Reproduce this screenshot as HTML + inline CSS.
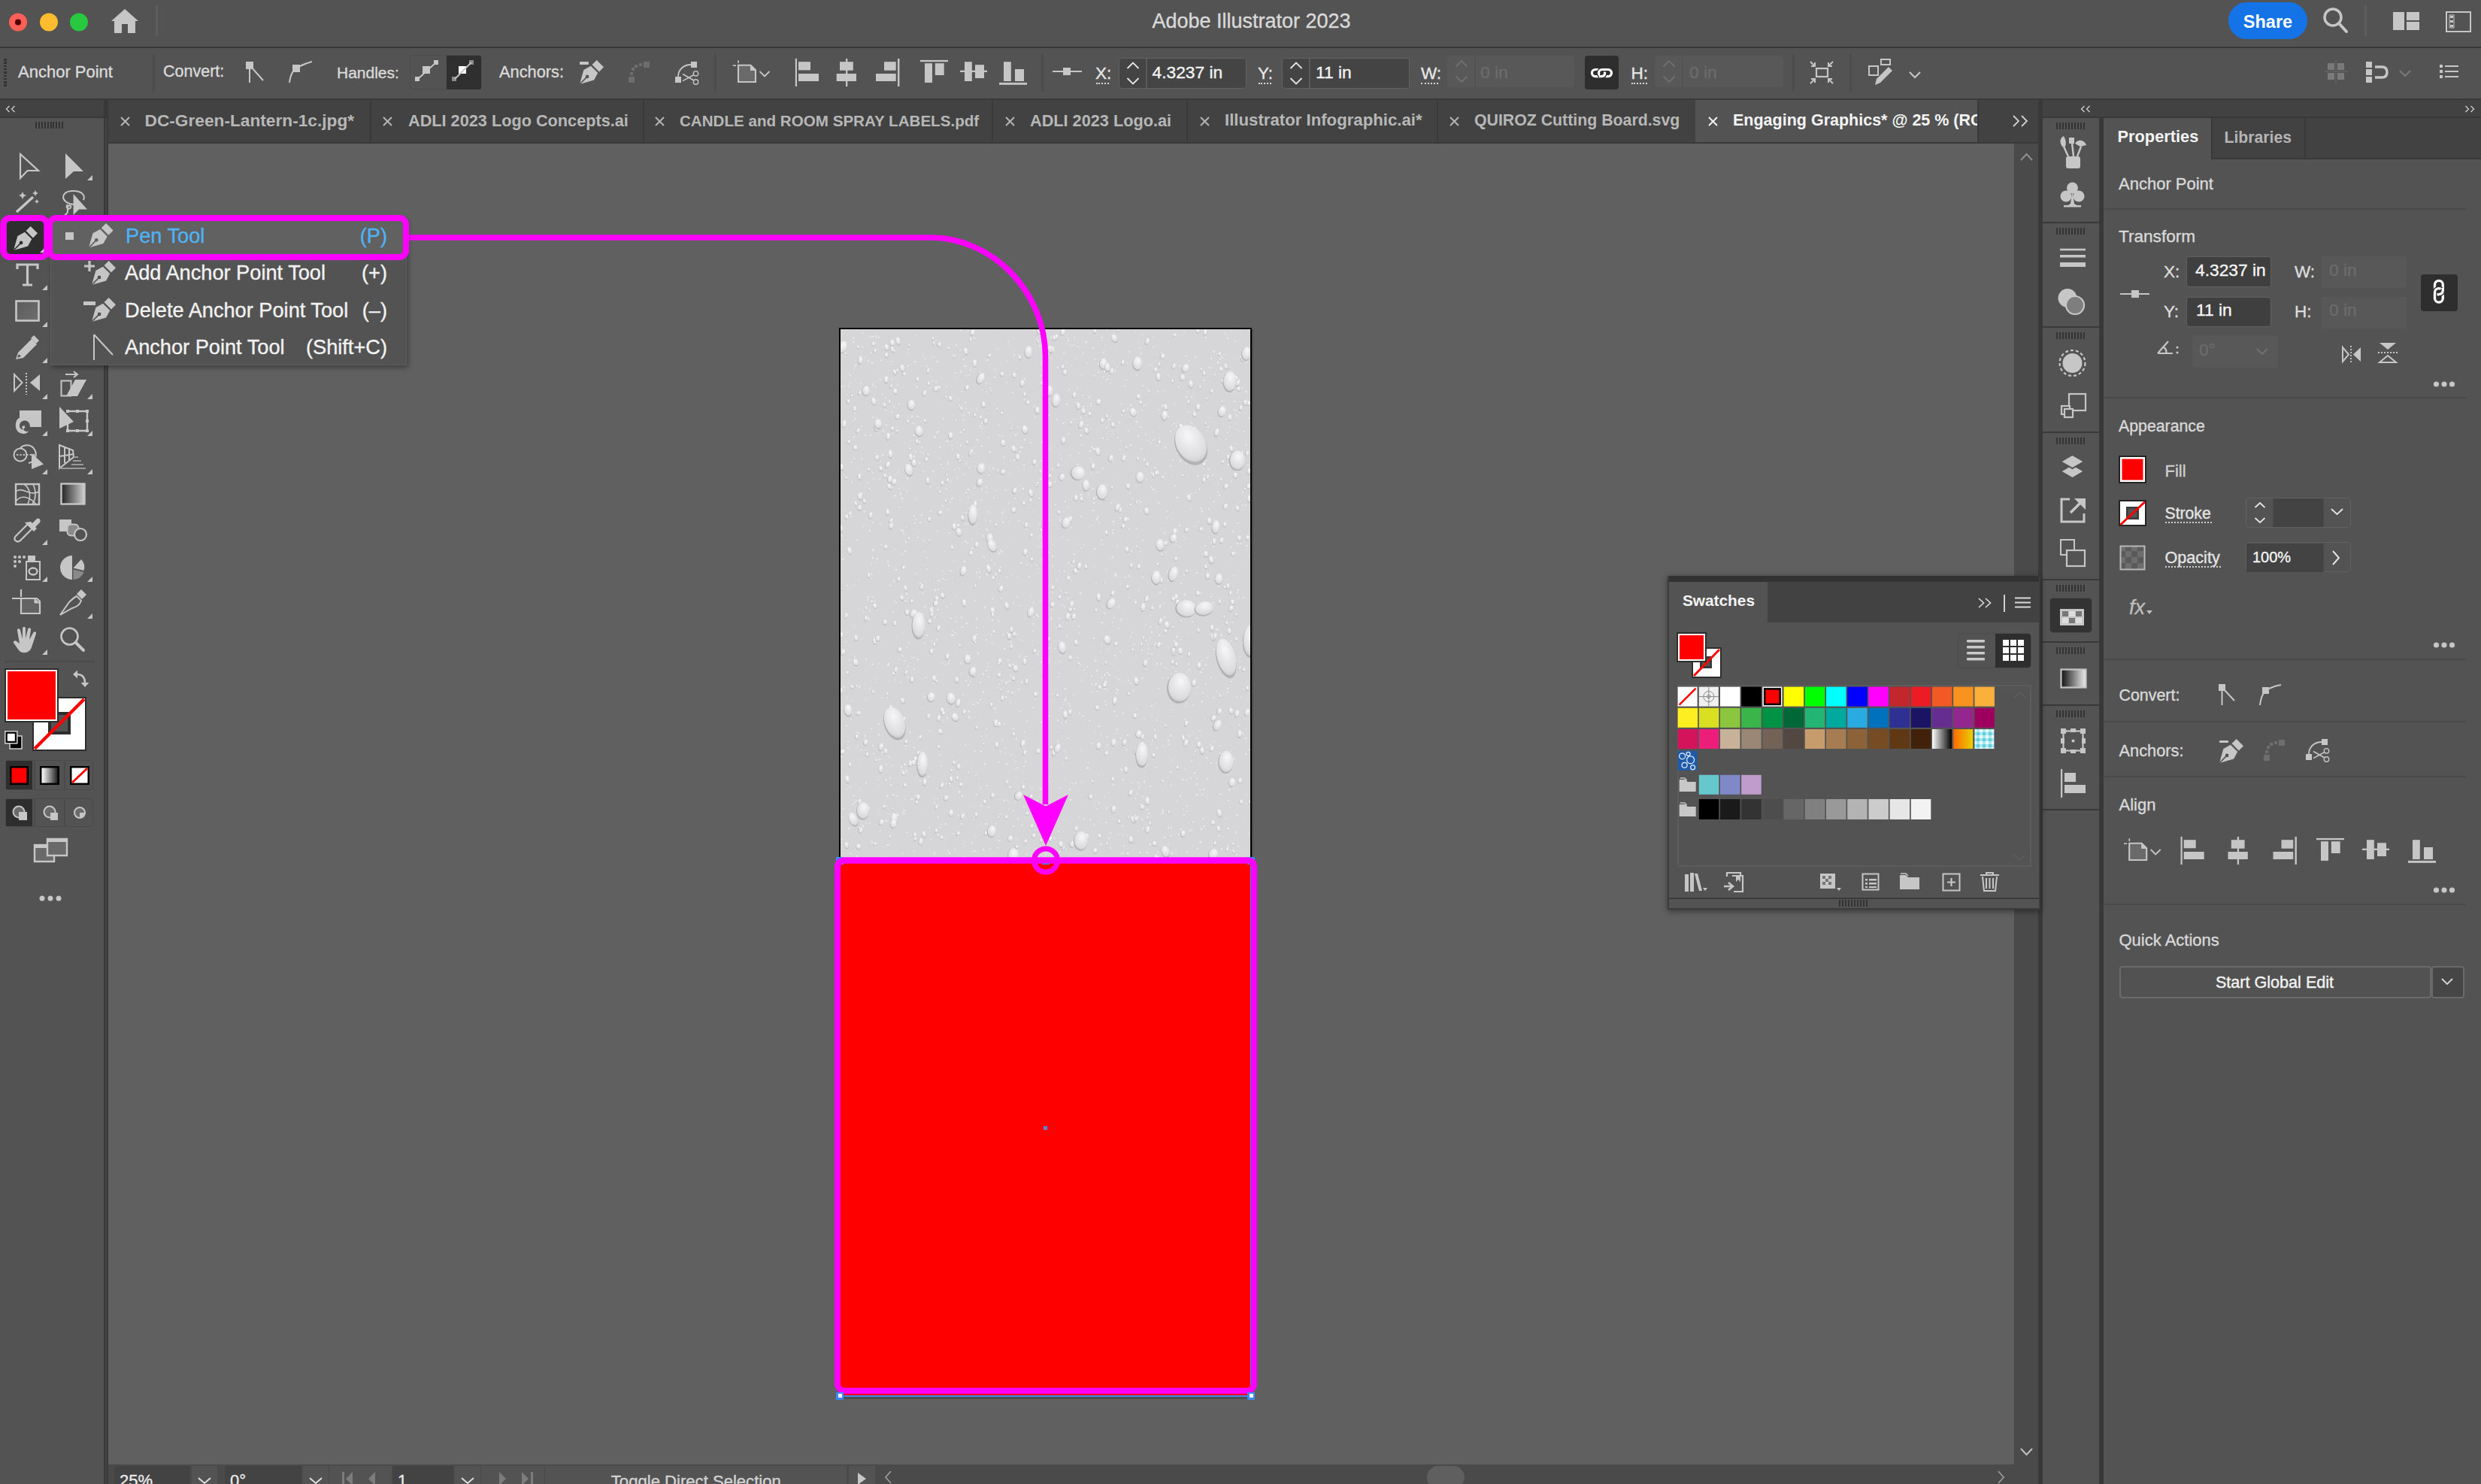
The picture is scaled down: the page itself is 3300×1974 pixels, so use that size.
<!DOCTYPE html><html><head><meta charset="utf-8"><style>
html,body{margin:0;padding:0;width:3300px;height:1974px;overflow:hidden;background:#535353}
.a{position:absolute}
.t{font-family:"Liberation Sans",sans-serif;white-space:pre;-webkit-text-stroke:0.35px currentColor}
svg{overflow:visible}
</style></head><body>
<div class="a" style="left:0px;top:0px;width:3300px;height:1974px;background:#535353;"></div>
<div class="a" style="left:0px;top:0px;width:3300px;height:62px;background:#535353;"></div>
<div class="a" style="left:0px;top:62px;width:3300px;height:2px;background:#393939;"></div>
<div class="a" style="left:0px;top:64px;width:3300px;height:67px;background:#535353;"></div>
<div class="a" style="left:0px;top:131px;width:3300px;height:2px;background:#393939;"></div>
<div class="a" style="left:0px;top:133px;width:138px;height:1841px;background:#535353;"></div>
<div class="a" style="left:0px;top:133px;width:138px;height:22px;background:#424242;"></div>
<div class="a" style="left:0px;top:155px;width:138px;height:2px;background:#393939;"></div>
<div class="a" style="left:138px;top:133px;width:6px;height:1841px;background:#393939;"></div>
<div class="a" style="left:140px;top:157px;width:2px;height:1817px;background:#444444;"></div>
<div class="a" style="left:144px;top:133px;width:2567px;height:56px;background:#424242;"></div>
<div class="a" style="left:144px;top:189px;width:2567px;height:2px;background:#393939;"></div>
<div class="a" style="left:144px;top:191px;width:2535px;height:1757px;background:#606060;"></div>
<div class="a" style="left:2679px;top:191px;width:32px;height:1757px;background:#4a4a4a;"></div>
<div class="a" style="left:144px;top:1948px;width:2567px;height:26px;background:#4a4a4a;"></div>
<div class="a" style="left:2711px;top:133px;width:6px;height:1841px;background:#393939;"></div>
<div class="a" style="left:2717px;top:133px;width:75px;height:1841px;background:#535353;"></div>
<div class="a" style="left:2792px;top:155px;width:6px;height:1819px;background:#393939;"></div>
<div class="a" style="left:2798px;top:133px;width:502px;height:1841px;background:#535353;"></div>
<div class="a" style="left:2717px;top:133px;width:583px;height:22px;background:#424242;"></div>
<div class="a" style="left:2717px;top:155px;width:583px;height:2px;background:#393939;"></div>
<svg class="a" style="left:0px;top:0px;" width="130" height="60" viewBox="0 0 130 60"><circle cx="24" cy="29.5" r="12" fill="#fe5f57"/><circle cx="24" cy="29.5" r="4" fill="#4e0002"/><circle cx="65" cy="29.5" r="12" fill="#febc2e"/><circle cx="105" cy="29.5" r="12" fill="#28c840"/></svg>
<svg class="a" style="left:146px;top:10px;" width="40" height="36" viewBox="0 0 40 36"><path d="M20 2 L38 18 L34 18 L34 34 L24 34 L24 22 L16 22 L16 34 L6 34 L6 18 L2 18 Z" fill="#c6c6c6"/></svg>
<div class="a" style="left:207px;top:7px;width:3px;height:41px;background:#5d5d5d;"></div>
<div class="a t" style="left:664.5px;width:2000px;text-align:center;top:14.8px;font-size:27px;line-height:27px;color:#d9d9d9;font-weight:400;">Adobe Illustrator 2023</div>
<div class="a" style="left:2964px;top:3px;width:105px;height:49px;border-radius:25px;background:#1473e6"></div>
<div class="a t" style="left:2016.5px;width:2000px;text-align:center;top:18.0px;font-size:23.5px;line-height:23.5px;color:#ffffff;font-weight:700;-webkit-text-stroke:0;">Share</div>
<svg class="a" style="left:3088px;top:8px;" width="40" height="40" viewBox="0 0 40 40"><circle cx="15" cy="15" r="11" fill="none" stroke="#c6c6c6" stroke-width="3.5"/><path d="M23 23 L33 34" stroke="#c6c6c6" stroke-width="4" stroke-linecap="round"/></svg>
<div class="a" style="left:3145px;top:7px;width:3px;height:41px;background:#5d5d5d;"></div>
<svg class="a" style="left:3183px;top:16px;" width="36" height="25" viewBox="0 0 36 25"><rect x="0" y="0" width="15" height="24" fill="#c6c6c6"/><rect x="18" y="0" width="17" height="11" fill="#c6c6c6"/><rect x="18" y="13" width="17" height="11" fill="#c6c6c6"/></svg>
<svg class="a" style="left:3253px;top:15px;" width="34" height="28" viewBox="0 0 34 28"><rect x="1" y="1" width="32" height="26" fill="none" stroke="#c6c6c6" stroke-width="2"/><rect x="6" y="6" width="4" height="3" fill="#c6c6c6"/><rect x="6" y="12" width="4" height="3" fill="#c6c6c6"/><rect x="6" y="18" width="4" height="3" fill="#c6c6c6"/><rect x="5" y="5" width="6" height="17" fill="none" stroke="#c6c6c6" stroke-width="1"/></svg>
<div class="a" style="left:5px;top:78.0px;width:4px;height:2.5px;background:#333333;"></div>
<div class="a" style="left:5px;top:82.3px;width:4px;height:2.5px;background:#333333;"></div>
<div class="a" style="left:5px;top:86.6px;width:4px;height:2.5px;background:#333333;"></div>
<div class="a" style="left:5px;top:90.9px;width:4px;height:2.5px;background:#333333;"></div>
<div class="a" style="left:5px;top:95.2px;width:4px;height:2.5px;background:#333333;"></div>
<div class="a" style="left:5px;top:99.5px;width:4px;height:2.5px;background:#333333;"></div>
<div class="a" style="left:5px;top:103.8px;width:4px;height:2.5px;background:#333333;"></div>
<div class="a" style="left:5px;top:108.1px;width:4px;height:2.5px;background:#333333;"></div>
<div class="a" style="left:5px;top:112.4px;width:4px;height:2.5px;background:#333333;"></div>
<div class="a t" style="left:24px;top:85.3px;font-size:22px;line-height:22px;color:#dadada;font-weight:400;">Anchor Point</div>
<div class="a" style="left:203px;top:72px;width:3px;height:50px;background:#4c4c4c;"></div>
<div class="a t" style="left:217px;top:85.2px;font-size:21.5px;line-height:21.5px;color:#dadada;font-weight:400;">Convert:</div>
<svg class="a" style="left:326px;top:80px;" width="28" height="32" viewBox="0 0 28 32"><rect x="1" y="2" width="10" height="10" fill="#c6c6c6"/><path d="M6 12 L6 30 M9 10 L24 27" stroke="#c6c6c6" stroke-width="2" fill="none"/></svg>
<svg class="a" style="left:383px;top:80px;" width="36" height="32" viewBox="0 0 36 32"><rect x="6" y="6" width="10" height="10" fill="#c6c6c6"/><path d="M2 30 Q4 12 16 8 Q24 4 32 2" stroke="#c6c6c6" stroke-width="2" fill="none"/></svg>
<div class="a t" style="left:448px;top:85.7px;font-size:21px;line-height:21px;color:#dadada;font-weight:400;">Handles:</div>
<div class="a" style="left:544.5px;top:73px;width:94px;height:44px;border:1.5px solid #4c4c4c;border-radius:4px;background:#535353"></div>
<div class="a" style="left:594px;top:74px;width:46px;height:45px;border-radius:0 3px 3px 0;background:#2f2f2f"></div>
<svg class="a" style="left:548px;top:78px;" width="44" height="38" viewBox="0 0 44 38"><rect x="4" y="24" width="6" height="6" fill="#c6c6c6"/><rect x="14" y="10" width="10" height="10" fill="#c6c6c6"/><rect x="29" y="2" width="6" height="6" fill="#c6c6c6"/><path d="M8 27 L32 5" stroke="#c6c6c6" stroke-width="1.8"/></svg>
<svg class="a" style="left:597px;top:78px;" width="44" height="38" viewBox="0 0 44 38"><rect x="4" y="24" width="6" height="6" fill="#8a8a8a"/><rect x="13" y="10" width="10" height="10" fill="#ffffff"/><rect x="27" y="2" width="6" height="6" fill="#8a8a8a"/><path d="M8 27 L30 5" stroke="#c6c6c6" stroke-width="1.8"/></svg>
<div class="a t" style="left:664px;top:85.0px;font-size:21.8px;line-height:21.8px;color:#dadada;font-weight:400;">Anchors:</div>
<div class="a" style="left:771px;top:82.3px;width:12px;height:3.6px;background:#c6c6c6;border-radius:1px"></div>
<svg class="a" style="left:771px;top:80.3px;" width="32" height="32" viewBox="0 0 32 32"><polygon points="22.65,0.00 32.00,9.35 25.89,15.46 16.54,6.11" fill="#c6c6c6"/><polygon points="14.89,7.77 24.23,17.11 19.06,26.61 0.00,32.00 5.39,12.94" fill="#c6c6c6"/><polyline points="0.00,32.00 9.35,22.65" stroke="#535353" stroke-width="1.63" fill="none"/><circle cx="10.07" cy="21.93" r="2.34" fill="#535353"/></svg>
<svg class="a" style="left:836px;top:82px;" width="30" height="30" viewBox="0 0 30 30"><rect x="0" y="20" width="8" height="8" fill="#6e6e6e"/><rect x="2" y="14" width="4" height="4" fill="#6e6e6e"/><rect x="4" y="8" width="4" height="4" fill="#6e6e6e"/><rect x="8" y="4" width="4" height="4" fill="#6e6e6e"/><rect x="14" y="2" width="4" height="4" fill="#6e6e6e"/><rect x="20" y="0" width="8" height="8" fill="#6e6e6e"/></svg>
<svg class="a" style="left:898px;top:82px;" width="32" height="32" viewBox="0 0 32 32"><rect x="0" y="20" width="8" height="8" fill="#c6c6c6"/><rect x="21" y="0" width="8" height="8" fill="#c6c6c6"/><path d="M4 20 C4 10 12 4 21 4" stroke="#c6c6c6" stroke-width="1.8" fill="none"/><path d="M10 16.5 L25 25 M10 25.6 L25 17.5" stroke="#c6c6c6" stroke-width="1.6"/><circle cx="27.5" cy="15.8" r="3.2" fill="none" stroke="#c6c6c6" stroke-width="1.4"/><circle cx="27.5" cy="27" r="3.2" fill="none" stroke="#c6c6c6" stroke-width="1.4"/></svg>
<div class="a" style="left:950px;top:72px;width:3px;height:50px;background:#4c4c4c;"></div>
<svg class="a" style="left:0;top:0;overflow:visible" width="1" height="1"><rect x="981.30" y="80.20" width="1.60" height="3.80" fill="#c6c6c6"/><rect x="974.80" y="86.40" width="4.20" height="1.60" fill="#c6c6c6"/><path d="M982.00 86.80 L998.50 86.80 L1005.00 93.30 L1005.00 109.00 L982.00 109.00 Z" fill="#6a6a6a" stroke="#c6c6c6" stroke-width="2.1"/><path d="M998.00 86.00 L1006.00 94.00 L998.00 94.00 Z" fill="#c6c6c6"/><path d="M1010.50 95.00 L1017.00 101.50 L1023.50 95.00" fill="none" stroke="#c6c6c6" stroke-width="1.8"/><rect x="1057.80" y="77.90" width="2.20" height="37.10" fill="#c6c6c6"/><rect x="1062.00" y="82.20" width="16.00" height="11.10" fill="#c6c6c6"/><rect x="1062.00" y="98.00" width="27.00" height="10.00" fill="#c6c6c6"/><rect x="1125.00" y="78.00" width="2.30" height="37.00" fill="#c6c6c6"/><rect x="1117.00" y="82.20" width="17.80" height="11.50" fill="#c6c6c6"/><rect x="1112.70" y="98.00" width="26.30" height="10.00" fill="#c6c6c6"/><rect x="1194.00" y="78.00" width="2.40" height="37.00" fill="#c6c6c6"/><rect x="1176.00" y="82.20" width="15.70" height="11.50" fill="#c6c6c6"/><rect x="1165.00" y="98.00" width="26.70" height="10.00" fill="#c6c6c6"/><rect x="1224.00" y="79.90" width="37.00" height="2.30" fill="#c6c6c6"/><rect x="1230.00" y="84.20" width="10.00" height="25.70" fill="#c6c6c6"/><rect x="1243.80" y="84.20" width="11.90" height="15.80" fill="#c6c6c6"/><rect x="1277.00" y="93.70" width="36.00" height="2.30" fill="#c6c6c6"/><rect x="1283.00" y="82.20" width="9.80" height="25.80" fill="#c6c6c6"/><rect x="1297.00" y="86.20" width="12.00" height="17.80" fill="#c6c6c6"/><rect x="1329.00" y="109.90" width="37.00" height="2.90" fill="#c6c6c6"/><rect x="1335.00" y="82.20" width="9.80" height="25.80" fill="#c6c6c6"/><rect x="1350.00" y="92.00" width="12.00" height="16.00" fill="#c6c6c6"/></svg>
<div class="a" style="left:1385px;top:72px;width:3px;height:50px;background:#4c4c4c;"></div>
<div class="a" style="left:1400px;top:93.7px;width:39px;height:2.3px;background:#c6c6c6;"></div>
<div class="a" style="left:1413.7px;top:90px;width:10px;height:10px;background:#c6c6c6;"></div>
<div class="a t" style="left:1457px;top:86.9px;font-size:22.5px;line-height:22.5px;color:#e6e6e6;font-weight:400;">X:</div>
<div class="a" style="left:1458px;top:110px;width:17px;height:0;border-top:2px dotted #d8d8d8"></div>
<div class="a" style="left:1487.5px;top:76.5px;width:168px;height:39px;border:1.5px solid #616161;border-radius:4px;background:#444444"></div>
<div class="a" style="left:1523.5px;top:78.0px;width:2px;height:39px;background:#5a5a5a;"></div>
<svg class="a" style="left:1487.5px;top:76.5px;" width="38" height="42" viewBox="0 0 38 42"><path d="M1499.0 14.0 L1506.5 6.5 L1514.0 14.0 M1499.0 27.0 L1506.5 34.5 L1514.0 27.0" transform="translate(-1487.5 0)" fill="none" stroke="#e6e6e6" stroke-width="1.8"/></svg>
<div class="a t" style="left:1532.5px;top:84.6px;font-size:22.8px;line-height:22.8px;color:#f4f4f4;font-weight:400;">4.3237 in</div>
<div class="a t" style="left:1673px;top:86.9px;font-size:22.5px;line-height:22.5px;color:#e6e6e6;font-weight:400;">Y:</div>
<div class="a" style="left:1674px;top:110px;width:17px;height:0;border-top:2px dotted #d8d8d8"></div>
<div class="a" style="left:1704.5px;top:76.5px;width:168px;height:39px;border:1.5px solid #616161;border-radius:4px;background:#444444"></div>
<div class="a" style="left:1740.5px;top:78.0px;width:2px;height:39px;background:#5a5a5a;"></div>
<svg class="a" style="left:1704.5px;top:76.5px;" width="38" height="42" viewBox="0 0 38 42"><path d="M1716.0 14.0 L1723.5 6.5 L1731.0 14.0 M1716.0 27.0 L1723.5 34.5 L1731.0 27.0" transform="translate(-1704.5 0)" fill="none" stroke="#e6e6e6" stroke-width="1.8"/></svg>
<div class="a t" style="left:1750px;top:84.6px;font-size:22.8px;line-height:22.8px;color:#f4f4f4;font-weight:400;">11 in</div>
<div class="a t" style="left:1890px;top:86.9px;font-size:22.5px;line-height:22.5px;color:#e6e6e6;font-weight:400;">W:</div>
<div class="a" style="left:1890px;top:110px;width:23px;height:0;border-top:2px dotted #d8d8d8"></div>
<div class="a" style="left:1925px;top:74px;width:167px;height:40px;border:1.5px solid #585858;border-radius:4px;background:#585858"></div>
<div class="a" style="left:1961px;top:75.5px;width:2px;height:40px;background:#525252;"></div>
<svg class="a" style="left:1925px;top:74px;" width="38" height="43" viewBox="0 0 38 43"><path d="M1936.5 14.5 L1944.0 7.0 L1951.5 14.5 M1936.5 27.5 L1944.0 35.0 L1951.5 27.5" transform="translate(-1925 0)" fill="none" stroke="#707070" stroke-width="1.8"/></svg>
<div class="a t" style="left:1969px;top:84.6px;font-size:22.8px;line-height:22.8px;color:#6c6c6c;font-weight:400;">0 in</div>
<div class="a" style="left:2108px;top:74px;width:45px;height:45px;border-radius:4px;background:#2e2e2e"></div>
<svg class="a" style="left:2115px;top:88.5px;" width="32" height="16" viewBox="0 0 32 16"><rect x="2.4" y="3.5" width="17.2" height="9.1" rx="4.55" fill="none" stroke="#fff" stroke-width="3.2"/><rect x="11.5" y="3.5" width="17" height="9.1" rx="4.55" fill="none" stroke="#2e2e2e" stroke-width="6"/><rect x="11.5" y="3.5" width="17" height="9.1" rx="4.55" fill="none" stroke="#fff" stroke-width="3.2"/><path d="M13 12.6 L15 12.6 Q19.6 12.6 19.6 8" fill="none" stroke="#2e2e2e" stroke-width="6"/><path d="M12 12.6 L15 12.6 Q19.6 12.6 19.6 8" fill="none" stroke="#fff" stroke-width="3.2"/></svg>
<div class="a t" style="left:2169.5px;top:86.9px;font-size:22.5px;line-height:22.5px;color:#e6e6e6;font-weight:400;">H:</div>
<div class="a" style="left:2170px;top:110px;width:21px;height:0;border-top:2px dotted #d8d8d8"></div>
<div class="a" style="left:2201px;top:74px;width:169px;height:40px;border:1.5px solid #585858;border-radius:4px;background:#585858"></div>
<div class="a" style="left:2237px;top:75.5px;width:2px;height:40px;background:#525252;"></div>
<svg class="a" style="left:2201px;top:74px;" width="38" height="43" viewBox="0 0 38 43"><path d="M2212.5 14.5 L2220.0 7.0 L2227.5 14.5 M2212.5 27.5 L2220.0 35.0 L2227.5 27.5" transform="translate(-2201 0)" fill="none" stroke="#707070" stroke-width="1.8"/></svg>
<div class="a t" style="left:2247px;top:84.6px;font-size:22.8px;line-height:22.8px;color:#6c6c6c;font-weight:400;">0 in</div>
<div class="a" style="left:2384px;top:72px;width:3px;height:50px;background:#4c4c4c;"></div>
<svg class="a" style="left:2406px;top:80px;" width="36" height="34" viewBox="0 0 36 34"><rect x="10" y="11" width="15" height="11" fill="none" stroke="#c6c6c6" stroke-width="2.2"/><path d="M2 2 L8 8 M8 3 L8 8 L3 8 M32 2 L26 8 M26 3 L26 8 L31 8 M2 31 L8 25 M3 25 L8 25 L8 30 M32 31 L26 25 M31 25 L26 25 L26 30" stroke="#c6c6c6" stroke-width="2" fill="none"/></svg>
<div class="a" style="left:2460px;top:72px;width:3px;height:50px;background:#4c4c4c;"></div>
<svg class="a" style="left:2484px;top:78px;" width="38" height="38" viewBox="0 0 38 38"><rect x="2" y="10" width="12" height="12" fill="none" stroke="#c6c6c6" stroke-width="2"/><rect x="18" y="1" width="12" height="7" fill="none" stroke="#c6c6c6" stroke-width="2"/><path d="M10 35 L12 27 L28 11 L33 16 L17 32 Z" fill="#c6c6c6"/></svg>
<svg class="a" style="left:2538px;top:93px;" width="22" height="14" viewBox="0 0 22 14"><path d="M2 3 L9 10 L16 3" stroke="#c6c6c6" stroke-width="2.2" fill="none"/></svg>
<svg class="a" style="left:3092px;top:80px;" width="34" height="32" viewBox="0 0 34 32"><rect x="4" y="4" width="9" height="9" fill="#7a7a7a"/><rect x="17" y="4" width="9" height="9" fill="#7a7a7a"/><rect x="4" y="17" width="9" height="9" fill="#7a7a7a"/><rect x="17" y="17" width="9" height="9" fill="#7a7a7a"/><path d="M0 15 L31 15 M15 0 L15 31" stroke="#6a6a6a" stroke-width="1"/></svg>
<svg class="a" style="left:3146px;top:81px;" width="34" height="30" viewBox="0 0 34 30"><rect x="1" y="1" width="8" height="8" fill="#c6c6c6"/><rect x="1" y="11" width="8" height="8" fill="#c6c6c6"/><rect x="1" y="21" width="8" height="8" fill="#c6c6c6"/><path d="M13 8 L22 8 Q29 8 29 15 Q29 22 22 22 L13 22" fill="none" stroke="#c6c6c6" stroke-width="3.5"/></svg>
<svg class="a" style="left:3190px;top:92px;" width="20" height="12" viewBox="0 0 20 12"><path d="M2 2 L9 9 L16 2" stroke="#7a7a7a" stroke-width="2" fill="none"/></svg>
<svg class="a" style="left:3245px;top:86px;" width="28" height="20" viewBox="0 0 28 20"><rect x="0" y="0" width="4" height="4" fill="#c6c6c6"/><rect x="0" y="7" width="4" height="4" fill="#c6c6c6"/><rect x="0" y="14" width="4" height="4" fill="#c6c6c6"/><rect x="7" y="1" width="18" height="2" fill="#c6c6c6"/><rect x="7" y="8" width="18" height="2" fill="#c6c6c6"/><rect x="7" y="15" width="18" height="2" fill="#c6c6c6"/></svg>
<svg class="a" style="left:160px;top:155px;" width="13" height="13" viewBox="0 0 13 13"><path d="M1 1 L12 12 M12 1 L1 12" stroke="#b4b4b4" stroke-width="2"/></svg>
<div class="a t" style="left:192.5px;top:148.7px;font-size:22.7px;line-height:22.7px;color:#b7b7b7;font-weight:700;-webkit-text-stroke:0;">DC-Green-Lantern-1c.jpg*</div>
<div class="a" style="left:492px;top:133px;width:2px;height:56px;background:#393939;"></div>
<svg class="a" style="left:509px;top:155px;" width="13" height="13" viewBox="0 0 13 13"><path d="M1 1 L12 12 M12 1 L1 12" stroke="#b4b4b4" stroke-width="2"/></svg>
<div class="a t" style="left:543px;top:149.6px;font-size:21.7px;line-height:21.7px;color:#b7b7b7;font-weight:700;-webkit-text-stroke:0;">ADLI 2023 Logo Concepts.ai</div>
<div class="a" style="left:855px;top:133px;width:2px;height:56px;background:#393939;"></div>
<svg class="a" style="left:871px;top:155px;" width="13" height="13" viewBox="0 0 13 13"><path d="M1 1 L12 12 M12 1 L1 12" stroke="#b4b4b4" stroke-width="2"/></svg>
<div class="a t" style="left:904px;top:150.5px;font-size:20.6px;line-height:20.6px;color:#b7b7b7;font-weight:700;-webkit-text-stroke:0;">CANDLE and ROOM SPRAY LABELS.pdf</div>
<div class="a" style="left:1319px;top:133px;width:2px;height:56px;background:#393939;"></div>
<svg class="a" style="left:1337px;top:155px;" width="13" height="13" viewBox="0 0 13 13"><path d="M1 1 L12 12 M12 1 L1 12" stroke="#b4b4b4" stroke-width="2"/></svg>
<div class="a t" style="left:1370px;top:149.6px;font-size:21.7px;line-height:21.7px;color:#b7b7b7;font-weight:700;-webkit-text-stroke:0;">ADLI 2023 Logo.ai</div>
<div class="a" style="left:1578px;top:133px;width:2px;height:56px;background:#393939;"></div>
<svg class="a" style="left:1596px;top:155px;" width="13" height="13" viewBox="0 0 13 13"><path d="M1 1 L12 12 M12 1 L1 12" stroke="#b4b4b4" stroke-width="2"/></svg>
<div class="a t" style="left:1629px;top:149.1px;font-size:22.2px;line-height:22.2px;color:#b7b7b7;font-weight:700;-webkit-text-stroke:0;">Illustrator Infographic.ai*</div>
<div class="a" style="left:1911px;top:133px;width:2px;height:56px;background:#393939;"></div>
<svg class="a" style="left:1928px;top:155px;" width="13" height="13" viewBox="0 0 13 13"><path d="M1 1 L12 12 M12 1 L1 12" stroke="#b4b4b4" stroke-width="2"/></svg>
<div class="a t" style="left:1961px;top:149.9px;font-size:21.3px;line-height:21.3px;color:#b7b7b7;font-weight:700;-webkit-text-stroke:0;">QUIROZ Cutting Board.svg</div>
<div class="a" style="left:2255px;top:133px;width:2px;height:56px;background:#393939;"></div>
<div class="a" style="left:2255px;top:133px;width:375px;height:56px;background:#535353;"></div>
<div class="a" style="left:2630px;top:133px;width:2px;height:56px;background:#393939;"></div>
<svg class="a" style="left:2272px;top:155px;" width="13" height="13" viewBox="0 0 13 13"><path d="M1 1 L12 12 M12 1 L1 12" stroke="#f0f0f0" stroke-width="2"/></svg>
<div class="a" style="left:2305px;top:133px;width:325px;height:56px;overflow:hidden">
<div class="a t" style="left:0px;top:16.7px;font-size:21.5px;line-height:21.5px;color:#f4f4f4;font-weight:700;-webkit-text-stroke:0;">Engaging Graphics* @ 25 % (RGB/Preview)</div>
</div>
<svg class="a" style="left:2676px;top:152px;" width="26" height="18" viewBox="0 0 26 18"><path d="M2 2 L9 9 L2 16 M13 2 L20 9 L13 16" stroke="#d0d0d0" stroke-width="1.8" fill="none"/></svg>
<svg class="a" style="left:7px;top:140px;" width="16" height="11" viewBox="0 0 16 11"><path d="M5.5 1 L1.5 5 L5.5 9 M12.5 1 L8.5 5 L12.5 9" stroke="#d0d0d0" stroke-width="1.3" fill="none"/></svg>
<svg class="a" style="left:2767px;top:140px;" width="16" height="11" viewBox="0 0 16 11"><path d="M5.5 1 L1.5 5 L5.5 9 M12.5 1 L8.5 5 L12.5 9" stroke="#d0d0d0" stroke-width="1.3" fill="none"/></svg>
<svg class="a" style="left:3278px;top:140px;" width="16" height="11" viewBox="0 0 16 11"><path d="M1.5 1 L5.5 5 L1.5 9 M8.5 1 L12.5 5 L8.5 9" stroke="#d0d0d0" stroke-width="1.3" fill="none"/></svg>
<div class="a" style="left:1118px;top:438px;width:549px;height:1423px;background:#4e4e4e;"></div>
<div class="a" style="left:1116px;top:436px;width:549px;height:720px;background:#000000;"></div>
<svg class="a" style="left:1118px;top:438px;overflow:hidden" width="545" height="710" viewBox="0 0 545 710"><defs><radialGradient id="dg" cx="0.55" cy="0.3" r="0.75"><stop offset="0" stop-color="#f7f7f9"/><stop offset="0.45" stop-color="#e7e7e9"/><stop offset="0.8" stop-color="#dcdcde"/><stop offset="1" stop-color="#c6c6c8"/></radialGradient></defs><rect x="0" y="0" width="545" height="710" fill="#d6d6d8"/><circle cx="504" cy="674" r="1.2" fill="#eaeaec"/><circle cx="46" cy="420" r="0.8" fill="#eaeaec"/><circle cx="289" cy="93" r="0.7" fill="#eaeaec"/><circle cx="242" cy="157" r="0.9" fill="#eaeaec"/><circle cx="13" cy="61" r="1.1" fill="#eaeaec"/><circle cx="230" cy="364" r="1.1" fill="#eaeaec"/><circle cx="196" cy="41" r="1.1" fill="#eaeaec"/><circle cx="321" cy="467" r="1.0" fill="#eaeaec"/><circle cx="529" cy="258" r="1.1" fill="#eaeaec"/><circle cx="201" cy="406" r="1.0" fill="#eaeaec"/><circle cx="171" cy="61" r="0.9" fill="#eaeaec"/><circle cx="391" cy="419" r="0.9" fill="#eaeaec"/><circle cx="350" cy="129" r="0.6" fill="#eaeaec"/><circle cx="176" cy="579" r="0.7" fill="#eaeaec"/><circle cx="62" cy="70" r="0.5" fill="#eaeaec"/><circle cx="150" cy="407" r="1.2" fill="#eaeaec"/><circle cx="180" cy="262" r="0.7" fill="#eaeaec"/><circle cx="166" cy="552" r="0.9" fill="#eaeaec"/><circle cx="141" cy="76" r="1.1" fill="#eaeaec"/><circle cx="385" cy="588" r="0.7" fill="#eaeaec"/><circle cx="297" cy="652" r="1.0" fill="#eaeaec"/><circle cx="515" cy="119" r="1.3" fill="#eaeaec"/><circle cx="30" cy="296" r="0.5" fill="#eaeaec"/><circle cx="441" cy="488" r="1.3" fill="#eaeaec"/><circle cx="439" cy="674" r="0.9" fill="#eaeaec"/><circle cx="539" cy="532" r="0.8" fill="#eaeaec"/><circle cx="531" cy="268" r="0.7" fill="#eaeaec"/><circle cx="41" cy="331" r="0.7" fill="#eaeaec"/><circle cx="509" cy="675" r="0.7" fill="#eaeaec"/><circle cx="56" cy="376" r="0.6" fill="#eaeaec"/><circle cx="296" cy="577" r="0.7" fill="#eaeaec"/><circle cx="230" cy="640" r="0.9" fill="#eaeaec"/><circle cx="187" cy="634" r="1.2" fill="#eaeaec"/><circle cx="488" cy="488" r="0.8" fill="#eaeaec"/><circle cx="378" cy="589" r="1.0" fill="#eaeaec"/><circle cx="130" cy="210" r="0.8" fill="#eaeaec"/><circle cx="421" cy="396" r="0.9" fill="#eaeaec"/><circle cx="450" cy="77" r="1.0" fill="#eaeaec"/><circle cx="181" cy="397" r="1.2" fill="#eaeaec"/><circle cx="135" cy="676" r="0.6" fill="#eaeaec"/><circle cx="306" cy="385" r="0.7" fill="#eaeaec"/><circle cx="306" cy="334" r="0.9" fill="#eaeaec"/><circle cx="392" cy="3" r="0.8" fill="#eaeaec"/><circle cx="428" cy="101" r="1.2" fill="#eaeaec"/><circle cx="111" cy="484" r="0.6" fill="#eaeaec"/><circle cx="245" cy="300" r="0.6" fill="#eaeaec"/><circle cx="381" cy="341" r="1.1" fill="#eaeaec"/><circle cx="294" cy="395" r="0.9" fill="#eaeaec"/><circle cx="162" cy="638" r="0.6" fill="#eaeaec"/><circle cx="478" cy="613" r="0.9" fill="#eaeaec"/><circle cx="423" cy="478" r="1.0" fill="#eaeaec"/><circle cx="159" cy="227" r="0.8" fill="#eaeaec"/><circle cx="165" cy="681" r="0.8" fill="#eaeaec"/><circle cx="211" cy="298" r="1.2" fill="#eaeaec"/><circle cx="260" cy="393" r="0.7" fill="#eaeaec"/><circle cx="152" cy="63" r="0.7" fill="#eaeaec"/><circle cx="144" cy="605" r="0.9" fill="#eaeaec"/><circle cx="60" cy="329" r="0.6" fill="#eaeaec"/><circle cx="308" cy="314" r="1.2" fill="#eaeaec"/><circle cx="141" cy="604" r="0.7" fill="#eaeaec"/><circle cx="536" cy="450" r="0.5" fill="#eaeaec"/><circle cx="440" cy="196" r="0.8" fill="#eaeaec"/><circle cx="80" cy="595" r="0.6" fill="#eaeaec"/><circle cx="402" cy="281" r="1.0" fill="#eaeaec"/><circle cx="160" cy="56" r="1.2" fill="#eaeaec"/><circle cx="357" cy="120" r="1.3" fill="#eaeaec"/><circle cx="497" cy="130" r="0.5" fill="#eaeaec"/><circle cx="333" cy="99" r="1.1" fill="#eaeaec"/><circle cx="256" cy="503" r="1.0" fill="#eaeaec"/><circle cx="420" cy="583" r="1.0" fill="#eaeaec"/><circle cx="322" cy="232" r="0.6" fill="#eaeaec"/><circle cx="50" cy="608" r="0.7" fill="#eaeaec"/><circle cx="232" cy="225" r="1.0" fill="#eaeaec"/><circle cx="291" cy="610" r="0.8" fill="#eaeaec"/><circle cx="197" cy="462" r="1.1" fill="#eaeaec"/><circle cx="504" cy="221" r="1.2" fill="#eaeaec"/><circle cx="535" cy="697" r="0.6" fill="#eaeaec"/><circle cx="207" cy="550" r="1.2" fill="#eaeaec"/><circle cx="22" cy="280" r="1.1" fill="#eaeaec"/><circle cx="413" cy="380" r="0.7" fill="#eaeaec"/><circle cx="222" cy="42" r="0.8" fill="#eaeaec"/><circle cx="233" cy="584" r="1.0" fill="#eaeaec"/><circle cx="226" cy="175" r="0.8" fill="#eaeaec"/><circle cx="366" cy="316" r="0.6" fill="#eaeaec"/><circle cx="448" cy="409" r="1.3" fill="#eaeaec"/><circle cx="292" cy="442" r="0.8" fill="#eaeaec"/><circle cx="332" cy="652" r="1.3" fill="#eaeaec"/><circle cx="360" cy="305" r="0.6" fill="#eaeaec"/><circle cx="458" cy="278" r="0.8" fill="#eaeaec"/><circle cx="31" cy="24" r="0.8" fill="#eaeaec"/><circle cx="531" cy="526" r="1.1" fill="#eaeaec"/><circle cx="364" cy="194" r="0.6" fill="#eaeaec"/><circle cx="328" cy="45" r="1.0" fill="#eaeaec"/><circle cx="280" cy="385" r="0.6" fill="#eaeaec"/><circle cx="37" cy="336" r="0.6" fill="#eaeaec"/><circle cx="350" cy="220" r="1.0" fill="#eaeaec"/><circle cx="409" cy="431" r="0.9" fill="#eaeaec"/><circle cx="108" cy="247" r="1.3" fill="#eaeaec"/><circle cx="146" cy="202" r="0.9" fill="#eaeaec"/><circle cx="298" cy="561" r="0.7" fill="#eaeaec"/><circle cx="525" cy="16" r="1.1" fill="#eaeaec"/><circle cx="311" cy="640" r="0.6" fill="#eaeaec"/><circle cx="376" cy="673" r="1.0" fill="#eaeaec"/><circle cx="61" cy="654" r="1.3" fill="#eaeaec"/><circle cx="60" cy="587" r="0.6" fill="#eaeaec"/><circle cx="44" cy="565" r="1.1" fill="#eaeaec"/><circle cx="522" cy="449" r="0.9" fill="#eaeaec"/><circle cx="148" cy="407" r="1.3" fill="#eaeaec"/><circle cx="352" cy="622" r="0.7" fill="#eaeaec"/><circle cx="401" cy="520" r="0.6" fill="#eaeaec"/><circle cx="447" cy="125" r="0.7" fill="#eaeaec"/><circle cx="33" cy="470" r="0.6" fill="#eaeaec"/><circle cx="532" cy="0" r="1.1" fill="#eaeaec"/><circle cx="414" cy="404" r="1.0" fill="#eaeaec"/><circle cx="435" cy="452" r="0.6" fill="#eaeaec"/><circle cx="434" cy="251" r="1.0" fill="#eaeaec"/><circle cx="279" cy="642" r="0.8" fill="#eaeaec"/><circle cx="465" cy="58" r="0.8" fill="#eaeaec"/><circle cx="365" cy="434" r="1.2" fill="#eaeaec"/><circle cx="113" cy="571" r="1.1" fill="#eaeaec"/><circle cx="78" cy="99" r="1.0" fill="#eaeaec"/><circle cx="532" cy="436" r="0.8" fill="#eaeaec"/><circle cx="276" cy="575" r="0.9" fill="#eaeaec"/><circle cx="293" cy="421" r="1.2" fill="#eaeaec"/><circle cx="436" cy="596" r="0.7" fill="#eaeaec"/><circle cx="327" cy="584" r="1.1" fill="#eaeaec"/><circle cx="519" cy="650" r="0.6" fill="#eaeaec"/><circle cx="277" cy="254" r="0.7" fill="#eaeaec"/><circle cx="273" cy="698" r="1.1" fill="#eaeaec"/><circle cx="54" cy="176" r="0.8" fill="#eaeaec"/><circle cx="482" cy="326" r="0.6" fill="#eaeaec"/><circle cx="300" cy="176" r="0.5" fill="#eaeaec"/><circle cx="323" cy="704" r="1.1" fill="#eaeaec"/><circle cx="401" cy="108" r="0.9" fill="#eaeaec"/><circle cx="347" cy="539" r="0.9" fill="#eaeaec"/><circle cx="29" cy="659" r="0.7" fill="#eaeaec"/><circle cx="402" cy="330" r="1.1" fill="#eaeaec"/><circle cx="184" cy="66" r="0.8" fill="#eaeaec"/><circle cx="262" cy="563" r="0.8" fill="#eaeaec"/><circle cx="363" cy="267" r="1.1" fill="#eaeaec"/><circle cx="95" cy="625" r="1.3" fill="#eaeaec"/><circle cx="13" cy="609" r="1.1" fill="#eaeaec"/><circle cx="378" cy="75" r="1.1" fill="#eaeaec"/><circle cx="421" cy="445" r="1.3" fill="#eaeaec"/><circle cx="516" cy="450" r="1.2" fill="#eaeaec"/><circle cx="78" cy="212" r="0.9" fill="#eaeaec"/><circle cx="285" cy="677" r="1.0" fill="#eaeaec"/><circle cx="339" cy="441" r="1.3" fill="#eaeaec"/><circle cx="218" cy="525" r="1.0" fill="#eaeaec"/><circle cx="219" cy="241" r="0.6" fill="#eaeaec"/><circle cx="6" cy="239" r="0.7" fill="#eaeaec"/><circle cx="44" cy="345" r="0.8" fill="#eaeaec"/><circle cx="505" cy="554" r="1.0" fill="#eaeaec"/><circle cx="462" cy="195" r="0.6" fill="#eaeaec"/><circle cx="332" cy="162" r="1.3" fill="#eaeaec"/><circle cx="232" cy="629" r="0.7" fill="#eaeaec"/><circle cx="51" cy="445" r="1.1" fill="#eaeaec"/><circle cx="140" cy="658" r="1.3" fill="#eaeaec"/><circle cx="375" cy="697" r="1.3" fill="#eaeaec"/><circle cx="81" cy="519" r="1.1" fill="#eaeaec"/><circle cx="399" cy="241" r="0.9" fill="#eaeaec"/><circle cx="320" cy="603" r="0.5" fill="#eaeaec"/><circle cx="204" cy="224" r="1.1" fill="#eaeaec"/><circle cx="64" cy="44" r="0.6" fill="#eaeaec"/><circle cx="63" cy="309" r="1.2" fill="#eaeaec"/><circle cx="194" cy="72" r="1.0" fill="#eaeaec"/><circle cx="181" cy="406" r="1.1" fill="#eaeaec"/><circle cx="248" cy="521" r="1.0" fill="#eaeaec"/><circle cx="464" cy="541" r="1.2" fill="#eaeaec"/><circle cx="407" cy="200" r="0.9" fill="#eaeaec"/><circle cx="421" cy="557" r="1.1" fill="#eaeaec"/><circle cx="459" cy="585" r="0.9" fill="#eaeaec"/><circle cx="349" cy="31" r="0.9" fill="#eaeaec"/><circle cx="396" cy="649" r="1.2" fill="#eaeaec"/><circle cx="239" cy="163" r="1.2" fill="#eaeaec"/><circle cx="358" cy="136" r="0.5" fill="#eaeaec"/><circle cx="479" cy="409" r="0.6" fill="#eaeaec"/><circle cx="540" cy="417" r="1.1" fill="#eaeaec"/><circle cx="439" cy="182" r="0.9" fill="#eaeaec"/><circle cx="94" cy="435" r="0.8" fill="#eaeaec"/><circle cx="431" cy="82" r="0.7" fill="#eaeaec"/><circle cx="211" cy="1" r="0.8" fill="#eaeaec"/><circle cx="525" cy="615" r="0.6" fill="#eaeaec"/><circle cx="453" cy="160" r="0.7" fill="#eaeaec"/><circle cx="347" cy="209" r="0.7" fill="#eaeaec"/><circle cx="47" cy="126" r="0.7" fill="#eaeaec"/><circle cx="497" cy="30" r="0.9" fill="#eaeaec"/><circle cx="116" cy="511" r="0.5" fill="#eaeaec"/><circle cx="202" cy="524" r="0.5" fill="#eaeaec"/><circle cx="224" cy="231" r="0.9" fill="#eaeaec"/><circle cx="343" cy="57" r="1.2" fill="#eaeaec"/><circle cx="147" cy="548" r="0.6" fill="#eaeaec"/><circle cx="51" cy="138" r="0.6" fill="#eaeaec"/><circle cx="135" cy="99" r="0.6" fill="#eaeaec"/><circle cx="464" cy="375" r="0.9" fill="#eaeaec"/><circle cx="277" cy="575" r="0.5" fill="#eaeaec"/><circle cx="25" cy="473" r="0.5" fill="#eaeaec"/><circle cx="276" cy="444" r="1.2" fill="#eaeaec"/><circle cx="0" cy="285" r="0.8" fill="#eaeaec"/><circle cx="316" cy="23" r="1.1" fill="#eaeaec"/><circle cx="522" cy="390" r="1.0" fill="#eaeaec"/><circle cx="455" cy="599" r="1.2" fill="#eaeaec"/><circle cx="266" cy="62" r="1.1" fill="#eaeaec"/><circle cx="460" cy="498" r="0.8" fill="#eaeaec"/><circle cx="531" cy="442" r="0.7" fill="#eaeaec"/><circle cx="428" cy="159" r="0.7" fill="#eaeaec"/><circle cx="493" cy="39" r="1.2" fill="#eaeaec"/><circle cx="216" cy="406" r="1.1" fill="#eaeaec"/><circle cx="492" cy="156" r="0.6" fill="#eaeaec"/><circle cx="279" cy="159" r="0.8" fill="#eaeaec"/><circle cx="60" cy="64" r="1.0" fill="#eaeaec"/><circle cx="28" cy="189" r="0.8" fill="#eaeaec"/><circle cx="52" cy="572" r="1.2" fill="#eaeaec"/><circle cx="18" cy="573" r="0.6" fill="#eaeaec"/><circle cx="398" cy="43" r="1.1" fill="#eaeaec"/><circle cx="508" cy="184" r="0.6" fill="#eaeaec"/><circle cx="186" cy="610" r="1.1" fill="#eaeaec"/><circle cx="85" cy="640" r="1.1" fill="#eaeaec"/><circle cx="522" cy="691" r="0.6" fill="#eaeaec"/><circle cx="397" cy="17" r="0.7" fill="#eaeaec"/><circle cx="292" cy="166" r="0.7" fill="#eaeaec"/><circle cx="195" cy="326" r="1.2" fill="#eaeaec"/><circle cx="317" cy="395" r="1.1" fill="#eaeaec"/><circle cx="103" cy="570" r="1.1" fill="#eaeaec"/><circle cx="444" cy="320" r="0.9" fill="#eaeaec"/><circle cx="41" cy="326" r="1.0" fill="#eaeaec"/><circle cx="518" cy="636" r="0.8" fill="#eaeaec"/><circle cx="412" cy="608" r="1.3" fill="#eaeaec"/><circle cx="371" cy="234" r="1.2" fill="#eaeaec"/><circle cx="9" cy="403" r="0.9" fill="#eaeaec"/><circle cx="481" cy="441" r="0.7" fill="#eaeaec"/><circle cx="90" cy="26" r="1.1" fill="#eaeaec"/><circle cx="427" cy="265" r="0.7" fill="#eaeaec"/><circle cx="304" cy="139" r="0.9" fill="#eaeaec"/><circle cx="187" cy="227" r="1.1" fill="#eaeaec"/><circle cx="136" cy="235" r="1.0" fill="#eaeaec"/><circle cx="513" cy="107" r="0.7" fill="#eaeaec"/><circle cx="149" cy="224" r="0.9" fill="#eaeaec"/><circle cx="447" cy="129" r="1.1" fill="#eaeaec"/><circle cx="235" cy="406" r="0.9" fill="#eaeaec"/><circle cx="329" cy="127" r="1.0" fill="#eaeaec"/><circle cx="219" cy="557" r="1.0" fill="#eaeaec"/><circle cx="222" cy="701" r="0.6" fill="#eaeaec"/><circle cx="8" cy="87" r="1.1" fill="#eaeaec"/><circle cx="50" cy="522" r="0.6" fill="#eaeaec"/><circle cx="162" cy="442" r="0.5" fill="#eaeaec"/><circle cx="236" cy="710" r="1.1" fill="#eaeaec"/><circle cx="212" cy="645" r="1.0" fill="#eaeaec"/><circle cx="442" cy="244" r="0.8" fill="#eaeaec"/><circle cx="382" cy="540" r="1.1" fill="#eaeaec"/><circle cx="82" cy="299" r="0.8" fill="#eaeaec"/><circle cx="126" cy="83" r="1.1" fill="#eaeaec"/><circle cx="77" cy="251" r="0.5" fill="#eaeaec"/><circle cx="384" cy="444" r="0.6" fill="#eaeaec"/><circle cx="518" cy="706" r="1.1" fill="#eaeaec"/><circle cx="439" cy="500" r="0.5" fill="#eaeaec"/><circle cx="149" cy="168" r="0.5" fill="#eaeaec"/><circle cx="348" cy="420" r="0.8" fill="#eaeaec"/><circle cx="408" cy="166" r="0.7" fill="#eaeaec"/><circle cx="63" cy="167" r="1.2" fill="#eaeaec"/><circle cx="267" cy="523" r="1.2" fill="#eaeaec"/><circle cx="363" cy="256" r="1.3" fill="#eaeaec"/><circle cx="44" cy="293" r="1.2" fill="#eaeaec"/><circle cx="372" cy="251" r="1.2" fill="#eaeaec"/><circle cx="413" cy="514" r="0.7" fill="#eaeaec"/><circle cx="371" cy="466" r="1.2" fill="#eaeaec"/><circle cx="280" cy="660" r="1.1" fill="#eaeaec"/><circle cx="114" cy="411" r="0.7" fill="#eaeaec"/><circle cx="337" cy="231" r="1.3" fill="#eaeaec"/><circle cx="187" cy="561" r="1.2" fill="#eaeaec"/><circle cx="204" cy="418" r="0.7" fill="#eaeaec"/><circle cx="205" cy="312" r="1.1" fill="#eaeaec"/><circle cx="277" cy="114" r="1.0" fill="#eaeaec"/><circle cx="281" cy="373" r="0.9" fill="#eaeaec"/><circle cx="472" cy="465" r="1.0" fill="#eaeaec"/><circle cx="273" cy="285" r="0.8" fill="#eaeaec"/><circle cx="370" cy="311" r="0.6" fill="#eaeaec"/><circle cx="120" cy="38" r="0.5" fill="#eaeaec"/><circle cx="196" cy="268" r="0.9" fill="#eaeaec"/><circle cx="110" cy="165" r="0.9" fill="#eaeaec"/><circle cx="158" cy="185" r="0.9" fill="#eaeaec"/><circle cx="416" cy="43" r="0.5" fill="#eaeaec"/><circle cx="244" cy="635" r="1.0" fill="#eaeaec"/><circle cx="199" cy="691" r="1.0" fill="#eaeaec"/><circle cx="450" cy="598" r="0.5" fill="#eaeaec"/><circle cx="106" cy="562" r="0.8" fill="#eaeaec"/><circle cx="491" cy="51" r="1.3" fill="#eaeaec"/><circle cx="338" cy="292" r="1.2" fill="#eaeaec"/><circle cx="292" cy="326" r="0.6" fill="#eaeaec"/><circle cx="427" cy="104" r="0.7" fill="#eaeaec"/><circle cx="48" cy="11" r="0.7" fill="#eaeaec"/><circle cx="24" cy="333" r="0.8" fill="#eaeaec"/><circle cx="10" cy="329" r="0.7" fill="#eaeaec"/><circle cx="126" cy="384" r="0.8" fill="#eaeaec"/><circle cx="30" cy="661" r="1.3" fill="#eaeaec"/><circle cx="129" cy="468" r="1.0" fill="#eaeaec"/><circle cx="135" cy="382" r="0.7" fill="#eaeaec"/><circle cx="150" cy="322" r="0.5" fill="#eaeaec"/><circle cx="125" cy="698" r="1.1" fill="#eaeaec"/><circle cx="181" cy="708" r="0.8" fill="#eaeaec"/><circle cx="464" cy="229" r="1.2" fill="#eaeaec"/><circle cx="246" cy="619" r="0.6" fill="#eaeaec"/><circle cx="215" cy="245" r="1.1" fill="#eaeaec"/><circle cx="472" cy="96" r="0.8" fill="#eaeaec"/><circle cx="94" cy="47" r="0.6" fill="#eaeaec"/><circle cx="40" cy="214" r="0.8" fill="#eaeaec"/><circle cx="493" cy="463" r="1.1" fill="#eaeaec"/><circle cx="180" cy="228" r="0.8" fill="#eaeaec"/><circle cx="127" cy="14" r="0.7" fill="#eaeaec"/><circle cx="506" cy="36" r="0.9" fill="#eaeaec"/><circle cx="126" cy="541" r="0.5" fill="#eaeaec"/><circle cx="278" cy="515" r="0.9" fill="#eaeaec"/><circle cx="78" cy="631" r="0.5" fill="#eaeaec"/><circle cx="505" cy="581" r="1.2" fill="#eaeaec"/><circle cx="472" cy="262" r="1.0" fill="#eaeaec"/><circle cx="256" cy="415" r="0.8" fill="#eaeaec"/><circle cx="466" cy="219" r="0.9" fill="#eaeaec"/><circle cx="37" cy="42" r="1.2" fill="#eaeaec"/><circle cx="194" cy="266" r="1.3" fill="#eaeaec"/><circle cx="394" cy="110" r="0.9" fill="#eaeaec"/><circle cx="263" cy="429" r="0.7" fill="#eaeaec"/><circle cx="150" cy="671" r="1.0" fill="#eaeaec"/><circle cx="300" cy="491" r="1.1" fill="#eaeaec"/><circle cx="98" cy="556" r="0.9" fill="#eaeaec"/><circle cx="82" cy="225" r="1.3" fill="#eaeaec"/><circle cx="461" cy="641" r="0.9" fill="#eaeaec"/><circle cx="347" cy="281" r="1.1" fill="#eaeaec"/><circle cx="292" cy="254" r="1.3" fill="#eaeaec"/><circle cx="273" cy="29" r="1.2" fill="#eaeaec"/><circle cx="52" cy="199" r="0.9" fill="#eaeaec"/><circle cx="115" cy="319" r="0.9" fill="#eaeaec"/><circle cx="289" cy="463" r="1.0" fill="#eaeaec"/><circle cx="27" cy="168" r="0.6" fill="#eaeaec"/><circle cx="181" cy="324" r="1.2" fill="#eaeaec"/><circle cx="8" cy="575" r="0.6" fill="#eaeaec"/><circle cx="404" cy="602" r="1.3" fill="#eaeaec"/><circle cx="314" cy="39" r="0.7" fill="#eaeaec"/><circle cx="237" cy="479" r="1.3" fill="#eaeaec"/><circle cx="478" cy="45" r="0.6" fill="#eaeaec"/><circle cx="355" cy="147" r="1.0" fill="#eaeaec"/><circle cx="278" cy="387" r="0.8" fill="#eaeaec"/><circle cx="496" cy="208" r="0.8" fill="#eaeaec"/><circle cx="88" cy="206" r="0.6" fill="#eaeaec"/><circle cx="348" cy="15" r="0.7" fill="#eaeaec"/><circle cx="440" cy="605" r="0.8" fill="#eaeaec"/><circle cx="400" cy="575" r="1.0" fill="#eaeaec"/><circle cx="338" cy="535" r="0.8" fill="#eaeaec"/><circle cx="180" cy="182" r="0.7" fill="#eaeaec"/><circle cx="280" cy="383" r="0.7" fill="#eaeaec"/><circle cx="47" cy="18" r="0.7" fill="#eaeaec"/><circle cx="85" cy="441" r="1.1" fill="#eaeaec"/><circle cx="291" cy="457" r="0.8" fill="#eaeaec"/><circle cx="41" cy="531" r="1.1" fill="#eaeaec"/><circle cx="80" cy="220" r="1.0" fill="#eaeaec"/><circle cx="385" cy="116" r="0.8" fill="#eaeaec"/><circle cx="210" cy="388" r="1.2" fill="#eaeaec"/><circle cx="80" cy="267" r="1.2" fill="#eaeaec"/><circle cx="97" cy="125" r="1.1" fill="#eaeaec"/><circle cx="340" cy="338" r="0.9" fill="#eaeaec"/><circle cx="34" cy="455" r="0.7" fill="#eaeaec"/><circle cx="241" cy="659" r="0.9" fill="#eaeaec"/><circle cx="215" cy="250" r="0.7" fill="#eaeaec"/><circle cx="337" cy="509" r="0.6" fill="#eaeaec"/><circle cx="2" cy="280" r="0.6" fill="#eaeaec"/><circle cx="326" cy="114" r="0.9" fill="#eaeaec"/><circle cx="259" cy="691" r="0.8" fill="#eaeaec"/><circle cx="143" cy="240" r="1.0" fill="#eaeaec"/><circle cx="131" cy="172" r="1.1" fill="#eaeaec"/><circle cx="289" cy="51" r="1.2" fill="#eaeaec"/><circle cx="69" cy="210" r="0.9" fill="#eaeaec"/><circle cx="249" cy="544" r="0.6" fill="#eaeaec"/><circle cx="357" cy="127" r="0.6" fill="#eaeaec"/><circle cx="381" cy="551" r="0.6" fill="#eaeaec"/><circle cx="18" cy="143" r="1.0" fill="#eaeaec"/><circle cx="17" cy="675" r="0.5" fill="#eaeaec"/><circle cx="404" cy="571" r="0.8" fill="#eaeaec"/><circle cx="444" cy="125" r="1.1" fill="#eaeaec"/><circle cx="313" cy="604" r="1.1" fill="#eaeaec"/><circle cx="429" cy="613" r="0.7" fill="#eaeaec"/><circle cx="17" cy="122" r="1.1" fill="#eaeaec"/><circle cx="282" cy="350" r="0.9" fill="#eaeaec"/><circle cx="14" cy="657" r="1.0" fill="#eaeaec"/><circle cx="319" cy="351" r="1.2" fill="#eaeaec"/><circle cx="258" cy="383" r="1.1" fill="#eaeaec"/><circle cx="81" cy="586" r="1.0" fill="#eaeaec"/><circle cx="181" cy="105" r="0.9" fill="#eaeaec"/><circle cx="160" cy="1" r="1.2" fill="#eaeaec"/><circle cx="408" cy="639" r="1.1" fill="#eaeaec"/><circle cx="221" cy="649" r="0.7" fill="#eaeaec"/><circle cx="140" cy="333" r="1.0" fill="#eaeaec"/><circle cx="54" cy="41" r="1.2" fill="#eaeaec"/><circle cx="8" cy="527" r="0.9" fill="#eaeaec"/><circle cx="523" cy="610" r="0.9" fill="#eaeaec"/><circle cx="298" cy="495" r="0.7" fill="#eaeaec"/><circle cx="11" cy="704" r="0.9" fill="#eaeaec"/><circle cx="436" cy="382" r="0.6" fill="#eaeaec"/><circle cx="56" cy="167" r="1.3" fill="#eaeaec"/><circle cx="445" cy="208" r="0.9" fill="#eaeaec"/><circle cx="528" cy="359" r="0.8" fill="#eaeaec"/><circle cx="288" cy="120" r="1.0" fill="#eaeaec"/><circle cx="39" cy="369" r="0.6" fill="#eaeaec"/><circle cx="21" cy="536" r="0.9" fill="#eaeaec"/><circle cx="87" cy="283" r="1.2" fill="#eaeaec"/><circle cx="197" cy="194" r="0.9" fill="#eaeaec"/><circle cx="488" cy="437" r="0.9" fill="#eaeaec"/><circle cx="342" cy="250" r="1.2" fill="#eaeaec"/><circle cx="148" cy="155" r="0.9" fill="#eaeaec"/><circle cx="436" cy="548" r="1.0" fill="#eaeaec"/><circle cx="1" cy="568" r="1.2" fill="#eaeaec"/><circle cx="69" cy="139" r="0.7" fill="#eaeaec"/><circle cx="71" cy="103" r="0.9" fill="#eaeaec"/><circle cx="379" cy="330" r="0.9" fill="#eaeaec"/><circle cx="374" cy="586" r="1.3" fill="#eaeaec"/><circle cx="385" cy="353" r="0.5" fill="#eaeaec"/><circle cx="160" cy="137" r="1.3" fill="#eaeaec"/><circle cx="397" cy="91" r="0.8" fill="#eaeaec"/><circle cx="230" cy="446" r="1.3" fill="#eaeaec"/><circle cx="181" cy="496" r="0.8" fill="#eaeaec"/><circle cx="493" cy="356" r="1.1" fill="#eaeaec"/><circle cx="318" cy="511" r="1.1" fill="#eaeaec"/><circle cx="213" cy="317" r="1.0" fill="#eaeaec"/><circle cx="389" cy="421" r="0.8" fill="#eaeaec"/><circle cx="266" cy="362" r="0.8" fill="#eaeaec"/><circle cx="175" cy="46" r="0.6" fill="#eaeaec"/><circle cx="85" cy="62" r="0.8" fill="#eaeaec"/><circle cx="528" cy="285" r="1.2" fill="#eaeaec"/><circle cx="375" cy="661" r="1.0" fill="#eaeaec"/><circle cx="522" cy="571" r="0.6" fill="#eaeaec"/><circle cx="1" cy="682" r="0.8" fill="#eaeaec"/><circle cx="357" cy="677" r="1.3" fill="#eaeaec"/><circle cx="286" cy="233" r="1.0" fill="#eaeaec"/><circle cx="380" cy="67" r="1.1" fill="#eaeaec"/><circle cx="2" cy="275" r="1.2" fill="#eaeaec"/><circle cx="483" cy="612" r="1.2" fill="#eaeaec"/><circle cx="248" cy="302" r="0.9" fill="#eaeaec"/><circle cx="282" cy="154" r="0.8" fill="#eaeaec"/><circle cx="261" cy="13" r="1.0" fill="#eaeaec"/><circle cx="35" cy="397" r="0.5" fill="#eaeaec"/><circle cx="101" cy="325" r="1.1" fill="#eaeaec"/><circle cx="539" cy="544" r="1.2" fill="#eaeaec"/><circle cx="237" cy="368" r="0.9" fill="#eaeaec"/><circle cx="528" cy="602" r="0.5" fill="#eaeaec"/><circle cx="376" cy="511" r="1.2" fill="#eaeaec"/><circle cx="507" cy="281" r="0.8" fill="#eaeaec"/><circle cx="128" cy="137" r="1.2" fill="#eaeaec"/><circle cx="404" cy="589" r="0.8" fill="#eaeaec"/><circle cx="416" cy="11" r="0.9" fill="#eaeaec"/><circle cx="170" cy="213" r="1.3" fill="#eaeaec"/><circle cx="2" cy="678" r="1.0" fill="#eaeaec"/><circle cx="541" cy="288" r="1.2" fill="#eaeaec"/><circle cx="301" cy="409" r="1.0" fill="#eaeaec"/><circle cx="143" cy="430" r="0.6" fill="#eaeaec"/><circle cx="18" cy="512" r="0.5" fill="#eaeaec"/><circle cx="502" cy="161" r="1.2" fill="#eaeaec"/><circle cx="168" cy="508" r="0.8" fill="#eaeaec"/><circle cx="379" cy="128" r="0.7" fill="#eaeaec"/><circle cx="145" cy="697" r="1.2" fill="#eaeaec"/><circle cx="211" cy="680" r="1.2" fill="#eaeaec"/><circle cx="78" cy="439" r="0.7" fill="#eaeaec"/><circle cx="188" cy="216" r="0.7" fill="#eaeaec"/><circle cx="320" cy="154" r="0.8" fill="#eaeaec"/><circle cx="77" cy="190" r="1.1" fill="#eaeaec"/><circle cx="156" cy="688" r="0.6" fill="#eaeaec"/><circle cx="15" cy="177" r="0.9" fill="#eaeaec"/><circle cx="169" cy="284" r="1.1" fill="#eaeaec"/><circle cx="361" cy="171" r="1.2" fill="#eaeaec"/><circle cx="197" cy="405" r="0.8" fill="#eaeaec"/><circle cx="412" cy="411" r="0.9" fill="#eaeaec"/><circle cx="94" cy="55" r="0.7" fill="#eaeaec"/><circle cx="463" cy="657" r="0.8" fill="#eaeaec"/><circle cx="40" cy="141" r="1.2" fill="#eaeaec"/><circle cx="70" cy="296" r="0.6" fill="#eaeaec"/><circle cx="270" cy="245" r="1.3" fill="#eaeaec"/><circle cx="536" cy="357" r="1.2" fill="#eaeaec"/><circle cx="367" cy="328" r="1.1" fill="#eaeaec"/><circle cx="19" cy="119" r="1.2" fill="#eaeaec"/><circle cx="282" cy="485" r="1.0" fill="#eaeaec"/><circle cx="459" cy="179" r="0.6" fill="#eaeaec"/><circle cx="158" cy="616" r="0.9" fill="#eaeaec"/><circle cx="416" cy="548" r="0.8" fill="#eaeaec"/><circle cx="402" cy="559" r="0.9" fill="#eaeaec"/><circle cx="287" cy="334" r="0.9" fill="#eaeaec"/><circle cx="115" cy="407" r="1.2" fill="#eaeaec"/><circle cx="139" cy="296" r="0.8" fill="#eaeaec"/><circle cx="161" cy="658" r="1.1" fill="#eaeaec"/><circle cx="47" cy="367" r="0.8" fill="#eaeaec"/><circle cx="199" cy="78" r="1.0" fill="#eaeaec"/><circle cx="196" cy="481" r="0.6" fill="#eaeaec"/><circle cx="282" cy="315" r="1.0" fill="#eaeaec"/><circle cx="34" cy="559" r="0.9" fill="#eaeaec"/><circle cx="137" cy="119" r="1.2" fill="#eaeaec"/><circle cx="7" cy="416" r="0.7" fill="#eaeaec"/><circle cx="187" cy="686" r="0.6" fill="#eaeaec"/><circle cx="100" cy="8" r="0.8" fill="#eaeaec"/><circle cx="41" cy="31" r="1.0" fill="#eaeaec"/><circle cx="515" cy="120" r="1.0" fill="#eaeaec"/><circle cx="525" cy="126" r="0.6" fill="#eaeaec"/><circle cx="275" cy="37" r="1.0" fill="#eaeaec"/><circle cx="455" cy="625" r="0.6" fill="#eaeaec"/><circle cx="303" cy="358" r="0.9" fill="#eaeaec"/><circle cx="100" cy="430" r="0.6" fill="#eaeaec"/><circle cx="372" cy="63" r="0.5" fill="#eaeaec"/><circle cx="466" cy="239" r="0.8" fill="#eaeaec"/><circle cx="280" cy="340" r="0.5" fill="#eaeaec"/><circle cx="446" cy="695" r="0.7" fill="#eaeaec"/><circle cx="156" cy="197" r="1.0" fill="#eaeaec"/><circle cx="287" cy="397" r="1.0" fill="#eaeaec"/><circle cx="141" cy="369" r="0.9" fill="#eaeaec"/><circle cx="341" cy="454" r="1.3" fill="#eaeaec"/><circle cx="72" cy="362" r="1.0" fill="#eaeaec"/><circle cx="88" cy="263" r="0.7" fill="#eaeaec"/><circle cx="297" cy="499" r="0.7" fill="#eaeaec"/><circle cx="252" cy="147" r="0.8" fill="#eaeaec"/><circle cx="540" cy="630" r="0.8" fill="#eaeaec"/><circle cx="186" cy="129" r="1.2" fill="#eaeaec"/><circle cx="505" cy="33" r="0.9" fill="#eaeaec"/><circle cx="218" cy="170" r="1.0" fill="#eaeaec"/><circle cx="451" cy="261" r="1.3" fill="#eaeaec"/><circle cx="332" cy="172" r="1.0" fill="#eaeaec"/><circle cx="73" cy="293" r="1.0" fill="#eaeaec"/><circle cx="101" cy="76" r="0.8" fill="#eaeaec"/><circle cx="467" cy="144" r="0.9" fill="#eaeaec"/><circle cx="333" cy="132" r="0.8" fill="#eaeaec"/><circle cx="472" cy="561" r="0.9" fill="#eaeaec"/><circle cx="341" cy="5" r="0.7" fill="#eaeaec"/><circle cx="194" cy="41" r="0.9" fill="#eaeaec"/><circle cx="334" cy="472" r="1.0" fill="#eaeaec"/><circle cx="279" cy="595" r="0.7" fill="#eaeaec"/><circle cx="162" cy="169" r="0.7" fill="#eaeaec"/><circle cx="474" cy="324" r="1.2" fill="#eaeaec"/><circle cx="265" cy="275" r="1.0" fill="#eaeaec"/><circle cx="19" cy="340" r="0.8" fill="#eaeaec"/><circle cx="263" cy="289" r="1.0" fill="#eaeaec"/><circle cx="354" cy="1" r="0.9" fill="#eaeaec"/><circle cx="226" cy="264" r="0.6" fill="#eaeaec"/><circle cx="441" cy="127" r="0.7" fill="#eaeaec"/><circle cx="178" cy="648" r="0.9" fill="#eaeaec"/><circle cx="85" cy="151" r="0.7" fill="#eaeaec"/><circle cx="448" cy="3" r="0.7" fill="#eaeaec"/><circle cx="394" cy="61" r="1.0" fill="#eaeaec"/><circle cx="457" cy="327" r="1.1" fill="#eaeaec"/><circle cx="306" cy="626" r="1.3" fill="#eaeaec"/><circle cx="323" cy="514" r="1.1" fill="#eaeaec"/><circle cx="451" cy="289" r="1.0" fill="#eaeaec"/><circle cx="226" cy="609" r="1.2" fill="#eaeaec"/><circle cx="181" cy="385" r="1.3" fill="#eaeaec"/><circle cx="400" cy="159" r="0.9" fill="#eaeaec"/><circle cx="43" cy="191" r="1.1" fill="#eaeaec"/><circle cx="97" cy="437" r="1.1" fill="#eaeaec"/><circle cx="520" cy="303" r="0.5" fill="#eaeaec"/><circle cx="230" cy="462" r="1.1" fill="#eaeaec"/><circle cx="467" cy="47" r="0.8" fill="#eaeaec"/><circle cx="398" cy="194" r="1.1" fill="#eaeaec"/><circle cx="535" cy="234" r="1.0" fill="#eaeaec"/><circle cx="25" cy="476" r="1.3" fill="#eaeaec"/><circle cx="423" cy="231" r="1.2" fill="#eaeaec"/><circle cx="2" cy="400" r="0.5" fill="#eaeaec"/><circle cx="224" cy="192" r="0.6" fill="#eaeaec"/><circle cx="478" cy="577" r="0.9" fill="#eaeaec"/><circle cx="89" cy="362" r="0.7" fill="#eaeaec"/><circle cx="299" cy="478" r="1.3" fill="#eaeaec"/><circle cx="134" cy="189" r="0.6" fill="#eaeaec"/><circle cx="514" cy="570" r="0.8" fill="#eaeaec"/><circle cx="235" cy="583" r="1.0" fill="#eaeaec"/><circle cx="320" cy="291" r="1.0" fill="#eaeaec"/><circle cx="0" cy="124" r="1.2" fill="#eaeaec"/><circle cx="503" cy="399" r="1.0" fill="#eaeaec"/><circle cx="237" cy="255" r="1.0" fill="#eaeaec"/><circle cx="426" cy="645" r="0.7" fill="#eaeaec"/><circle cx="248" cy="313" r="1.1" fill="#eaeaec"/><circle cx="475" cy="691" r="1.0" fill="#eaeaec"/><circle cx="329" cy="80" r="0.5" fill="#eaeaec"/><circle cx="12" cy="440" r="1.0" fill="#eaeaec"/><circle cx="21" cy="627" r="1.1" fill="#eaeaec"/><circle cx="375" cy="176" r="0.7" fill="#eaeaec"/><circle cx="302" cy="237" r="0.9" fill="#eaeaec"/><circle cx="356" cy="426" r="0.8" fill="#eaeaec"/><circle cx="542" cy="181" r="0.9" fill="#eaeaec"/><circle cx="208" cy="26" r="0.8" fill="#eaeaec"/><circle cx="357" cy="617" r="0.8" fill="#eaeaec"/><circle cx="87" cy="450" r="0.5" fill="#eaeaec"/><circle cx="281" cy="83" r="1.1" fill="#eaeaec"/><circle cx="414" cy="552" r="0.8" fill="#eaeaec"/><circle cx="430" cy="365" r="0.7" fill="#eaeaec"/><circle cx="386" cy="154" r="1.3" fill="#eaeaec"/><circle cx="446" cy="8" r="1.1" fill="#eaeaec"/><circle cx="246" cy="37" r="0.9" fill="#eaeaec"/><circle cx="325" cy="18" r="0.6" fill="#eaeaec"/><circle cx="418" cy="184" r="1.2" fill="#eaeaec"/><circle cx="215" cy="468" r="0.8" fill="#eaeaec"/><circle cx="10" cy="477" r="0.7" fill="#eaeaec"/><circle cx="304" cy="498" r="0.9" fill="#eaeaec"/><circle cx="103" cy="116" r="1.2" fill="#eaeaec"/><circle cx="490" cy="239" r="1.0" fill="#eaeaec"/><circle cx="524" cy="107" r="0.9" fill="#eaeaec"/><circle cx="429" cy="464" r="1.0" fill="#eaeaec"/><circle cx="431" cy="264" r="0.7" fill="#eaeaec"/><circle cx="170" cy="224" r="0.9" fill="#eaeaec"/><circle cx="66" cy="597" r="1.0" fill="#eaeaec"/><circle cx="383" cy="467" r="1.1" fill="#eaeaec"/><circle cx="244" cy="186" r="0.7" fill="#eaeaec"/><circle cx="62" cy="686" r="1.0" fill="#eaeaec"/><circle cx="346" cy="430" r="0.8" fill="#eaeaec"/><circle cx="284" cy="29" r="1.1" fill="#eaeaec"/><circle cx="233" cy="61" r="1.3" fill="#eaeaec"/><circle cx="281" cy="11" r="0.7" fill="#eaeaec"/><circle cx="175" cy="353" r="0.5" fill="#eaeaec"/><circle cx="222" cy="469" r="1.0" fill="#eaeaec"/><circle cx="185" cy="513" r="0.6" fill="#eaeaec"/><circle cx="23" cy="15" r="0.6" fill="#eaeaec"/><circle cx="448" cy="224" r="1.2" fill="#eaeaec"/><circle cx="398" cy="569" r="1.3" fill="#eaeaec"/><circle cx="354" cy="479" r="1.1" fill="#eaeaec"/><circle cx="362" cy="304" r="1.0" fill="#eaeaec"/><circle cx="45" cy="558" r="0.6" fill="#eaeaec"/><circle cx="515" cy="478" r="1.3" fill="#eaeaec"/><circle cx="348" cy="286" r="0.9" fill="#eaeaec"/><circle cx="245" cy="66" r="1.2" fill="#eaeaec"/><circle cx="92" cy="156" r="0.8" fill="#eaeaec"/><circle cx="378" cy="291" r="0.7" fill="#eaeaec"/><circle cx="319" cy="222" r="0.6" fill="#eaeaec"/><circle cx="435" cy="322" r="1.1" fill="#eaeaec"/><circle cx="16" cy="698" r="0.6" fill="#eaeaec"/><circle cx="299" cy="124" r="0.8" fill="#eaeaec"/><circle cx="425" cy="368" r="1.3" fill="#eaeaec"/><circle cx="62" cy="621" r="1.2" fill="#eaeaec"/><circle cx="177" cy="652" r="0.7" fill="#eaeaec"/><circle cx="385" cy="234" r="0.9" fill="#eaeaec"/><circle cx="343" cy="605" r="0.8" fill="#eaeaec"/><circle cx="44" cy="199" r="1.1" fill="#eaeaec"/><circle cx="185" cy="323" r="1.0" fill="#eaeaec"/><circle cx="222" cy="627" r="0.8" fill="#eaeaec"/><circle cx="264" cy="620" r="0.5" fill="#eaeaec"/><circle cx="209" cy="477" r="1.0" fill="#eaeaec"/><circle cx="240" cy="311" r="1.2" fill="#eaeaec"/><circle cx="490" cy="186" r="0.9" fill="#eaeaec"/><circle cx="5" cy="76" r="0.8" fill="#eaeaec"/><circle cx="200" cy="498" r="0.6" fill="#eaeaec"/><circle cx="246" cy="598" r="0.6" fill="#eaeaec"/><circle cx="118" cy="251" r="1.0" fill="#eaeaec"/><circle cx="513" cy="146" r="0.9" fill="#eaeaec"/><circle cx="329" cy="583" r="1.2" fill="#eaeaec"/><circle cx="491" cy="118" r="0.8" fill="#eaeaec"/><circle cx="25" cy="24" r="0.8" fill="#eaeaec"/><circle cx="238" cy="435" r="1.3" fill="#eaeaec"/><circle cx="64" cy="686" r="1.1" fill="#eaeaec"/><circle cx="73" cy="488" r="0.6" fill="#eaeaec"/><circle cx="40" cy="467" r="0.6" fill="#eaeaec"/><circle cx="362" cy="303" r="1.0" fill="#eaeaec"/><circle cx="172" cy="435" r="0.6" fill="#eaeaec"/><circle cx="470" cy="565" r="0.8" fill="#eaeaec"/><circle cx="354" cy="67" r="1.0" fill="#eaeaec"/><circle cx="130" cy="682" r="0.6" fill="#eaeaec"/><circle cx="16" cy="632" r="1.0" fill="#eaeaec"/><circle cx="338" cy="62" r="0.9" fill="#eaeaec"/><circle cx="398" cy="51" r="1.1" fill="#eaeaec"/><circle cx="322" cy="88" r="0.9" fill="#eaeaec"/><circle cx="227" cy="566" r="1.0" fill="#eaeaec"/><circle cx="455" cy="540" r="0.9" fill="#eaeaec"/><circle cx="108" cy="704" r="0.8" fill="#eaeaec"/><circle cx="343" cy="593" r="0.6" fill="#eaeaec"/><circle cx="27" cy="560" r="1.1" fill="#eaeaec"/><circle cx="88" cy="215" r="1.0" fill="#eaeaec"/><circle cx="308" cy="604" r="0.9" fill="#eaeaec"/><circle cx="103" cy="543" r="0.8" fill="#eaeaec"/><circle cx="146" cy="100" r="0.7" fill="#eaeaec"/><circle cx="68" cy="110" r="0.9" fill="#eaeaec"/><circle cx="61" cy="127" r="1.1" fill="#eaeaec"/><circle cx="98" cy="536" r="0.5" fill="#eaeaec"/><circle cx="167" cy="105" r="0.9" fill="#eaeaec"/><circle cx="265" cy="532" r="0.8" fill="#eaeaec"/><circle cx="464" cy="42" r="1.0" fill="#eaeaec"/><circle cx="32" cy="242" r="1.2" fill="#eaeaec"/><circle cx="129" cy="43" r="1.3" fill="#eaeaec"/><circle cx="7" cy="428" r="0.6" fill="#eaeaec"/><circle cx="332" cy="585" r="0.6" fill="#eaeaec"/><circle cx="501" cy="481" r="0.6" fill="#eaeaec"/><circle cx="103" cy="277" r="1.1" fill="#eaeaec"/><circle cx="472" cy="131" r="1.2" fill="#eaeaec"/><circle cx="335" cy="25" r="0.9" fill="#eaeaec"/><circle cx="153" cy="404" r="1.1" fill="#eaeaec"/><circle cx="64" cy="55" r="0.5" fill="#eaeaec"/><circle cx="293" cy="523" r="0.7" fill="#eaeaec"/><circle cx="394" cy="618" r="0.9" fill="#eaeaec"/><circle cx="52" cy="9" r="0.6" fill="#eaeaec"/><circle cx="408" cy="579" r="0.5" fill="#eaeaec"/><circle cx="347" cy="650" r="0.7" fill="#eaeaec"/><circle cx="523" cy="557" r="0.7" fill="#eaeaec"/><circle cx="102" cy="597" r="0.7" fill="#eaeaec"/><circle cx="17" cy="12" r="1.0" fill="#eaeaec"/><circle cx="371" cy="124" r="1.2" fill="#eaeaec"/><circle cx="191" cy="177" r="0.7" fill="#eaeaec"/><circle cx="355" cy="542" r="1.2" fill="#eaeaec"/><circle cx="39" cy="449" r="0.8" fill="#eaeaec"/><circle cx="47" cy="464" r="0.6" fill="#eaeaec"/><circle cx="47" cy="690" r="0.5" fill="#eaeaec"/><circle cx="264" cy="278" r="0.6" fill="#eaeaec"/><circle cx="537" cy="46" r="0.5" fill="#eaeaec"/><circle cx="175" cy="417" r="0.9" fill="#eaeaec"/><circle cx="386" cy="409" r="0.9" fill="#eaeaec"/><circle cx="535" cy="78" r="0.9" fill="#eaeaec"/><circle cx="176" cy="695" r="0.9" fill="#eaeaec"/><circle cx="272" cy="559" r="1.3" fill="#eaeaec"/><circle cx="365" cy="27" r="0.6" fill="#eaeaec"/><circle cx="70" cy="36" r="0.5" fill="#eaeaec"/><circle cx="519" cy="290" r="1.1" fill="#eaeaec"/><circle cx="142" cy="149" r="1.3" fill="#eaeaec"/><circle cx="47" cy="615" r="0.5" fill="#eaeaec"/><circle cx="261" cy="314" r="1.0" fill="#eaeaec"/><circle cx="331" cy="90" r="1.2" fill="#eaeaec"/><circle cx="111" cy="181" r="0.5" fill="#eaeaec"/><circle cx="121" cy="415" r="0.9" fill="#eaeaec"/><circle cx="520" cy="583" r="0.8" fill="#eaeaec"/><circle cx="169" cy="357" r="0.7" fill="#eaeaec"/><circle cx="196" cy="463" r="0.7" fill="#eaeaec"/><circle cx="516" cy="627" r="1.0" fill="#eaeaec"/><circle cx="392" cy="707" r="0.9" fill="#eaeaec"/><circle cx="227" cy="461" r="1.1" fill="#eaeaec"/><circle cx="240" cy="157" r="1.3" fill="#eaeaec"/><circle cx="390" cy="480" r="0.6" fill="#eaeaec"/><circle cx="223" cy="440" r="1.2" fill="#eaeaec"/><circle cx="167" cy="62" r="1.1" fill="#eaeaec"/><circle cx="468" cy="389" r="1.1" fill="#eaeaec"/><circle cx="180" cy="226" r="0.6" fill="#eaeaec"/><circle cx="56" cy="563" r="1.2" fill="#eaeaec"/><circle cx="311" cy="388" r="0.9" fill="#eaeaec"/><circle cx="436" cy="61" r="0.7" fill="#eaeaec"/><circle cx="82" cy="697" r="0.9" fill="#eaeaec"/><circle cx="385" cy="218" r="1.1" fill="#eaeaec"/><circle cx="425" cy="281" r="1.3" fill="#eaeaec"/><circle cx="537" cy="539" r="0.8" fill="#eaeaec"/><circle cx="516" cy="687" r="1.0" fill="#eaeaec"/><circle cx="197" cy="444" r="0.8" fill="#eaeaec"/><circle cx="64" cy="215" r="0.8" fill="#eaeaec"/><circle cx="263" cy="382" r="1.2" fill="#eaeaec"/><circle cx="353" cy="320" r="0.9" fill="#eaeaec"/><circle cx="432" cy="450" r="0.8" fill="#eaeaec"/><circle cx="205" cy="526" r="1.0" fill="#eaeaec"/><circle cx="189" cy="104" r="0.6" fill="#eaeaec"/><circle cx="16" cy="510" r="1.2" fill="#eaeaec"/><circle cx="311" cy="21" r="0.8" fill="#eaeaec"/><circle cx="122" cy="69" r="1.0" fill="#eaeaec"/><circle cx="466" cy="597" r="1.1" fill="#eaeaec"/><circle cx="137" cy="521" r="0.7" fill="#eaeaec"/><circle cx="189" cy="546" r="0.5" fill="#eaeaec"/><circle cx="337" cy="225" r="0.9" fill="#eaeaec"/><circle cx="125" cy="143" r="1.3" fill="#eaeaec"/><circle cx="253" cy="151" r="1.0" fill="#eaeaec"/><circle cx="480" cy="351" r="1.0" fill="#eaeaec"/><circle cx="447" cy="628" r="0.9" fill="#eaeaec"/><circle cx="308" cy="107" r="0.6" fill="#eaeaec"/><circle cx="525" cy="172" r="0.9" fill="#eaeaec"/><circle cx="119" cy="78" r="0.7" fill="#eaeaec"/><circle cx="231" cy="174" r="1.2" fill="#eaeaec"/><circle cx="161" cy="647" r="1.0" fill="#eaeaec"/><circle cx="493" cy="329" r="0.5" fill="#eaeaec"/><circle cx="82" cy="56" r="0.6" fill="#eaeaec"/><circle cx="28" cy="173" r="0.9" fill="#eaeaec"/><circle cx="363" cy="139" r="0.8" fill="#eaeaec"/><circle cx="402" cy="75" r="1.1" fill="#eaeaec"/><circle cx="47" cy="9" r="1.1" fill="#eaeaec"/><circle cx="292" cy="427" r="0.7" fill="#eaeaec"/><circle cx="83" cy="403" r="0.7" fill="#eaeaec"/><circle cx="539" cy="565" r="1.2" fill="#eaeaec"/><circle cx="97" cy="265" r="0.8" fill="#eaeaec"/><circle cx="66" cy="341" r="1.0" fill="#eaeaec"/><circle cx="162" cy="125" r="0.5" fill="#eaeaec"/><circle cx="126" cy="347" r="1.3" fill="#eaeaec"/><circle cx="389" cy="177" r="0.7" fill="#eaeaec"/><circle cx="111" cy="622" r="0.5" fill="#eaeaec"/><circle cx="497" cy="548" r="0.7" fill="#eaeaec"/><circle cx="304" cy="80" r="1.1" fill="#eaeaec"/><circle cx="57" cy="688" r="0.8" fill="#eaeaec"/><circle cx="346" cy="685" r="1.2" fill="#eaeaec"/><circle cx="448" cy="438" r="0.8" fill="#eaeaec"/><circle cx="289" cy="536" r="0.8" fill="#eaeaec"/><circle cx="513" cy="437" r="1.2" fill="#eaeaec"/><circle cx="81" cy="352" r="0.9" fill="#eaeaec"/><circle cx="162" cy="396" r="0.9" fill="#eaeaec"/><circle cx="198" cy="185" r="0.9" fill="#eaeaec"/><circle cx="213" cy="178" r="0.5" fill="#eaeaec"/><circle cx="247" cy="480" r="0.6" fill="#eaeaec"/><circle cx="489" cy="98" r="0.6" fill="#eaeaec"/><circle cx="26" cy="576" r="0.7" fill="#eaeaec"/><circle cx="34" cy="492" r="0.7" fill="#eaeaec"/><circle cx="192" cy="407" r="0.7" fill="#eaeaec"/><circle cx="482" cy="299" r="1.0" fill="#eaeaec"/><circle cx="362" cy="390" r="1.1" fill="#eaeaec"/><circle cx="163" cy="120" r="0.9" fill="#eaeaec"/><circle cx="453" cy="338" r="0.9" fill="#eaeaec"/><circle cx="488" cy="598" r="1.3" fill="#eaeaec"/><circle cx="389" cy="480" r="0.8" fill="#eaeaec"/><circle cx="128" cy="611" r="1.0" fill="#eaeaec"/><circle cx="530" cy="170" r="1.2" fill="#eaeaec"/><circle cx="113" cy="528" r="0.8" fill="#eaeaec"/><circle cx="454" cy="435" r="0.7" fill="#eaeaec"/><circle cx="439" cy="136" r="1.1" fill="#eaeaec"/><circle cx="344" cy="528" r="1.2" fill="#eaeaec"/><circle cx="75" cy="621" r="1.1" fill="#eaeaec"/><circle cx="436" cy="685" r="1.0" fill="#eaeaec"/><circle cx="425" cy="350" r="1.3" fill="#eaeaec"/><circle cx="271" cy="380" r="0.5" fill="#eaeaec"/><circle cx="224" cy="87" r="0.5" fill="#eaeaec"/><circle cx="285" cy="51" r="0.6" fill="#eaeaec"/><circle cx="526" cy="152" r="0.8" fill="#eaeaec"/><circle cx="398" cy="25" r="1.2" fill="#eaeaec"/><circle cx="259" cy="51" r="0.6" fill="#eaeaec"/><circle cx="173" cy="469" r="0.9" fill="#eaeaec"/><circle cx="167" cy="49" r="1.1" fill="#eaeaec"/><circle cx="136" cy="322" r="0.8" fill="#eaeaec"/><circle cx="311" cy="668" r="1.1" fill="#eaeaec"/><circle cx="484" cy="194" r="1.0" fill="#eaeaec"/><circle cx="368" cy="538" r="0.8" fill="#eaeaec"/><circle cx="503" cy="342" r="1.2" fill="#eaeaec"/><circle cx="258" cy="509" r="0.7" fill="#eaeaec"/><circle cx="125" cy="383" r="1.0" fill="#eaeaec"/><circle cx="276" cy="600" r="1.2" fill="#eaeaec"/><circle cx="235" cy="52" r="0.8" fill="#eaeaec"/><circle cx="87" cy="586" r="0.7" fill="#eaeaec"/><circle cx="367" cy="515" r="0.9" fill="#eaeaec"/><circle cx="480" cy="264" r="0.9" fill="#eaeaec"/><circle cx="515" cy="137" r="1.1" fill="#eaeaec"/><circle cx="18" cy="172" r="0.9" fill="#eaeaec"/><circle cx="505" cy="618" r="1.1" fill="#eaeaec"/><circle cx="74" cy="411" r="0.7" fill="#eaeaec"/><circle cx="51" cy="525" r="1.2" fill="#eaeaec"/><circle cx="239" cy="413" r="0.8" fill="#eaeaec"/><circle cx="185" cy="57" r="1.1" fill="#eaeaec"/><circle cx="394" cy="208" r="0.7" fill="#eaeaec"/><circle cx="539" cy="154" r="0.9" fill="#eaeaec"/><circle cx="39" cy="657" r="1.1" fill="#eaeaec"/><circle cx="290" cy="265" r="0.6" fill="#eaeaec"/><circle cx="90" cy="463" r="0.9" fill="#eaeaec"/><circle cx="196" cy="383" r="0.7" fill="#eaeaec"/><circle cx="451" cy="435" r="0.6" fill="#eaeaec"/><circle cx="195" cy="83" r="0.9" fill="#eaeaec"/><circle cx="245" cy="147" r="1.3" fill="#eaeaec"/><circle cx="384" cy="266" r="1.0" fill="#eaeaec"/><circle cx="350" cy="63" r="0.9" fill="#eaeaec"/><circle cx="324" cy="213" r="0.8" fill="#eaeaec"/><circle cx="355" cy="457" r="1.2" fill="#eaeaec"/><circle cx="106" cy="257" r="1.2" fill="#eaeaec"/><circle cx="47" cy="59" r="0.6" fill="#eaeaec"/><circle cx="150" cy="113" r="0.8" fill="#eaeaec"/><circle cx="267" cy="175" r="1.0" fill="#eaeaec"/><circle cx="381" cy="226" r="0.6" fill="#eaeaec"/><circle cx="536" cy="307" r="0.6" fill="#eaeaec"/><circle cx="61" cy="515" r="0.8" fill="#eaeaec"/><circle cx="511" cy="530" r="0.6" fill="#eaeaec"/><circle cx="412" cy="685" r="1.3" fill="#eaeaec"/><circle cx="463" cy="445" r="1.2" fill="#eaeaec"/><circle cx="433" cy="297" r="0.7" fill="#eaeaec"/><circle cx="7" cy="62" r="0.8" fill="#eaeaec"/><circle cx="46" cy="94" r="0.9" fill="#eaeaec"/><circle cx="140" cy="685" r="0.6" fill="#eaeaec"/><circle cx="303" cy="369" r="0.8" fill="#eaeaec"/><circle cx="431" cy="676" r="1.2" fill="#eaeaec"/><circle cx="35" cy="252" r="0.8" fill="#eaeaec"/><circle cx="497" cy="490" r="0.8" fill="#eaeaec"/><circle cx="390" cy="692" r="0.6" fill="#eaeaec"/><circle cx="530" cy="72" r="0.5" fill="#eaeaec"/><circle cx="26" cy="612" r="0.7" fill="#eaeaec"/><circle cx="474" cy="437" r="0.5" fill="#eaeaec"/><circle cx="527" cy="115" r="1.3" fill="#eaeaec"/><circle cx="485" cy="387" r="0.6" fill="#eaeaec"/><circle cx="47" cy="165" r="0.7" fill="#eaeaec"/><circle cx="408" cy="148" r="0.8" fill="#eaeaec"/><circle cx="50" cy="599" r="0.8" fill="#eaeaec"/><circle cx="14" cy="519" r="1.1" fill="#eaeaec"/><circle cx="272" cy="538" r="0.8" fill="#eaeaec"/><circle cx="441" cy="573" r="0.9" fill="#eaeaec"/><circle cx="413" cy="210" r="0.9" fill="#eaeaec"/><circle cx="339" cy="40" r="1.0" fill="#eaeaec"/><circle cx="441" cy="697" r="1.3" fill="#eaeaec"/><circle cx="225" cy="422" r="0.6" fill="#eaeaec"/><circle cx="534" cy="34" r="1.0" fill="#eaeaec"/><circle cx="246" cy="575" r="1.2" fill="#eaeaec"/><circle cx="507" cy="691" r="1.2" fill="#eaeaec"/><circle cx="11" cy="76" r="0.9" fill="#eaeaec"/><circle cx="363" cy="606" r="1.2" fill="#eaeaec"/><circle cx="409" cy="336" r="0.7" fill="#eaeaec"/><circle cx="120" cy="534" r="0.8" fill="#eaeaec"/><circle cx="39" cy="478" r="1.0" fill="#eaeaec"/><circle cx="372" cy="338" r="0.7" fill="#eaeaec"/><circle cx="530" cy="357" r="1.0" fill="#eaeaec"/><circle cx="359" cy="7" r="0.6" fill="#eaeaec"/><circle cx="186" cy="672" r="0.5" fill="#eaeaec"/><circle cx="516" cy="429" r="0.8" fill="#eaeaec"/><circle cx="403" cy="622" r="1.1" fill="#eaeaec"/><circle cx="8" cy="612" r="0.8" fill="#eaeaec"/><circle cx="458" cy="353" r="1.2" fill="#eaeaec"/><circle cx="37" cy="356" r="1.2" fill="#eaeaec"/><circle cx="172" cy="589" r="0.6" fill="#eaeaec"/><circle cx="303" cy="15" r="1.1" fill="#eaeaec"/><circle cx="146" cy="486" r="0.6" fill="#eaeaec"/><circle cx="233" cy="397" r="0.6" fill="#eaeaec"/><circle cx="163" cy="486" r="0.9" fill="#eaeaec"/><circle cx="323" cy="32" r="1.1" fill="#eaeaec"/><circle cx="262" cy="436" r="0.5" fill="#eaeaec"/><circle cx="496" cy="29" r="0.9" fill="#eaeaec"/><circle cx="227" cy="191" r="0.6" fill="#eaeaec"/><circle cx="134" cy="576" r="0.6" fill="#eaeaec"/><circle cx="224" cy="630" r="0.7" fill="#eaeaec"/><circle cx="462" cy="83" r="0.8" fill="#eaeaec"/><circle cx="205" cy="41" r="0.6" fill="#eaeaec"/><circle cx="316" cy="279" r="0.5" fill="#eaeaec"/><circle cx="136" cy="185" r="0.8" fill="#eaeaec"/><circle cx="303" cy="311" r="1.2" fill="#eaeaec"/><circle cx="459" cy="501" r="0.9" fill="#eaeaec"/><circle cx="502" cy="206" r="0.8" fill="#eaeaec"/><circle cx="49" cy="305" r="1.3" fill="#eaeaec"/><circle cx="535" cy="217" r="0.9" fill="#eaeaec"/><circle cx="132" cy="335" r="1.1" fill="#eaeaec"/><circle cx="153" cy="705" r="1.3" fill="#eaeaec"/><circle cx="408" cy="100" r="0.6" fill="#eaeaec"/><circle cx="529" cy="688" r="1.0" fill="#eaeaec"/><circle cx="143" cy="179" r="1.2" fill="#eaeaec"/><circle cx="89" cy="358" r="0.6" fill="#eaeaec"/><circle cx="103" cy="627" r="1.2" fill="#eaeaec"/><circle cx="330" cy="264" r="0.7" fill="#eaeaec"/><circle cx="46" cy="87" r="0.7" fill="#eaeaec"/><circle cx="33" cy="209" r="0.6" fill="#eaeaec"/><circle cx="364" cy="508" r="1.3" fill="#eaeaec"/><circle cx="88" cy="588" r="1.2" fill="#eaeaec"/><circle cx="486" cy="472" r="1.1" fill="#eaeaec"/><circle cx="460" cy="36" r="1.1" fill="#eaeaec"/><circle cx="465" cy="666" r="1.0" fill="#eaeaec"/><circle cx="247" cy="266" r="0.9" fill="#eaeaec"/><circle cx="213" cy="294" r="1.2" fill="#eaeaec"/><circle cx="388" cy="313" r="1.1" fill="#eaeaec"/><circle cx="24" cy="537" r="0.9" fill="#eaeaec"/><circle cx="201" cy="705" r="0.7" fill="#eaeaec"/><circle cx="125" cy="696" r="1.1" fill="#eaeaec"/><circle cx="142" cy="517" r="1.2" fill="#eaeaec"/><circle cx="333" cy="191" r="0.7" fill="#eaeaec"/><circle cx="282" cy="302" r="1.3" fill="#eaeaec"/><circle cx="206" cy="510" r="0.8" fill="#eaeaec"/><circle cx="20" cy="48" r="1.3" fill="#eaeaec"/><circle cx="226" cy="496" r="0.8" fill="#eaeaec"/><circle cx="100" cy="253" r="1.0" fill="#eaeaec"/><circle cx="291" cy="321" r="0.9" fill="#eaeaec"/><circle cx="234" cy="609" r="0.6" fill="#eaeaec"/><circle cx="164" cy="40" r="1.2" fill="#eaeaec"/><circle cx="174" cy="541" r="0.5" fill="#eaeaec"/><circle cx="408" cy="79" r="0.8" fill="#eaeaec"/><circle cx="202" cy="387" r="1.2" fill="#eaeaec"/><circle cx="503" cy="525" r="1.0" fill="#eaeaec"/><circle cx="498" cy="269" r="0.8" fill="#eaeaec"/><circle cx="36" cy="360" r="1.1" fill="#eaeaec"/><circle cx="39" cy="374" r="1.0" fill="#eaeaec"/><circle cx="244" cy="181" r="1.2" fill="#eaeaec"/><circle cx="421" cy="33" r="0.7" fill="#eaeaec"/><circle cx="268" cy="289" r="1.0" fill="#eaeaec"/><circle cx="179" cy="176" r="0.7" fill="#eaeaec"/><circle cx="225" cy="609" r="0.9" fill="#eaeaec"/><circle cx="119" cy="334" r="0.6" fill="#eaeaec"/><circle cx="111" cy="393" r="1.2" fill="#eaeaec"/><circle cx="453" cy="665" r="1.2" fill="#eaeaec"/><circle cx="154" cy="21" r="1.2" fill="#eaeaec"/><circle cx="490" cy="69" r="0.7" fill="#eaeaec"/><circle cx="149" cy="566" r="0.7" fill="#eaeaec"/><circle cx="76" cy="680" r="0.6" fill="#eaeaec"/><circle cx="441" cy="672" r="0.8" fill="#eaeaec"/><circle cx="198" cy="71" r="0.8" fill="#eaeaec"/><circle cx="414" cy="170" r="0.6" fill="#eaeaec"/><circle cx="378" cy="556" r="0.7" fill="#eaeaec"/><circle cx="383" cy="299" r="0.8" fill="#eaeaec"/><circle cx="199" cy="163" r="1.3" fill="#eaeaec"/><circle cx="334" cy="461" r="1.2" fill="#eaeaec"/><circle cx="363" cy="43" r="0.7" fill="#eaeaec"/><circle cx="51" cy="26" r="0.6" fill="#eaeaec"/><circle cx="369" cy="454" r="0.8" fill="#eaeaec"/><circle cx="510" cy="34" r="0.9" fill="#eaeaec"/><circle cx="527" cy="646" r="1.2" fill="#eaeaec"/><circle cx="367" cy="484" r="1.2" fill="#eaeaec"/><circle cx="52" cy="323" r="0.8" fill="#eaeaec"/><circle cx="495" cy="684" r="1.2" fill="#eaeaec"/><circle cx="413" cy="152" r="0.7" fill="#eaeaec"/><circle cx="302" cy="19" r="0.5" fill="#eaeaec"/><circle cx="520" cy="202" r="0.9" fill="#eaeaec"/><circle cx="518" cy="130" r="1.1" fill="#eaeaec"/><circle cx="305" cy="501" r="1.1" fill="#eaeaec"/><circle cx="442" cy="510" r="0.7" fill="#eaeaec"/><circle cx="543" cy="118" r="0.9" fill="#eaeaec"/><circle cx="507" cy="619" r="0.8" fill="#eaeaec"/><circle cx="95" cy="116" r="1.2" fill="#eaeaec"/><circle cx="468" cy="667" r="0.8" fill="#eaeaec"/><circle cx="416" cy="339" r="0.9" fill="#eaeaec"/><circle cx="63" cy="468" r="0.7" fill="#eaeaec"/><circle cx="495" cy="194" r="1.1" fill="#eaeaec"/><circle cx="10" cy="557" r="1.2" fill="#eaeaec"/><circle cx="341" cy="638" r="0.9" fill="#eaeaec"/><circle cx="265" cy="672" r="0.6" fill="#eaeaec"/><circle cx="55" cy="566" r="0.6" fill="#eaeaec"/><circle cx="479" cy="456" r="1.2" fill="#eaeaec"/><circle cx="412" cy="396" r="1.0" fill="#eaeaec"/><circle cx="390" cy="482" r="0.6" fill="#eaeaec"/><circle cx="110" cy="281" r="1.1" fill="#eaeaec"/><circle cx="195" cy="243" r="0.9" fill="#eaeaec"/><circle cx="129" cy="9" r="0.5" fill="#eaeaec"/><circle cx="149" cy="401" r="0.9" fill="#eaeaec"/><circle cx="165" cy="49" r="1.0" fill="#eaeaec"/><circle cx="401" cy="427" r="1.1" fill="#eaeaec"/><circle cx="29" cy="23" r="0.7" fill="#eaeaec"/><circle cx="370" cy="398" r="1.0" fill="#eaeaec"/><circle cx="10" cy="58" r="0.7" fill="#eaeaec"/><circle cx="173" cy="54" r="1.2" fill="#eaeaec"/><circle cx="472" cy="37" r="1.2" fill="#eaeaec"/><circle cx="360" cy="445" r="0.8" fill="#eaeaec"/><circle cx="65" cy="570" r="0.7" fill="#eaeaec"/><circle cx="157" cy="93" r="0.7" fill="#eaeaec"/><circle cx="54" cy="418" r="0.5" fill="#eaeaec"/><circle cx="468" cy="686" r="0.8" fill="#eaeaec"/><circle cx="64" cy="445" r="1.3" fill="#eaeaec"/><circle cx="351" cy="270" r="1.0" fill="#eaeaec"/><circle cx="243" cy="668" r="0.5" fill="#eaeaec"/><circle cx="497" cy="229" r="1.2" fill="#eaeaec"/><circle cx="138" cy="461" r="0.6" fill="#eaeaec"/><circle cx="228" cy="328" r="0.8" fill="#eaeaec"/><circle cx="231" cy="34" r="1.2" fill="#eaeaec"/><circle cx="420" cy="418" r="1.1" fill="#eaeaec"/><circle cx="226" cy="416" r="1.2" fill="#eaeaec"/><circle cx="315" cy="17" r="0.6" fill="#eaeaec"/><circle cx="64" cy="568" r="0.8" fill="#eaeaec"/><circle cx="246" cy="258" r="0.6" fill="#eaeaec"/><circle cx="194" cy="454" r="1.2" fill="#eaeaec"/><circle cx="224" cy="638" r="0.8" fill="#eaeaec"/><circle cx="143" cy="704" r="0.7" fill="#eaeaec"/><circle cx="453" cy="67" r="1.1" fill="#eaeaec"/><circle cx="266" cy="640" r="0.6" fill="#eaeaec"/><circle cx="12" cy="420" r="0.6" fill="#eaeaec"/><circle cx="57" cy="135" r="1.2" fill="#eaeaec"/><circle cx="62" cy="490" r="1.0" fill="#eaeaec"/><circle cx="384" cy="357" r="0.8" fill="#eaeaec"/><circle cx="336" cy="212" r="1.3" fill="#eaeaec"/><circle cx="37" cy="642" r="0.8" fill="#eaeaec"/><circle cx="439" cy="589" r="1.3" fill="#eaeaec"/><circle cx="2" cy="76" r="1.1" fill="#eaeaec"/><circle cx="179" cy="561" r="1.1" fill="#eaeaec"/><circle cx="408" cy="675" r="0.5" fill="#eaeaec"/><circle cx="42" cy="683" r="1.1" fill="#eaeaec"/><circle cx="384" cy="30" r="1.1" fill="#eaeaec"/><circle cx="384" cy="328" r="1.2" fill="#eaeaec"/><circle cx="14" cy="249" r="1.1" fill="#eaeaec"/><circle cx="234" cy="677" r="0.7" fill="#eaeaec"/><circle cx="480" cy="456" r="1.0" fill="#eaeaec"/><circle cx="537" cy="651" r="0.6" fill="#eaeaec"/><circle cx="498" cy="60" r="1.0" fill="#eaeaec"/><circle cx="43" cy="257" r="1.2" fill="#eaeaec"/><circle cx="386" cy="505" r="0.6" fill="#eaeaec"/><circle cx="501" cy="526" r="1.1" fill="#eaeaec"/><circle cx="261" cy="181" r="1.0" fill="#eaeaec"/><circle cx="298" cy="322" r="1.2" fill="#eaeaec"/><circle cx="218" cy="425" r="1.3" fill="#eaeaec"/><circle cx="91" cy="278" r="0.5" fill="#eaeaec"/><circle cx="502" cy="44" r="1.2" fill="#eaeaec"/><circle cx="43" cy="10" r="1.1" fill="#eaeaec"/><circle cx="364" cy="384" r="0.9" fill="#eaeaec"/><circle cx="90" cy="49" r="0.9" fill="#eaeaec"/><circle cx="372" cy="278" r="0.8" fill="#eaeaec"/><circle cx="186" cy="118" r="1.0" fill="#eaeaec"/><circle cx="277" cy="671" r="1.0" fill="#eaeaec"/><circle cx="341" cy="141" r="0.6" fill="#eaeaec"/><circle cx="256" cy="78" r="0.5" fill="#eaeaec"/><circle cx="223" cy="17" r="1.1" fill="#eaeaec"/><circle cx="425" cy="434" r="0.7" fill="#eaeaec"/><circle cx="397" cy="348" r="0.8" fill="#eaeaec"/><circle cx="262" cy="484" r="1.0" fill="#eaeaec"/><circle cx="73" cy="221" r="1.2" fill="#eaeaec"/><circle cx="362" cy="271" r="1.2" fill="#eaeaec"/><circle cx="506" cy="105" r="0.9" fill="#eaeaec"/><circle cx="489" cy="481" r="0.6" fill="#eaeaec"/><circle cx="482" cy="183" r="1.2" fill="#eaeaec"/><circle cx="206" cy="505" r="0.7" fill="#eaeaec"/><circle cx="172" cy="434" r="0.8" fill="#eaeaec"/><circle cx="340" cy="620" r="0.6" fill="#eaeaec"/><circle cx="209" cy="187" r="0.9" fill="#eaeaec"/><circle cx="136" cy="604" r="0.6" fill="#eaeaec"/><circle cx="289" cy="548" r="1.0" fill="#eaeaec"/><circle cx="205" cy="504" r="1.3" fill="#eaeaec"/><circle cx="201" cy="307" r="0.9" fill="#eaeaec"/><circle cx="426" cy="445" r="1.2" fill="#eaeaec"/><circle cx="455" cy="367" r="0.9" fill="#eaeaec"/><circle cx="108" cy="657" r="0.8" fill="#eaeaec"/><circle cx="30" cy="262" r="0.8" fill="#eaeaec"/><circle cx="519" cy="561" r="0.8" fill="#eaeaec"/><circle cx="515" cy="418" r="0.8" fill="#eaeaec"/><circle cx="499" cy="461" r="0.6" fill="#eaeaec"/><circle cx="13" cy="71" r="0.7" fill="#eaeaec"/><circle cx="479" cy="682" r="1.3" fill="#eaeaec"/><circle cx="305" cy="612" r="1.2" fill="#eaeaec"/><circle cx="531" cy="136" r="0.8" fill="#eaeaec"/><circle cx="120" cy="552" r="0.5" fill="#eaeaec"/><circle cx="427" cy="31" r="0.9" fill="#eaeaec"/><circle cx="55" cy="491" r="0.9" fill="#eaeaec"/><circle cx="283" cy="42" r="0.6" fill="#eaeaec"/><circle cx="76" cy="202" r="0.7" fill="#eaeaec"/><circle cx="168" cy="391" r="1.3" fill="#eaeaec"/><circle cx="298" cy="369" r="0.9" fill="#eaeaec"/><circle cx="414" cy="501" r="1.2" fill="#eaeaec"/><circle cx="212" cy="567" r="0.5" fill="#eaeaec"/><circle cx="135" cy="444" r="0.8" fill="#eaeaec"/><circle cx="33" cy="541" r="1.2" fill="#eaeaec"/><circle cx="243" cy="557" r="1.0" fill="#eaeaec"/><circle cx="216" cy="626" r="0.8" fill="#eaeaec"/><circle cx="382" cy="697" r="1.2" fill="#eaeaec"/><circle cx="432" cy="192" r="0.8" fill="#eaeaec"/><circle cx="455" cy="322" r="0.6" fill="#eaeaec"/><circle cx="218" cy="443" r="0.6" fill="#eaeaec"/><circle cx="140" cy="446" r="1.0" fill="#eaeaec"/><circle cx="423" cy="107" r="0.9" fill="#eaeaec"/><circle cx="99" cy="43" r="1.3" fill="#eaeaec"/><circle cx="524" cy="571" r="0.9" fill="#eaeaec"/><circle cx="17" cy="17" r="1.2" fill="#eaeaec"/><circle cx="342" cy="481" r="1.0" fill="#eaeaec"/><circle cx="334" cy="482" r="1.0" fill="#eaeaec"/><circle cx="127" cy="70" r="0.9" fill="#eaeaec"/><circle cx="265" cy="22" r="1.2" fill="#eaeaec"/><circle cx="478" cy="204" r="0.6" fill="#eaeaec"/><circle cx="308" cy="22" r="1.1" fill="#eaeaec"/><circle cx="292" cy="344" r="0.5" fill="#eaeaec"/><circle cx="164" cy="193" r="1.1" fill="#eaeaec"/><circle cx="83" cy="48" r="1.0" fill="#eaeaec"/><circle cx="394" cy="54" r="1.1" fill="#eaeaec"/><circle cx="531" cy="230" r="0.8" fill="#eaeaec"/><circle cx="368" cy="50" r="0.8" fill="#eaeaec"/><circle cx="179" cy="361" r="1.0" fill="#eaeaec"/><circle cx="500" cy="577" r="0.9" fill="#eaeaec"/><circle cx="54" cy="287" r="0.9" fill="#eaeaec"/><circle cx="47" cy="77" r="0.9" fill="#eaeaec"/><circle cx="362" cy="174" r="1.3" fill="#eaeaec"/><circle cx="247" cy="698" r="1.1" fill="#eaeaec"/><circle cx="43" cy="554" r="0.9" fill="#eaeaec"/><circle cx="43" cy="294" r="1.1" fill="#eaeaec"/><circle cx="218" cy="627" r="1.1" fill="#eaeaec"/><circle cx="165" cy="309" r="1.3" fill="#eaeaec"/><circle cx="333" cy="102" r="0.8" fill="#eaeaec"/><circle cx="99" cy="179" r="0.9" fill="#eaeaec"/><circle cx="152" cy="692" r="0.9" fill="#eaeaec"/><circle cx="290" cy="453" r="0.6" fill="#eaeaec"/><circle cx="374" cy="385" r="1.0" fill="#eaeaec"/><circle cx="46" cy="362" r="1.1" fill="#eaeaec"/><circle cx="175" cy="291" r="1.2" fill="#eaeaec"/><circle cx="41" cy="312" r="1.0" fill="#eaeaec"/><circle cx="64" cy="314" r="1.3" fill="#eaeaec"/><circle cx="292" cy="251" r="0.7" fill="#eaeaec"/><circle cx="184" cy="318" r="0.8" fill="#eaeaec"/><circle cx="278" cy="441" r="1.1" fill="#eaeaec"/><circle cx="444" cy="159" r="0.5" fill="#eaeaec"/><circle cx="267" cy="310" r="0.6" fill="#eaeaec"/><circle cx="268" cy="307" r="1.0" fill="#eaeaec"/><circle cx="183" cy="273" r="0.5" fill="#eaeaec"/><circle cx="75" cy="358" r="0.6" fill="#eaeaec"/><circle cx="524" cy="96" r="1.3" fill="#eaeaec"/><circle cx="441" cy="326" r="0.9" fill="#eaeaec"/><circle cx="257" cy="243" r="0.7" fill="#eaeaec"/><circle cx="199" cy="255" r="1.1" fill="#eaeaec"/><circle cx="354" cy="637" r="1.3" fill="#eaeaec"/><circle cx="154" cy="383" r="0.8" fill="#eaeaec"/><circle cx="70" cy="579" r="0.5" fill="#eaeaec"/><circle cx="158" cy="615" r="1.3" fill="#eaeaec"/><circle cx="230" cy="661" r="1.0" fill="#eaeaec"/><circle cx="484" cy="364" r="1.1" fill="#eaeaec"/><circle cx="414" cy="432" r="1.3" fill="#eaeaec"/><circle cx="116" cy="328" r="0.6" fill="#eaeaec"/><circle cx="9" cy="341" r="1.1" fill="#eaeaec"/><circle cx="497" cy="426" r="1.0" fill="#eaeaec"/><circle cx="435" cy="552" r="0.6" fill="#eaeaec"/><circle cx="45" cy="660" r="0.6" fill="#eaeaec"/><circle cx="179" cy="515" r="0.8" fill="#eaeaec"/><circle cx="359" cy="72" r="0.8" fill="#eaeaec"/><circle cx="104" cy="499" r="0.7" fill="#eaeaec"/><circle cx="535" cy="417" r="1.2" fill="#eaeaec"/><circle cx="175" cy="683" r="1.2" fill="#eaeaec"/><circle cx="515" cy="483" r="1.2" fill="#eaeaec"/><circle cx="218" cy="466" r="0.6" fill="#eaeaec"/><circle cx="108" cy="157" r="1.2" fill="#eaeaec"/><circle cx="467" cy="90" r="1.2" fill="#eaeaec"/><circle cx="295" cy="276" r="0.8" fill="#eaeaec"/><circle cx="51" cy="539" r="1.2" fill="#eaeaec"/><circle cx="41" cy="681" r="0.9" fill="#eaeaec"/><circle cx="151" cy="136" r="0.6" fill="#eaeaec"/><circle cx="420" cy="545" r="1.0" fill="#eaeaec"/><circle cx="34" cy="603" r="1.0" fill="#eaeaec"/><circle cx="440" cy="541" r="0.7" fill="#eaeaec"/><circle cx="309" cy="367" r="1.1" fill="#eaeaec"/><circle cx="341" cy="253" r="1.3" fill="#eaeaec"/><circle cx="89" cy="706" r="1.0" fill="#eaeaec"/><circle cx="74" cy="114" r="1.1" fill="#eaeaec"/><circle cx="87" cy="194" r="0.7" fill="#eaeaec"/><circle cx="469" cy="536" r="0.7" fill="#eaeaec"/><circle cx="133" cy="662" r="1.1" fill="#eaeaec"/><circle cx="75" cy="13" r="1.1" fill="#eaeaec"/><circle cx="72" cy="467" r="0.9" fill="#eaeaec"/><circle cx="529" cy="347" r="1.2" fill="#eaeaec"/><circle cx="473" cy="112" r="0.7" fill="#eaeaec"/><circle cx="323" cy="687" r="1.2" fill="#eaeaec"/><circle cx="299" cy="430" r="0.6" fill="#eaeaec"/><circle cx="129" cy="269" r="1.1" fill="#eaeaec"/><circle cx="46" cy="410" r="1.0" fill="#eaeaec"/><circle cx="143" cy="276" r="0.5" fill="#eaeaec"/><circle cx="526" cy="669" r="1.2" fill="#eaeaec"/><circle cx="120" cy="242" r="0.9" fill="#eaeaec"/><circle cx="350" cy="593" r="0.6" fill="#eaeaec"/><circle cx="367" cy="289" r="0.7" fill="#eaeaec"/><circle cx="353" cy="22" r="0.6" fill="#eaeaec"/><circle cx="88" cy="352" r="1.3" fill="#eaeaec"/><circle cx="240" cy="207" r="0.7" fill="#eaeaec"/><circle cx="530" cy="178" r="1.0" fill="#eaeaec"/><circle cx="251" cy="329" r="1.1" fill="#eaeaec"/><circle cx="423" cy="154" r="0.8" fill="#eaeaec"/><circle cx="494" cy="658" r="1.2" fill="#eaeaec"/><circle cx="300" cy="221" r="0.6" fill="#eaeaec"/><circle cx="300" cy="522" r="1.2" fill="#eaeaec"/><circle cx="112" cy="417" r="0.6" fill="#eaeaec"/><circle cx="188" cy="213" r="1.1" fill="#eaeaec"/><circle cx="86" cy="645" r="0.8" fill="#eaeaec"/><circle cx="211" cy="339" r="0.9" fill="#eaeaec"/><circle cx="158" cy="101" r="0.9" fill="#eaeaec"/><circle cx="451" cy="49" r="1.0" fill="#eaeaec"/><circle cx="455" cy="275" r="0.8" fill="#eaeaec"/><circle cx="277" cy="202" r="0.8" fill="#eaeaec"/><circle cx="26" cy="192" r="0.7" fill="#eaeaec"/><circle cx="448" cy="165" r="1.1" fill="#eaeaec"/><circle cx="204" cy="100" r="0.7" fill="#eaeaec"/><circle cx="125" cy="630" r="0.9" fill="#eaeaec"/><circle cx="91" cy="172" r="1.2" fill="#eaeaec"/><circle cx="86" cy="621" r="0.8" fill="#eaeaec"/><circle cx="543" cy="0" r="1.0" fill="#eaeaec"/><circle cx="85" cy="681" r="0.6" fill="#eaeaec"/><circle cx="394" cy="265" r="1.0" fill="#eaeaec"/><circle cx="399" cy="317" r="0.5" fill="#eaeaec"/><circle cx="429" cy="642" r="1.2" fill="#eaeaec"/><circle cx="199" cy="674" r="0.8" fill="#eaeaec"/><circle cx="180" cy="593" r="0.9" fill="#eaeaec"/><circle cx="523" cy="328" r="1.0" fill="#eaeaec"/><circle cx="299" cy="265" r="0.7" fill="#eaeaec"/><circle cx="86" cy="295" r="1.3" fill="#eaeaec"/><circle cx="461" cy="256" r="0.5" fill="#eaeaec"/><circle cx="39" cy="542" r="0.5" fill="#eaeaec"/><circle cx="187" cy="659" r="0.7" fill="#eaeaec"/><circle cx="510" cy="485" r="0.6" fill="#eaeaec"/><circle cx="117" cy="595" r="1.2" fill="#eaeaec"/><circle cx="132" cy="157" r="1.3" fill="#eaeaec"/><circle cx="208" cy="328" r="0.6" fill="#eaeaec"/><circle cx="68" cy="66" r="0.9" fill="#eaeaec"/><circle cx="483" cy="68" r="1.3" fill="#eaeaec"/><circle cx="277" cy="297" r="1.2" fill="#eaeaec"/><circle cx="467" cy="574" r="0.9" fill="#eaeaec"/><circle cx="506" cy="422" r="0.6" fill="#eaeaec"/><circle cx="186" cy="203" r="1.0" fill="#eaeaec"/><circle cx="316" cy="322" r="0.9" fill="#eaeaec"/><circle cx="241" cy="310" r="0.8" fill="#eaeaec"/><circle cx="130" cy="649" r="1.0" fill="#eaeaec"/><circle cx="501" cy="33" r="0.9" fill="#eaeaec"/><circle cx="267" cy="443" r="1.2" fill="#eaeaec"/><circle cx="338" cy="277" r="0.6" fill="#eaeaec"/><circle cx="262" cy="417" r="0.6" fill="#eaeaec"/><circle cx="110" cy="34" r="0.7" fill="#eaeaec"/><circle cx="211" cy="197" r="0.8" fill="#eaeaec"/><circle cx="430" cy="408" r="0.8" fill="#eaeaec"/><circle cx="450" cy="495" r="1.0" fill="#eaeaec"/><circle cx="481" cy="495" r="1.3" fill="#eaeaec"/><circle cx="352" cy="644" r="0.6" fill="#eaeaec"/><circle cx="342" cy="675" r="0.8" fill="#eaeaec"/><circle cx="535" cy="537" r="1.1" fill="#eaeaec"/><circle cx="500" cy="482" r="0.8" fill="#eaeaec"/><circle cx="543" cy="671" r="0.8" fill="#eaeaec"/><circle cx="19" cy="435" r="1.1" fill="#eaeaec"/><circle cx="224" cy="22" r="0.6" fill="#eaeaec"/><circle cx="395" cy="232" r="0.8" fill="#eaeaec"/><circle cx="446" cy="282" r="1.3" fill="#eaeaec"/><circle cx="189" cy="102" r="0.8" fill="#eaeaec"/><circle cx="514" cy="9" r="0.6" fill="#eaeaec"/><circle cx="66" cy="244" r="0.7" fill="#eaeaec"/><circle cx="449" cy="375" r="1.2" fill="#eaeaec"/><circle cx="230" cy="531" r="1.1" fill="#eaeaec"/><circle cx="352" cy="337" r="0.8" fill="#eaeaec"/><circle cx="87" cy="554" r="1.2" fill="#eaeaec"/><circle cx="92" cy="536" r="1.2" fill="#eaeaec"/><circle cx="366" cy="325" r="1.3" fill="#eaeaec"/><circle cx="175" cy="279" r="0.8" fill="#eaeaec"/><circle cx="187" cy="222" r="0.6" fill="#eaeaec"/><circle cx="367" cy="479" r="1.1" fill="#eaeaec"/><circle cx="335" cy="551" r="1.2" fill="#eaeaec"/><circle cx="134" cy="180" r="1.0" fill="#eaeaec"/><circle cx="186" cy="470" r="1.1" fill="#eaeaec"/><circle cx="161" cy="458" r="0.9" fill="#eaeaec"/><circle cx="410" cy="93" r="0.7" fill="#eaeaec"/><circle cx="115" cy="49" r="1.0" fill="#eaeaec"/><circle cx="221" cy="578" r="1.3" fill="#eaeaec"/><circle cx="43" cy="356" r="0.9" fill="#eaeaec"/><circle cx="304" cy="311" r="0.7" fill="#eaeaec"/><circle cx="400" cy="32" r="1.3" fill="#eaeaec"/><circle cx="496" cy="364" r="1.2" fill="#eaeaec"/><circle cx="391" cy="184" r="0.6" fill="#eaeaec"/><circle cx="353" cy="499" r="1.2" fill="#eaeaec"/><circle cx="318" cy="404" r="1.1" fill="#eaeaec"/><circle cx="370" cy="369" r="0.8" fill="#eaeaec"/><circle cx="261" cy="380" r="0.8" fill="#eaeaec"/><circle cx="504" cy="202" r="0.8" fill="#eaeaec"/><circle cx="46" cy="25" r="0.7" fill="#eaeaec"/><circle cx="399" cy="632" r="1.0" fill="#eaeaec"/><circle cx="449" cy="157" r="0.6" fill="#eaeaec"/><circle cx="527" cy="133" r="0.8" fill="#eaeaec"/><circle cx="362" cy="154" r="0.5" fill="#eaeaec"/><circle cx="408" cy="696" r="1.2" fill="#eaeaec"/><circle cx="120" cy="177" r="0.6" fill="#eaeaec"/><circle cx="353" cy="656" r="1.0" fill="#eaeaec"/><circle cx="195" cy="607" r="1.2" fill="#eaeaec"/><circle cx="267" cy="46" r="1.1" fill="#eaeaec"/><circle cx="179" cy="52" r="0.8" fill="#eaeaec"/><circle cx="309" cy="59" r="0.6" fill="#eaeaec"/><circle cx="411" cy="225" r="0.8" fill="#eaeaec"/><circle cx="392" cy="647" r="1.2" fill="#eaeaec"/><circle cx="0" cy="645" r="0.9" fill="#eaeaec"/><circle cx="314" cy="98" r="1.2" fill="#eaeaec"/><circle cx="165" cy="156" r="0.8" fill="#eaeaec"/><circle cx="528" cy="188" r="0.9" fill="#eaeaec"/><circle cx="371" cy="671" r="0.6" fill="#eaeaec"/><circle cx="321" cy="630" r="0.5" fill="#eaeaec"/><circle cx="282" cy="186" r="0.9" fill="#eaeaec"/><circle cx="462" cy="266" r="1.2" fill="#eaeaec"/><circle cx="417" cy="147" r="1.1" fill="#eaeaec"/><circle cx="216" cy="243" r="0.9" fill="#eaeaec"/><circle cx="544" cy="559" r="0.9" fill="#eaeaec"/><circle cx="37" cy="255" r="0.5" fill="#eaeaec"/><circle cx="193" cy="466" r="0.6" fill="#eaeaec"/><circle cx="279" cy="38" r="1.0" fill="#eaeaec"/><circle cx="100" cy="163" r="1.0" fill="#eaeaec"/><circle cx="221" cy="330" r="0.9" fill="#eaeaec"/><circle cx="18" cy="52" r="0.8" fill="#eaeaec"/><circle cx="257" cy="103" r="1.0" fill="#eaeaec"/><circle cx="281" cy="196" r="0.6" fill="#eaeaec"/><circle cx="474" cy="559" r="0.7" fill="#eaeaec"/><circle cx="141" cy="640" r="0.6" fill="#eaeaec"/><circle cx="383" cy="135" r="1.0" fill="#eaeaec"/><circle cx="436" cy="546" r="1.1" fill="#eaeaec"/><circle cx="270" cy="426" r="0.9" fill="#eaeaec"/><circle cx="453" cy="413" r="1.1" fill="#eaeaec"/><circle cx="158" cy="705" r="0.8" fill="#eaeaec"/><circle cx="169" cy="259" r="1.0" fill="#eaeaec"/><circle cx="70" cy="376" r="1.2" fill="#eaeaec"/><circle cx="166" cy="97" r="1.2" fill="#eaeaec"/><circle cx="370" cy="103" r="0.6" fill="#eaeaec"/><circle cx="489" cy="276" r="0.7" fill="#eaeaec"/><circle cx="272" cy="169" r="1.3" fill="#eaeaec"/><circle cx="39" cy="268" r="1.2" fill="#eaeaec"/><circle cx="98" cy="452" r="1.2" fill="#eaeaec"/><circle cx="112" cy="369" r="1.2" fill="#eaeaec"/><circle cx="146" cy="230" r="1.0" fill="#eaeaec"/><circle cx="241" cy="469" r="1.3" fill="#eaeaec"/><circle cx="343" cy="654" r="0.8" fill="#eaeaec"/><circle cx="68" cy="559" r="0.6" fill="#eaeaec"/><circle cx="474" cy="605" r="1.3" fill="#eaeaec"/><circle cx="365" cy="327" r="1.2" fill="#eaeaec"/><circle cx="238" cy="577" r="0.6" fill="#eaeaec"/><circle cx="352" cy="514" r="0.6" fill="#eaeaec"/><circle cx="232" cy="284" r="0.5" fill="#eaeaec"/><circle cx="179" cy="694" r="1.3" fill="#eaeaec"/><circle cx="152" cy="187" r="0.9" fill="#eaeaec"/><circle cx="352" cy="378" r="0.9" fill="#eaeaec"/><circle cx="402" cy="664" r="1.1" fill="#eaeaec"/><circle cx="443" cy="466" r="0.8" fill="#eaeaec"/><circle cx="484" cy="661" r="1.2" fill="#eaeaec"/><circle cx="285" cy="425" r="0.9" fill="#eaeaec"/><circle cx="74" cy="320" r="1.2" fill="#eaeaec"/><circle cx="105" cy="322" r="0.6" fill="#eaeaec"/><circle cx="463" cy="405" r="0.7" fill="#eaeaec"/><circle cx="301" cy="44" r="0.7" fill="#eaeaec"/><circle cx="215" cy="142" r="0.8" fill="#eaeaec"/><circle cx="28" cy="129" r="1.0" fill="#eaeaec"/><circle cx="349" cy="185" r="1.1" fill="#eaeaec"/><circle cx="154" cy="356" r="0.7" fill="#eaeaec"/><circle cx="124" cy="471" r="1.0" fill="#eaeaec"/><circle cx="24" cy="572" r="0.7" fill="#eaeaec"/><circle cx="43" cy="117" r="1.0" fill="#eaeaec"/><circle cx="227" cy="253" r="0.5" fill="#eaeaec"/><circle cx="398" cy="608" r="1.0" fill="#eaeaec"/><circle cx="540" cy="44" r="1.0" fill="#eaeaec"/><circle cx="82" cy="434" r="1.2" fill="#eaeaec"/><circle cx="387" cy="295" r="1.1" fill="#eaeaec"/><circle cx="34" cy="441" r="0.7" fill="#eaeaec"/><circle cx="171" cy="516" r="1.3" fill="#eaeaec"/><circle cx="71" cy="222" r="0.8" fill="#eaeaec"/><circle cx="4" cy="476" r="0.6" fill="#eaeaec"/><circle cx="425" cy="370" r="0.9" fill="#eaeaec"/><circle cx="135" cy="353" r="1.0" fill="#eaeaec"/><circle cx="510" cy="126" r="0.7" fill="#eaeaec"/><circle cx="164" cy="702" r="0.9" fill="#eaeaec"/><circle cx="324" cy="287" r="0.9" fill="#eaeaec"/><circle cx="476" cy="256" r="0.8" fill="#eaeaec"/><circle cx="235" cy="329" r="0.7" fill="#eaeaec"/><circle cx="245" cy="385" r="0.5" fill="#eaeaec"/><circle cx="311" cy="11" r="0.9" fill="#eaeaec"/><circle cx="194" cy="210" r="1.0" fill="#eaeaec"/><circle cx="285" cy="445" r="0.6" fill="#eaeaec"/><circle cx="110" cy="189" r="0.9" fill="#eaeaec"/><circle cx="281" cy="385" r="1.3" fill="#eaeaec"/><circle cx="203" cy="185" r="1.3" fill="#eaeaec"/><circle cx="61" cy="634" r="1.0" fill="#eaeaec"/><circle cx="435" cy="242" r="1.0" fill="#eaeaec"/><circle cx="186" cy="493" r="1.0" fill="#eaeaec"/><circle cx="161" cy="582" r="0.6" fill="#eaeaec"/><circle cx="329" cy="102" r="0.7" fill="#eaeaec"/><circle cx="320" cy="117" r="1.1" fill="#eaeaec"/><circle cx="475" cy="619" r="0.6" fill="#eaeaec"/><circle cx="280" cy="666" r="0.9" fill="#eaeaec"/><circle cx="240" cy="367" r="0.8" fill="#eaeaec"/><circle cx="123" cy="189" r="1.2" fill="#eaeaec"/><circle cx="479" cy="238" r="0.9" fill="#eaeaec"/><circle cx="24" cy="138" r="0.9" fill="#eaeaec"/><circle cx="432" cy="345" r="0.9" fill="#eaeaec"/><circle cx="0" cy="619" r="0.8" fill="#eaeaec"/><circle cx="220" cy="363" r="0.8" fill="#eaeaec"/><circle cx="96" cy="397" r="0.7" fill="#eaeaec"/><circle cx="210" cy="576" r="1.1" fill="#eaeaec"/><circle cx="507" cy="408" r="0.9" fill="#eaeaec"/><circle cx="19" cy="629" r="1.1" fill="#eaeaec"/><circle cx="526" cy="298" r="0.8" fill="#eaeaec"/><circle cx="492" cy="224" r="0.6" fill="#eaeaec"/><circle cx="167" cy="179" r="1.1" fill="#eaeaec"/><circle cx="510" cy="64" r="1.2" fill="#eaeaec"/><circle cx="11" cy="664" r="1.2" fill="#eaeaec"/><circle cx="145" cy="271" r="1.0" fill="#eaeaec"/><circle cx="440" cy="607" r="0.8" fill="#eaeaec"/><circle cx="215" cy="547" r="0.9" fill="#eaeaec"/><circle cx="12" cy="471" r="0.6" fill="#eaeaec"/><circle cx="281" cy="254" r="0.8" fill="#eaeaec"/><circle cx="51" cy="29" r="0.5" fill="#eaeaec"/><circle cx="519" cy="415" r="1.1" fill="#eaeaec"/><circle cx="192" cy="578" r="1.2" fill="#eaeaec"/><circle cx="75" cy="643" r="0.7" fill="#eaeaec"/><circle cx="236" cy="651" r="1.2" fill="#eaeaec"/><circle cx="104" cy="351" r="0.6" fill="#eaeaec"/><circle cx="253" cy="225" r="1.1" fill="#eaeaec"/><circle cx="506" cy="406" r="1.1" fill="#eaeaec"/><circle cx="537" cy="111" r="0.6" fill="#eaeaec"/><circle cx="168" cy="244" r="1.2" fill="#eaeaec"/><circle cx="486" cy="11" r="1.2" fill="#eaeaec"/><circle cx="255" cy="621" r="1.1" fill="#eaeaec"/><circle cx="259" cy="147" r="0.7" fill="#eaeaec"/><circle cx="245" cy="536" r="1.0" fill="#eaeaec"/><circle cx="336" cy="299" r="0.6" fill="#eaeaec"/><circle cx="196" cy="308" r="0.7" fill="#eaeaec"/><circle cx="328" cy="449" r="1.0" fill="#eaeaec"/><circle cx="42" cy="45" r="1.2" fill="#eaeaec"/><circle cx="265" cy="695" r="1.0" fill="#eaeaec"/><circle cx="402" cy="46" r="0.6" fill="#eaeaec"/><circle cx="369" cy="144" r="1.1" fill="#eaeaec"/><circle cx="91" cy="31" r="0.7" fill="#eaeaec"/><circle cx="217" cy="256" r="0.6" fill="#eaeaec"/><circle cx="36" cy="563" r="0.7" fill="#eaeaec"/><circle cx="436" cy="334" r="1.2" fill="#eaeaec"/><circle cx="419" cy="423" r="0.6" fill="#eaeaec"/><circle cx="230" cy="418" r="0.6" fill="#eaeaec"/><circle cx="19" cy="111" r="0.9" fill="#eaeaec"/><circle cx="153" cy="58" r="1.0" fill="#eaeaec"/><circle cx="436" cy="464" r="1.0" fill="#eaeaec"/><circle cx="368" cy="532" r="1.1" fill="#eaeaec"/><circle cx="70" cy="171" r="0.6" fill="#eaeaec"/><circle cx="293" cy="348" r="1.1" fill="#eaeaec"/><circle cx="170" cy="473" r="1.2" fill="#eaeaec"/><circle cx="198" cy="244" r="0.5" fill="#eaeaec"/><circle cx="27" cy="72" r="1.1" fill="#eaeaec"/><circle cx="19" cy="68" r="0.8" fill="#eaeaec"/><circle cx="363" cy="258" r="0.6" fill="#eaeaec"/><circle cx="105" cy="178" r="1.1" fill="#eaeaec"/><circle cx="342" cy="190" r="1.0" fill="#eaeaec"/><circle cx="351" cy="478" r="1.0" fill="#eaeaec"/><circle cx="84" cy="642" r="0.9" fill="#eaeaec"/><circle cx="420" cy="337" r="0.8" fill="#eaeaec"/><circle cx="61" cy="579" r="0.9" fill="#eaeaec"/><circle cx="195" cy="112" r="0.8" fill="#eaeaec"/><circle cx="370" cy="96" r="0.5" fill="#eaeaec"/><circle cx="436" cy="663" r="1.2" fill="#eaeaec"/><circle cx="20" cy="437" r="0.5" fill="#eaeaec"/><circle cx="92" cy="574" r="0.9" fill="#eaeaec"/><circle cx="303" cy="326" r="0.8" fill="#eaeaec"/><circle cx="60" cy="108" r="1.1" fill="#eaeaec"/><circle cx="399" cy="130" r="1.1" fill="#eaeaec"/><circle cx="194" cy="541" r="0.8" fill="#eaeaec"/><circle cx="143" cy="694" r="1.0" fill="#eaeaec"/><circle cx="301" cy="653" r="0.6" fill="#eaeaec"/><circle cx="421" cy="520" r="0.9" fill="#eaeaec"/><circle cx="480" cy="665" r="1.3" fill="#eaeaec"/><circle cx="318" cy="287" r="0.6" fill="#eaeaec"/><circle cx="170" cy="238" r="1.1" fill="#eaeaec"/><circle cx="278" cy="424" r="1.2" fill="#eaeaec"/><circle cx="188" cy="125" r="1.2" fill="#eaeaec"/><circle cx="282" cy="493" r="0.7" fill="#eaeaec"/><circle cx="273" cy="577" r="0.9" fill="#eaeaec"/><circle cx="340" cy="223" r="1.1" fill="#eaeaec"/><circle cx="305" cy="227" r="0.7" fill="#eaeaec"/><circle cx="45" cy="96" r="0.9" fill="#eaeaec"/><circle cx="500" cy="399" r="1.3" fill="#eaeaec"/><circle cx="396" cy="142" r="1.2" fill="#eaeaec"/><circle cx="205" cy="64" r="1.3" fill="#eaeaec"/><circle cx="252" cy="659" r="0.6" fill="#eaeaec"/><circle cx="465" cy="184" r="0.8" fill="#eaeaec"/><circle cx="220" cy="473" r="1.3" fill="#eaeaec"/><circle cx="183" cy="497" r="1.0" fill="#eaeaec"/><circle cx="236" cy="679" r="0.8" fill="#eaeaec"/><circle cx="30" cy="376" r="0.8" fill="#eaeaec"/><circle cx="444" cy="272" r="0.8" fill="#eaeaec"/><circle cx="171" cy="111" r="1.2" fill="#eaeaec"/><circle cx="429" cy="364" r="0.6" fill="#eaeaec"/><circle cx="376" cy="166" r="0.7" fill="#eaeaec"/><circle cx="147" cy="365" r="0.8" fill="#eaeaec"/><circle cx="177" cy="499" r="1.3" fill="#eaeaec"/><circle cx="189" cy="81" r="0.7" fill="#eaeaec"/><circle cx="30" cy="5" r="0.9" fill="#eaeaec"/><circle cx="369" cy="672" r="0.7" fill="#eaeaec"/><circle cx="324" cy="651" r="1.1" fill="#eaeaec"/><circle cx="337" cy="659" r="0.9" fill="#eaeaec"/><circle cx="103" cy="439" r="1.2" fill="#eaeaec"/><circle cx="355" cy="553" r="1.0" fill="#eaeaec"/><circle cx="229" cy="84" r="1.0" fill="#eaeaec"/><circle cx="369" cy="480" r="1.1" fill="#eaeaec"/><circle cx="418" cy="419" r="1.2" fill="#eaeaec"/><circle cx="291" cy="385" r="1.1" fill="#eaeaec"/><circle cx="422" cy="695" r="1.1" fill="#eaeaec"/><circle cx="337" cy="659" r="0.6" fill="#eaeaec"/><circle cx="354" cy="139" r="0.7" fill="#eaeaec"/><circle cx="265" cy="455" r="0.8" fill="#eaeaec"/><circle cx="338" cy="316" r="0.7" fill="#eaeaec"/><circle cx="60" cy="141" r="0.8" fill="#eaeaec"/><circle cx="321" cy="221" r="0.8" fill="#eaeaec"/><circle cx="442" cy="257" r="0.6" fill="#eaeaec"/><circle cx="240" cy="575" r="0.6" fill="#eaeaec"/><circle cx="118" cy="663" r="0.9" fill="#eaeaec"/><circle cx="374" cy="114" r="0.9" fill="#eaeaec"/><circle cx="162" cy="621" r="1.2" fill="#eaeaec"/><circle cx="320" cy="220" r="1.2" fill="#eaeaec"/><circle cx="233" cy="575" r="0.9" fill="#eaeaec"/><circle cx="86" cy="582" r="0.7" fill="#eaeaec"/><circle cx="76" cy="74" r="0.9" fill="#eaeaec"/><circle cx="152" cy="34" r="0.6" fill="#eaeaec"/><circle cx="17" cy="376" r="0.7" fill="#eaeaec"/><circle cx="488" cy="621" r="0.8" fill="#eaeaec"/><circle cx="20" cy="605" r="0.5" fill="#eaeaec"/><circle cx="206" cy="54" r="0.9" fill="#eaeaec"/><circle cx="235" cy="356" r="1.1" fill="#eaeaec"/><circle cx="446" cy="287" r="0.8" fill="#eaeaec"/><circle cx="270" cy="663" r="0.7" fill="#eaeaec"/><circle cx="202" cy="213" r="0.5" fill="#eaeaec"/><circle cx="276" cy="438" r="1.2" fill="#eaeaec"/><circle cx="486" cy="446" r="1.2" fill="#eaeaec"/><circle cx="245" cy="93" r="1.1" fill="#eaeaec"/><circle cx="151" cy="308" r="0.7" fill="#eaeaec"/><circle cx="414" cy="191" r="1.2" fill="#eaeaec"/><circle cx="539" cy="39" r="0.9" fill="#eaeaec"/><circle cx="508" cy="38" r="1.3" fill="#eaeaec"/><circle cx="268" cy="3" r="0.5" fill="#eaeaec"/><circle cx="312" cy="707" r="0.9" fill="#eaeaec"/><circle cx="443" cy="506" r="0.6" fill="#eaeaec"/><circle cx="367" cy="464" r="0.8" fill="#eaeaec"/><circle cx="273" cy="649" r="1.2" fill="#eaeaec"/><circle cx="118" cy="534" r="0.8" fill="#eaeaec"/><circle cx="463" cy="110" r="1.1" fill="#eaeaec"/><circle cx="362" cy="135" r="0.5" fill="#eaeaec"/><circle cx="82" cy="227" r="0.6" fill="#eaeaec"/><circle cx="313" cy="703" r="1.0" fill="#eaeaec"/><circle cx="369" cy="289" r="0.7" fill="#eaeaec"/><circle cx="344" cy="630" r="1.1" fill="#eaeaec"/><circle cx="343" cy="46" r="1.2" fill="#eaeaec"/><circle cx="112" cy="418" r="1.0" fill="#eaeaec"/><circle cx="5" cy="476" r="1.1" fill="#eaeaec"/><circle cx="179" cy="157" r="0.8" fill="#eaeaec"/><circle cx="253" cy="610" r="0.7" fill="#eaeaec"/><circle cx="420" cy="700" r="1.2" fill="#eaeaec"/><circle cx="67" cy="606" r="1.3" fill="#eaeaec"/><circle cx="48" cy="189" r="0.6" fill="#eaeaec"/><circle cx="214" cy="358" r="0.9" fill="#eaeaec"/><circle cx="270" cy="243" r="1.0" fill="#eaeaec"/><circle cx="470" cy="109" r="1.0" fill="#eaeaec"/><circle cx="33" cy="642" r="0.9" fill="#eaeaec"/><circle cx="188" cy="132" r="0.8" fill="#eaeaec"/><circle cx="96" cy="170" r="0.6" fill="#eaeaec"/><circle cx="141" cy="212" r="0.9" fill="#eaeaec"/><circle cx="349" cy="145" r="1.2" fill="#eaeaec"/><circle cx="134" cy="327" r="0.6" fill="#eaeaec"/><circle cx="197" cy="377" r="0.8" fill="#eaeaec"/><circle cx="388" cy="403" r="1.1" fill="#eaeaec"/><circle cx="18" cy="396" r="0.7" fill="#eaeaec"/><circle cx="383" cy="252" r="1.2" fill="#eaeaec"/><circle cx="181" cy="645" r="0.7" fill="#eaeaec"/><circle cx="416" cy="24" r="1.0" fill="#eaeaec"/><circle cx="209" cy="690" r="1.1" fill="#eaeaec"/><circle cx="111" cy="489" r="1.1" fill="#eaeaec"/><circle cx="258" cy="2" r="0.8" fill="#eaeaec"/><circle cx="485" cy="175" r="0.9" fill="#eaeaec"/><circle cx="74" cy="364" r="1.0" fill="#eaeaec"/><circle cx="396" cy="667" r="0.7" fill="#eaeaec"/><circle cx="33" cy="37" r="0.8" fill="#eaeaec"/><circle cx="299" cy="493" r="1.2" fill="#eaeaec"/><circle cx="202" cy="707" r="1.0" fill="#eaeaec"/><circle cx="388" cy="604" r="0.7" fill="#eaeaec"/><circle cx="18" cy="620" r="1.1" fill="#eaeaec"/><circle cx="373" cy="149" r="0.8" fill="#eaeaec"/><circle cx="146" cy="670" r="0.6" fill="#eaeaec"/><circle cx="62" cy="644" r="0.7" fill="#eaeaec"/><circle cx="113" cy="642" r="0.6" fill="#eaeaec"/><circle cx="6" cy="37" r="0.9" fill="#eaeaec"/><circle cx="407" cy="116" r="0.5" fill="#eaeaec"/><circle cx="194" cy="658" r="1.2" fill="#eaeaec"/><circle cx="43" cy="304" r="1.3" fill="#eaeaec"/><circle cx="341" cy="642" r="0.5" fill="#eaeaec"/><circle cx="233" cy="141" r="1.3" fill="#eaeaec"/><circle cx="43" cy="76" r="0.8" fill="#eaeaec"/><circle cx="428" cy="546" r="0.6" fill="#eaeaec"/><circle cx="318" cy="614" r="0.6" fill="#eaeaec"/><circle cx="235" cy="596" r="0.7" fill="#eaeaec"/><circle cx="527" cy="489" r="0.9" fill="#eaeaec"/><circle cx="317" cy="165" r="1.0" fill="#eaeaec"/><circle cx="494" cy="687" r="0.7" fill="#eaeaec"/><circle cx="98" cy="694" r="1.0" fill="#eaeaec"/><circle cx="419" cy="22" r="0.8" fill="#eaeaec"/><circle cx="224" cy="281" r="0.5" fill="#eaeaec"/><circle cx="3" cy="306" r="1.3" fill="#eaeaec"/><circle cx="527" cy="699" r="1.0" fill="#eaeaec"/><circle cx="38" cy="386" r="0.9" fill="#eaeaec"/><circle cx="348" cy="390" r="1.3" fill="#eaeaec"/><circle cx="407" cy="414" r="0.9" fill="#eaeaec"/><circle cx="271" cy="647" r="0.8" fill="#eaeaec"/><circle cx="481" cy="242" r="1.3" fill="#eaeaec"/><circle cx="415" cy="546" r="1.0" fill="#eaeaec"/><circle cx="291" cy="415" r="0.9" fill="#eaeaec"/><circle cx="118" cy="675" r="0.6" fill="#eaeaec"/><circle cx="121" cy="430" r="1.1" fill="#eaeaec"/><circle cx="180" cy="675" r="0.9" fill="#eaeaec"/><circle cx="294" cy="172" r="1.1" fill="#eaeaec"/><circle cx="154" cy="121" r="1.1" fill="#eaeaec"/><circle cx="53" cy="185" r="0.5" fill="#eaeaec"/><circle cx="489" cy="557" r="0.8" fill="#eaeaec"/><circle cx="406" cy="452" r="0.7" fill="#eaeaec"/><circle cx="13" cy="193" r="0.6" fill="#eaeaec"/><circle cx="416" cy="52" r="0.7" fill="#eaeaec"/><circle cx="56" cy="86" r="1.1" fill="#eaeaec"/><circle cx="350" cy="462" r="1.1" fill="#eaeaec"/><circle cx="335" cy="175" r="0.9" fill="#eaeaec"/><circle cx="499" cy="303" r="1.0" fill="#eaeaec"/><circle cx="84" cy="77" r="0.8" fill="#eaeaec"/><circle cx="100" cy="387" r="1.2" fill="#eaeaec"/><circle cx="107" cy="503" r="0.8" fill="#eaeaec"/><circle cx="235" cy="708" r="0.9" fill="#eaeaec"/><circle cx="330" cy="220" r="0.9" fill="#eaeaec"/><circle cx="215" cy="296" r="1.2" fill="#eaeaec"/><circle cx="134" cy="581" r="1.1" fill="#eaeaec"/><circle cx="337" cy="25" r="0.8" fill="#eaeaec"/><circle cx="373" cy="544" r="1.0" fill="#eaeaec"/><circle cx="15" cy="203" r="1.1" fill="#eaeaec"/><circle cx="311" cy="299" r="1.3" fill="#eaeaec"/><circle cx="445" cy="100" r="0.7" fill="#eaeaec"/><circle cx="88" cy="669" r="0.9" fill="#eaeaec"/><circle cx="197" cy="144" r="1.1" fill="#eaeaec"/><circle cx="255" cy="91" r="0.6" fill="#eaeaec"/><circle cx="167" cy="533" r="0.6" fill="#eaeaec"/><circle cx="515" cy="574" r="0.8" fill="#eaeaec"/><circle cx="416" cy="213" r="1.3" fill="#eaeaec"/><circle cx="224" cy="259" r="0.6" fill="#eaeaec"/><circle cx="257" cy="364" r="0.9" fill="#eaeaec"/><circle cx="372" cy="429" r="0.9" fill="#eaeaec"/><circle cx="126" cy="171" r="0.6" fill="#eaeaec"/><circle cx="265" cy="260" r="1.0" fill="#eaeaec"/><circle cx="262" cy="92" r="0.6" fill="#eaeaec"/><circle cx="268" cy="150" r="1.3" fill="#eaeaec"/><circle cx="197" cy="636" r="1.0" fill="#eaeaec"/><circle cx="189" cy="458" r="1.0" fill="#eaeaec"/><circle cx="222" cy="8" r="0.5" fill="#eaeaec"/><circle cx="79" cy="547" r="0.8" fill="#eaeaec"/><circle cx="80" cy="218" r="1.0" fill="#eaeaec"/><circle cx="437" cy="552" r="1.0" fill="#eaeaec"/><circle cx="221" cy="71" r="0.8" fill="#eaeaec"/><circle cx="169" cy="176" r="0.6" fill="#eaeaec"/><circle cx="162" cy="685" r="0.7" fill="#eaeaec"/><circle cx="129" cy="624" r="0.9" fill="#eaeaec"/><circle cx="244" cy="257" r="0.8" fill="#eaeaec"/><circle cx="29" cy="411" r="0.8" fill="#eaeaec"/><circle cx="112" cy="426" r="0.6" fill="#eaeaec"/><circle cx="2" cy="480" r="1.0" fill="#eaeaec"/><circle cx="348" cy="463" r="1.2" fill="#eaeaec"/><circle cx="399" cy="704" r="1.2" fill="#eaeaec"/><circle cx="161" cy="383" r="1.2" fill="#eaeaec"/><circle cx="436" cy="116" r="1.1" fill="#eaeaec"/><circle cx="266" cy="199" r="1.2" fill="#eaeaec"/><circle cx="464" cy="453" r="1.2" fill="#eaeaec"/><circle cx="319" cy="620" r="0.8" fill="#eaeaec"/><circle cx="190" cy="497" r="0.5" fill="#eaeaec"/><circle cx="53" cy="667" r="1.0" fill="#eaeaec"/><circle cx="56" cy="539" r="0.8" fill="#eaeaec"/><circle cx="9" cy="147" r="0.7" fill="#eaeaec"/><circle cx="196" cy="702" r="0.6" fill="#eaeaec"/><circle cx="465" cy="304" r="0.6" fill="#eaeaec"/><circle cx="469" cy="655" r="0.9" fill="#eaeaec"/><circle cx="339" cy="627" r="0.5" fill="#eaeaec"/><circle cx="423" cy="131" r="0.8" fill="#eaeaec"/><circle cx="47" cy="310" r="0.7" fill="#eaeaec"/><circle cx="53" cy="67" r="0.9" fill="#eaeaec"/><circle cx="361" cy="639" r="0.9" fill="#eaeaec"/><circle cx="161" cy="58" r="0.5" fill="#eaeaec"/><circle cx="128" cy="413" r="1.2" fill="#eaeaec"/><circle cx="505" cy="40" r="1.0" fill="#eaeaec"/><circle cx="392" cy="516" r="0.9" fill="#eaeaec"/><circle cx="462" cy="177" r="1.3" fill="#eaeaec"/><circle cx="406" cy="140" r="1.1" fill="#eaeaec"/><circle cx="453" cy="703" r="0.7" fill="#eaeaec"/><circle cx="537" cy="136" r="1.1" fill="#eaeaec"/><circle cx="149" cy="337" r="0.7" fill="#eaeaec"/><circle cx="444" cy="415" r="1.0" fill="#eaeaec"/><circle cx="24" cy="37" r="0.8" fill="#eaeaec"/><circle cx="521" cy="693" r="1.1" fill="#eaeaec"/><circle cx="104" cy="545" r="1.1" fill="#eaeaec"/><circle cx="275" cy="652" r="1.3" fill="#eaeaec"/><circle cx="478" cy="534" r="1.1" fill="#eaeaec"/><circle cx="89" cy="198" r="1.2" fill="#eaeaec"/><circle cx="533" cy="505" r="0.6" fill="#eaeaec"/><circle cx="310" cy="373" r="0.6" fill="#eaeaec"/><circle cx="539" cy="234" r="1.0" fill="#eaeaec"/><circle cx="139" cy="341" r="0.6" fill="#eaeaec"/><circle cx="467" cy="125" r="1.1" fill="#eaeaec"/><circle cx="253" cy="314" r="0.7" fill="#eaeaec"/><circle cx="38" cy="708" r="0.8" fill="#eaeaec"/><circle cx="9" cy="348" r="0.5" fill="#eaeaec"/><circle cx="100" cy="226" r="0.7" fill="#eaeaec"/><circle cx="429" cy="102" r="1.0" fill="#eaeaec"/><circle cx="174" cy="584" r="0.6" fill="#eaeaec"/><circle cx="194" cy="531" r="0.9" fill="#eaeaec"/><circle cx="320" cy="560" r="0.7" fill="#eaeaec"/><circle cx="315" cy="437" r="0.9" fill="#eaeaec"/><circle cx="375" cy="402" r="0.6" fill="#eaeaec"/><circle cx="440" cy="506" r="0.7" fill="#eaeaec"/><circle cx="36" cy="204" r="1.1" fill="#eaeaec"/><circle cx="166" cy="282" r="1.3" fill="#eaeaec"/><circle cx="487" cy="570" r="1.2" fill="#eaeaec"/><circle cx="272" cy="329" r="0.8" fill="#eaeaec"/><circle cx="124" cy="37" r="0.9" fill="#eaeaec"/><circle cx="358" cy="460" r="1.3" fill="#eaeaec"/><circle cx="428" cy="644" r="1.1" fill="#eaeaec"/><circle cx="502" cy="216" r="0.9" fill="#eaeaec"/><circle cx="359" cy="690" r="1.0" fill="#eaeaec"/><circle cx="404" cy="173" r="1.3" fill="#eaeaec"/><circle cx="184" cy="598" r="0.7" fill="#eaeaec"/><circle cx="284" cy="415" r="0.7" fill="#eaeaec"/><circle cx="135" cy="604" r="1.2" fill="#eaeaec"/><circle cx="532" cy="37" r="1.2" fill="#eaeaec"/><circle cx="310" cy="185" r="1.2" fill="#eaeaec"/><circle cx="436" cy="17" r="0.8" fill="#eaeaec"/><circle cx="399" cy="230" r="1.0" fill="#eaeaec"/><circle cx="145" cy="440" r="1.1" fill="#eaeaec"/><circle cx="496" cy="289" r="1.2" fill="#eaeaec"/><circle cx="115" cy="304" r="1.1" fill="#eaeaec"/><circle cx="9" cy="489" r="0.7" fill="#eaeaec"/><circle cx="472" cy="484" r="0.6" fill="#eaeaec"/><circle cx="248" cy="506" r="0.6" fill="#eaeaec"/><circle cx="185" cy="330" r="1.2" fill="#eaeaec"/><circle cx="301" cy="100" r="1.3" fill="#eaeaec"/><circle cx="211" cy="141" r="1.1" fill="#eaeaec"/><circle cx="422" cy="83" r="1.2" fill="#eaeaec"/><circle cx="60" cy="91" r="1.1" fill="#eaeaec"/><circle cx="65" cy="645" r="1.0" fill="#eaeaec"/><circle cx="350" cy="222" r="0.5" fill="#eaeaec"/><circle cx="88" cy="423" r="1.0" fill="#eaeaec"/><circle cx="371" cy="198" r="0.7" fill="#eaeaec"/><circle cx="323" cy="103" r="1.3" fill="#eaeaec"/><circle cx="83" cy="645" r="1.1" fill="#eaeaec"/><circle cx="223" cy="482" r="1.2" fill="#eaeaec"/><circle cx="440" cy="663" r="1.2" fill="#eaeaec"/><circle cx="303" cy="544" r="0.9" fill="#eaeaec"/><circle cx="63" cy="108" r="0.6" fill="#eaeaec"/><circle cx="517" cy="613" r="1.3" fill="#eaeaec"/><circle cx="149" cy="160" r="0.9" fill="#eaeaec"/><circle cx="190" cy="482" r="1.2" fill="#eaeaec"/><circle cx="164" cy="114" r="0.9" fill="#eaeaec"/><circle cx="324" cy="0" r="0.5" fill="#eaeaec"/><circle cx="494" cy="352" r="0.8" fill="#eaeaec"/><circle cx="531" cy="111" r="0.9" fill="#eaeaec"/><circle cx="382" cy="45" r="0.7" fill="#eaeaec"/><circle cx="327" cy="17" r="1.2" fill="#eaeaec"/><circle cx="283" cy="286" r="0.9" fill="#eaeaec"/><circle cx="397" cy="228" r="0.9" fill="#eaeaec"/><circle cx="379" cy="529" r="0.6" fill="#eaeaec"/><circle cx="193" cy="254" r="1.1" fill="#eaeaec"/><circle cx="334" cy="157" r="1.3" fill="#eaeaec"/><circle cx="472" cy="160" r="1.0" fill="#eaeaec"/><circle cx="386" cy="349" r="0.5" fill="#eaeaec"/><circle cx="95" cy="237" r="0.6" fill="#eaeaec"/><circle cx="236" cy="130" r="0.8" fill="#eaeaec"/><circle cx="519" cy="681" r="0.6" fill="#eaeaec"/><circle cx="457" cy="3" r="0.9" fill="#eaeaec"/><circle cx="527" cy="41" r="0.5" fill="#eaeaec"/><circle cx="543" cy="510" r="0.9" fill="#eaeaec"/><circle cx="540" cy="255" r="0.6" fill="#eaeaec"/><circle cx="156" cy="647" r="0.9" fill="#eaeaec"/><circle cx="478" cy="662" r="0.6" fill="#eaeaec"/><circle cx="256" cy="401" r="1.0" fill="#eaeaec"/><circle cx="488" cy="115" r="0.6" fill="#eaeaec"/><circle cx="516" cy="180" r="1.3" fill="#eaeaec"/><circle cx="323" cy="23" r="0.6" fill="#eaeaec"/><circle cx="414" cy="402" r="1.0" fill="#eaeaec"/><circle cx="504" cy="517" r="0.6" fill="#eaeaec"/><circle cx="171" cy="184" r="0.8" fill="#eaeaec"/><circle cx="280" cy="11" r="1.2" fill="#eaeaec"/><circle cx="32" cy="190" r="0.6" fill="#eaeaec"/><circle cx="499" cy="344" r="0.6" fill="#eaeaec"/><circle cx="292" cy="433" r="0.8" fill="#eaeaec"/><circle cx="354" cy="131" r="1.0" fill="#eaeaec"/><circle cx="431" cy="383" r="1.3" fill="#eaeaec"/><circle cx="493" cy="577" r="1.2" fill="#eaeaec"/><circle cx="121" cy="52" r="0.7" fill="#eaeaec"/><circle cx="474" cy="619" r="1.3" fill="#eaeaec"/><circle cx="142" cy="176" r="1.0" fill="#eaeaec"/><circle cx="319" cy="119" r="0.8" fill="#eaeaec"/><circle cx="429" cy="554" r="0.7" fill="#eaeaec"/><circle cx="220" cy="489" r="1.2" fill="#eaeaec"/><circle cx="452" cy="175" r="1.2" fill="#eaeaec"/><circle cx="458" cy="18" r="0.6" fill="#eaeaec"/><circle cx="405" cy="441" r="0.7" fill="#eaeaec"/><circle cx="166" cy="259" r="1.1" fill="#eaeaec"/><circle cx="439" cy="540" r="0.9" fill="#eaeaec"/><circle cx="178" cy="211" r="1.1" fill="#eaeaec"/><circle cx="144" cy="444" r="0.9" fill="#eaeaec"/><circle cx="497" cy="549" r="0.6" fill="#eaeaec"/><circle cx="386" cy="101" r="1.3" fill="#eaeaec"/><circle cx="359" cy="399" r="0.6" fill="#eaeaec"/><circle cx="296" cy="125" r="1.2" fill="#eaeaec"/><circle cx="524" cy="449" r="0.9" fill="#eaeaec"/><circle cx="113" cy="39" r="1.1" fill="#eaeaec"/><circle cx="207" cy="658" r="1.1" fill="#eaeaec"/><circle cx="442" cy="450" r="0.9" fill="#eaeaec"/><circle cx="4" cy="231" r="0.6" fill="#eaeaec"/><circle cx="465" cy="160" r="1.1" fill="#eaeaec"/><circle cx="532" cy="3" r="0.5" fill="#eaeaec"/><circle cx="461" cy="634" r="1.1" fill="#eaeaec"/><circle cx="410" cy="644" r="1.2" fill="#eaeaec"/><circle cx="234" cy="545" r="1.1" fill="#eaeaec"/><circle cx="4" cy="638" r="0.9" fill="#eaeaec"/><circle cx="171" cy="508" r="1.2" fill="#eaeaec"/><circle cx="269" cy="670" r="1.2" fill="#eaeaec"/><circle cx="220" cy="214" r="0.9" fill="#eaeaec"/><circle cx="525" cy="6" r="0.5" fill="#eaeaec"/><circle cx="413" cy="549" r="0.5" fill="#eaeaec"/><circle cx="293" cy="0" r="1.1" fill="#eaeaec"/><circle cx="266" cy="611" r="1.3" fill="#eaeaec"/><circle cx="34" cy="657" r="0.9" fill="#eaeaec"/><circle cx="162" cy="285" r="0.7" fill="#eaeaec"/><circle cx="376" cy="599" r="1.2" fill="#eaeaec"/><circle cx="462" cy="128" r="0.7" fill="#eaeaec"/><circle cx="489" cy="130" r="1.2" fill="#eaeaec"/><circle cx="462" cy="380" r="1.1" fill="#eaeaec"/><circle cx="255" cy="420" r="0.8" fill="#eaeaec"/><circle cx="181" cy="619" r="1.3" fill="#eaeaec"/><circle cx="228" cy="536" r="0.5" fill="#eaeaec"/><circle cx="469" cy="500" r="1.0" fill="#eaeaec"/><circle cx="397" cy="611" r="0.9" fill="#eaeaec"/><circle cx="32" cy="478" r="0.8" fill="#eaeaec"/><circle cx="461" cy="52" r="0.9" fill="#eaeaec"/><circle cx="74" cy="417" r="0.5" fill="#eaeaec"/><circle cx="523" cy="294" r="0.6" fill="#eaeaec"/><circle cx="457" cy="646" r="1.1" fill="#eaeaec"/><circle cx="396" cy="468" r="1.1" fill="#eaeaec"/><circle cx="267" cy="43" r="0.7" fill="#eaeaec"/><circle cx="182" cy="108" r="0.7" fill="#eaeaec"/><circle cx="392" cy="624" r="1.1" fill="#eaeaec"/><circle cx="68" cy="43" r="1.1" fill="#eaeaec"/><circle cx="475" cy="195" r="1.2" fill="#eaeaec"/><circle cx="148" cy="489" r="1.2" fill="#eaeaec"/><circle cx="22" cy="701" r="1.2" fill="#eaeaec"/><circle cx="540" cy="450" r="0.6" fill="#eaeaec"/><circle cx="188" cy="542" r="0.9" fill="#eaeaec"/><circle cx="160" cy="705" r="0.9" fill="#eaeaec"/><circle cx="190" cy="396" r="0.8" fill="#eaeaec"/><circle cx="279" cy="206" r="1.3" fill="#eaeaec"/><circle cx="106" cy="338" r="1.2" fill="#eaeaec"/><circle cx="447" cy="698" r="0.7" fill="#eaeaec"/><circle cx="237" cy="39" r="0.6" fill="#eaeaec"/><circle cx="434" cy="135" r="0.5" fill="#eaeaec"/><circle cx="432" cy="152" r="0.5" fill="#eaeaec"/><circle cx="308" cy="47" r="0.8" fill="#eaeaec"/><circle cx="259" cy="34" r="0.6" fill="#eaeaec"/><circle cx="74" cy="373" r="0.7" fill="#eaeaec"/><circle cx="174" cy="707" r="0.9" fill="#eaeaec"/><circle cx="256" cy="392" r="1.2" fill="#eaeaec"/><circle cx="372" cy="505" r="0.6" fill="#eaeaec"/><circle cx="475" cy="476" r="1.1" fill="#eaeaec"/><circle cx="27" cy="30" r="0.5" fill="#eaeaec"/><circle cx="98" cy="248" r="0.9" fill="#eaeaec"/><circle cx="310" cy="120" r="1.0" fill="#eaeaec"/><circle cx="319" cy="446" r="0.9" fill="#eaeaec"/><circle cx="481" cy="619" r="1.2" fill="#eaeaec"/><circle cx="225" cy="34" r="0.5" fill="#eaeaec"/><circle cx="402" cy="653" r="0.9" fill="#eaeaec"/><circle cx="485" cy="288" r="1.1" fill="#eaeaec"/><circle cx="482" cy="452" r="1.0" fill="#eaeaec"/><circle cx="378" cy="687" r="1.0" fill="#eaeaec"/><circle cx="155" cy="200" r="0.5" fill="#eaeaec"/><circle cx="472" cy="217" r="0.9" fill="#eaeaec"/><circle cx="407" cy="382" r="0.6" fill="#eaeaec"/><circle cx="16" cy="494" r="1.0" fill="#eaeaec"/><circle cx="10" cy="548" r="0.9" fill="#eaeaec"/><circle cx="307" cy="264" r="1.1" fill="#eaeaec"/><circle cx="351" cy="29" r="0.7" fill="#eaeaec"/><circle cx="522" cy="269" r="1.3" fill="#eaeaec"/><circle cx="406" cy="393" r="0.9" fill="#eaeaec"/><circle cx="142" cy="62" r="0.7" fill="#eaeaec"/><circle cx="81" cy="582" r="1.3" fill="#eaeaec"/><circle cx="442" cy="464" r="1.3" fill="#eaeaec"/><circle cx="13" cy="709" r="0.7" fill="#eaeaec"/><circle cx="285" cy="203" r="1.0" fill="#eaeaec"/><circle cx="373" cy="387" r="1.1" fill="#eaeaec"/><circle cx="526" cy="108" r="1.0" fill="#eaeaec"/><circle cx="113" cy="463" r="0.9" fill="#eaeaec"/><circle cx="43" cy="73" r="1.0" fill="#eaeaec"/><circle cx="487" cy="135" r="0.7" fill="#eaeaec"/><circle cx="339" cy="473" r="1.1" fill="#eaeaec"/><circle cx="356" cy="66" r="0.7" fill="#eaeaec"/><circle cx="109" cy="351" r="1.0" fill="#eaeaec"/><circle cx="132" cy="246" r="0.8" fill="#eaeaec"/><circle cx="216" cy="257" r="1.0" fill="#eaeaec"/><circle cx="183" cy="431" r="1.3" fill="#eaeaec"/><circle cx="34" cy="438" r="1.1" fill="#eaeaec"/><circle cx="501" cy="434" r="0.7" fill="#eaeaec"/><circle cx="533" cy="489" r="0.8" fill="#eaeaec"/><circle cx="78" cy="237" r="0.9" fill="#eaeaec"/><circle cx="320" cy="61" r="0.7" fill="#eaeaec"/><circle cx="107" cy="163" r="0.8" fill="#eaeaec"/><circle cx="329" cy="224" r="0.8" fill="#eaeaec"/><circle cx="320" cy="249" r="1.1" fill="#eaeaec"/><circle cx="310" cy="486" r="0.8" fill="#eaeaec"/><circle cx="381" cy="674" r="0.7" fill="#eaeaec"/><circle cx="532" cy="285" r="1.1" fill="#eaeaec"/><circle cx="512" cy="313" r="0.6" fill="#eaeaec"/><circle cx="168" cy="4" r="0.6" fill="#eaeaec"/><circle cx="386" cy="578" r="0.6" fill="#eaeaec"/><circle cx="453" cy="165" r="1.2" fill="#eaeaec"/><circle cx="305" cy="168" r="1.0" fill="#eaeaec"/><circle cx="372" cy="160" r="0.9" fill="#eaeaec"/><circle cx="460" cy="90" r="1.3" fill="#eaeaec"/><circle cx="48" cy="118" r="0.8" fill="#eaeaec"/><circle cx="182" cy="147" r="1.3" fill="#eaeaec"/><circle cx="99" cy="142" r="1.0" fill="#eaeaec"/><circle cx="287" cy="444" r="0.6" fill="#eaeaec"/><circle cx="160" cy="154" r="1.2" fill="#eaeaec"/><circle cx="130" cy="136" r="1.0" fill="#eaeaec"/><circle cx="237" cy="34" r="0.8" fill="#eaeaec"/><circle cx="195" cy="449" r="0.7" fill="#eaeaec"/><circle cx="366" cy="241" r="0.8" fill="#eaeaec"/><circle cx="51" cy="11" r="1.2" fill="#eaeaec"/><circle cx="286" cy="233" r="0.7" fill="#eaeaec"/><circle cx="238" cy="706" r="0.9" fill="#eaeaec"/><circle cx="355" cy="207" r="0.7" fill="#eaeaec"/><circle cx="427" cy="418" r="1.1" fill="#eaeaec"/><circle cx="102" cy="77" r="1.1" fill="#eaeaec"/><circle cx="206" cy="214" r="1.0" fill="#eaeaec"/><circle cx="64" cy="51" r="0.5" fill="#eaeaec"/><circle cx="120" cy="679" r="0.9" fill="#eaeaec"/><circle cx="460" cy="599" r="1.0" fill="#eaeaec"/><circle cx="474" cy="597" r="1.0" fill="#eaeaec"/><circle cx="350" cy="376" r="0.6" fill="#eaeaec"/><circle cx="194" cy="217" r="0.9" fill="#eaeaec"/><circle cx="545" cy="302" r="1.0" fill="#eaeaec"/><circle cx="334" cy="261" r="0.7" fill="#eaeaec"/><circle cx="523" cy="83" r="0.8" fill="#eaeaec"/><circle cx="483" cy="662" r="0.6" fill="#eaeaec"/><circle cx="83" cy="212" r="0.6" fill="#eaeaec"/><circle cx="302" cy="280" r="1.1" fill="#eaeaec"/><circle cx="421" cy="216" r="0.8" fill="#eaeaec"/><circle cx="487" cy="312" r="0.8" fill="#eaeaec"/><circle cx="401" cy="464" r="1.3" fill="#eaeaec"/><circle cx="255" cy="370" r="0.8" fill="#eaeaec"/><circle cx="535" cy="240" r="0.8" fill="#eaeaec"/><circle cx="153" cy="389" r="0.9" fill="#eaeaec"/><circle cx="177" cy="220" r="0.6" fill="#eaeaec"/><circle cx="432" cy="286" r="0.8" fill="#eaeaec"/><circle cx="412" cy="381" r="0.5" fill="#eaeaec"/><circle cx="213" cy="562" r="1.0" fill="#eaeaec"/><circle cx="336" cy="241" r="1.3" fill="#eaeaec"/><circle cx="190" cy="275" r="1.1" fill="#eaeaec"/><circle cx="53" cy="259" r="1.1" fill="#eaeaec"/><circle cx="253" cy="356" r="0.7" fill="#eaeaec"/><circle cx="440" cy="458" r="0.7" fill="#eaeaec"/><circle cx="261" cy="526" r="0.5" fill="#eaeaec"/><circle cx="13" cy="697" r="0.9" fill="#eaeaec"/><circle cx="285" cy="633" r="1.1" fill="#eaeaec"/><circle cx="351" cy="56" r="1.2" fill="#eaeaec"/><circle cx="519" cy="523" r="0.6" fill="#eaeaec"/><circle cx="267" cy="362" r="0.6" fill="#eaeaec"/><circle cx="446" cy="568" r="0.6" fill="#eaeaec"/><circle cx="170" cy="589" r="1.0" fill="#eaeaec"/><circle cx="421" cy="497" r="0.7" fill="#eaeaec"/><circle cx="539" cy="83" r="1.0" fill="#eaeaec"/><circle cx="512" cy="564" r="1.1" fill="#eaeaec"/><circle cx="99" cy="258" r="1.0" fill="#eaeaec"/><circle cx="2" cy="649" r="0.9" fill="#eaeaec"/><circle cx="484" cy="601" r="0.6" fill="#eaeaec"/><circle cx="106" cy="601" r="1.1" fill="#eaeaec"/><circle cx="528" cy="350" r="1.1" fill="#eaeaec"/><circle cx="308" cy="251" r="0.9" fill="#eaeaec"/><circle cx="360" cy="413" r="0.5" fill="#eaeaec"/><circle cx="511" cy="5" r="0.7" fill="#eaeaec"/><circle cx="33" cy="141" r="1.3" fill="#eaeaec"/><circle cx="259" cy="116" r="1.0" fill="#eaeaec"/><circle cx="262" cy="325" r="0.7" fill="#eaeaec"/><circle cx="223" cy="99" r="0.6" fill="#eaeaec"/><circle cx="434" cy="324" r="0.5" fill="#eaeaec"/><circle cx="431" cy="399" r="0.9" fill="#eaeaec"/><circle cx="540" cy="620" r="0.7" fill="#eaeaec"/><circle cx="264" cy="319" r="0.7" fill="#eaeaec"/><circle cx="231" cy="701" r="0.6" fill="#eaeaec"/><circle cx="386" cy="470" r="1.0" fill="#eaeaec"/><circle cx="225" cy="468" r="1.0" fill="#eaeaec"/><circle cx="410" cy="425" r="1.0" fill="#eaeaec"/><circle cx="110" cy="379" r="0.8" fill="#eaeaec"/><circle cx="109" cy="314" r="0.5" fill="#eaeaec"/><circle cx="292" cy="695" r="1.0" fill="#eaeaec"/><circle cx="69" cy="580" r="0.8" fill="#eaeaec"/><circle cx="72" cy="391" r="0.8" fill="#eaeaec"/><circle cx="220" cy="437" r="0.5" fill="#eaeaec"/><circle cx="492" cy="553" r="1.2" fill="#eaeaec"/><circle cx="318" cy="649" r="0.9" fill="#eaeaec"/><circle cx="458" cy="519" r="1.0" fill="#eaeaec"/><circle cx="138" cy="677" r="0.7" fill="#eaeaec"/><circle cx="129" cy="460" r="0.6" fill="#eaeaec"/><circle cx="130" cy="334" r="0.9" fill="#eaeaec"/><circle cx="471" cy="590" r="1.3" fill="#eaeaec"/><circle cx="349" cy="368" r="0.7" fill="#eaeaec"/><circle cx="271" cy="505" r="1.3" fill="#eaeaec"/><circle cx="438" cy="326" r="0.6" fill="#eaeaec"/><circle cx="381" cy="559" r="1.0" fill="#eaeaec"/><circle cx="315" cy="78" r="0.9" fill="#eaeaec"/><circle cx="217" cy="21" r="0.5" fill="#eaeaec"/><circle cx="394" cy="123" r="1.3" fill="#eaeaec"/><circle cx="21" cy="558" r="0.7" fill="#eaeaec"/><circle cx="80" cy="470" r="0.9" fill="#eaeaec"/><circle cx="160" cy="444" r="0.9" fill="#eaeaec"/><circle cx="410" cy="438" r="0.9" fill="#eaeaec"/><circle cx="190" cy="692" r="1.2" fill="#eaeaec"/><circle cx="293" cy="504" r="1.1" fill="#eaeaec"/><circle cx="297" cy="32" r="1.1" fill="#eaeaec"/><circle cx="398" cy="296" r="0.9" fill="#eaeaec"/><circle cx="219" cy="564" r="1.0" fill="#eaeaec"/><circle cx="536" cy="479" r="0.8" fill="#eaeaec"/><circle cx="157" cy="674" r="1.2" fill="#eaeaec"/><circle cx="74" cy="67" r="0.8" fill="#eaeaec"/><circle cx="52" cy="641" r="0.7" fill="#eaeaec"/><circle cx="473" cy="214" r="0.5" fill="#eaeaec"/><circle cx="479" cy="292" r="0.5" fill="#eaeaec"/><circle cx="100" cy="621" r="1.3" fill="#eaeaec"/><circle cx="525" cy="437" r="1.1" fill="#eaeaec"/><circle cx="540" cy="83" r="1.2" fill="#eaeaec"/><circle cx="148" cy="226" r="1.0" fill="#eaeaec"/><circle cx="401" cy="7" r="0.9" fill="#eaeaec"/><circle cx="244" cy="581" r="0.9" fill="#eaeaec"/><circle cx="428" cy="286" r="0.9" fill="#eaeaec"/><circle cx="20" cy="411" r="1.0" fill="#eaeaec"/><circle cx="524" cy="298" r="1.2" fill="#eaeaec"/><circle cx="405" cy="518" r="0.8" fill="#eaeaec"/><circle cx="378" cy="378" r="0.8" fill="#eaeaec"/><circle cx="359" cy="670" r="1.0" fill="#eaeaec"/><circle cx="389" cy="225" r="0.9" fill="#eaeaec"/><circle cx="374" cy="100" r="1.0" fill="#eaeaec"/><circle cx="321" cy="601" r="0.7" fill="#eaeaec"/><circle cx="542" cy="186" r="0.8" fill="#eaeaec"/><circle cx="489" cy="186" r="1.0" fill="#eaeaec"/><circle cx="266" cy="284" r="0.7" fill="#eaeaec"/><circle cx="493" cy="284" r="1.2" fill="#eaeaec"/><circle cx="396" cy="87" r="0.7" fill="#eaeaec"/><circle cx="245" cy="436" r="1.1" fill="#eaeaec"/><circle cx="404" cy="101" r="1.1" fill="#eaeaec"/><circle cx="295" cy="367" r="1.0" fill="#eaeaec"/><circle cx="433" cy="325" r="0.6" fill="#eaeaec"/><circle cx="480" cy="157" r="0.7" fill="#eaeaec"/><circle cx="6" cy="63" r="0.6" fill="#eaeaec"/><circle cx="112" cy="296" r="1.1" fill="#eaeaec"/><circle cx="382" cy="106" r="0.9" fill="#eaeaec"/><circle cx="372" cy="585" r="0.9" fill="#eaeaec"/><circle cx="192" cy="370" r="1.3" fill="#eaeaec"/><circle cx="47" cy="470" r="0.8" fill="#eaeaec"/><circle cx="442" cy="174" r="1.0" fill="#eaeaec"/><circle cx="224" cy="257" r="0.7" fill="#eaeaec"/><circle cx="303" cy="14" r="1.2" fill="#eaeaec"/><circle cx="98" cy="169" r="1.3" fill="#eaeaec"/><circle cx="41" cy="364" r="0.9" fill="#eaeaec"/><circle cx="210" cy="128" r="1.1" fill="#eaeaec"/><circle cx="251" cy="565" r="0.6" fill="#eaeaec"/><circle cx="501" cy="629" r="0.6" fill="#eaeaec"/><circle cx="412" cy="48" r="1.1" fill="#eaeaec"/><circle cx="63" cy="447" r="1.2" fill="#eaeaec"/><circle cx="260" cy="666" r="0.8" fill="#eaeaec"/><circle cx="505" cy="564" r="1.1" fill="#eaeaec"/><circle cx="324" cy="453" r="0.9" fill="#eaeaec"/><circle cx="130" cy="346" r="1.2" fill="#eaeaec"/><circle cx="422" cy="434" r="0.5" fill="#eaeaec"/><circle cx="432" cy="157" r="1.2" fill="#eaeaec"/><circle cx="243" cy="414" r="0.8" fill="#eaeaec"/><circle cx="75" cy="456" r="0.9" fill="#eaeaec"/><circle cx="194" cy="413" r="1.2" fill="#eaeaec"/><circle cx="86" cy="625" r="0.8" fill="#eaeaec"/><circle cx="409" cy="419" r="0.9" fill="#eaeaec"/><circle cx="429" cy="639" r="1.1" fill="#eaeaec"/><circle cx="37" cy="384" r="1.2" fill="#eaeaec"/><circle cx="60" cy="701" r="0.8" fill="#eaeaec"/><circle cx="512" cy="651" r="0.9" fill="#eaeaec"/><circle cx="130" cy="672" r="1.2" fill="#eaeaec"/><circle cx="461" cy="695" r="0.9" fill="#eaeaec"/><circle cx="23" cy="554" r="0.7" fill="#eaeaec"/><circle cx="321" cy="35" r="0.7" fill="#eaeaec"/><circle cx="178" cy="165" r="0.8" fill="#eaeaec"/><circle cx="297" cy="242" r="0.7" fill="#eaeaec"/><circle cx="305" cy="683" r="1.1" fill="#eaeaec"/><circle cx="383" cy="104" r="0.6" fill="#eaeaec"/><circle cx="33" cy="261" r="0.7" fill="#eaeaec"/><circle cx="134" cy="196" r="0.6" fill="#eaeaec"/><circle cx="410" cy="82" r="1.2" fill="#eaeaec"/><circle cx="482" cy="484" r="1.1" fill="#eaeaec"/><circle cx="259" cy="492" r="0.9" fill="#eaeaec"/><circle cx="456" cy="638" r="0.7" fill="#eaeaec"/><circle cx="263" cy="663" r="1.0" fill="#eaeaec"/><circle cx="482" cy="651" r="1.1" fill="#eaeaec"/><circle cx="239" cy="508" r="1.1" fill="#eaeaec"/><circle cx="262" cy="432" r="1.2" fill="#eaeaec"/><circle cx="201" cy="417" r="0.8" fill="#eaeaec"/><circle cx="515" cy="12" r="1.2" fill="#eaeaec"/><circle cx="348" cy="11" r="1.2" fill="#eaeaec"/><circle cx="395" cy="505" r="0.9" fill="#eaeaec"/><circle cx="360" cy="116" r="0.7" fill="#eaeaec"/><circle cx="191" cy="303" r="1.2" fill="#eaeaec"/><circle cx="40" cy="10" r="1.1" fill="#eaeaec"/><circle cx="526" cy="167" r="1.2" fill="#eaeaec"/><circle cx="112" cy="590" r="0.8" fill="#eaeaec"/><circle cx="84" cy="272" r="1.3" fill="#eaeaec"/><circle cx="227" cy="128" r="0.6" fill="#eaeaec"/><circle cx="474" cy="544" r="1.2" fill="#eaeaec"/><circle cx="330" cy="577" r="0.8" fill="#eaeaec"/><circle cx="132" cy="566" r="0.9" fill="#eaeaec"/><circle cx="225" cy="123" r="0.8" fill="#eaeaec"/><circle cx="418" cy="533" r="1.1" fill="#eaeaec"/><circle cx="471" cy="55" r="0.6" fill="#eaeaec"/><circle cx="89" cy="117" r="0.6" fill="#eaeaec"/><circle cx="344" cy="257" r="0.9" fill="#eaeaec"/><circle cx="416" cy="137" r="0.8" fill="#eaeaec"/><circle cx="524" cy="158" r="1.0" fill="#eaeaec"/><circle cx="224" cy="59" r="0.6" fill="#eaeaec"/><circle cx="355" cy="303" r="0.5" fill="#eaeaec"/><circle cx="424" cy="145" r="0.8" fill="#eaeaec"/><circle cx="81" cy="605" r="0.6" fill="#eaeaec"/><circle cx="71" cy="335" r="1.3" fill="#eaeaec"/><circle cx="450" cy="672" r="1.2" fill="#eaeaec"/><circle cx="105" cy="150" r="1.2" fill="#eaeaec"/><circle cx="485" cy="519" r="0.8" fill="#eaeaec"/><circle cx="90" cy="448" r="0.9" fill="#eaeaec"/><circle cx="460" cy="482" r="1.1" fill="#eaeaec"/><circle cx="25" cy="373" r="0.7" fill="#eaeaec"/><circle cx="345" cy="132" r="0.5" fill="#eaeaec"/><circle cx="263" cy="229" r="0.5" fill="#eaeaec"/><circle cx="428" cy="281" r="0.7" fill="#eaeaec"/><circle cx="340" cy="471" r="1.2" fill="#eaeaec"/><circle cx="390" cy="360" r="0.7" fill="#eaeaec"/><circle cx="276" cy="414" r="1.1" fill="#eaeaec"/><circle cx="292" cy="194" r="0.6" fill="#eaeaec"/><circle cx="197" cy="448" r="0.6" fill="#eaeaec"/><circle cx="112" cy="314" r="0.8" fill="#eaeaec"/><circle cx="360" cy="231" r="1.0" fill="#eaeaec"/><circle cx="365" cy="56" r="1.2" fill="#eaeaec"/><circle cx="177" cy="636" r="0.7" fill="#eaeaec"/><circle cx="136" cy="460" r="0.6" fill="#eaeaec"/><circle cx="461" cy="456" r="0.9" fill="#eaeaec"/><circle cx="465" cy="667" r="1.1" fill="#eaeaec"/><circle cx="459" cy="51" r="1.2" fill="#eaeaec"/><circle cx="393" cy="434" r="0.7" fill="#eaeaec"/><circle cx="316" cy="286" r="0.5" fill="#eaeaec"/><circle cx="385" cy="529" r="0.6" fill="#eaeaec"/><circle cx="452" cy="621" r="1.2" fill="#eaeaec"/><circle cx="460" cy="480" r="1.0" fill="#eaeaec"/><circle cx="91" cy="417" r="1.1" fill="#eaeaec"/><circle cx="396" cy="603" r="1.0" fill="#eaeaec"/><circle cx="210" cy="445" r="1.0" fill="#eaeaec"/><circle cx="428" cy="329" r="0.5" fill="#eaeaec"/><circle cx="125" cy="624" r="0.9" fill="#eaeaec"/><circle cx="167" cy="468" r="1.2" fill="#eaeaec"/><circle cx="481" cy="602" r="0.5" fill="#eaeaec"/><circle cx="292" cy="462" r="0.7" fill="#eaeaec"/><circle cx="211" cy="472" r="0.9" fill="#eaeaec"/><circle cx="515" cy="333" r="0.7" fill="#eaeaec"/><circle cx="431" cy="271" r="1.2" fill="#eaeaec"/><circle cx="263" cy="694" r="1.3" fill="#eaeaec"/><circle cx="437" cy="368" r="0.6" fill="#eaeaec"/><circle cx="235" cy="138" r="0.7" fill="#eaeaec"/><circle cx="202" cy="358" r="1.2" fill="#eaeaec"/><circle cx="171" cy="238" r="1.0" fill="#eaeaec"/><circle cx="154" cy="427" r="0.6" fill="#eaeaec"/><circle cx="256" cy="10" r="0.6" fill="#eaeaec"/><circle cx="126" cy="144" r="1.0" fill="#eaeaec"/><circle cx="492" cy="406" r="1.2" fill="#eaeaec"/><circle cx="424" cy="407" r="1.3" fill="#eaeaec"/><circle cx="319" cy="351" r="0.9" fill="#eaeaec"/><circle cx="161" cy="83" r="1.1" fill="#eaeaec"/><circle cx="401" cy="651" r="0.9" fill="#eaeaec"/><circle cx="446" cy="455" r="1.0" fill="#eaeaec"/><circle cx="120" cy="210" r="0.9" fill="#eaeaec"/><g transform="rotate(16 378 550)"><ellipse cx="377.3" cy="550.0" rx="2.7" ry="4.7" fill="#b2b2b4"/><ellipse cx="377.5" cy="549.5" rx="2.6" ry="4.4" fill="url(#dg)"/></g><g transform="rotate(18 360 172)"><ellipse cx="359.3" cy="172.0" rx="3.1" ry="4.7" fill="#b2b2b4"/><ellipse cx="359.5" cy="171.5" rx="2.9" ry="4.5" fill="url(#dg)"/></g><g transform="rotate(13 460 524)"><ellipse cx="459.8" cy="524.8" rx="2.4" ry="4.0" fill="#b2b2b4"/><ellipse cx="460.0" cy="524.4" rx="2.3" ry="3.8" fill="url(#dg)"/></g><g transform="rotate(5 470 470)"><ellipse cx="469.9" cy="470.9" rx="3.0" ry="4.6" fill="#b2b2b4"/><ellipse cx="470.1" cy="470.4" rx="2.9" ry="4.4" fill="url(#dg)"/></g><g transform="rotate(-3 151 262)"><ellipse cx="151.0" cy="262.8" rx="3.0" ry="4.5" fill="#b2b2b4"/><ellipse cx="151.2" cy="262.4" rx="2.9" ry="4.3" fill="url(#dg)"/></g><g transform="rotate(-10 65 516)"><ellipse cx="64.5" cy="516.4" rx="1.7" ry="2.7" fill="#b2b2b4"/><ellipse cx="64.6" cy="516.1" rx="1.6" ry="2.6" fill="url(#dg)"/></g><g transform="rotate(-11 86 362)"><ellipse cx="85.9" cy="362.0" rx="1.5" ry="2.7" fill="#b2b2b4"/><ellipse cx="86.0" cy="361.7" rx="1.4" ry="2.6" fill="url(#dg)"/></g><g transform="rotate(8 544 225)"><ellipse cx="543.7" cy="225.7" rx="3.2" ry="5.0" fill="#b2b2b4"/><ellipse cx="543.9" cy="225.2" rx="3.1" ry="4.7" fill="url(#dg)"/></g><g transform="rotate(-17 203 331)"><ellipse cx="203.3" cy="331.1" rx="2.1" ry="3.1" fill="#b2b2b4"/><ellipse cx="203.4" cy="330.8" rx="2.0" ry="3.0" fill="url(#dg)"/></g><g transform="rotate(-16 221 368)"><ellipse cx="221.0" cy="368.1" rx="3.1" ry="5.4" fill="#b2b2b4"/><ellipse cx="221.3" cy="367.6" rx="3.0" ry="5.1" fill="url(#dg)"/></g><g transform="rotate(2 63 142)"><ellipse cx="63.2" cy="142.8" rx="3.1" ry="5.2" fill="#b2b2b4"/><ellipse cx="63.4" cy="142.3" rx="2.9" ry="4.9" fill="url(#dg)"/></g><g transform="rotate(-8 278 206)"><ellipse cx="278.2" cy="206.7" rx="3.3" ry="4.2" fill="#b2b2b4"/><ellipse cx="278.5" cy="206.3" rx="3.2" ry="4.0" fill="url(#dg)"/></g><g transform="rotate(-17 28 219)"><ellipse cx="28.1" cy="219.6" rx="1.8" ry="3.0" fill="#b2b2b4"/><ellipse cx="28.3" cy="219.3" rx="1.8" ry="2.8" fill="url(#dg)"/></g><g transform="rotate(14 215 59)"><ellipse cx="214.7" cy="59.7" rx="2.7" ry="3.2" fill="#b2b2b4"/><ellipse cx="214.9" cy="59.4" rx="2.6" ry="3.0" fill="url(#dg)"/></g><g transform="rotate(-16 46 368)"><ellipse cx="45.6" cy="368.1" rx="3.0" ry="3.5" fill="#b2b2b4"/><ellipse cx="45.8" cy="367.8" rx="2.9" ry="3.4" fill="url(#dg)"/></g><g transform="rotate(8 194 670)"><ellipse cx="193.7" cy="670.8" rx="2.4" ry="3.1" fill="#b2b2b4"/><ellipse cx="193.8" cy="670.5" rx="2.3" ry="3.0" fill="url(#dg)"/></g><g transform="rotate(7 331 522)"><ellipse cx="330.9" cy="521.7" rx="1.5" ry="1.9" fill="#b2b2b4"/><ellipse cx="331.0" cy="521.5" rx="1.4" ry="1.8" fill="url(#dg)"/></g><g transform="rotate(-7 191 460)"><ellipse cx="190.4" cy="460.1" rx="1.4" ry="2.4" fill="#b2b2b4"/><ellipse cx="190.5" cy="459.8" rx="1.3" ry="2.2" fill="url(#dg)"/></g><g transform="rotate(15 54 656)"><ellipse cx="54.2" cy="656.1" rx="3.4" ry="4.1" fill="#b2b2b4"/><ellipse cx="54.4" cy="655.7" rx="3.2" ry="3.9" fill="url(#dg)"/></g><g transform="rotate(18 531 600)"><ellipse cx="531.0" cy="600.6" rx="2.8" ry="3.8" fill="#b2b2b4"/><ellipse cx="531.2" cy="600.3" rx="2.7" ry="3.7" fill="url(#dg)"/></g><g transform="rotate(12 3 429)"><ellipse cx="3.2" cy="429.6" rx="2.8" ry="4.4" fill="#b2b2b4"/><ellipse cx="3.4" cy="429.2" rx="2.6" ry="4.2" fill="url(#dg)"/></g><g transform="rotate(7 21 510)"><ellipse cx="20.9" cy="510.6" rx="1.6" ry="2.2" fill="#b2b2b4"/><ellipse cx="21.0" cy="510.4" rx="1.6" ry="2.1" fill="url(#dg)"/></g><g transform="rotate(-8 89 374)"><ellipse cx="88.8" cy="374.7" rx="1.5" ry="2.6" fill="#b2b2b4"/><ellipse cx="88.9" cy="374.4" rx="1.4" ry="2.5" fill="url(#dg)"/></g><g transform="rotate(-4 134 659)"><ellipse cx="134.4" cy="659.2" rx="1.5" ry="1.8" fill="#b2b2b4"/><ellipse cx="134.5" cy="659.1" rx="1.4" ry="1.7" fill="url(#dg)"/></g><g transform="rotate(-1 112 589)"><ellipse cx="111.7" cy="589.4" rx="3.3" ry="4.5" fill="#b2b2b4"/><ellipse cx="111.9" cy="589.0" rx="3.1" ry="4.3" fill="url(#dg)"/></g><g transform="rotate(19 188 156)"><ellipse cx="187.5" cy="156.1" rx="1.5" ry="1.9" fill="#b2b2b4"/><ellipse cx="187.6" cy="156.0" rx="1.5" ry="1.8" fill="url(#dg)"/></g><g transform="rotate(20 63 180)"><ellipse cx="62.4" cy="180.6" rx="3.1" ry="4.6" fill="#b2b2b4"/><ellipse cx="62.7" cy="180.2" rx="3.0" ry="4.4" fill="url(#dg)"/></g><g transform="rotate(7 282 344)"><ellipse cx="282.0" cy="343.8" rx="2.2" ry="3.4" fill="#b2b2b4"/><ellipse cx="282.1" cy="343.5" rx="2.1" ry="3.3" fill="url(#dg)"/></g><g transform="rotate(1 179 114)"><ellipse cx="178.4" cy="114.4" rx="2.1" ry="2.8" fill="#b2b2b4"/><ellipse cx="178.6" cy="114.1" rx="2.0" ry="2.7" fill="url(#dg)"/></g><g transform="rotate(14 103 563)"><ellipse cx="103.0" cy="563.5" rx="1.9" ry="3.2" fill="#b2b2b4"/><ellipse cx="103.1" cy="563.2" rx="1.8" ry="3.1" fill="url(#dg)"/></g><g transform="rotate(13 216 190)"><ellipse cx="215.7" cy="190.0" rx="3.1" ry="3.7" fill="#b2b2b4"/><ellipse cx="215.9" cy="189.6" rx="3.0" ry="3.5" fill="url(#dg)"/></g><g transform="rotate(14 362 351)"><ellipse cx="361.7" cy="351.4" rx="2.4" ry="3.7" fill="#b2b2b4"/><ellipse cx="361.9" cy="351.0" rx="2.3" ry="3.6" fill="url(#dg)"/></g><g transform="rotate(2 245 87)"><ellipse cx="244.7" cy="87.2" rx="2.0" ry="3.3" fill="#b2b2b4"/><ellipse cx="244.8" cy="86.8" rx="1.9" ry="3.2" fill="url(#dg)"/></g><g transform="rotate(-19 338 160)"><ellipse cx="337.7" cy="159.9" rx="1.9" ry="2.7" fill="#b2b2b4"/><ellipse cx="337.8" cy="159.6" rx="1.8" ry="2.5" fill="url(#dg)"/></g><g transform="rotate(-7 290 669)"><ellipse cx="289.6" cy="669.1" rx="1.5" ry="1.7" fill="#b2b2b4"/><ellipse cx="289.7" cy="668.9" rx="1.4" ry="1.6" fill="url(#dg)"/></g><g transform="rotate(19 443 49)"><ellipse cx="443.1" cy="49.2" rx="2.4" ry="4.1" fill="#b2b2b4"/><ellipse cx="443.3" cy="48.8" rx="2.3" ry="3.9" fill="url(#dg)"/></g><g transform="rotate(-19 162 251)"><ellipse cx="162.2" cy="251.3" rx="2.5" ry="3.9" fill="#b2b2b4"/><ellipse cx="162.4" cy="251.0" rx="2.3" ry="3.7" fill="url(#dg)"/></g><g transform="rotate(8 314 221)"><ellipse cx="313.5" cy="221.1" rx="1.4" ry="1.7" fill="#b2b2b4"/><ellipse cx="313.6" cy="220.9" rx="1.4" ry="1.7" fill="url(#dg)"/></g><g transform="rotate(-0 254 621)"><ellipse cx="253.3" cy="621.6" rx="2.7" ry="3.1" fill="#b2b2b4"/><ellipse cx="253.5" cy="621.3" rx="2.5" ry="2.9" fill="url(#dg)"/></g><g transform="rotate(11 9 95)"><ellipse cx="9.2" cy="95.6" rx="1.7" ry="3.0" fill="#b2b2b4"/><ellipse cx="9.4" cy="95.3" rx="1.7" ry="2.8" fill="url(#dg)"/></g><g transform="rotate(18 13 245)"><ellipse cx="12.5" cy="245.6" rx="2.1" ry="3.4" fill="#b2b2b4"/><ellipse cx="12.6" cy="245.3" rx="2.0" ry="3.2" fill="url(#dg)"/></g><g transform="rotate(18 282 366)"><ellipse cx="281.6" cy="366.5" rx="3.1" ry="3.8" fill="#b2b2b4"/><ellipse cx="281.8" cy="366.1" rx="3.0" ry="3.6" fill="url(#dg)"/></g><g transform="rotate(3 160 606)"><ellipse cx="159.7" cy="606.0" rx="2.6" ry="3.2" fill="#b2b2b4"/><ellipse cx="159.9" cy="605.7" rx="2.5" ry="3.0" fill="url(#dg)"/></g><g transform="rotate(2 27 666)"><ellipse cx="26.5" cy="666.6" rx="3.1" ry="3.9" fill="#b2b2b4"/><ellipse cx="26.7" cy="666.3" rx="3.0" ry="3.7" fill="url(#dg)"/></g><g transform="rotate(17 354 564)"><ellipse cx="353.4" cy="564.3" rx="2.6" ry="3.4" fill="#b2b2b4"/><ellipse cx="353.6" cy="564.0" rx="2.5" ry="3.2" fill="url(#dg)"/></g><g transform="rotate(-8 37 187)"><ellipse cx="37.3" cy="186.8" rx="1.8" ry="2.5" fill="#b2b2b4"/><ellipse cx="37.4" cy="186.5" rx="1.7" ry="2.4" fill="url(#dg)"/></g><g transform="rotate(-11 202 374)"><ellipse cx="202.0" cy="374.5" rx="3.2" ry="4.9" fill="#b2b2b4"/><ellipse cx="202.3" cy="374.1" rx="3.1" ry="4.6" fill="url(#dg)"/></g><g transform="rotate(-18 522 363)"><ellipse cx="521.4" cy="363.2" rx="2.8" ry="3.7" fill="#b2b2b4"/><ellipse cx="521.6" cy="362.9" rx="2.7" ry="3.5" fill="url(#dg)"/></g><g transform="rotate(12 133 244)"><ellipse cx="132.5" cy="244.2" rx="2.9" ry="3.4" fill="#b2b2b4"/><ellipse cx="132.7" cy="243.9" rx="2.8" ry="3.2" fill="url(#dg)"/></g><g transform="rotate(13 500 137)"><ellipse cx="500.1" cy="137.6" rx="3.3" ry="5.8" fill="#b2b2b4"/><ellipse cx="500.4" cy="137.0" rx="3.1" ry="5.5" fill="url(#dg)"/></g><g transform="rotate(12 75 647)"><ellipse cx="75.2" cy="647.5" rx="2.2" ry="3.1" fill="#b2b2b4"/><ellipse cx="75.3" cy="647.2" rx="2.1" ry="3.0" fill="url(#dg)"/></g><g transform="rotate(8 127 667)"><ellipse cx="127.2" cy="667.2" rx="2.1" ry="3.0" fill="#b2b2b4"/><ellipse cx="127.3" cy="666.9" rx="2.0" ry="2.9" fill="url(#dg)"/></g><g transform="rotate(4 212 441)"><ellipse cx="211.4" cy="441.8" rx="2.8" ry="4.4" fill="#b2b2b4"/><ellipse cx="211.6" cy="441.4" rx="2.7" ry="4.2" fill="url(#dg)"/></g><g transform="rotate(-9 386 679)"><ellipse cx="386.1" cy="679.2" rx="3.2" ry="4.8" fill="#b2b2b4"/><ellipse cx="386.3" cy="678.7" rx="3.0" ry="4.5" fill="url(#dg)"/></g><g transform="rotate(-2 392 514)"><ellipse cx="391.4" cy="514.5" rx="2.6" ry="3.6" fill="#b2b2b4"/><ellipse cx="391.6" cy="514.2" rx="2.5" ry="3.4" fill="url(#dg)"/></g><g transform="rotate(3 211 460)"><ellipse cx="210.7" cy="460.2" rx="2.7" ry="3.2" fill="#b2b2b4"/><ellipse cx="210.9" cy="459.9" rx="2.6" ry="3.0" fill="url(#dg)"/></g><g transform="rotate(8 157 671)"><ellipse cx="156.4" cy="671.2" rx="2.4" ry="3.2" fill="#b2b2b4"/><ellipse cx="156.6" cy="670.9" rx="2.2" ry="3.0" fill="url(#dg)"/></g><g transform="rotate(-16 382 342)"><ellipse cx="381.4" cy="342.7" rx="2.5" ry="2.9" fill="#b2b2b4"/><ellipse cx="381.6" cy="342.4" rx="2.4" ry="2.7" fill="url(#dg)"/></g><g transform="rotate(19 112 85)"><ellipse cx="111.5" cy="85.3" rx="2.6" ry="4.1" fill="#b2b2b4"/><ellipse cx="111.7" cy="84.9" rx="2.5" ry="3.9" fill="url(#dg)"/></g><g transform="rotate(-13 61 24)"><ellipse cx="61.1" cy="24.4" rx="3.0" ry="4.5" fill="#b2b2b4"/><ellipse cx="61.3" cy="24.0" rx="2.9" ry="4.2" fill="url(#dg)"/></g><g transform="rotate(4 433 284)"><ellipse cx="432.3" cy="284.7" rx="2.6" ry="3.0" fill="#b2b2b4"/><ellipse cx="432.5" cy="284.4" rx="2.5" ry="2.9" fill="url(#dg)"/></g><g transform="rotate(19 300 351)"><ellipse cx="299.7" cy="351.0" rx="1.5" ry="2.4" fill="#b2b2b4"/><ellipse cx="299.8" cy="350.8" rx="1.5" ry="2.3" fill="url(#dg)"/></g><g transform="rotate(1 422 705)"><ellipse cx="422.2" cy="705.0" rx="2.7" ry="4.6" fill="#b2b2b4"/><ellipse cx="422.4" cy="704.6" rx="2.6" ry="4.4" fill="url(#dg)"/></g><g transform="rotate(-16 58 635)"><ellipse cx="57.7" cy="635.4" rx="2.0" ry="2.8" fill="#b2b2b4"/><ellipse cx="57.9" cy="635.1" rx="1.9" ry="2.6" fill="url(#dg)"/></g><g transform="rotate(17 8 381)"><ellipse cx="7.4" cy="381.5" rx="2.2" ry="3.9" fill="#b2b2b4"/><ellipse cx="7.5" cy="381.1" rx="2.1" ry="3.8" fill="url(#dg)"/></g><g transform="rotate(16 394 230)"><ellipse cx="393.5" cy="230.5" rx="1.4" ry="2.5" fill="#b2b2b4"/><ellipse cx="393.6" cy="230.2" rx="1.3" ry="2.3" fill="url(#dg)"/></g><g transform="rotate(-8 233 160)"><ellipse cx="232.6" cy="160.7" rx="2.5" ry="4.0" fill="#b2b2b4"/><ellipse cx="232.7" cy="160.3" rx="2.3" ry="3.9" fill="url(#dg)"/></g><g transform="rotate(-13 3 23)"><ellipse cx="2.3" cy="23.3" rx="3.2" ry="4.7" fill="#b2b2b4"/><ellipse cx="2.6" cy="22.9" rx="3.0" ry="4.5" fill="url(#dg)"/></g><g transform="rotate(2 129 79)"><ellipse cx="128.9" cy="79.2" rx="3.2" ry="4.3" fill="#b2b2b4"/><ellipse cx="129.2" cy="78.8" rx="3.0" ry="4.1" fill="url(#dg)"/></g><g transform="rotate(18 446 706)"><ellipse cx="446.0" cy="706.3" rx="1.7" ry="2.5" fill="#b2b2b4"/><ellipse cx="446.1" cy="706.0" rx="1.7" ry="2.4" fill="url(#dg)"/></g><g transform="rotate(6 66 200)"><ellipse cx="65.4" cy="200.1" rx="3.2" ry="4.9" fill="#b2b2b4"/><ellipse cx="65.7" cy="199.6" rx="3.0" ry="4.7" fill="url(#dg)"/></g><g transform="rotate(12 536 39)"><ellipse cx="535.8" cy="39.7" rx="3.2" ry="3.8" fill="#b2b2b4"/><ellipse cx="536.1" cy="39.3" rx="3.0" ry="3.6" fill="url(#dg)"/></g><g transform="rotate(7 263 16)"><ellipse cx="262.6" cy="16.7" rx="1.6" ry="2.5" fill="#b2b2b4"/><ellipse cx="262.8" cy="16.5" rx="1.5" ry="2.4" fill="url(#dg)"/></g><g transform="rotate(-7 306 252)"><ellipse cx="305.6" cy="252.6" rx="2.5" ry="4.2" fill="#b2b2b4"/><ellipse cx="305.7" cy="252.2" rx="2.4" ry="4.0" fill="url(#dg)"/></g><g transform="rotate(-10 71 29)"><ellipse cx="71.1" cy="29.2" rx="1.8" ry="2.2" fill="#b2b2b4"/><ellipse cx="71.3" cy="29.0" rx="1.7" ry="2.1" fill="url(#dg)"/></g><g transform="rotate(17 428 36)"><ellipse cx="428.1" cy="36.0" rx="3.2" ry="3.7" fill="#b2b2b4"/><ellipse cx="428.3" cy="35.7" rx="3.0" ry="3.6" fill="url(#dg)"/></g><g transform="rotate(-14 9 599)"><ellipse cx="9.0" cy="599.0" rx="3.0" ry="5.2" fill="#b2b2b4"/><ellipse cx="9.2" cy="598.5" rx="2.9" ry="4.9" fill="url(#dg)"/></g><g transform="rotate(-3 423 63)"><ellipse cx="422.4" cy="63.7" rx="3.3" ry="5.6" fill="#b2b2b4"/><ellipse cx="422.7" cy="63.1" rx="3.1" ry="5.3" fill="url(#dg)"/></g><g transform="rotate(2 401 635)"><ellipse cx="401.0" cy="635.8" rx="2.9" ry="3.6" fill="#b2b2b4"/><ellipse cx="401.2" cy="635.5" rx="2.8" ry="3.4" fill="url(#dg)"/></g><g transform="rotate(-2 361 210)"><ellipse cx="360.5" cy="210.7" rx="1.8" ry="2.2" fill="#b2b2b4"/><ellipse cx="360.7" cy="210.5" rx="1.7" ry="2.1" fill="url(#dg)"/></g><g transform="rotate(-8 50 170)"><ellipse cx="49.6" cy="170.2" rx="2.0" ry="3.4" fill="#b2b2b4"/><ellipse cx="49.8" cy="169.9" rx="1.9" ry="3.3" fill="url(#dg)"/></g><g transform="rotate(-17 270 89)"><ellipse cx="269.9" cy="89.6" rx="2.6" ry="4.6" fill="#b2b2b4"/><ellipse cx="270.1" cy="89.2" rx="2.4" ry="4.3" fill="url(#dg)"/></g><g transform="rotate(5 455 64)"><ellipse cx="454.6" cy="64.4" rx="3.3" ry="4.4" fill="#b2b2b4"/><ellipse cx="454.9" cy="64.0" rx="3.2" ry="4.2" fill="url(#dg)"/></g><g transform="rotate(2 392 364)"><ellipse cx="392.2" cy="364.0" rx="1.7" ry="2.8" fill="#b2b2b4"/><ellipse cx="392.4" cy="363.8" rx="1.7" ry="2.7" fill="url(#dg)"/></g><g transform="rotate(-3 301 12)"><ellipse cx="300.9" cy="12.1" rx="1.5" ry="1.9" fill="#b2b2b4"/><ellipse cx="301.0" cy="12.0" rx="1.4" ry="1.8" fill="url(#dg)"/></g><g transform="rotate(2 343 554)"><ellipse cx="343.0" cy="554.6" rx="3.2" ry="5.1" fill="#b2b2b4"/><ellipse cx="343.2" cy="554.1" rx="3.0" ry="4.8" fill="url(#dg)"/></g><g transform="rotate(14 361 56)"><ellipse cx="360.4" cy="56.0" rx="2.7" ry="4.2" fill="#b2b2b4"/><ellipse cx="360.6" cy="55.6" rx="2.6" ry="4.0" fill="url(#dg)"/></g><g transform="rotate(8 99 572)"><ellipse cx="99.2" cy="572.1" rx="2.7" ry="3.9" fill="#b2b2b4"/><ellipse cx="99.4" cy="571.7" rx="2.5" ry="3.7" fill="url(#dg)"/></g><g transform="rotate(-5 339 694)"><ellipse cx="338.6" cy="693.9" rx="3.1" ry="3.6" fill="#b2b2b4"/><ellipse cx="338.8" cy="693.5" rx="2.9" ry="3.4" fill="url(#dg)"/></g><g transform="rotate(16 460 267)"><ellipse cx="459.7" cy="267.1" rx="2.5" ry="3.5" fill="#b2b2b4"/><ellipse cx="459.9" cy="266.7" rx="2.4" ry="3.3" fill="url(#dg)"/></g><g transform="rotate(-18 84 590)"><ellipse cx="83.5" cy="590.6" rx="2.5" ry="3.0" fill="#b2b2b4"/><ellipse cx="83.7" cy="590.3" rx="2.4" ry="2.9" fill="url(#dg)"/></g><g transform="rotate(-19 76 55)"><ellipse cx="75.6" cy="54.8" rx="1.4" ry="2.5" fill="#b2b2b4"/><ellipse cx="75.7" cy="54.6" rx="1.4" ry="2.4" fill="url(#dg)"/></g><g transform="rotate(-2 227 422)"><ellipse cx="227.0" cy="422.2" rx="2.0" ry="3.6" fill="#b2b2b4"/><ellipse cx="227.1" cy="421.9" rx="1.9" ry="3.5" fill="url(#dg)"/></g><g transform="rotate(12 73 453)"><ellipse cx="73.2" cy="452.9" rx="2.4" ry="3.9" fill="#b2b2b4"/><ellipse cx="73.4" cy="452.6" rx="2.3" ry="3.7" fill="url(#dg)"/></g><g transform="rotate(-0 287 10)"><ellipse cx="287.0" cy="10.0" rx="2.4" ry="3.3" fill="#b2b2b4"/><ellipse cx="287.2" cy="9.7" rx="2.3" ry="3.2" fill="url(#dg)"/></g><g transform="rotate(-14 97 142)"><ellipse cx="97.1" cy="142.1" rx="1.4" ry="2.3" fill="#b2b2b4"/><ellipse cx="97.3" cy="141.8" rx="1.3" ry="2.2" fill="url(#dg)"/></g><g transform="rotate(-0 531 538)"><ellipse cx="530.8" cy="538.6" rx="3.0" ry="5.4" fill="#b2b2b4"/><ellipse cx="531.0" cy="538.0" rx="2.9" ry="5.1" fill="url(#dg)"/></g><g transform="rotate(-7 327 674)"><ellipse cx="327.0" cy="674.9" rx="3.1" ry="4.3" fill="#b2b2b4"/><ellipse cx="327.3" cy="674.5" rx="3.0" ry="4.1" fill="url(#dg)"/></g><g transform="rotate(0 396 90)"><ellipse cx="395.9" cy="89.9" rx="3.0" ry="3.5" fill="#b2b2b4"/><ellipse cx="396.2" cy="89.6" rx="2.9" ry="3.4" fill="url(#dg)"/></g><g transform="rotate(2 42 446)"><ellipse cx="42.1" cy="446.7" rx="1.5" ry="1.8" fill="#b2b2b4"/><ellipse cx="42.2" cy="446.5" rx="1.4" ry="1.7" fill="url(#dg)"/></g><g transform="rotate(8 173 14)"><ellipse cx="173.0" cy="14.4" rx="1.6" ry="2.9" fill="#b2b2b4"/><ellipse cx="173.2" cy="14.1" rx="1.6" ry="2.8" fill="url(#dg)"/></g><g transform="rotate(7 498 684)"><ellipse cx="497.6" cy="683.9" rx="2.2" ry="3.4" fill="#b2b2b4"/><ellipse cx="497.8" cy="683.6" rx="2.0" ry="3.2" fill="url(#dg)"/></g><g transform="rotate(-11 321 226)"><ellipse cx="320.8" cy="226.1" rx="2.0" ry="3.6" fill="#b2b2b4"/><ellipse cx="320.9" cy="225.8" rx="1.9" ry="3.4" fill="url(#dg)"/></g><g transform="rotate(17 76 116)"><ellipse cx="75.5" cy="116.6" rx="2.8" ry="3.9" fill="#b2b2b4"/><ellipse cx="75.7" cy="116.2" rx="2.7" ry="3.7" fill="url(#dg)"/></g><g transform="rotate(-4 86 606)"><ellipse cx="85.6" cy="606.6" rx="2.6" ry="3.0" fill="#b2b2b4"/><ellipse cx="85.8" cy="606.3" rx="2.4" ry="2.9" fill="url(#dg)"/></g><g transform="rotate(-17 289 521)"><ellipse cx="288.9" cy="521.7" rx="1.5" ry="2.5" fill="#b2b2b4"/><ellipse cx="289.0" cy="521.5" rx="1.4" ry="2.4" fill="url(#dg)"/></g><g transform="rotate(-12 59 195)"><ellipse cx="59.2" cy="195.2" rx="2.1" ry="3.1" fill="#b2b2b4"/><ellipse cx="59.3" cy="194.9" rx="2.0" ry="3.0" fill="url(#dg)"/></g><g transform="rotate(0 112 602)"><ellipse cx="111.8" cy="602.8" rx="2.8" ry="4.9" fill="#b2b2b4"/><ellipse cx="112.0" cy="602.3" rx="2.6" ry="4.7" fill="url(#dg)"/></g><g transform="rotate(12 512 74)"><ellipse cx="512.1" cy="74.2" rx="1.9" ry="2.4" fill="#b2b2b4"/><ellipse cx="512.2" cy="74.0" rx="1.8" ry="2.3" fill="url(#dg)"/></g><g transform="rotate(1 263 561)"><ellipse cx="262.9" cy="561.3" rx="3.0" ry="3.8" fill="#b2b2b4"/><ellipse cx="263.1" cy="561.0" rx="2.9" ry="3.6" fill="url(#dg)"/></g><g transform="rotate(6 491 258)"><ellipse cx="491.2" cy="258.4" rx="1.5" ry="2.1" fill="#b2b2b4"/><ellipse cx="491.3" cy="258.2" rx="1.4" ry="2.0" fill="url(#dg)"/></g><g transform="rotate(-16 417 194)"><ellipse cx="416.5" cy="194.2" rx="2.2" ry="3.3" fill="#b2b2b4"/><ellipse cx="416.7" cy="193.9" rx="2.1" ry="3.2" fill="url(#dg)"/></g><g transform="rotate(10 432 401)"><ellipse cx="432.1" cy="401.5" rx="2.3" ry="3.0" fill="#b2b2b4"/><ellipse cx="432.3" cy="401.2" rx="2.2" ry="2.9" fill="url(#dg)"/></g><g transform="rotate(-20 54 185)"><ellipse cx="53.4" cy="185.5" rx="3.0" ry="3.5" fill="#b2b2b4"/><ellipse cx="53.6" cy="185.2" rx="2.8" ry="3.4" fill="url(#dg)"/></g><g transform="rotate(5 409 665)"><ellipse cx="408.4" cy="665.9" rx="2.8" ry="5.0" fill="#b2b2b4"/><ellipse cx="408.6" cy="665.4" rx="2.7" ry="4.8" fill="url(#dg)"/></g><g transform="rotate(-15 212 322)"><ellipse cx="211.7" cy="321.9" rx="2.2" ry="3.0" fill="#b2b2b4"/><ellipse cx="211.8" cy="321.6" rx="2.1" ry="2.9" fill="url(#dg)"/></g><g transform="rotate(17 316 445)"><ellipse cx="316.3" cy="444.8" rx="1.7" ry="2.2" fill="#b2b2b4"/><ellipse cx="316.4" cy="444.5" rx="1.6" ry="2.1" fill="url(#dg)"/></g><g transform="rotate(9 507 281)"><ellipse cx="506.5" cy="281.2" rx="2.8" ry="4.4" fill="#b2b2b4"/><ellipse cx="506.7" cy="280.8" rx="2.7" ry="4.1" fill="url(#dg)"/></g><g transform="rotate(2 211 525)"><ellipse cx="210.3" cy="525.4" rx="3.0" ry="3.5" fill="#b2b2b4"/><ellipse cx="210.6" cy="525.1" rx="2.9" ry="3.4" fill="url(#dg)"/></g><g transform="rotate(-16 389 652)"><ellipse cx="389.1" cy="652.7" rx="3.0" ry="4.7" fill="#b2b2b4"/><ellipse cx="389.3" cy="652.2" rx="2.8" ry="4.5" fill="url(#dg)"/></g><g transform="rotate(-1 485 4)"><ellipse cx="484.8" cy="4.5" rx="2.7" ry="4.3" fill="#b2b2b4"/><ellipse cx="485.0" cy="4.1" rx="2.5" ry="4.1" fill="url(#dg)"/></g><g transform="rotate(-17 432 527)"><ellipse cx="432.3" cy="527.6" rx="1.5" ry="2.5" fill="#b2b2b4"/><ellipse cx="432.4" cy="527.4" rx="1.4" ry="2.4" fill="url(#dg)"/></g><g transform="rotate(-17 335 601)"><ellipse cx="334.9" cy="601.6" rx="1.9" ry="2.4" fill="#b2b2b4"/><ellipse cx="335.0" cy="601.4" rx="1.8" ry="2.3" fill="url(#dg)"/></g><g transform="rotate(20 257 673)"><ellipse cx="257.1" cy="673.8" rx="2.6" ry="3.5" fill="#b2b2b4"/><ellipse cx="257.2" cy="673.5" rx="2.5" ry="3.3" fill="url(#dg)"/></g><g transform="rotate(-7 316 102)"><ellipse cx="316.0" cy="102.4" rx="2.8" ry="4.6" fill="#b2b2b4"/><ellipse cx="316.3" cy="102.0" rx="2.7" ry="4.4" fill="url(#dg)"/></g><g transform="rotate(0 463 163)"><ellipse cx="462.5" cy="163.7" rx="2.2" ry="3.4" fill="#b2b2b4"/><ellipse cx="462.6" cy="163.4" rx="2.1" ry="3.2" fill="url(#dg)"/></g><g transform="rotate(-14 523 695)"><ellipse cx="523.0" cy="695.3" rx="1.8" ry="2.7" fill="#b2b2b4"/><ellipse cx="523.1" cy="695.0" rx="1.7" ry="2.6" fill="url(#dg)"/></g><g transform="rotate(-2 70 621)"><ellipse cx="69.8" cy="620.8" rx="1.4" ry="2.4" fill="#b2b2b4"/><ellipse cx="69.9" cy="620.5" rx="1.3" ry="2.3" fill="url(#dg)"/></g><g transform="rotate(16 247 260)"><ellipse cx="246.8" cy="260.7" rx="2.7" ry="3.9" fill="#b2b2b4"/><ellipse cx="247.0" cy="260.4" rx="2.5" ry="3.7" fill="url(#dg)"/></g><g transform="rotate(-15 225 448)"><ellipse cx="225.0" cy="448.1" rx="2.2" ry="3.1" fill="#b2b2b4"/><ellipse cx="225.2" cy="447.8" rx="2.1" ry="3.0" fill="url(#dg)"/></g><g transform="rotate(7 363 550)"><ellipse cx="362.9" cy="550.0" rx="3.2" ry="5.1" fill="#b2b2b4"/><ellipse cx="363.2" cy="549.5" rx="3.1" ry="4.8" fill="url(#dg)"/></g><g transform="rotate(-13 12 294)"><ellipse cx="11.8" cy="294.9" rx="2.9" ry="5.2" fill="#b2b2b4"/><ellipse cx="12.0" cy="294.5" rx="2.8" ry="5.0" fill="url(#dg)"/></g><g transform="rotate(-20 248 644)"><ellipse cx="248.0" cy="644.6" rx="2.1" ry="2.5" fill="#b2b2b4"/><ellipse cx="248.2" cy="644.3" rx="2.0" ry="2.4" fill="url(#dg)"/></g><g transform="rotate(-9 184 207)"><ellipse cx="183.7" cy="207.0" rx="2.8" ry="3.3" fill="#b2b2b4"/><ellipse cx="183.9" cy="206.7" rx="2.7" ry="3.1" fill="url(#dg)"/></g><g transform="rotate(-15 495 410)"><ellipse cx="495.2" cy="410.6" rx="2.8" ry="4.8" fill="#b2b2b4"/><ellipse cx="495.4" cy="410.1" rx="2.6" ry="4.6" fill="url(#dg)"/></g><g transform="rotate(-13 26 222)"><ellipse cx="25.8" cy="222.6" rx="3.2" ry="4.7" fill="#b2b2b4"/><ellipse cx="26.0" cy="222.2" rx="3.0" ry="4.5" fill="url(#dg)"/></g><g transform="rotate(2 226 677)"><ellipse cx="225.6" cy="677.7" rx="3.3" ry="4.3" fill="#b2b2b4"/><ellipse cx="225.9" cy="677.3" rx="3.2" ry="4.1" fill="url(#dg)"/></g><g transform="rotate(13 116 55)"><ellipse cx="116.3" cy="55.4" rx="2.2" ry="3.9" fill="#b2b2b4"/><ellipse cx="116.4" cy="55.1" rx="2.1" ry="3.7" fill="url(#dg)"/></g><g transform="rotate(-19 513 49)"><ellipse cx="512.6" cy="49.6" rx="2.3" ry="4.2" fill="#b2b2b4"/><ellipse cx="512.7" cy="49.2" rx="2.2" ry="4.0" fill="url(#dg)"/></g><g transform="rotate(-8 407 242)"><ellipse cx="406.9" cy="242.2" rx="3.3" ry="5.1" fill="#b2b2b4"/><ellipse cx="407.1" cy="241.7" rx="3.1" ry="4.8" fill="url(#dg)"/></g><g transform="rotate(-5 437 642)"><ellipse cx="436.7" cy="642.5" rx="1.6" ry="2.8" fill="#b2b2b4"/><ellipse cx="436.8" cy="642.3" rx="1.5" ry="2.7" fill="url(#dg)"/></g><g transform="rotate(16 278 195)"><ellipse cx="278.0" cy="195.3" rx="2.3" ry="2.9" fill="#b2b2b4"/><ellipse cx="278.2" cy="195.0" rx="2.2" ry="2.7" fill="url(#dg)"/></g><g transform="rotate(19 66 504)"><ellipse cx="65.9" cy="504.0" rx="3.0" ry="4.1" fill="#b2b2b4"/><ellipse cx="66.1" cy="503.6" rx="2.9" ry="3.9" fill="url(#dg)"/></g><g transform="rotate(10 296 689)"><ellipse cx="296.2" cy="689.3" rx="2.1" ry="3.2" fill="#b2b2b4"/><ellipse cx="296.4" cy="689.0" rx="2.0" ry="3.1" fill="url(#dg)"/></g><g transform="rotate(18 541 165)"><ellipse cx="540.6" cy="165.3" rx="2.3" ry="3.5" fill="#b2b2b4"/><ellipse cx="540.8" cy="165.0" rx="2.1" ry="3.3" fill="url(#dg)"/></g><g transform="rotate(16 522 298)"><ellipse cx="522.0" cy="298.8" rx="2.7" ry="3.5" fill="#b2b2b4"/><ellipse cx="522.2" cy="298.5" rx="2.5" ry="3.3" fill="url(#dg)"/></g><g transform="rotate(-3 262 108)"><ellipse cx="261.5" cy="108.2" rx="3.3" ry="5.0" fill="#b2b2b4"/><ellipse cx="261.8" cy="107.7" rx="3.1" ry="4.7" fill="url(#dg)"/></g><g transform="rotate(-19 7 33)"><ellipse cx="7.3" cy="32.7" rx="1.4" ry="2.0" fill="#b2b2b4"/><ellipse cx="7.4" cy="32.5" rx="1.4" ry="1.9" fill="url(#dg)"/></g><g transform="rotate(3 542 277)"><ellipse cx="541.3" cy="277.5" rx="2.6" ry="3.7" fill="#b2b2b4"/><ellipse cx="541.5" cy="277.2" rx="2.5" ry="3.5" fill="url(#dg)"/></g><g transform="rotate(-20 87 344)"><ellipse cx="86.4" cy="344.7" rx="2.4" ry="4.0" fill="#b2b2b4"/><ellipse cx="86.5" cy="344.3" rx="2.3" ry="3.9" fill="url(#dg)"/></g><g transform="rotate(-0 419 542)"><ellipse cx="418.4" cy="542.6" rx="2.4" ry="3.8" fill="#b2b2b4"/><ellipse cx="418.6" cy="542.3" rx="2.3" ry="3.6" fill="url(#dg)"/></g><g transform="rotate(-7 469 178)"><ellipse cx="469.0" cy="177.9" rx="1.4" ry="2.3" fill="#b2b2b4"/><ellipse cx="469.1" cy="177.7" rx="1.3" ry="2.2" fill="url(#dg)"/></g><g transform="rotate(1 7 197)"><ellipse cx="7.3" cy="197.5" rx="1.9" ry="2.2" fill="#b2b2b4"/><ellipse cx="7.4" cy="197.3" rx="1.8" ry="2.1" fill="url(#dg)"/></g><g transform="rotate(-9 261 207)"><ellipse cx="261.1" cy="206.9" rx="2.6" ry="3.2" fill="#b2b2b4"/><ellipse cx="261.3" cy="206.6" rx="2.5" ry="3.0" fill="url(#dg)"/></g><g transform="rotate(14 24 511)"><ellipse cx="24.1" cy="510.9" rx="2.5" ry="3.5" fill="#b2b2b4"/><ellipse cx="24.3" cy="510.5" rx="2.4" ry="3.3" fill="url(#dg)"/></g><g transform="rotate(-4 284 11)"><ellipse cx="283.9" cy="11.8" rx="2.2" ry="3.8" fill="#b2b2b4"/><ellipse cx="284.1" cy="11.4" rx="2.1" ry="3.6" fill="url(#dg)"/></g><g transform="rotate(-19 199 708)"><ellipse cx="199.0" cy="708.0" rx="2.8" ry="4.4" fill="#b2b2b4"/><ellipse cx="199.2" cy="707.6" rx="2.6" ry="4.2" fill="url(#dg)"/></g><g transform="rotate(15 54 555)"><ellipse cx="53.8" cy="555.8" rx="3.1" ry="5.3" fill="#b2b2b4"/><ellipse cx="54.0" cy="555.3" rx="2.9" ry="5.0" fill="url(#dg)"/></g><g transform="rotate(-11 8 686)"><ellipse cx="7.9" cy="686.7" rx="2.6" ry="4.4" fill="#b2b2b4"/><ellipse cx="8.1" cy="686.2" rx="2.5" ry="4.1" fill="url(#dg)"/></g><g transform="rotate(5 267 3)"><ellipse cx="267.1" cy="3.2" rx="3.1" ry="4.1" fill="#b2b2b4"/><ellipse cx="267.3" cy="2.8" rx="3.0" ry="4.0" fill="url(#dg)"/></g><g transform="rotate(-10 32 228)"><ellipse cx="31.6" cy="228.8" rx="2.2" ry="3.4" fill="#b2b2b4"/><ellipse cx="31.7" cy="228.4" rx="2.0" ry="3.3" fill="url(#dg)"/></g><g transform="rotate(4 295 50)"><ellipse cx="295.1" cy="50.2" rx="2.6" ry="3.2" fill="#b2b2b4"/><ellipse cx="295.3" cy="49.9" rx="2.5" ry="3.0" fill="url(#dg)"/></g><g transform="rotate(17 131 20)"><ellipse cx="131.0" cy="20.5" rx="2.7" ry="3.2" fill="#b2b2b4"/><ellipse cx="131.2" cy="20.1" rx="2.6" ry="3.0" fill="url(#dg)"/></g><g transform="rotate(6 25 135)"><ellipse cx="24.6" cy="135.2" rx="1.4" ry="2.5" fill="#b2b2b4"/><ellipse cx="24.7" cy="134.9" rx="1.3" ry="2.3" fill="url(#dg)"/></g><g transform="rotate(-14 424 47)"><ellipse cx="423.8" cy="47.1" rx="1.8" ry="3.2" fill="#b2b2b4"/><ellipse cx="424.0" cy="46.8" rx="1.7" ry="3.0" fill="url(#dg)"/></g><g transform="rotate(-1 422 312)"><ellipse cx="421.5" cy="312.7" rx="1.8" ry="2.4" fill="#b2b2b4"/><ellipse cx="421.6" cy="312.4" rx="1.7" ry="2.3" fill="url(#dg)"/></g><g transform="rotate(-3 538 212)"><ellipse cx="538.0" cy="212.6" rx="1.8" ry="2.1" fill="#b2b2b4"/><ellipse cx="538.1" cy="212.4" rx="1.7" ry="2.0" fill="url(#dg)"/></g><g transform="rotate(-8 299 230)"><ellipse cx="298.8" cy="230.3" rx="1.6" ry="2.2" fill="#b2b2b4"/><ellipse cx="298.9" cy="230.1" rx="1.5" ry="2.1" fill="url(#dg)"/></g><g transform="rotate(8 254 661)"><ellipse cx="254.2" cy="661.2" rx="2.4" ry="3.1" fill="#b2b2b4"/><ellipse cx="254.3" cy="660.9" rx="2.3" ry="3.0" fill="url(#dg)"/></g><g transform="rotate(-18 146 92)"><ellipse cx="146.3" cy="92.5" rx="2.7" ry="3.4" fill="#b2b2b4"/><ellipse cx="146.5" cy="92.1" rx="2.6" ry="3.3" fill="url(#dg)"/></g><g transform="rotate(3 198 35)"><ellipse cx="197.9" cy="35.3" rx="2.4" ry="2.8" fill="#b2b2b4"/><ellipse cx="198.1" cy="35.1" rx="2.3" ry="2.7" fill="url(#dg)"/></g><g transform="rotate(3 146 385)"><ellipse cx="146.0" cy="385.4" rx="1.7" ry="2.4" fill="#b2b2b4"/><ellipse cx="146.2" cy="385.2" rx="1.6" ry="2.3" fill="url(#dg)"/></g><g transform="rotate(7 25 628)"><ellipse cx="25.1" cy="628.3" rx="2.7" ry="3.7" fill="#b2b2b4"/><ellipse cx="25.3" cy="628.0" rx="2.6" ry="3.5" fill="url(#dg)"/></g><g transform="rotate(3 246 681)"><ellipse cx="246.0" cy="681.3" rx="2.3" ry="3.2" fill="#b2b2b4"/><ellipse cx="246.2" cy="681.0" rx="2.2" ry="3.0" fill="url(#dg)"/></g><g transform="rotate(1 167 218)"><ellipse cx="166.5" cy="218.1" rx="1.6" ry="2.0" fill="#b2b2b4"/><ellipse cx="166.6" cy="217.9" rx="1.6" ry="1.9" fill="url(#dg)"/></g><g transform="rotate(-16 486 316)"><ellipse cx="485.6" cy="316.2" rx="2.4" ry="3.1" fill="#b2b2b4"/><ellipse cx="485.8" cy="315.9" rx="2.3" ry="2.9" fill="url(#dg)"/></g><g transform="rotate(17 494 82)"><ellipse cx="493.4" cy="82.5" rx="2.3" ry="2.9" fill="#b2b2b4"/><ellipse cx="493.6" cy="82.2" rx="2.2" ry="2.8" fill="url(#dg)"/></g><g transform="rotate(6 140 90)"><ellipse cx="140.1" cy="90.2" rx="1.5" ry="1.8" fill="#b2b2b4"/><ellipse cx="140.3" cy="90.0" rx="1.5" ry="1.7" fill="url(#dg)"/></g><g transform="rotate(-13 191 552)"><ellipse cx="190.4" cy="551.8" rx="1.6" ry="2.1" fill="#b2b2b4"/><ellipse cx="190.5" cy="551.6" rx="1.5" ry="2.0" fill="url(#dg)"/></g><g transform="rotate(-16 352 495)"><ellipse cx="351.9" cy="495.6" rx="1.4" ry="2.0" fill="#b2b2b4"/><ellipse cx="352.0" cy="495.5" rx="1.3" ry="1.9" fill="url(#dg)"/></g><g transform="rotate(-14 510 383)"><ellipse cx="510.4" cy="382.9" rx="1.5" ry="1.9" fill="#b2b2b4"/><ellipse cx="510.5" cy="382.8" rx="1.4" ry="1.8" fill="url(#dg)"/></g><g transform="rotate(-8 455 194)"><ellipse cx="454.7" cy="194.5" rx="1.9" ry="2.3" fill="#b2b2b4"/><ellipse cx="454.8" cy="194.3" rx="1.8" ry="2.2" fill="url(#dg)"/></g><g transform="rotate(17 279 678)"><ellipse cx="278.8" cy="678.1" rx="2.2" ry="3.5" fill="#b2b2b4"/><ellipse cx="279.0" cy="677.8" rx="2.1" ry="3.4" fill="url(#dg)"/></g><g transform="rotate(1 446 305)"><ellipse cx="445.7" cy="305.4" rx="2.4" ry="3.1" fill="#b2b2b4"/><ellipse cx="445.9" cy="305.1" rx="2.3" ry="2.9" fill="url(#dg)"/></g><g transform="rotate(13 316 180)"><ellipse cx="315.5" cy="180.3" rx="1.5" ry="2.2" fill="#b2b2b4"/><ellipse cx="315.6" cy="180.1" rx="1.5" ry="2.1" fill="url(#dg)"/></g><g transform="rotate(-14 290 243)"><ellipse cx="290.2" cy="243.7" rx="2.3" ry="3.0" fill="#b2b2b4"/><ellipse cx="290.4" cy="243.4" rx="2.2" ry="2.9" fill="url(#dg)"/></g><g transform="rotate(-6 164 134)"><ellipse cx="164.0" cy="134.6" rx="1.4" ry="2.3" fill="#b2b2b4"/><ellipse cx="164.2" cy="134.3" rx="1.4" ry="2.2" fill="url(#dg)"/></g><g transform="rotate(-14 91 99)"><ellipse cx="91.0" cy="99.3" rx="2.5" ry="4.0" fill="#b2b2b4"/><ellipse cx="91.2" cy="98.9" rx="2.4" ry="3.9" fill="url(#dg)"/></g><g transform="rotate(-4 69 18)"><ellipse cx="68.7" cy="18.4" rx="3.2" ry="4.4" fill="#b2b2b4"/><ellipse cx="68.9" cy="18.0" rx="3.1" ry="4.2" fill="url(#dg)"/></g><g transform="rotate(-15 253 218)"><ellipse cx="253.1" cy="218.4" rx="3.2" ry="5.6" fill="#b2b2b4"/><ellipse cx="253.3" cy="217.9" rx="3.0" ry="5.4" fill="url(#dg)"/></g><g transform="rotate(17 262 204)"><ellipse cx="262.3" cy="204.4" rx="1.6" ry="2.3" fill="#b2b2b4"/><ellipse cx="262.4" cy="204.2" rx="1.5" ry="2.2" fill="url(#dg)"/></g><g transform="rotate(-17 140 228)"><ellipse cx="139.8" cy="228.5" rx="1.7" ry="2.7" fill="#b2b2b4"/><ellipse cx="139.9" cy="228.3" rx="1.6" ry="2.6" fill="url(#dg)"/></g><g transform="rotate(-4 231 61)"><ellipse cx="230.8" cy="61.4" rx="2.5" ry="3.9" fill="#b2b2b4"/><ellipse cx="231.0" cy="61.0" rx="2.4" ry="3.7" fill="url(#dg)"/></g><g transform="rotate(-3 488 328)"><ellipse cx="488.1" cy="328.6" rx="3.2" ry="4.5" fill="#b2b2b4"/><ellipse cx="488.3" cy="328.2" rx="3.0" ry="4.3" fill="url(#dg)"/></g><g transform="rotate(-5 103 622)"><ellipse cx="102.9" cy="622.9" rx="3.1" ry="4.0" fill="#b2b2b4"/><ellipse cx="103.1" cy="622.5" rx="2.9" ry="3.8" fill="url(#dg)"/></g><g transform="rotate(4 20 157)"><ellipse cx="19.5" cy="157.8" rx="3.0" ry="3.6" fill="#b2b2b4"/><ellipse cx="19.7" cy="157.5" rx="2.9" ry="3.4" fill="url(#dg)"/></g><g transform="rotate(-2 477 553)"><ellipse cx="476.7" cy="553.0" rx="3.1" ry="4.3" fill="#b2b2b4"/><ellipse cx="476.9" cy="552.5" rx="3.0" ry="4.1" fill="url(#dg)"/></g><g transform="rotate(17 135 607)"><ellipse cx="134.4" cy="607.2" rx="2.5" ry="4.0" fill="#b2b2b4"/><ellipse cx="134.6" cy="606.8" rx="2.4" ry="3.8" fill="url(#dg)"/></g><g transform="rotate(-5 362 127)"><ellipse cx="362.1" cy="127.5" rx="2.6" ry="3.5" fill="#b2b2b4"/><ellipse cx="362.3" cy="127.1" rx="2.5" ry="3.4" fill="url(#dg)"/></g><g transform="rotate(13 253 228)"><ellipse cx="252.6" cy="227.9" rx="2.0" ry="2.6" fill="#b2b2b4"/><ellipse cx="252.7" cy="227.7" rx="1.9" ry="2.4" fill="url(#dg)"/></g><g transform="rotate(18 447 445)"><ellipse cx="446.7" cy="445.5" rx="1.9" ry="2.8" fill="#b2b2b4"/><ellipse cx="446.8" cy="445.3" rx="1.8" ry="2.6" fill="url(#dg)"/></g><g transform="rotate(5 516 170)"><ellipse cx="515.5" cy="170.4" rx="2.3" ry="3.7" fill="#b2b2b4"/><ellipse cx="515.6" cy="170.0" rx="2.2" ry="3.5" fill="url(#dg)"/></g><g transform="rotate(11 108 343)"><ellipse cx="107.9" cy="343.0" rx="2.3" ry="4.2" fill="#b2b2b4"/><ellipse cx="108.0" cy="342.6" rx="2.2" ry="4.0" fill="url(#dg)"/></g><g transform="rotate(-5 60 561)"><ellipse cx="59.8" cy="561.6" rx="2.8" ry="3.6" fill="#b2b2b4"/><ellipse cx="60.0" cy="561.3" rx="2.7" ry="3.5" fill="url(#dg)"/></g><g transform="rotate(-2 63 243)"><ellipse cx="62.4" cy="243.8" rx="2.7" ry="4.4" fill="#b2b2b4"/><ellipse cx="62.6" cy="243.3" rx="2.6" ry="4.2" fill="url(#dg)"/></g><g transform="rotate(19 141 194)"><ellipse cx="140.9" cy="194.3" rx="1.5" ry="1.8" fill="#b2b2b4"/><ellipse cx="141.0" cy="194.1" rx="1.4" ry="1.7" fill="url(#dg)"/></g><g transform="rotate(11 60 600)"><ellipse cx="60.1" cy="600.3" rx="1.4" ry="2.5" fill="#b2b2b4"/><ellipse cx="60.2" cy="600.1" rx="1.4" ry="2.4" fill="url(#dg)"/></g><g transform="rotate(-15 135 676)"><ellipse cx="134.6" cy="676.2" rx="2.4" ry="2.9" fill="#b2b2b4"/><ellipse cx="134.7" cy="676.0" rx="2.2" ry="2.8" fill="url(#dg)"/></g><g transform="rotate(-4 132 216)"><ellipse cx="132.3" cy="216.7" rx="1.7" ry="2.2" fill="#b2b2b4"/><ellipse cx="132.4" cy="216.5" rx="1.6" ry="2.1" fill="url(#dg)"/></g><g transform="rotate(-4 354 116)"><ellipse cx="354.1" cy="116.2" rx="1.8" ry="3.3" fill="#b2b2b4"/><ellipse cx="354.3" cy="115.9" rx="1.7" ry="3.1" fill="url(#dg)"/></g><g transform="rotate(13 445 269)"><ellipse cx="444.3" cy="269.6" rx="3.0" ry="5.0" fill="#b2b2b4"/><ellipse cx="444.5" cy="269.1" rx="2.9" ry="4.7" fill="url(#dg)"/></g><g transform="rotate(-18 208 106)"><ellipse cx="207.7" cy="106.0" rx="1.5" ry="2.6" fill="#b2b2b4"/><ellipse cx="207.9" cy="105.8" rx="1.5" ry="2.4" fill="url(#dg)"/></g><g transform="rotate(10 258 428)"><ellipse cx="257.9" cy="428.2" rx="2.1" ry="3.5" fill="#b2b2b4"/><ellipse cx="258.1" cy="427.9" rx="2.0" ry="3.3" fill="url(#dg)"/></g><g transform="rotate(-5 128 358)"><ellipse cx="127.8" cy="358.4" rx="2.7" ry="3.5" fill="#b2b2b4"/><ellipse cx="128.0" cy="358.1" rx="2.6" ry="3.3" fill="url(#dg)"/></g><g transform="rotate(3 351 224)"><ellipse cx="350.8" cy="224.4" rx="3.1" ry="3.7" fill="#b2b2b4"/><ellipse cx="351.0" cy="224.0" rx="2.9" ry="3.5" fill="url(#dg)"/></g><g transform="rotate(2 54 585)"><ellipse cx="53.4" cy="585.2" rx="3.2" ry="5.6" fill="#b2b2b4"/><ellipse cx="53.6" cy="584.7" rx="3.1" ry="5.3" fill="url(#dg)"/></g><g transform="rotate(18 352 470)"><ellipse cx="352.1" cy="470.4" rx="2.4" ry="3.0" fill="#b2b2b4"/><ellipse cx="352.2" cy="470.2" rx="2.3" ry="2.9" fill="url(#dg)"/></g><g transform="rotate(-1 202 704)"><ellipse cx="202.2" cy="703.8" rx="1.5" ry="1.9" fill="#b2b2b4"/><ellipse cx="202.3" cy="703.6" rx="1.4" ry="1.8" fill="url(#dg)"/></g><g transform="rotate(-4 311 372)"><ellipse cx="311.1" cy="372.6" rx="1.8" ry="2.1" fill="#b2b2b4"/><ellipse cx="311.2" cy="372.4" rx="1.7" ry="2.0" fill="url(#dg)"/></g><g transform="rotate(-12 239 38)"><ellipse cx="238.4" cy="37.9" rx="2.2" ry="3.2" fill="#b2b2b4"/><ellipse cx="238.5" cy="37.6" rx="2.1" ry="3.0" fill="url(#dg)"/></g><g transform="rotate(18 332 622)"><ellipse cx="332.1" cy="622.1" rx="2.7" ry="3.3" fill="#b2b2b4"/><ellipse cx="332.4" cy="621.7" rx="2.6" ry="3.1" fill="url(#dg)"/></g><g transform="rotate(-12 131 556)"><ellipse cx="130.5" cy="555.8" rx="2.2" ry="2.7" fill="#b2b2b4"/><ellipse cx="130.7" cy="555.5" rx="2.1" ry="2.6" fill="url(#dg)"/></g><g transform="rotate(12 230 539)"><ellipse cx="230.1" cy="538.8" rx="2.3" ry="2.7" fill="#b2b2b4"/><ellipse cx="230.2" cy="538.6" rx="2.2" ry="2.6" fill="url(#dg)"/></g><g transform="rotate(-14 420 703)"><ellipse cx="419.9" cy="703.8" rx="3.3" ry="4.5" fill="#b2b2b4"/><ellipse cx="420.2" cy="703.3" rx="3.1" ry="4.3" fill="url(#dg)"/></g><g transform="rotate(14 507 96)"><ellipse cx="507.4" cy="96.4" rx="1.4" ry="2.3" fill="#b2b2b4"/><ellipse cx="507.5" cy="96.2" rx="1.3" ry="2.2" fill="url(#dg)"/></g><g transform="rotate(0 341 503)"><ellipse cx="341.0" cy="503.6" rx="2.7" ry="3.6" fill="#b2b2b4"/><ellipse cx="341.2" cy="503.3" rx="2.6" ry="3.4" fill="url(#dg)"/></g><g transform="rotate(19 408 16)"><ellipse cx="407.9" cy="16.5" rx="2.7" ry="4.5" fill="#b2b2b4"/><ellipse cx="408.1" cy="16.0" rx="2.6" ry="4.3" fill="url(#dg)"/></g><g transform="rotate(-11 342 162)"><ellipse cx="342.0" cy="162.9" rx="3.3" ry="5.8" fill="#b2b2b4"/><ellipse cx="342.2" cy="162.4" rx="3.2" ry="5.6" fill="url(#dg)"/></g><g transform="rotate(7 207 260)"><ellipse cx="206.8" cy="260.4" rx="1.9" ry="2.9" fill="#b2b2b4"/><ellipse cx="206.9" cy="260.1" rx="1.8" ry="2.8" fill="url(#dg)"/></g><g transform="rotate(-9 517 401)"><ellipse cx="516.8" cy="401.8" rx="2.9" ry="4.2" fill="#b2b2b4"/><ellipse cx="517.0" cy="401.4" rx="2.8" ry="4.0" fill="url(#dg)"/></g><g transform="rotate(-11 210 445)"><ellipse cx="210.2" cy="445.3" rx="1.7" ry="2.2" fill="#b2b2b4"/><ellipse cx="210.3" cy="445.1" rx="1.6" ry="2.1" fill="url(#dg)"/></g><g transform="rotate(-18 21 232)"><ellipse cx="20.4" cy="232.1" rx="2.2" ry="3.8" fill="#b2b2b4"/><ellipse cx="20.6" cy="231.7" rx="2.1" ry="3.6" fill="url(#dg)"/></g><g transform="rotate(9 34 384)"><ellipse cx="33.6" cy="384.7" rx="2.1" ry="3.8" fill="#b2b2b4"/><ellipse cx="33.8" cy="384.3" rx="2.0" ry="3.6" fill="url(#dg)"/></g><g transform="rotate(-16 136 507)"><ellipse cx="135.4" cy="507.7" rx="2.9" ry="4.6" fill="#b2b2b4"/><ellipse cx="135.6" cy="507.2" rx="2.7" ry="4.4" fill="url(#dg)"/></g><g transform="rotate(-4 229 484)"><ellipse cx="228.6" cy="484.2" rx="1.6" ry="2.3" fill="#b2b2b4"/><ellipse cx="228.7" cy="484.0" rx="1.6" ry="2.1" fill="url(#dg)"/></g><g transform="rotate(-20 133 535)"><ellipse cx="132.7" cy="535.5" rx="2.9" ry="3.7" fill="#b2b2b4"/><ellipse cx="132.9" cy="535.1" rx="2.8" ry="3.5" fill="url(#dg)"/></g><g transform="rotate(5 221 649)"><ellipse cx="220.6" cy="649.1" rx="2.1" ry="2.9" fill="#b2b2b4"/><ellipse cx="220.7" cy="648.8" rx="2.0" ry="2.8" fill="url(#dg)"/></g><g transform="rotate(-11 61 34)"><ellipse cx="61.0" cy="34.6" rx="2.3" ry="3.8" fill="#b2b2b4"/><ellipse cx="61.1" cy="34.3" rx="2.2" ry="3.6" fill="url(#dg)"/></g><g transform="rotate(2 354 684)"><ellipse cx="354.3" cy="684.4" rx="1.6" ry="2.3" fill="#b2b2b4"/><ellipse cx="354.4" cy="684.2" rx="1.5" ry="2.2" fill="url(#dg)"/></g><g transform="rotate(-15 59 101)"><ellipse cx="58.6" cy="101.3" rx="2.1" ry="3.2" fill="#b2b2b4"/><ellipse cx="58.7" cy="101.0" rx="2.0" ry="3.0" fill="url(#dg)"/></g><g transform="rotate(5 67 261)"><ellipse cx="67.1" cy="261.2" rx="3.2" ry="5.2" fill="#b2b2b4"/><ellipse cx="67.3" cy="260.7" rx="3.1" ry="4.9" fill="url(#dg)"/></g><g transform="rotate(-13 44 96)"><ellipse cx="44.0" cy="96.3" rx="3.1" ry="5.3" fill="#b2b2b4"/><ellipse cx="44.3" cy="95.8" rx="3.0" ry="5.1" fill="url(#dg)"/></g><g transform="rotate(11 533 629)"><ellipse cx="532.7" cy="629.0" rx="2.3" ry="3.0" fill="#b2b2b4"/><ellipse cx="532.9" cy="628.7" rx="2.2" ry="2.9" fill="url(#dg)"/></g><g transform="rotate(0 95 466)"><ellipse cx="94.8" cy="466.4" rx="2.7" ry="4.4" fill="#b2b2b4"/><ellipse cx="95.0" cy="466.0" rx="2.5" ry="4.1" fill="url(#dg)"/></g><g transform="rotate(-1 99 677)"><ellipse cx="99.0" cy="677.8" rx="2.0" ry="3.5" fill="#b2b2b4"/><ellipse cx="99.1" cy="677.4" rx="1.9" ry="3.3" fill="url(#dg)"/></g><g transform="rotate(-11 394 290)"><ellipse cx="394.3" cy="289.8" rx="1.5" ry="2.3" fill="#b2b2b4"/><ellipse cx="394.4" cy="289.5" rx="1.5" ry="2.2" fill="url(#dg)"/></g><g transform="rotate(2 376 109)"><ellipse cx="376.0" cy="109.2" rx="2.1" ry="2.9" fill="#b2b2b4"/><ellipse cx="376.2" cy="108.9" rx="2.0" ry="2.8" fill="url(#dg)"/></g><g transform="rotate(-8 89 377)"><ellipse cx="88.4" cy="376.9" rx="3.0" ry="3.9" fill="#b2b2b4"/><ellipse cx="88.6" cy="376.6" rx="2.8" ry="3.7" fill="url(#dg)"/></g><g transform="rotate(6 446 419)"><ellipse cx="445.9" cy="419.8" rx="2.9" ry="3.9" fill="#b2b2b4"/><ellipse cx="446.2" cy="419.4" rx="2.8" ry="3.7" fill="url(#dg)"/></g><g transform="rotate(14 504 335)"><ellipse cx="504.1" cy="335.2" rx="2.7" ry="4.0" fill="#b2b2b4"/><ellipse cx="504.3" cy="334.8" rx="2.6" ry="3.8" fill="url(#dg)"/></g><g transform="rotate(11 527 511)"><ellipse cx="527.2" cy="511.5" rx="3.1" ry="5.3" fill="#b2b2b4"/><ellipse cx="527.4" cy="511.0" rx="3.0" ry="5.0" fill="url(#dg)"/></g><g transform="rotate(-1 340 374)"><ellipse cx="339.8" cy="374.0" rx="2.1" ry="2.7" fill="#b2b2b4"/><ellipse cx="339.9" cy="373.7" rx="2.0" ry="2.6" fill="url(#dg)"/></g><g transform="rotate(-10 535 164)"><ellipse cx="534.6" cy="164.0" rx="1.5" ry="1.9" fill="#b2b2b4"/><ellipse cx="534.7" cy="163.8" rx="1.4" ry="1.9" fill="url(#dg)"/></g><g transform="rotate(-12 111 672)"><ellipse cx="110.9" cy="672.2" rx="2.8" ry="4.4" fill="#b2b2b4"/><ellipse cx="111.1" cy="671.8" rx="2.6" ry="4.2" fill="url(#dg)"/></g><g transform="rotate(1 121 372)"><ellipse cx="121.3" cy="372.5" rx="2.3" ry="3.6" fill="#b2b2b4"/><ellipse cx="121.4" cy="372.1" rx="2.2" ry="3.4" fill="url(#dg)"/></g><g transform="rotate(9 538 28)"><ellipse cx="537.9" cy="28.1" rx="3.3" ry="4.0" fill="#b2b2b4"/><ellipse cx="538.2" cy="27.7" rx="3.1" ry="3.8" fill="url(#dg)"/></g><g transform="rotate(-7 403 199)"><ellipse cx="403.4" cy="198.7" rx="1.8" ry="2.1" fill="#b2b2b4"/><ellipse cx="403.5" cy="198.5" rx="1.7" ry="2.0" fill="url(#dg)"/></g><g transform="rotate(7 311 87)"><ellipse cx="310.6" cy="87.8" rx="2.6" ry="4.0" fill="#b2b2b4"/><ellipse cx="310.8" cy="87.4" rx="2.4" ry="3.9" fill="url(#dg)"/></g><g transform="rotate(-14 71 458)"><ellipse cx="70.4" cy="458.0" rx="1.8" ry="3.1" fill="#b2b2b4"/><ellipse cx="70.6" cy="457.8" rx="1.7" ry="2.9" fill="url(#dg)"/></g><g transform="rotate(-6 91 21)"><ellipse cx="91.1" cy="21.5" rx="1.9" ry="2.4" fill="#b2b2b4"/><ellipse cx="91.2" cy="21.2" rx="1.8" ry="2.3" fill="url(#dg)"/></g><g transform="rotate(2 204 402)"><ellipse cx="203.7" cy="402.6" rx="2.1" ry="2.7" fill="#b2b2b4"/><ellipse cx="203.9" cy="402.4" rx="2.0" ry="2.6" fill="url(#dg)"/></g><g transform="rotate(-20 187 117)"><ellipse cx="186.7" cy="117.2" rx="2.0" ry="2.3" fill="#b2b2b4"/><ellipse cx="186.8" cy="117.0" rx="1.9" ry="2.2" fill="url(#dg)"/></g><g transform="rotate(15 116 167)"><ellipse cx="116.1" cy="167.1" rx="1.6" ry="2.0" fill="#b2b2b4"/><ellipse cx="116.2" cy="166.9" rx="1.5" ry="1.9" fill="url(#dg)"/></g><g transform="rotate(-17 530 79)"><ellipse cx="529.5" cy="79.4" rx="2.6" ry="3.3" fill="#b2b2b4"/><ellipse cx="529.7" cy="79.1" rx="2.5" ry="3.1" fill="url(#dg)"/></g><g transform="rotate(-16 76 135)"><ellipse cx="75.4" cy="135.1" rx="1.7" ry="2.2" fill="#b2b2b4"/><ellipse cx="75.5" cy="134.9" rx="1.6" ry="2.1" fill="url(#dg)"/></g><g transform="rotate(-19 117 72)"><ellipse cx="117.0" cy="72.4" rx="1.8" ry="2.7" fill="#b2b2b4"/><ellipse cx="117.2" cy="72.2" rx="1.7" ry="2.6" fill="url(#dg)"/></g><g transform="rotate(-14 471 113)"><ellipse cx="470.5" cy="113.7" rx="2.4" ry="3.3" fill="#b2b2b4"/><ellipse cx="470.7" cy="113.4" rx="2.3" ry="3.2" fill="url(#dg)"/></g><g transform="rotate(-1 534 171)"><ellipse cx="534.3" cy="171.7" rx="2.7" ry="4.6" fill="#b2b2b4"/><ellipse cx="534.5" cy="171.2" rx="2.6" ry="4.4" fill="url(#dg)"/></g><g transform="rotate(7 137 511)"><ellipse cx="136.5" cy="510.9" rx="2.4" ry="3.1" fill="#b2b2b4"/><ellipse cx="136.7" cy="510.6" rx="2.3" ry="2.9" fill="url(#dg)"/></g><g transform="rotate(7 178 411)"><ellipse cx="177.7" cy="411.9" rx="3.1" ry="5.2" fill="#b2b2b4"/><ellipse cx="177.9" cy="411.4" rx="2.9" ry="4.9" fill="url(#dg)"/></g><g transform="rotate(16 83 317)"><ellipse cx="83.3" cy="317.2" rx="2.5" ry="3.0" fill="#b2b2b4"/><ellipse cx="83.5" cy="316.9" rx="2.4" ry="2.9" fill="url(#dg)"/></g><g transform="rotate(-4 92 159)"><ellipse cx="92.1" cy="159.4" rx="1.5" ry="1.8" fill="#b2b2b4"/><ellipse cx="92.2" cy="159.2" rx="1.5" ry="1.7" fill="url(#dg)"/></g><g transform="rotate(20 162 647)"><ellipse cx="162.3" cy="647.9" rx="2.6" ry="4.2" fill="#b2b2b4"/><ellipse cx="162.5" cy="647.5" rx="2.5" ry="4.0" fill="url(#dg)"/></g><g transform="rotate(-10 161 106)"><ellipse cx="160.9" cy="105.9" rx="1.9" ry="3.4" fill="#b2b2b4"/><ellipse cx="161.0" cy="105.6" rx="1.8" ry="3.3" fill="url(#dg)"/></g><g transform="rotate(4 123 12)"><ellipse cx="122.7" cy="12.4" rx="1.8" ry="2.9" fill="#b2b2b4"/><ellipse cx="122.8" cy="12.1" rx="1.7" ry="2.7" fill="url(#dg)"/></g><g transform="rotate(-13 259 485)"><ellipse cx="259.0" cy="485.8" rx="2.7" ry="3.5" fill="#b2b2b4"/><ellipse cx="259.2" cy="485.5" rx="2.6" ry="3.4" fill="url(#dg)"/></g><g transform="rotate(-4 447 356)"><ellipse cx="446.4" cy="356.1" rx="2.9" ry="4.0" fill="#b2b2b4"/><ellipse cx="446.6" cy="355.7" rx="2.7" ry="3.8" fill="url(#dg)"/></g><g transform="rotate(-14 327 135)"><ellipse cx="327.0" cy="135.2" rx="2.9" ry="4.7" fill="#b2b2b4"/><ellipse cx="327.2" cy="134.8" rx="2.7" ry="4.4" fill="url(#dg)"/></g><g transform="rotate(8 511 260)"><ellipse cx="510.8" cy="259.9" rx="2.5" ry="3.4" fill="#b2b2b4"/><ellipse cx="511.0" cy="259.5" rx="2.4" ry="3.2" fill="url(#dg)"/></g><g transform="rotate(7 179 416)"><ellipse cx="179.1" cy="416.6" rx="1.4" ry="1.9" fill="#b2b2b4"/><ellipse cx="179.2" cy="416.4" rx="1.4" ry="1.8" fill="url(#dg)"/></g><g transform="rotate(-19 31 645)"><ellipse cx="31.3" cy="645.3" rx="2.3" ry="3.3" fill="#b2b2b4"/><ellipse cx="31.4" cy="645.0" rx="2.2" ry="3.2" fill="url(#dg)"/></g><g transform="rotate(-5 118 253)"><ellipse cx="118.0" cy="252.9" rx="2.4" ry="3.4" fill="#b2b2b4"/><ellipse cx="118.2" cy="252.6" rx="2.3" ry="3.2" fill="url(#dg)"/></g><g transform="rotate(15 528 71)"><ellipse cx="528.2" cy="71.1" rx="3.0" ry="4.9" fill="#b2b2b4"/><ellipse cx="528.4" cy="70.6" rx="2.8" ry="4.6" fill="url(#dg)"/></g><g transform="rotate(-14 125 464)"><ellipse cx="124.4" cy="464.8" rx="2.9" ry="4.4" fill="#b2b2b4"/><ellipse cx="124.6" cy="464.4" rx="2.8" ry="4.2" fill="url(#dg)"/></g><g transform="rotate(7 505 488)"><ellipse cx="504.8" cy="488.1" rx="1.6" ry="2.8" fill="#b2b2b4"/><ellipse cx="504.9" cy="487.9" rx="1.6" ry="2.6" fill="url(#dg)"/></g><g transform="rotate(15 243 609)"><ellipse cx="242.9" cy="609.4" rx="2.5" ry="3.3" fill="#b2b2b4"/><ellipse cx="243.1" cy="609.1" rx="2.4" ry="3.1" fill="url(#dg)"/></g><g transform="rotate(15 377 171)"><ellipse cx="376.7" cy="171.8" rx="2.7" ry="4.5" fill="#b2b2b4"/><ellipse cx="376.9" cy="171.4" rx="2.6" ry="4.3" fill="url(#dg)"/></g><g transform="rotate(12 193 122)"><ellipse cx="192.8" cy="122.5" rx="2.6" ry="4.0" fill="#b2b2b4"/><ellipse cx="193.0" cy="122.1" rx="2.5" ry="3.8" fill="url(#dg)"/></g><g transform="rotate(3 513 391)"><ellipse cx="513.2" cy="390.9" rx="2.1" ry="2.5" fill="#b2b2b4"/><ellipse cx="513.4" cy="390.7" rx="2.0" ry="2.4" fill="url(#dg)"/></g><g transform="rotate(-8 66 166)"><ellipse cx="66.1" cy="166.6" rx="3.3" ry="5.6" fill="#b2b2b4"/><ellipse cx="66.4" cy="166.0" rx="3.2" ry="5.4" fill="url(#dg)"/></g><g transform="rotate(8 211 706)"><ellipse cx="210.8" cy="706.3" rx="2.1" ry="3.2" fill="#b2b2b4"/><ellipse cx="210.9" cy="706.0" rx="2.0" ry="3.0" fill="url(#dg)"/></g><g transform="rotate(13 243 551)"><ellipse cx="242.4" cy="551.6" rx="3.0" ry="5.3" fill="#b2b2b4"/><ellipse cx="242.7" cy="551.1" rx="2.9" ry="5.0" fill="url(#dg)"/></g><g transform="rotate(-18 399 98)"><ellipse cx="399.3" cy="98.0" rx="2.3" ry="2.7" fill="#b2b2b4"/><ellipse cx="399.5" cy="97.7" rx="2.2" ry="2.6" fill="url(#dg)"/></g><g transform="rotate(-3 13 579)"><ellipse cx="12.4" cy="579.6" rx="2.1" ry="3.2" fill="#b2b2b4"/><ellipse cx="12.5" cy="579.3" rx="2.0" ry="3.1" fill="url(#dg)"/></g><g transform="rotate(-8 320 142)"><ellipse cx="319.7" cy="142.0" rx="1.9" ry="2.4" fill="#b2b2b4"/><ellipse cx="319.8" cy="141.8" rx="1.8" ry="2.3" fill="url(#dg)"/></g><g transform="rotate(4 181 286)"><ellipse cx="181.0" cy="286.8" rx="2.7" ry="3.9" fill="#b2b2b4"/><ellipse cx="181.2" cy="286.5" rx="2.6" ry="3.7" fill="url(#dg)"/></g><g transform="rotate(-5 544 629)"><ellipse cx="544.1" cy="629.3" rx="1.9" ry="2.9" fill="#b2b2b4"/><ellipse cx="544.3" cy="629.1" rx="1.8" ry="2.8" fill="url(#dg)"/></g><g transform="rotate(13 156 497)"><ellipse cx="156.2" cy="497.5" rx="3.3" ry="5.7" fill="#b2b2b4"/><ellipse cx="156.4" cy="496.9" rx="3.1" ry="5.5" fill="url(#dg)"/></g><g transform="rotate(18 84 519)"><ellipse cx="83.6" cy="518.9" rx="2.5" ry="3.5" fill="#b2b2b4"/><ellipse cx="83.8" cy="518.5" rx="2.4" ry="3.3" fill="url(#dg)"/></g><g transform="rotate(-1 338 2)"><ellipse cx="338.1" cy="2.3" rx="2.2" ry="3.6" fill="#b2b2b4"/><ellipse cx="338.3" cy="1.9" rx="2.1" ry="3.4" fill="url(#dg)"/></g><g transform="rotate(15 329 208)"><ellipse cx="329.2" cy="207.8" rx="1.5" ry="2.3" fill="#b2b2b4"/><ellipse cx="329.3" cy="207.6" rx="1.4" ry="2.2" fill="url(#dg)"/></g><g transform="rotate(11 82 269)"><ellipse cx="82.3" cy="269.0" rx="1.7" ry="2.3" fill="#b2b2b4"/><ellipse cx="82.4" cy="268.8" rx="1.6" ry="2.2" fill="url(#dg)"/></g><g transform="rotate(-7 313 417)"><ellipse cx="313.2" cy="417.1" rx="2.6" ry="4.2" fill="#b2b2b4"/><ellipse cx="313.4" cy="416.7" rx="2.5" ry="4.0" fill="url(#dg)"/></g><g transform="rotate(-19 443 430)"><ellipse cx="442.4" cy="430.3" rx="3.0" ry="4.3" fill="#b2b2b4"/><ellipse cx="442.6" cy="429.8" rx="2.9" ry="4.1" fill="url(#dg)"/></g><g transform="rotate(-19 520 159)"><ellipse cx="519.8" cy="159.4" rx="2.6" ry="4.6" fill="#b2b2b4"/><ellipse cx="520.0" cy="158.9" rx="2.5" ry="4.3" fill="url(#dg)"/></g><g transform="rotate(-8 125 419)"><ellipse cx="124.7" cy="419.5" rx="1.8" ry="3.1" fill="#b2b2b4"/><ellipse cx="124.8" cy="419.2" rx="1.7" ry="3.0" fill="url(#dg)"/></g><g transform="rotate(9 277 664)"><ellipse cx="277.1" cy="664.4" rx="2.0" ry="3.2" fill="#b2b2b4"/><ellipse cx="277.2" cy="664.1" rx="1.9" ry="3.0" fill="url(#dg)"/></g><g transform="rotate(12 77 332)"><ellipse cx="77.2" cy="332.6" rx="2.4" ry="3.4" fill="#b2b2b4"/><ellipse cx="77.4" cy="332.3" rx="2.3" ry="3.3" fill="url(#dg)"/></g><g transform="rotate(8 227 132)"><ellipse cx="226.9" cy="132.7" rx="1.6" ry="2.4" fill="#b2b2b4"/><ellipse cx="227.0" cy="132.5" rx="1.5" ry="2.3" fill="url(#dg)"/></g><g transform="rotate(2 408 180)"><ellipse cx="408.1" cy="180.1" rx="2.4" ry="3.0" fill="#b2b2b4"/><ellipse cx="408.2" cy="179.8" rx="2.3" ry="2.9" fill="url(#dg)"/></g><g transform="rotate(-6 516 342)"><ellipse cx="515.3" cy="341.9" rx="2.4" ry="3.9" fill="#b2b2b4"/><ellipse cx="515.5" cy="341.5" rx="2.3" ry="3.7" fill="url(#dg)"/></g><g transform="rotate(-18 23 24)"><ellipse cx="23.2" cy="23.7" rx="1.8" ry="2.2" fill="#b2b2b4"/><ellipse cx="23.3" cy="23.5" rx="1.8" ry="2.1" fill="url(#dg)"/></g><g transform="rotate(-18 293 685)"><ellipse cx="293.0" cy="685.6" rx="3.3" ry="4.4" fill="#b2b2b4"/><ellipse cx="293.3" cy="685.2" rx="3.2" ry="4.2" fill="url(#dg)"/></g><g transform="rotate(-17 197 319)"><ellipse cx="197.0" cy="319.1" rx="3.3" ry="5.9" fill="#b2b2b4"/><ellipse cx="197.2" cy="318.5" rx="3.1" ry="5.6" fill="url(#dg)"/></g><g transform="rotate(13 117 515)"><ellipse cx="116.8" cy="515.0" rx="2.1" ry="3.6" fill="#b2b2b4"/><ellipse cx="116.9" cy="514.7" rx="2.0" ry="3.5" fill="url(#dg)"/></g><g transform="rotate(-18 418 684)"><ellipse cx="417.5" cy="684.4" rx="2.9" ry="3.6" fill="#b2b2b4"/><ellipse cx="417.8" cy="684.0" rx="2.8" ry="3.4" fill="url(#dg)"/></g><g transform="rotate(3 273 362)"><ellipse cx="272.8" cy="362.8" rx="2.7" ry="4.7" fill="#b2b2b4"/><ellipse cx="273.0" cy="362.4" rx="2.6" ry="4.5" fill="url(#dg)"/></g><g transform="rotate(11 271 628)"><ellipse cx="270.5" cy="627.9" rx="1.8" ry="2.4" fill="#b2b2b4"/><ellipse cx="270.6" cy="627.7" rx="1.7" ry="2.3" fill="url(#dg)"/></g><g transform="rotate(11 142 201)"><ellipse cx="142.1" cy="201.1" rx="2.2" ry="3.2" fill="#b2b2b4"/><ellipse cx="142.3" cy="200.8" rx="2.1" ry="3.0" fill="url(#dg)"/></g><g transform="rotate(12 102 66)"><ellipse cx="102.0" cy="66.6" rx="2.5" ry="3.3" fill="#b2b2b4"/><ellipse cx="102.2" cy="66.3" rx="2.4" ry="3.1" fill="url(#dg)"/></g><g transform="rotate(-16 301 571)"><ellipse cx="300.4" cy="571.0" rx="1.7" ry="2.6" fill="#b2b2b4"/><ellipse cx="300.5" cy="570.7" rx="1.7" ry="2.5" fill="url(#dg)"/></g><g transform="rotate(8 40 247)"><ellipse cx="39.9" cy="247.8" rx="2.7" ry="4.5" fill="#b2b2b4"/><ellipse cx="40.1" cy="247.4" rx="2.6" ry="4.3" fill="url(#dg)"/></g><g transform="rotate(-11 300 692)"><ellipse cx="300.0" cy="692.3" rx="1.4" ry="1.8" fill="#b2b2b4"/><ellipse cx="300.1" cy="692.2" rx="1.3" ry="1.7" fill="url(#dg)"/></g><g transform="rotate(-19 319 705)"><ellipse cx="318.8" cy="705.8" rx="2.6" ry="4.2" fill="#b2b2b4"/><ellipse cx="319.0" cy="705.4" rx="2.4" ry="4.0" fill="url(#dg)"/></g><g transform="rotate(19 520 469)"><ellipse cx="519.4" cy="469.4" rx="1.5" ry="2.1" fill="#b2b2b4"/><ellipse cx="519.5" cy="469.2" rx="1.4" ry="2.0" fill="url(#dg)"/></g><g transform="rotate(-14 82 52)"><ellipse cx="82.2" cy="52.0" rx="3.1" ry="5.3" fill="#b2b2b4"/><ellipse cx="82.4" cy="51.5" rx="3.0" ry="5.1" fill="url(#dg)"/></g><g transform="rotate(-10 486 372)"><ellipse cx="485.6" cy="372.8" rx="2.0" ry="3.3" fill="#b2b2b4"/><ellipse cx="485.7" cy="372.5" rx="1.9" ry="3.1" fill="url(#dg)"/></g><g transform="rotate(14 245 563)"><ellipse cx="244.8" cy="563.2" rx="2.6" ry="3.7" fill="#b2b2b4"/><ellipse cx="245.0" cy="562.9" rx="2.4" ry="3.5" fill="url(#dg)"/></g><g transform="rotate(17 320 127)"><ellipse cx="319.6" cy="127.2" rx="3.1" ry="5.3" fill="#b2b2b4"/><ellipse cx="319.8" cy="126.7" rx="3.0" ry="5.1" fill="url(#dg)"/></g><g transform="rotate(-14 24 688)"><ellipse cx="23.8" cy="688.4" rx="3.3" ry="3.9" fill="#b2b2b4"/><ellipse cx="24.1" cy="688.1" rx="3.2" ry="3.7" fill="url(#dg)"/></g><g transform="rotate(7 306 371)"><ellipse cx="305.4" cy="371.5" rx="3.3" ry="5.6" fill="#b2b2b4"/><ellipse cx="305.6" cy="371.0" rx="3.2" ry="5.4" fill="url(#dg)"/></g><g transform="rotate(-19 323 109)"><ellipse cx="323.1" cy="109.4" rx="3.2" ry="4.4" fill="#b2b2b4"/><ellipse cx="323.3" cy="109.0" rx="3.0" ry="4.2" fill="url(#dg)"/></g><g transform="rotate(-12 85 580)"><ellipse cx="85.2" cy="579.9" rx="1.9" ry="2.2" fill="#b2b2b4"/><ellipse cx="85.4" cy="579.7" rx="1.8" ry="2.1" fill="url(#dg)"/></g><g transform="rotate(4 362 599)"><ellipse cx="361.9" cy="599.0" rx="2.3" ry="3.1" fill="#b2b2b4"/><ellipse cx="362.1" cy="598.7" rx="2.2" ry="3.0" fill="url(#dg)"/></g><g transform="rotate(8 69 132)"><ellipse cx="68.8" cy="132.3" rx="2.2" ry="3.2" fill="#b2b2b4"/><ellipse cx="68.9" cy="132.0" rx="2.1" ry="3.0" fill="url(#dg)"/></g><g transform="rotate(-17 453 129)"><ellipse cx="452.5" cy="129.3" rx="3.1" ry="3.6" fill="#b2b2b4"/><ellipse cx="452.8" cy="128.9" rx="2.9" ry="3.4" fill="url(#dg)"/></g><g transform="rotate(2 264 226)"><ellipse cx="263.6" cy="225.9" rx="1.4" ry="2.2" fill="#b2b2b4"/><ellipse cx="263.7" cy="225.7" rx="1.3" ry="2.0" fill="url(#dg)"/></g><g transform="rotate(14 26 85)"><ellipse cx="25.4" cy="85.2" rx="2.0" ry="3.3" fill="#b2b2b4"/><ellipse cx="25.6" cy="84.9" rx="1.9" ry="3.1" fill="url(#dg)"/></g><g transform="rotate(8 38 327)"><ellipse cx="37.4" cy="327.8" rx="2.1" ry="3.6" fill="#b2b2b4"/><ellipse cx="37.5" cy="327.4" rx="2.0" ry="3.5" fill="url(#dg)"/></g><g transform="rotate(-19 428 300)"><ellipse cx="427.6" cy="300.4" rx="1.4" ry="2.5" fill="#b2b2b4"/><ellipse cx="427.7" cy="300.1" rx="1.3" ry="2.3" fill="url(#dg)"/></g><g transform="rotate(-4 236 170)"><ellipse cx="235.4" cy="170.5" rx="2.7" ry="4.8" fill="#b2b2b4"/><ellipse cx="235.6" cy="170.1" rx="2.6" ry="4.6" fill="url(#dg)"/></g><g transform="rotate(-7 21 411)"><ellipse cx="20.5" cy="411.0" rx="2.6" ry="4.0" fill="#b2b2b4"/><ellipse cx="20.7" cy="410.6" rx="2.5" ry="3.8" fill="url(#dg)"/></g><g transform="rotate(9 475 351)"><ellipse cx="475.1" cy="351.4" rx="3.1" ry="3.7" fill="#b2b2b4"/><ellipse cx="475.3" cy="351.1" rx="2.9" ry="3.5" fill="url(#dg)"/></g><g transform="rotate(1 101 629)"><ellipse cx="101.1" cy="629.4" rx="2.0" ry="2.9" fill="#b2b2b4"/><ellipse cx="101.3" cy="629.1" rx="1.9" ry="2.8" fill="url(#dg)"/></g><g transform="rotate(-7 380 586)"><ellipse cx="379.6" cy="586.0" rx="2.6" ry="4.6" fill="#b2b2b4"/><ellipse cx="379.8" cy="585.6" rx="2.5" ry="4.4" fill="url(#dg)"/></g><g transform="rotate(15 123 371)"><ellipse cx="122.5" cy="371.7" rx="1.4" ry="2.5" fill="#b2b2b4"/><ellipse cx="122.6" cy="371.4" rx="1.3" ry="2.3" fill="url(#dg)"/></g><g transform="rotate(-18 434 393)"><ellipse cx="433.9" cy="393.8" rx="3.3" ry="5.0" fill="#b2b2b4"/><ellipse cx="434.2" cy="393.3" rx="3.2" ry="4.8" fill="url(#dg)"/></g><g transform="rotate(15 127 365)"><ellipse cx="126.3" cy="365.2" rx="3.2" ry="4.2" fill="#b2b2b4"/><ellipse cx="126.6" cy="364.8" rx="3.0" ry="4.0" fill="url(#dg)"/></g><g transform="rotate(-19 484 180)"><ellipse cx="483.3" cy="179.9" rx="2.5" ry="2.9" fill="#b2b2b4"/><ellipse cx="483.5" cy="179.6" rx="2.4" ry="2.8" fill="url(#dg)"/></g><g transform="rotate(17 423 420)"><ellipse cx="422.9" cy="420.1" rx="2.4" ry="4.0" fill="#b2b2b4"/><ellipse cx="423.1" cy="419.7" rx="2.3" ry="3.9" fill="url(#dg)"/></g><g transform="rotate(12 307 365)"><ellipse cx="307.2" cy="365.9" rx="2.9" ry="4.7" fill="#b2b2b4"/><ellipse cx="307.4" cy="365.5" rx="2.8" ry="4.5" fill="url(#dg)"/></g><g transform="rotate(-17 43 482)"><ellipse cx="43.3" cy="482.7" rx="1.8" ry="2.9" fill="#b2b2b4"/><ellipse cx="43.5" cy="482.4" rx="1.7" ry="2.7" fill="url(#dg)"/></g><g transform="rotate(-19 503 665)"><ellipse cx="503.0" cy="665.0" rx="2.5" ry="4.3" fill="#b2b2b4"/><ellipse cx="503.2" cy="664.6" rx="2.4" ry="4.1" fill="url(#dg)"/></g><g transform="rotate(-15 542 478)"><ellipse cx="541.3" cy="477.8" rx="2.5" ry="3.1" fill="#b2b2b4"/><ellipse cx="541.5" cy="477.5" rx="2.3" ry="3.0" fill="url(#dg)"/></g><g transform="rotate(3 408 359)"><ellipse cx="407.3" cy="358.9" rx="2.6" ry="4.2" fill="#b2b2b4"/><ellipse cx="407.5" cy="358.5" rx="2.4" ry="4.0" fill="url(#dg)"/></g><g transform="rotate(-9 512 67)"><ellipse cx="512.0" cy="67.7" rx="2.5" ry="2.9" fill="#b2b2b4"/><ellipse cx="512.1" cy="67.5" rx="2.3" ry="2.7" fill="url(#dg)"/></g><g transform="rotate(15 164 509)"><ellipse cx="164.2" cy="509.2" rx="2.2" ry="3.7" fill="#b2b2b4"/><ellipse cx="164.4" cy="508.9" rx="2.1" ry="3.6" fill="url(#dg)"/></g><g transform="rotate(-9 393 468)"><ellipse cx="393.1" cy="468.4" rx="3.2" ry="5.6" fill="#b2b2b4"/><ellipse cx="393.4" cy="467.8" rx="3.0" ry="5.3" fill="url(#dg)"/></g><g transform="rotate(12 498 408)"><ellipse cx="498.0" cy="408.3" rx="2.6" ry="4.4" fill="#b2b2b4"/><ellipse cx="498.2" cy="407.9" rx="2.5" ry="4.2" fill="url(#dg)"/></g><g transform="rotate(-4 441 443)"><ellipse cx="441.2" cy="442.9" rx="2.1" ry="3.3" fill="#b2b2b4"/><ellipse cx="441.4" cy="442.6" rx="2.0" ry="3.2" fill="url(#dg)"/></g><g transform="rotate(18 87 456)"><ellipse cx="87.1" cy="456.6" rx="2.0" ry="3.5" fill="#b2b2b4"/><ellipse cx="87.3" cy="456.3" rx="1.9" ry="3.4" fill="url(#dg)"/></g><g transform="rotate(12 124 18)"><ellipse cx="124.0" cy="18.7" rx="1.8" ry="3.0" fill="#b2b2b4"/><ellipse cx="124.2" cy="18.4" rx="1.7" ry="2.9" fill="url(#dg)"/></g><g transform="rotate(-15 46 685)"><ellipse cx="46.0" cy="684.9" rx="2.1" ry="2.6" fill="#b2b2b4"/><ellipse cx="46.2" cy="684.6" rx="2.0" ry="2.5" fill="url(#dg)"/></g><g transform="rotate(16 131 78)"><ellipse cx="130.4" cy="78.2" rx="2.3" ry="3.3" fill="#b2b2b4"/><ellipse cx="130.6" cy="77.9" rx="2.2" ry="3.1" fill="url(#dg)"/></g><g transform="rotate(12 424 150)"><ellipse cx="423.6" cy="150.4" rx="2.3" ry="2.8" fill="#b2b2b4"/><ellipse cx="423.8" cy="150.2" rx="2.2" ry="2.7" fill="url(#dg)"/></g><g transform="rotate(8 99 673)"><ellipse cx="98.7" cy="672.8" rx="2.4" ry="3.1" fill="#b2b2b4"/><ellipse cx="98.8" cy="672.5" rx="2.3" ry="3.0" fill="url(#dg)"/></g><g transform="rotate(-7 179 45)"><ellipse cx="178.4" cy="45.5" rx="3.2" ry="5.1" fill="#b2b2b4"/><ellipse cx="178.6" cy="45.0" rx="3.1" ry="4.9" fill="url(#dg)"/></g><g transform="rotate(9 302 382)"><ellipse cx="302.0" cy="382.4" rx="3.0" ry="5.2" fill="#b2b2b4"/><ellipse cx="302.2" cy="381.9" rx="2.9" ry="5.0" fill="url(#dg)"/></g><g transform="rotate(15 213 345)"><ellipse cx="213.1" cy="345.3" rx="3.1" ry="4.8" fill="#b2b2b4"/><ellipse cx="213.3" cy="344.9" rx="2.9" ry="4.6" fill="url(#dg)"/></g><g transform="rotate(-16 62 485)"><ellipse cx="61.9" cy="485.1" rx="1.6" ry="2.8" fill="#b2b2b4"/><ellipse cx="62.1" cy="484.9" rx="1.5" ry="2.7" fill="url(#dg)"/></g><g transform="rotate(-5 297 148)"><ellipse cx="296.4" cy="148.2" rx="3.3" ry="4.5" fill="#b2b2b4"/><ellipse cx="296.6" cy="147.8" rx="3.1" ry="4.3" fill="url(#dg)"/></g><g transform="rotate(20 506 200)"><ellipse cx="505.4" cy="199.9" rx="1.6" ry="2.6" fill="#b2b2b4"/><ellipse cx="505.5" cy="199.7" rx="1.6" ry="2.5" fill="url(#dg)"/></g><g transform="rotate(7 407 360)"><ellipse cx="406.5" cy="360.6" rx="2.1" ry="2.5" fill="#b2b2b4"/><ellipse cx="406.6" cy="360.3" rx="2.0" ry="2.4" fill="url(#dg)"/></g><g transform="rotate(-6 299 512)"><ellipse cx="298.7" cy="512.9" rx="3.3" ry="5.7" fill="#b2b2b4"/><ellipse cx="299.0" cy="512.4" rx="3.2" ry="5.4" fill="url(#dg)"/></g><g transform="rotate(18 235 688)"><ellipse cx="234.6" cy="688.6" rx="2.1" ry="2.6" fill="#b2b2b4"/><ellipse cx="234.8" cy="688.3" rx="2.0" ry="2.4" fill="url(#dg)"/></g><g transform="rotate(-17 268 72)"><ellipse cx="267.7" cy="72.2" rx="2.5" ry="3.0" fill="#b2b2b4"/><ellipse cx="267.9" cy="71.9" rx="2.4" ry="2.9" fill="url(#dg)"/></g><g transform="rotate(-1 337 411)"><ellipse cx="337.0" cy="411.6" rx="1.6" ry="2.0" fill="#b2b2b4"/><ellipse cx="337.1" cy="411.4" rx="1.6" ry="1.9" fill="url(#dg)"/></g><g transform="rotate(-4 267 267)"><ellipse cx="266.7" cy="267.6" rx="1.9" ry="2.6" fill="#b2b2b4"/><ellipse cx="266.8" cy="267.4" rx="1.8" ry="2.5" fill="url(#dg)"/></g><g transform="rotate(-4 380 157)"><ellipse cx="379.8" cy="157.4" rx="1.6" ry="2.4" fill="#b2b2b4"/><ellipse cx="379.9" cy="157.2" rx="1.5" ry="2.3" fill="url(#dg)"/></g><g transform="rotate(-6 476 400)"><ellipse cx="475.9" cy="400.5" rx="2.0" ry="3.5" fill="#b2b2b4"/><ellipse cx="476.0" cy="400.2" rx="1.9" ry="3.3" fill="url(#dg)"/></g><g transform="rotate(-18 192 629)"><ellipse cx="192.1" cy="628.9" rx="2.0" ry="3.7" fill="#b2b2b4"/><ellipse cx="192.2" cy="628.6" rx="2.0" ry="3.5" fill="url(#dg)"/></g><g transform="rotate(16 426 388)"><ellipse cx="425.3" cy="388.8" rx="2.7" ry="4.7" fill="#b2b2b4"/><ellipse cx="425.5" cy="388.4" rx="2.5" ry="4.5" fill="url(#dg)"/></g><g transform="rotate(19 520 371)"><ellipse cx="519.3" cy="371.7" rx="3.1" ry="4.4" fill="#b2b2b4"/><ellipse cx="519.5" cy="371.3" rx="2.9" ry="4.1" fill="url(#dg)"/></g><g transform="rotate(1 477 213)"><ellipse cx="477.0" cy="213.3" rx="1.6" ry="2.0" fill="#b2b2b4"/><ellipse cx="477.1" cy="213.2" rx="1.6" ry="1.9" fill="url(#dg)"/></g><g transform="rotate(4 121 428)"><ellipse cx="120.8" cy="428.6" rx="2.5" ry="4.0" fill="#b2b2b4"/><ellipse cx="121.0" cy="428.3" rx="2.4" ry="3.8" fill="url(#dg)"/></g><g transform="rotate(-14 167 29)"><ellipse cx="166.3" cy="29.7" rx="2.9" ry="4.8" fill="#b2b2b4"/><ellipse cx="166.6" cy="29.2" rx="2.8" ry="4.6" fill="url(#dg)"/></g><g transform="rotate(-20 65 209)"><ellipse cx="64.8" cy="209.7" rx="2.7" ry="4.5" fill="#b2b2b4"/><ellipse cx="65.0" cy="209.2" rx="2.6" ry="4.3" fill="url(#dg)"/></g><g transform="rotate(10 363 638)"><ellipse cx="363.1" cy="638.5" rx="3.1" ry="5.1" fill="#b2b2b4"/><ellipse cx="363.3" cy="638.1" rx="2.9" ry="4.8" fill="url(#dg)"/></g><g transform="rotate(7 395 172)"><ellipse cx="395.1" cy="172.2" rx="1.9" ry="2.8" fill="#b2b2b4"/><ellipse cx="395.3" cy="172.0" rx="1.8" ry="2.7" fill="url(#dg)"/></g><g transform="rotate(4 71 205)"><ellipse cx="71.0" cy="204.7" rx="1.6" ry="1.8" fill="#b2b2b4"/><ellipse cx="71.1" cy="204.6" rx="1.5" ry="1.8" fill="url(#dg)"/></g><g transform="rotate(-0 179 233)"><ellipse cx="178.9" cy="233.1" rx="2.8" ry="4.0" fill="#b2b2b4"/><ellipse cx="179.1" cy="232.7" rx="2.7" ry="3.9" fill="url(#dg)"/></g><g transform="rotate(16 519 351)"><ellipse cx="518.5" cy="351.5" rx="1.9" ry="3.0" fill="#b2b2b4"/><ellipse cx="518.6" cy="351.2" rx="1.9" ry="2.9" fill="url(#dg)"/></g><g transform="rotate(6 33 549)"><ellipse cx="33.3" cy="549.7" rx="2.8" ry="4.6" fill="#b2b2b4"/><ellipse cx="33.5" cy="549.3" rx="2.6" ry="4.4" fill="url(#dg)"/></g><g transform="rotate(2 312 321)"><ellipse cx="312.2" cy="321.7" rx="2.9" ry="3.8" fill="#b2b2b4"/><ellipse cx="312.5" cy="321.3" rx="2.8" ry="3.6" fill="url(#dg)"/></g><g transform="rotate(-14 77 15)"><ellipse cx="76.3" cy="15.9" rx="3.3" ry="5.7" fill="#b2b2b4"/><ellipse cx="76.5" cy="15.4" rx="3.2" ry="5.4" fill="url(#dg)"/></g><g transform="rotate(8 393 651)"><ellipse cx="392.8" cy="651.5" rx="2.7" ry="3.5" fill="#b2b2b4"/><ellipse cx="393.0" cy="651.2" rx="2.6" ry="3.3" fill="url(#dg)"/></g><g transform="rotate(-7 454 465)"><ellipse cx="453.7" cy="465.0" rx="3.3" ry="4.2" fill="#b2b2b4"/><ellipse cx="454.0" cy="464.6" rx="3.2" ry="4.0" fill="url(#dg)"/></g><g transform="rotate(18 345 476)"><ellipse cx="344.3" cy="476.8" rx="2.5" ry="3.4" fill="#b2b2b4"/><ellipse cx="344.5" cy="476.5" rx="2.4" ry="3.3" fill="url(#dg)"/></g><g transform="rotate(-3 207 524)"><ellipse cx="206.3" cy="524.1" rx="3.1" ry="5.1" fill="#b2b2b4"/><ellipse cx="206.6" cy="523.6" rx="2.9" ry="4.9" fill="url(#dg)"/></g><g transform="rotate(16 504 33)"><ellipse cx="503.7" cy="32.9" rx="2.1" ry="3.0" fill="#b2b2b4"/><ellipse cx="503.9" cy="32.6" rx="2.0" ry="2.8" fill="url(#dg)"/></g><g transform="rotate(-7 343 356)"><ellipse cx="343.2" cy="356.9" rx="3.2" ry="5.6" fill="#b2b2b4"/><ellipse cx="343.4" cy="356.3" rx="3.0" ry="5.3" fill="url(#dg)"/></g><g transform="rotate(-19 130 374)"><ellipse cx="129.6" cy="373.8" rx="1.8" ry="2.1" fill="#b2b2b4"/><ellipse cx="129.7" cy="373.6" rx="1.7" ry="2.0" fill="url(#dg)"/></g><g transform="rotate(-10 98 177)"><ellipse cx="97.3" cy="177.7" rx="3.3" ry="5.3" fill="#b2b2b4"/><ellipse cx="97.6" cy="177.2" rx="3.2" ry="5.0" fill="url(#dg)"/></g><g transform="rotate(-7 491 255)"><ellipse cx="490.4" cy="255.3" rx="3.0" ry="4.6" fill="#b2b2b4"/><ellipse cx="490.6" cy="254.9" rx="2.8" ry="4.4" fill="url(#dg)"/></g><g transform="rotate(13 0 407)"><ellipse cx="-0.2" cy="407.0" rx="3.3" ry="4.1" fill="#b2b2b4"/><ellipse cx="0.0" cy="406.6" rx="3.2" ry="3.9" fill="url(#dg)"/></g><g transform="rotate(14 386 617)"><ellipse cx="385.5" cy="617.0" rx="2.8" ry="4.5" fill="#b2b2b4"/><ellipse cx="385.7" cy="616.5" rx="2.6" ry="4.2" fill="url(#dg)"/></g><g transform="rotate(-6 147 141)"><ellipse cx="146.3" cy="141.8" rx="3.1" ry="4.7" fill="#b2b2b4"/><ellipse cx="146.6" cy="141.3" rx="2.9" ry="4.5" fill="url(#dg)"/></g><g transform="rotate(0 441 69)"><ellipse cx="441.3" cy="69.2" rx="2.0" ry="2.9" fill="#b2b2b4"/><ellipse cx="441.4" cy="69.0" rx="1.9" ry="2.8" fill="url(#dg)"/></g><g transform="rotate(-13 408 650)"><ellipse cx="408.4" cy="650.1" rx="1.5" ry="2.1" fill="#b2b2b4"/><ellipse cx="408.5" cy="649.9" rx="1.5" ry="2.0" fill="url(#dg)"/></g><g transform="rotate(20 15 89)"><ellipse cx="14.6" cy="88.7" rx="1.6" ry="2.1" fill="#b2b2b4"/><ellipse cx="14.7" cy="88.5" rx="1.5" ry="2.0" fill="url(#dg)"/></g><g transform="rotate(-2 144 25)"><ellipse cx="143.6" cy="25.5" rx="1.9" ry="2.4" fill="#b2b2b4"/><ellipse cx="143.7" cy="25.3" rx="1.8" ry="2.3" fill="url(#dg)"/></g><g transform="rotate(19 479 266)"><ellipse cx="479.1" cy="266.0" rx="2.4" ry="3.4" fill="#b2b2b4"/><ellipse cx="479.3" cy="265.7" rx="2.3" ry="3.2" fill="url(#dg)"/></g><g transform="rotate(1 151 36)"><ellipse cx="150.4" cy="35.7" rx="1.6" ry="2.0" fill="#b2b2b4"/><ellipse cx="150.5" cy="35.5" rx="1.5" ry="1.9" fill="url(#dg)"/></g><g transform="rotate(6 383 649)"><ellipse cx="382.7" cy="649.4" rx="1.4" ry="2.1" fill="#b2b2b4"/><ellipse cx="382.8" cy="649.2" rx="1.3" ry="2.0" fill="url(#dg)"/></g><g transform="rotate(11 419 54)"><ellipse cx="418.5" cy="54.3" rx="2.5" ry="3.3" fill="#b2b2b4"/><ellipse cx="418.7" cy="54.0" rx="2.4" ry="3.1" fill="url(#dg)"/></g><g transform="rotate(2 394 561)"><ellipse cx="393.8" cy="561.9" rx="3.3" ry="5.7" fill="#b2b2b4"/><ellipse cx="394.1" cy="561.3" rx="3.2" ry="5.4" fill="url(#dg)"/></g><g transform="rotate(15 71 203)"><ellipse cx="70.9" cy="203.1" rx="3.3" ry="4.4" fill="#b2b2b4"/><ellipse cx="71.1" cy="202.7" rx="3.1" ry="4.2" fill="url(#dg)"/></g><g transform="rotate(7 406 444)"><ellipse cx="405.3" cy="444.2" rx="3.0" ry="4.8" fill="#b2b2b4"/><ellipse cx="405.5" cy="443.7" rx="2.9" ry="4.5" fill="url(#dg)"/></g><g transform="rotate(17 36 638)"><ellipse cx="36.3" cy="637.9" rx="2.6" ry="3.9" fill="#b2b2b4"/><ellipse cx="36.5" cy="637.5" rx="2.5" ry="3.7" fill="url(#dg)"/></g><g transform="rotate(17 281 27)"><ellipse cx="281.3" cy="27.4" rx="2.8" ry="4.9" fill="#b2b2b4"/><ellipse cx="281.5" cy="26.9" rx="2.7" ry="4.7" fill="url(#dg)"/></g><g transform="rotate(17 291 356)"><ellipse cx="291.2" cy="356.4" rx="2.3" ry="3.1" fill="#b2b2b4"/><ellipse cx="291.3" cy="356.1" rx="2.2" ry="2.9" fill="url(#dg)"/></g><g transform="rotate(-5 530 278)"><ellipse cx="530.1" cy="278.5" rx="2.8" ry="3.8" fill="#b2b2b4"/><ellipse cx="530.3" cy="278.1" rx="2.7" ry="3.6" fill="url(#dg)"/></g><g transform="rotate(-3 443 427)"><ellipse cx="442.7" cy="427.4" rx="2.5" ry="4.1" fill="#b2b2b4"/><ellipse cx="442.9" cy="427.1" rx="2.3" ry="3.9" fill="url(#dg)"/></g><g transform="rotate(-16 520 508)"><ellipse cx="519.5" cy="508.0" rx="3.1" ry="4.3" fill="#b2b2b4"/><ellipse cx="519.7" cy="507.5" rx="2.9" ry="4.1" fill="url(#dg)"/></g><g transform="rotate(12 146 608)"><ellipse cx="145.4" cy="608.1" rx="1.5" ry="2.2" fill="#b2b2b4"/><ellipse cx="145.5" cy="607.9" rx="1.4" ry="2.1" fill="url(#dg)"/></g><g transform="rotate(-14 178 12)"><ellipse cx="177.5" cy="12.1" rx="1.4" ry="2.4" fill="#b2b2b4"/><ellipse cx="177.7" cy="11.9" rx="1.3" ry="2.2" fill="url(#dg)"/></g><g transform="rotate(-12 244 232)"><ellipse cx="243.9" cy="231.8" rx="2.2" ry="3.0" fill="#b2b2b4"/><ellipse cx="244.0" cy="231.5" rx="2.1" ry="2.8" fill="url(#dg)"/></g><g transform="rotate(-7 97 576)"><ellipse cx="96.8" cy="576.7" rx="3.1" ry="3.7" fill="#b2b2b4"/><ellipse cx="97.1" cy="576.4" rx="3.0" ry="3.5" fill="url(#dg)"/></g><g transform="rotate(-9 1 183)"><ellipse cx="1.1" cy="183.8" rx="3.0" ry="4.6" fill="#b2b2b4"/><ellipse cx="1.3" cy="183.3" rx="2.9" ry="4.3" fill="url(#dg)"/></g><g transform="rotate(0 267 680)"><ellipse cx="266.6" cy="680.1" rx="1.8" ry="2.9" fill="#b2b2b4"/><ellipse cx="266.7" cy="679.8" rx="1.7" ry="2.7" fill="url(#dg)"/></g><g transform="rotate(7 532 104)"><ellipse cx="532.3" cy="104.7" rx="2.3" ry="3.7" fill="#b2b2b4"/><ellipse cx="532.5" cy="104.3" rx="2.2" ry="3.5" fill="url(#dg)"/></g><g transform="rotate(2 48 131)"><ellipse cx="47.7" cy="131.0" rx="3.4" ry="5.3" fill="#b2b2b4"/><ellipse cx="48.0" cy="130.5" rx="3.2" ry="5.1" fill="url(#dg)"/></g><g transform="rotate(8 343 96)"><ellipse cx="343.0" cy="96.8" rx="3.3" ry="4.1" fill="#b2b2b4"/><ellipse cx="343.2" cy="96.4" rx="3.2" ry="3.9" fill="url(#dg)"/></g><g transform="rotate(-4 351 473)"><ellipse cx="351.0" cy="473.6" rx="2.8" ry="3.3" fill="#b2b2b4"/><ellipse cx="351.2" cy="473.3" rx="2.7" ry="3.1" fill="url(#dg)"/></g><g transform="rotate(-4 245 442)"><ellipse cx="244.6" cy="442.3" rx="2.6" ry="4.3" fill="#b2b2b4"/><ellipse cx="244.8" cy="441.9" rx="2.5" ry="4.1" fill="url(#dg)"/></g><g transform="rotate(-3 337 226)"><ellipse cx="336.8" cy="225.8" rx="2.0" ry="2.5" fill="#b2b2b4"/><ellipse cx="336.9" cy="225.6" rx="1.9" ry="2.4" fill="url(#dg)"/></g><g transform="rotate(12 460 550)"><ellipse cx="459.3" cy="550.7" rx="3.1" ry="5.1" fill="#b2b2b4"/><ellipse cx="459.5" cy="550.2" rx="2.9" ry="4.9" fill="url(#dg)"/></g><g transform="rotate(-17 461 322)"><ellipse cx="460.8" cy="321.9" rx="1.6" ry="2.9" fill="#b2b2b4"/><ellipse cx="460.9" cy="321.6" rx="1.6" ry="2.7" fill="url(#dg)"/></g><g transform="rotate(2 460 135)"><ellipse cx="459.3" cy="135.7" rx="2.4" ry="3.4" fill="#b2b2b4"/><ellipse cx="459.5" cy="135.4" rx="2.3" ry="3.2" fill="url(#dg)"/></g><g transform="rotate(-4 19 106)"><ellipse cx="18.6" cy="106.3" rx="2.5" ry="3.7" fill="#b2b2b4"/><ellipse cx="18.8" cy="106.0" rx="2.4" ry="3.5" fill="url(#dg)"/></g><g transform="rotate(5 107 681)"><ellipse cx="106.6" cy="681.6" rx="3.0" ry="4.7" fill="#b2b2b4"/><ellipse cx="106.8" cy="681.2" rx="2.8" ry="4.5" fill="url(#dg)"/></g><g transform="rotate(-11 159 175)"><ellipse cx="158.5" cy="174.9" rx="1.9" ry="3.1" fill="#b2b2b4"/><ellipse cx="158.6" cy="174.6" rx="1.8" ry="2.9" fill="url(#dg)"/></g><g transform="rotate(1 0 481)"><ellipse cx="0.2" cy="481.4" rx="2.7" ry="4.6" fill="#b2b2b4"/><ellipse cx="0.4" cy="481.0" rx="2.6" ry="4.4" fill="url(#dg)"/></g><g transform="rotate(3 220 471)"><ellipse cx="220.0" cy="471.4" rx="1.8" ry="2.7" fill="#b2b2b4"/><ellipse cx="220.1" cy="471.1" rx="1.7" ry="2.6" fill="url(#dg)"/></g><g transform="rotate(14 531 451)"><ellipse cx="530.6" cy="450.8" rx="1.8" ry="2.7" fill="#b2b2b4"/><ellipse cx="530.8" cy="450.5" rx="1.7" ry="2.6" fill="url(#dg)"/></g><g transform="rotate(15 536 453)"><ellipse cx="536.2" cy="453.1" rx="2.3" ry="3.0" fill="#b2b2b4"/><ellipse cx="536.4" cy="452.8" rx="2.2" ry="2.8" fill="url(#dg)"/></g><g transform="rotate(15 402 542)"><ellipse cx="401.5" cy="542.5" rx="2.2" ry="4.0" fill="#b2b2b4"/><ellipse cx="401.7" cy="542.1" rx="2.1" ry="3.8" fill="url(#dg)"/></g><g transform="rotate(-9 481 560)"><ellipse cx="480.8" cy="560.9" rx="3.0" ry="4.9" fill="#b2b2b4"/><ellipse cx="481.0" cy="560.4" rx="2.8" ry="4.6" fill="url(#dg)"/></g><g transform="rotate(10 202 620)"><ellipse cx="202.1" cy="620.4" rx="2.6" ry="3.8" fill="#b2b2b4"/><ellipse cx="202.3" cy="620.0" rx="2.5" ry="3.6" fill="url(#dg)"/></g><g transform="rotate(6 26 41)"><ellipse cx="26.1" cy="41.5" rx="3.2" ry="5.5" fill="#b2b2b4"/><ellipse cx="26.4" cy="40.9" rx="3.1" ry="5.3" fill="url(#dg)"/></g><g transform="rotate(17 46 29)"><ellipse cx="45.5" cy="28.9" rx="2.0" ry="3.4" fill="#b2b2b4"/><ellipse cx="45.7" cy="28.6" rx="1.9" ry="3.2" fill="url(#dg)"/></g><g transform="rotate(-10 59 390)"><ellipse cx="59.1" cy="390.0" rx="3.1" ry="3.7" fill="#b2b2b4"/><ellipse cx="59.4" cy="389.6" rx="2.9" ry="3.5" fill="url(#dg)"/></g><g transform="rotate(-15 243 213)"><ellipse cx="242.8" cy="213.1" rx="1.8" ry="2.5" fill="#b2b2b4"/><ellipse cx="242.9" cy="212.9" rx="1.7" ry="2.4" fill="url(#dg)"/></g><g transform="rotate(-15 354 270)"><ellipse cx="353.5" cy="270.8" rx="2.1" ry="3.7" fill="#b2b2b4"/><ellipse cx="353.6" cy="270.5" rx="2.0" ry="3.5" fill="url(#dg)"/></g><g transform="rotate(3 147 643)"><ellipse cx="146.8" cy="643.7" rx="3.1" ry="4.9" fill="#b2b2b4"/><ellipse cx="147.0" cy="643.3" rx="3.0" ry="4.6" fill="url(#dg)"/></g><g transform="rotate(-1 49 171)"><ellipse cx="48.3" cy="171.3" rx="2.5" ry="4.0" fill="#b2b2b4"/><ellipse cx="48.5" cy="170.9" rx="2.4" ry="3.8" fill="url(#dg)"/></g><g transform="rotate(-2 526 412)"><ellipse cx="526.1" cy="412.4" rx="2.2" ry="3.0" fill="#b2b2b4"/><ellipse cx="526.3" cy="412.1" rx="2.1" ry="2.8" fill="url(#dg)"/></g><g transform="rotate(-4 106 543)"><ellipse cx="106.2" cy="542.8" rx="2.3" ry="3.2" fill="#b2b2b4"/><ellipse cx="106.3" cy="542.5" rx="2.2" ry="3.1" fill="url(#dg)"/></g><g transform="rotate(-15 57 100)"><ellipse cx="56.8" cy="99.8" rx="1.4" ry="1.8" fill="#b2b2b4"/><ellipse cx="56.9" cy="99.7" rx="1.4" ry="1.8" fill="url(#dg)"/></g><g transform="rotate(14 69 638)"><ellipse cx="69.3" cy="637.9" rx="1.5" ry="1.8" fill="#b2b2b4"/><ellipse cx="69.4" cy="637.7" rx="1.4" ry="1.7" fill="url(#dg)"/></g><g transform="rotate(17 310 309)"><ellipse cx="309.6" cy="309.4" rx="2.0" ry="3.4" fill="#b2b2b4"/><ellipse cx="309.8" cy="309.1" rx="1.9" ry="3.2" fill="url(#dg)"/></g><g transform="rotate(-6 159 29)"><ellipse cx="159.1" cy="28.8" rx="1.5" ry="1.8" fill="#b2b2b4"/><ellipse cx="159.2" cy="28.6" rx="1.4" ry="1.7" fill="url(#dg)"/></g><g transform="rotate(-9 35 566)"><ellipse cx="35.2" cy="566.0" rx="2.1" ry="3.2" fill="#b2b2b4"/><ellipse cx="35.4" cy="565.7" rx="2.0" ry="3.0" fill="url(#dg)"/></g><g transform="rotate(-7 456 544)"><ellipse cx="455.6" cy="544.2" rx="2.4" ry="4.1" fill="#b2b2b4"/><ellipse cx="455.8" cy="543.8" rx="2.3" ry="3.9" fill="url(#dg)"/></g><g transform="rotate(3 456 671)"><ellipse cx="455.4" cy="671.4" rx="3.2" ry="4.7" fill="#b2b2b4"/><ellipse cx="455.7" cy="670.9" rx="3.0" ry="4.4" fill="url(#dg)"/></g><g transform="rotate(11 351 460)"><ellipse cx="350.9" cy="460.5" rx="1.6" ry="2.3" fill="#b2b2b4"/><ellipse cx="351.0" cy="460.3" rx="1.5" ry="2.2" fill="url(#dg)"/></g><g transform="rotate(5 157 582)"><ellipse cx="156.8" cy="582.3" rx="2.4" ry="4.0" fill="#b2b2b4"/><ellipse cx="157.0" cy="581.9" rx="2.3" ry="3.8" fill="url(#dg)"/></g><g transform="rotate(-19 102 149)"><ellipse cx="101.6" cy="149.6" rx="2.0" ry="3.5" fill="#b2b2b4"/><ellipse cx="101.8" cy="149.2" rx="1.9" ry="3.3" fill="url(#dg)"/></g><g transform="rotate(0 9 457)"><ellipse cx="8.9" cy="457.0" rx="2.2" ry="2.6" fill="#b2b2b4"/><ellipse cx="9.0" cy="456.8" rx="2.1" ry="2.5" fill="url(#dg)"/></g><g transform="rotate(11 288 487)"><ellipse cx="288.3" cy="487.3" rx="2.1" ry="2.7" fill="#b2b2b4"/><ellipse cx="288.4" cy="487.1" rx="2.0" ry="2.5" fill="url(#dg)"/></g><g transform="rotate(12 483 200)"><ellipse cx="483.2" cy="200.6" rx="2.3" ry="4.0" fill="#b2b2b4"/><ellipse cx="483.4" cy="200.2" rx="2.2" ry="3.8" fill="url(#dg)"/></g><g transform="rotate(-19 83 494)"><ellipse cx="82.6" cy="494.5" rx="2.8" ry="3.9" fill="#b2b2b4"/><ellipse cx="82.8" cy="494.1" rx="2.6" ry="3.8" fill="url(#dg)"/></g><g transform="rotate(-11 303 331)"><ellipse cx="303.1" cy="331.6" rx="2.7" ry="3.2" fill="#b2b2b4"/><ellipse cx="303.3" cy="331.3" rx="2.6" ry="3.1" fill="url(#dg)"/></g><g transform="rotate(2 504 362)"><ellipse cx="503.9" cy="362.6" rx="2.0" ry="3.4" fill="#b2b2b4"/><ellipse cx="504.1" cy="362.3" rx="1.9" ry="3.2" fill="url(#dg)"/></g><g transform="rotate(16 372 240)"><ellipse cx="372.0" cy="240.7" rx="2.2" ry="3.6" fill="#b2b2b4"/><ellipse cx="372.1" cy="240.3" rx="2.1" ry="3.5" fill="url(#dg)"/></g><g transform="rotate(6 142 435)"><ellipse cx="141.9" cy="435.8" rx="2.6" ry="4.3" fill="#b2b2b4"/><ellipse cx="142.1" cy="435.3" rx="2.4" ry="4.1" fill="url(#dg)"/></g><g transform="rotate(-6 525 194)"><ellipse cx="525.1" cy="194.8" rx="3.1" ry="3.9" fill="#b2b2b4"/><ellipse cx="525.3" cy="194.4" rx="2.9" ry="3.7" fill="url(#dg)"/></g><g transform="rotate(18 313 664)"><ellipse cx="313.2" cy="664.3" rx="2.3" ry="4.0" fill="#b2b2b4"/><ellipse cx="313.4" cy="663.9" rx="2.2" ry="3.8" fill="url(#dg)"/></g><g transform="rotate(3 444 8)"><ellipse cx="444.0" cy="7.8" rx="2.0" ry="2.6" fill="#b2b2b4"/><ellipse cx="444.2" cy="7.6" rx="2.0" ry="2.5" fill="url(#dg)"/></g><g transform="rotate(-18 65 97)"><ellipse cx="65.0" cy="96.8" rx="1.8" ry="2.9" fill="#b2b2b4"/><ellipse cx="65.2" cy="96.5" rx="1.7" ry="2.8" fill="url(#dg)"/></g><g transform="rotate(-6 214 480)"><ellipse cx="213.4" cy="480.2" rx="1.4" ry="2.4" fill="#b2b2b4"/><ellipse cx="213.5" cy="479.9" rx="1.3" ry="2.3" fill="url(#dg)"/></g><g transform="rotate(3 89 706)"><ellipse cx="88.5" cy="706.6" rx="2.5" ry="4.1" fill="#b2b2b4"/><ellipse cx="88.7" cy="706.2" rx="2.4" ry="3.9" fill="url(#dg)"/></g><g transform="rotate(17 289 181)"><ellipse cx="289.2" cy="181.1" rx="2.5" ry="3.0" fill="#b2b2b4"/><ellipse cx="289.4" cy="180.9" rx="2.3" ry="2.9" fill="url(#dg)"/></g><g transform="rotate(14 317 314)"><ellipse cx="317.1" cy="314.9" rx="3.0" ry="4.9" fill="#b2b2b4"/><ellipse cx="317.4" cy="314.4" rx="2.9" ry="4.6" fill="url(#dg)"/></g><g transform="rotate(14 261 381)"><ellipse cx="260.5" cy="381.0" rx="1.8" ry="2.5" fill="#b2b2b4"/><ellipse cx="260.7" cy="380.7" rx="1.7" ry="2.4" fill="url(#dg)"/></g><g transform="rotate(-18 261 627)"><ellipse cx="261.4" cy="627.7" rx="1.5" ry="1.7" fill="#b2b2b4"/><ellipse cx="261.5" cy="627.5" rx="1.4" ry="1.7" fill="url(#dg)"/></g><g transform="rotate(4 11 96)"><ellipse cx="10.6" cy="96.3" rx="2.0" ry="3.2" fill="#b2b2b4"/><ellipse cx="10.7" cy="96.0" rx="1.9" ry="3.1" fill="url(#dg)"/></g><g transform="rotate(-5 233 451)"><ellipse cx="232.7" cy="451.4" rx="3.3" ry="4.8" fill="#b2b2b4"/><ellipse cx="232.9" cy="451.0" rx="3.1" ry="4.5" fill="url(#dg)"/></g><g transform="rotate(9 179 341)"><ellipse cx="179.0" cy="341.7" rx="1.7" ry="2.6" fill="#b2b2b4"/><ellipse cx="179.2" cy="341.4" rx="1.6" ry="2.5" fill="url(#dg)"/></g><g transform="rotate(0 416 567)"><ellipse cx="416.2" cy="566.8" rx="2.5" ry="2.9" fill="#b2b2b4"/><ellipse cx="416.4" cy="566.5" rx="2.3" ry="2.8" fill="url(#dg)"/></g><g transform="rotate(-8 403 411)"><ellipse cx="402.9" cy="411.0" rx="1.6" ry="2.5" fill="#b2b2b4"/><ellipse cx="403.0" cy="410.7" rx="1.5" ry="2.4" fill="url(#dg)"/></g><g transform="rotate(-11 508 176)"><ellipse cx="508.3" cy="176.5" rx="2.0" ry="2.4" fill="#b2b2b4"/><ellipse cx="508.4" cy="176.2" rx="1.9" ry="2.3" fill="url(#dg)"/></g><g transform="rotate(11 114 173)"><ellipse cx="114.0" cy="173.3" rx="2.4" ry="3.3" fill="#b2b2b4"/><ellipse cx="114.2" cy="173.0" rx="2.3" ry="3.1" fill="url(#dg)"/></g><g transform="rotate(17 504 508)"><ellipse cx="503.6" cy="508.7" rx="3.2" ry="4.5" fill="#b2b2b4"/><ellipse cx="503.9" cy="508.3" rx="3.0" ry="4.3" fill="url(#dg)"/></g><g transform="rotate(-3 522 685)"><ellipse cx="521.8" cy="684.9" rx="1.8" ry="2.2" fill="#b2b2b4"/><ellipse cx="521.9" cy="684.7" rx="1.7" ry="2.1" fill="url(#dg)"/></g><g transform="rotate(-4 305 509)"><ellipse cx="305.1" cy="509.6" rx="2.4" ry="3.9" fill="#b2b2b4"/><ellipse cx="305.3" cy="509.3" rx="2.3" ry="3.7" fill="url(#dg)"/></g><g transform="rotate(5 348 121)"><ellipse cx="347.9" cy="121.5" rx="2.3" ry="3.6" fill="#b2b2b4"/><ellipse cx="348.1" cy="121.2" rx="2.2" ry="3.4" fill="url(#dg)"/></g><g transform="rotate(6 85 59)"><ellipse cx="84.7" cy="59.7" rx="2.3" ry="2.7" fill="#b2b2b4"/><ellipse cx="84.9" cy="59.4" rx="2.2" ry="2.6" fill="url(#dg)"/></g><g transform="rotate(19 496 517)"><ellipse cx="495.9" cy="517.5" rx="3.2" ry="4.4" fill="#b2b2b4"/><ellipse cx="496.1" cy="517.1" rx="3.0" ry="4.2" fill="url(#dg)"/></g><g transform="rotate(4 265 3)"><ellipse cx="264.3" cy="3.3" rx="2.9" ry="4.1" fill="#b2b2b4"/><ellipse cx="264.5" cy="2.9" rx="2.8" ry="3.9" fill="url(#dg)"/></g><g transform="rotate(3 215 491)"><ellipse cx="215.0" cy="490.9" rx="2.2" ry="3.8" fill="#b2b2b4"/><ellipse cx="215.2" cy="490.5" rx="2.1" ry="3.6" fill="url(#dg)"/></g><g transform="rotate(-7 480 53)"><ellipse cx="479.6" cy="53.3" rx="1.5" ry="2.4" fill="#b2b2b4"/><ellipse cx="479.7" cy="53.0" rx="1.4" ry="2.3" fill="url(#dg)"/></g><g transform="rotate(-17 151 577)"><ellipse cx="151.0" cy="576.9" rx="2.0" ry="3.2" fill="#b2b2b4"/><ellipse cx="151.2" cy="576.6" rx="1.9" ry="3.1" fill="url(#dg)"/></g><g transform="rotate(10 127 79)"><ellipse cx="126.5" cy="79.3" rx="3.0" ry="4.0" fill="#b2b2b4"/><ellipse cx="126.7" cy="79.0" rx="2.9" ry="3.8" fill="url(#dg)"/></g><g transform="rotate(-12 452 428)"><ellipse cx="451.8" cy="428.4" rx="3.2" ry="4.8" fill="#b2b2b4"/><ellipse cx="452.0" cy="427.9" rx="3.1" ry="4.6" fill="url(#dg)"/></g><g transform="rotate(5 258 177)"><ellipse cx="257.7" cy="176.9" rx="3.1" ry="3.8" fill="#b2b2b4"/><ellipse cx="257.9" cy="176.5" rx="2.9" ry="3.6" fill="url(#dg)"/></g><g transform="rotate(-9 448 363)"><ellipse cx="448.2" cy="363.8" rx="3.1" ry="4.5" fill="#b2b2b4"/><ellipse cx="448.4" cy="363.4" rx="3.0" ry="4.2" fill="url(#dg)"/></g><g transform="rotate(-7 344 674)"><ellipse cx="344.3" cy="674.2" rx="2.5" ry="3.3" fill="#b2b2b4"/><ellipse cx="344.5" cy="673.9" rx="2.4" ry="3.2" fill="url(#dg)"/></g><g transform="rotate(-17 464 224)"><ellipse cx="463.4" cy="224.5" rx="3.0" ry="5.2" fill="#b2b2b4"/><ellipse cx="463.6" cy="224.0" rx="2.9" ry="4.9" fill="url(#dg)"/></g><g transform="rotate(11 543 209)"><ellipse cx="542.5" cy="209.2" rx="3.1" ry="3.8" fill="#b2b2b4"/><ellipse cx="542.8" cy="208.9" rx="3.0" ry="3.6" fill="url(#dg)"/></g><g transform="rotate(-13 16 476)"><ellipse cx="15.4" cy="475.8" rx="2.4" ry="2.8" fill="#b2b2b4"/><ellipse cx="15.6" cy="475.5" rx="2.3" ry="2.7" fill="url(#dg)"/></g><g transform="rotate(-10 169 150)"><ellipse cx="168.4" cy="150.4" rx="2.1" ry="2.4" fill="#b2b2b4"/><ellipse cx="168.6" cy="150.2" rx="2.0" ry="2.3" fill="url(#dg)"/></g><g transform="rotate(16 296 3)"><ellipse cx="295.6" cy="3.8" rx="3.0" ry="5.1" fill="#b2b2b4"/><ellipse cx="295.8" cy="3.3" rx="2.9" ry="4.9" fill="url(#dg)"/></g><g transform="rotate(-14 231 406)"><ellipse cx="231.2" cy="406.2" rx="2.4" ry="3.4" fill="#b2b2b4"/><ellipse cx="231.4" cy="405.9" rx="2.3" ry="3.3" fill="url(#dg)"/></g><g transform="rotate(8 498 534)"><ellipse cx="497.5" cy="533.8" rx="1.8" ry="2.3" fill="#b2b2b4"/><ellipse cx="497.7" cy="533.5" rx="1.8" ry="2.2" fill="url(#dg)"/></g><g transform="rotate(-12 24 238)"><ellipse cx="23.6" cy="238.5" rx="2.3" ry="3.2" fill="#b2b2b4"/><ellipse cx="23.8" cy="238.2" rx="2.2" ry="3.0" fill="url(#dg)"/></g><g transform="rotate(-16 112 122)"><ellipse cx="112.2" cy="122.0" rx="2.0" ry="2.7" fill="#b2b2b4"/><ellipse cx="112.3" cy="121.7" rx="1.9" ry="2.5" fill="url(#dg)"/></g><g transform="rotate(-18 121 375)"><ellipse cx="121.2" cy="375.2" rx="2.7" ry="4.6" fill="#b2b2b4"/><ellipse cx="121.4" cy="374.7" rx="2.6" ry="4.4" fill="url(#dg)"/></g><g transform="rotate(-8 327 316)"><ellipse cx="326.4" cy="316.1" rx="2.2" ry="3.2" fill="#b2b2b4"/><ellipse cx="326.5" cy="315.8" rx="2.1" ry="3.1" fill="url(#dg)"/></g><g transform="rotate(13 428 601)"><ellipse cx="428.2" cy="601.1" rx="1.6" ry="2.5" fill="#b2b2b4"/><ellipse cx="428.3" cy="600.9" rx="1.6" ry="2.4" fill="url(#dg)"/></g><g transform="rotate(18 494 558)"><ellipse cx="493.5" cy="558.3" rx="2.8" ry="4.1" fill="#b2b2b4"/><ellipse cx="493.7" cy="557.9" rx="2.7" ry="3.9" fill="url(#dg)"/></g><g transform="rotate(10 5 126)"><ellipse cx="4.6" cy="126.2" rx="2.9" ry="5.2" fill="#b2b2b4"/><ellipse cx="4.8" cy="125.7" rx="2.8" ry="5.0" fill="url(#dg)"/></g><g transform="rotate(-9 361 364)"><ellipse cx="360.7" cy="364.3" rx="3.1" ry="4.3" fill="#b2b2b4"/><ellipse cx="361.0" cy="363.9" rx="3.0" ry="4.1" fill="url(#dg)"/></g><g transform="rotate(9 543 189)"><ellipse cx="543.0" cy="189.2" rx="2.6" ry="4.5" fill="#b2b2b4"/><ellipse cx="543.2" cy="188.7" rx="2.5" ry="4.3" fill="url(#dg)"/></g><g transform="rotate(8 388 426)"><ellipse cx="388.3" cy="426.4" rx="1.9" ry="2.4" fill="#b2b2b4"/><ellipse cx="388.4" cy="426.2" rx="1.8" ry="2.3" fill="url(#dg)"/></g><g transform="rotate(6 202 380)"><ellipse cx="202.0" cy="380.0" rx="2.0" ry="2.8" fill="#b2b2b4"/><ellipse cx="202.2" cy="379.7" rx="1.9" ry="2.7" fill="url(#dg)"/></g><g transform="rotate(-4 116 201)"><ellipse cx="115.9" cy="201.9" rx="2.9" ry="4.7" fill="#b2b2b4"/><ellipse cx="116.1" cy="201.4" rx="2.7" ry="4.4" fill="url(#dg)"/></g><g transform="rotate(-16 277 412)"><ellipse cx="276.6" cy="412.4" rx="2.7" ry="3.3" fill="#b2b2b4"/><ellipse cx="276.8" cy="412.1" rx="2.5" ry="3.1" fill="url(#dg)"/></g><g transform="rotate(-4 63 705)"><ellipse cx="63.3" cy="704.9" rx="1.8" ry="2.4" fill="#b2b2b4"/><ellipse cx="63.5" cy="704.7" rx="1.7" ry="2.3" fill="url(#dg)"/></g><g transform="rotate(-9 495 656)"><ellipse cx="495.2" cy="656.7" rx="2.9" ry="3.4" fill="#b2b2b4"/><ellipse cx="495.4" cy="656.3" rx="2.8" ry="3.2" fill="url(#dg)"/></g><g transform="rotate(-14 449 488)"><ellipse cx="448.9" cy="488.0" rx="2.4" ry="3.9" fill="#b2b2b4"/><ellipse cx="449.1" cy="487.6" rx="2.3" ry="3.8" fill="url(#dg)"/></g><g transform="rotate(-18 81 357)"><ellipse cx="81.3" cy="357.8" rx="2.7" ry="3.5" fill="#b2b2b4"/><ellipse cx="81.5" cy="357.4" rx="2.6" ry="3.3" fill="url(#dg)"/></g><g transform="rotate(-11 493 307)"><ellipse cx="492.9" cy="307.0" rx="3.3" ry="5.3" fill="#b2b2b4"/><ellipse cx="493.2" cy="306.5" rx="3.2" ry="5.0" fill="url(#dg)"/></g><g transform="rotate(15 512 236)"><ellipse cx="511.6" cy="236.0" rx="3.1" ry="4.3" fill="#b2b2b4"/><ellipse cx="511.9" cy="235.6" rx="2.9" ry="4.1" fill="url(#dg)"/></g><g transform="rotate(-6 206 327)"><ellipse cx="206.2" cy="326.8" rx="1.6" ry="2.5" fill="#b2b2b4"/><ellipse cx="206.3" cy="326.5" rx="1.5" ry="2.4" fill="url(#dg)"/></g><g transform="rotate(0 298 57)"><ellipse cx="298.3" cy="57.6" rx="2.9" ry="3.9" fill="#b2b2b4"/><ellipse cx="298.5" cy="57.2" rx="2.7" ry="3.7" fill="url(#dg)"/></g><g transform="rotate(-0 443 359)"><ellipse cx="442.5" cy="358.9" rx="2.5" ry="3.5" fill="#b2b2b4"/><ellipse cx="442.7" cy="358.6" rx="2.4" ry="3.3" fill="url(#dg)"/></g><g transform="rotate(-1 477 447)"><ellipse cx="476.8" cy="447.8" rx="2.9" ry="4.5" fill="#b2b2b4"/><ellipse cx="477.0" cy="447.4" rx="2.8" ry="4.3" fill="url(#dg)"/></g><g transform="rotate(8 246 296)"><ellipse cx="245.6" cy="296.5" rx="3.2" ry="4.5" fill="#b2b2b4"/><ellipse cx="245.8" cy="296.1" rx="3.1" ry="4.3" fill="url(#dg)"/></g><g transform="rotate(-4 230 465)"><ellipse cx="230.1" cy="464.9" rx="2.3" ry="3.1" fill="#b2b2b4"/><ellipse cx="230.3" cy="464.6" rx="2.2" ry="2.9" fill="url(#dg)"/></g><g transform="rotate(-5 214 112)"><ellipse cx="214.1" cy="111.8" rx="2.1" ry="2.5" fill="#b2b2b4"/><ellipse cx="214.3" cy="111.6" rx="2.0" ry="2.4" fill="url(#dg)"/></g><g transform="rotate(-8 25 196)"><ellipse cx="25.0" cy="196.6" rx="2.6" ry="4.4" fill="#b2b2b4"/><ellipse cx="25.2" cy="196.2" rx="2.4" ry="4.2" fill="url(#dg)"/></g><g transform="rotate(-2 478 77)"><ellipse cx="478.1" cy="77.0" rx="1.7" ry="3.0" fill="#b2b2b4"/><ellipse cx="478.2" cy="76.7" rx="1.6" ry="2.9" fill="url(#dg)"/></g><g transform="rotate(8 274 505)"><ellipse cx="273.4" cy="505.1" rx="2.6" ry="4.2" fill="#b2b2b4"/><ellipse cx="273.6" cy="504.7" rx="2.5" ry="4.0" fill="url(#dg)"/></g><g transform="rotate(-10 307 124)"><ellipse cx="306.4" cy="124.4" rx="1.9" ry="2.6" fill="#b2b2b4"/><ellipse cx="306.6" cy="124.1" rx="1.8" ry="2.5" fill="url(#dg)"/></g><g transform="rotate(12 428 197)"><ellipse cx="428.3" cy="197.1" rx="1.9" ry="2.5" fill="#b2b2b4"/><ellipse cx="428.4" cy="196.9" rx="1.8" ry="2.4" fill="url(#dg)"/></g><g transform="rotate(-12 383 209)"><ellipse cx="382.4" cy="209.1" rx="2.9" ry="4.1" fill="#b2b2b4"/><ellipse cx="382.7" cy="208.7" rx="2.8" ry="3.9" fill="url(#dg)"/></g><g transform="rotate(14 128 635)"><ellipse cx="127.8" cy="635.7" rx="2.0" ry="3.4" fill="#b2b2b4"/><ellipse cx="127.9" cy="635.4" rx="1.9" ry="3.3" fill="url(#dg)"/></g><g transform="rotate(-9 180 646)"><ellipse cx="180.3" cy="646.2" rx="2.1" ry="3.5" fill="#b2b2b4"/><ellipse cx="180.5" cy="645.9" rx="2.0" ry="3.3" fill="url(#dg)"/></g><g transform="rotate(16 488 196)"><ellipse cx="488.0" cy="196.3" rx="2.1" ry="3.1" fill="#b2b2b4"/><ellipse cx="488.2" cy="196.0" rx="2.0" ry="3.0" fill="url(#dg)"/></g><g transform="rotate(-12 93 170)"><ellipse cx="93.3" cy="170.7" rx="3.0" ry="5.2" fill="#b2b2b4"/><ellipse cx="93.5" cy="170.2" rx="2.8" ry="4.9" fill="url(#dg)"/></g><g transform="rotate(-1 44 19)"><ellipse cx="43.7" cy="19.5" rx="2.1" ry="3.5" fill="#b2b2b4"/><ellipse cx="43.8" cy="19.2" rx="2.0" ry="3.3" fill="url(#dg)"/></g><g transform="rotate(3 135 205)"><ellipse cx="135.2" cy="204.9" rx="2.3" ry="3.4" fill="#b2b2b4"/><ellipse cx="135.4" cy="204.5" rx="2.2" ry="3.2" fill="url(#dg)"/></g><g transform="rotate(0 463 96)"><ellipse cx="462.7" cy="96.8" rx="1.9" ry="3.2" fill="#b2b2b4"/><ellipse cx="462.8" cy="96.5" rx="1.8" ry="3.1" fill="url(#dg)"/></g><g transform="rotate(4 60 289)"><ellipse cx="59.7" cy="289.7" rx="2.5" ry="3.3" fill="#b2b2b4"/><ellipse cx="59.9" cy="289.4" rx="2.4" ry="3.2" fill="url(#dg)"/></g><g transform="rotate(11 420 191)"><ellipse cx="420.1" cy="191.4" rx="3.0" ry="3.6" fill="#b2b2b4"/><ellipse cx="420.3" cy="191.0" rx="2.9" ry="3.4" fill="url(#dg)"/></g><g transform="rotate(14 376 262)"><ellipse cx="375.8" cy="262.3" rx="2.5" ry="3.2" fill="#b2b2b4"/><ellipse cx="376.0" cy="262.0" rx="2.4" ry="3.0" fill="url(#dg)"/></g><g transform="rotate(4 275 337)"><ellipse cx="275.2" cy="337.4" rx="1.5" ry="2.0" fill="#b2b2b4"/><ellipse cx="275.3" cy="337.3" rx="1.4" ry="1.9" fill="url(#dg)"/></g><g transform="rotate(-4 208 553)"><ellipse cx="207.7" cy="553.4" rx="2.5" ry="4.2" fill="#b2b2b4"/><ellipse cx="207.9" cy="553.0" rx="2.4" ry="4.0" fill="url(#dg)"/></g><g transform="rotate(19 168 77)"><ellipse cx="168.1" cy="77.8" rx="2.9" ry="3.8" fill="#b2b2b4"/><ellipse cx="168.3" cy="77.5" rx="2.7" ry="3.6" fill="url(#dg)"/></g><g transform="rotate(12 2 562)"><ellipse cx="2.2" cy="562.3" rx="3.1" ry="3.7" fill="#b2b2b4"/><ellipse cx="2.5" cy="561.9" rx="3.0" ry="3.5" fill="url(#dg)"/></g><g transform="rotate(17 94 362)"><ellipse cx="94.3" cy="361.9" rx="2.2" ry="2.9" fill="#b2b2b4"/><ellipse cx="94.5" cy="361.6" rx="2.1" ry="2.8" fill="url(#dg)"/></g><g transform="rotate(16 79 426)"><ellipse cx="78.5" cy="426.5" rx="3.0" ry="3.9" fill="#b2b2b4"/><ellipse cx="78.8" cy="426.1" rx="2.8" ry="3.7" fill="url(#dg)"/></g><g transform="rotate(15 210 650)"><ellipse cx="209.5" cy="649.7" rx="1.4" ry="2.0" fill="#b2b2b4"/><ellipse cx="209.6" cy="649.6" rx="1.3" ry="1.9" fill="url(#dg)"/></g><g transform="rotate(7 271 261)"><ellipse cx="270.7" cy="261.8" rx="3.2" ry="4.5" fill="#b2b2b4"/><ellipse cx="271.0" cy="261.4" rx="3.0" ry="4.3" fill="url(#dg)"/></g><g transform="rotate(2 266 189)"><ellipse cx="265.8" cy="189.3" rx="1.8" ry="2.8" fill="#b2b2b4"/><ellipse cx="265.9" cy="189.1" rx="1.8" ry="2.7" fill="url(#dg)"/></g><g transform="rotate(-16 448 583)"><ellipse cx="448.1" cy="583.6" rx="2.0" ry="2.6" fill="#b2b2b4"/><ellipse cx="448.2" cy="583.3" rx="1.9" ry="2.5" fill="url(#dg)"/></g><g transform="rotate(-20 135 354)"><ellipse cx="135.3" cy="354.7" rx="3.0" ry="3.9" fill="#b2b2b4"/><ellipse cx="135.5" cy="354.3" rx="2.8" ry="3.7" fill="url(#dg)"/></g><g transform="rotate(2 371 655)"><ellipse cx="370.3" cy="655.1" rx="2.2" ry="3.0" fill="#b2b2b4"/><ellipse cx="370.5" cy="654.8" rx="2.1" ry="2.9" fill="url(#dg)"/></g><g transform="rotate(-10 156 597)"><ellipse cx="155.4" cy="597.0" rx="1.9" ry="3.3" fill="#b2b2b4"/><ellipse cx="155.5" cy="596.7" rx="1.8" ry="3.1" fill="url(#dg)"/></g><g transform="rotate(-16 332 112)"><ellipse cx="331.4" cy="112.8" rx="2.2" ry="2.9" fill="#b2b2b4"/><ellipse cx="331.5" cy="112.5" rx="2.1" ry="2.8" fill="url(#dg)"/></g><g transform="rotate(-11 353 443)"><ellipse cx="353.0" cy="443.5" rx="1.6" ry="2.7" fill="#b2b2b4"/><ellipse cx="353.1" cy="443.3" rx="1.5" ry="2.6" fill="url(#dg)"/></g><g transform="rotate(6 463 432)"><ellipse cx="463.2" cy="432.5" rx="2.1" ry="3.2" fill="#b2b2b4"/><ellipse cx="463.4" cy="432.2" rx="2.0" ry="3.1" fill="url(#dg)"/></g><g transform="rotate(10 254 274)"><ellipse cx="253.7" cy="274.3" rx="2.1" ry="3.1" fill="#b2b2b4"/><ellipse cx="253.9" cy="274.0" rx="2.0" ry="3.0" fill="url(#dg)"/></g><g transform="rotate(-16 526 380)"><ellipse cx="526.2" cy="379.9" rx="1.6" ry="2.4" fill="#b2b2b4"/><ellipse cx="526.3" cy="379.6" rx="1.5" ry="2.2" fill="url(#dg)"/></g><g transform="rotate(7 365 494)"><ellipse cx="364.6" cy="494.4" rx="3.1" ry="5.6" fill="#b2b2b4"/><ellipse cx="364.8" cy="493.9" rx="3.0" ry="5.3" fill="url(#dg)"/></g><g transform="rotate(4 201 499)"><ellipse cx="200.4" cy="499.7" rx="2.3" ry="3.2" fill="#b2b2b4"/><ellipse cx="200.6" cy="499.4" rx="2.2" ry="3.0" fill="url(#dg)"/></g><g transform="rotate(-5 22 542)"><ellipse cx="21.6" cy="542.2" rx="2.3" ry="3.3" fill="#b2b2b4"/><ellipse cx="21.8" cy="541.9" rx="2.2" ry="3.1" fill="url(#dg)"/></g><g transform="rotate(-6 254 306)"><ellipse cx="254.1" cy="306.3" rx="2.3" ry="2.8" fill="#b2b2b4"/><ellipse cx="254.3" cy="306.0" rx="2.1" ry="2.7" fill="url(#dg)"/></g><g transform="rotate(-15 504 643)"><ellipse cx="503.8" cy="644.0" rx="3.3" ry="5.8" fill="#b2b2b4"/><ellipse cx="504.0" cy="643.4" rx="3.1" ry="5.5" fill="url(#dg)"/></g><g transform="rotate(7 397 316)"><ellipse cx="396.4" cy="316.2" rx="2.4" ry="3.7" fill="#b2b2b4"/><ellipse cx="396.6" cy="315.8" rx="2.3" ry="3.5" fill="url(#dg)"/></g><g transform="rotate(3 336 182)"><ellipse cx="335.7" cy="182.7" rx="3.0" ry="4.5" fill="#b2b2b4"/><ellipse cx="336.0" cy="182.3" rx="2.8" ry="4.3" fill="url(#dg)"/></g><g transform="rotate(-14 486 299)"><ellipse cx="486.0" cy="299.4" rx="3.1" ry="4.2" fill="#b2b2b4"/><ellipse cx="486.2" cy="299.0" rx="3.0" ry="4.0" fill="url(#dg)"/></g><g transform="rotate(6 402 369)"><ellipse cx="402.2" cy="369.9" rx="3.3" ry="5.8" fill="#b2b2b4"/><ellipse cx="402.4" cy="369.4" rx="3.2" ry="5.5" fill="url(#dg)"/></g><g transform="rotate(9 67 76)"><ellipse cx="67.1" cy="76.0" rx="1.6" ry="2.9" fill="#b2b2b4"/><ellipse cx="67.2" cy="75.7" rx="1.5" ry="2.8" fill="url(#dg)"/></g><g transform="rotate(-6 412 657)"><ellipse cx="411.5" cy="657.6" rx="2.0" ry="2.7" fill="#b2b2b4"/><ellipse cx="411.6" cy="657.4" rx="1.9" ry="2.5" fill="url(#dg)"/></g><g transform="rotate(2 518 117)"><ellipse cx="517.5" cy="117.5" rx="2.9" ry="4.5" fill="#b2b2b4"/><ellipse cx="517.7" cy="117.1" rx="2.8" ry="4.3" fill="url(#dg)"/></g><g transform="rotate(12 539 97)"><ellipse cx="538.4" cy="97.8" rx="3.0" ry="4.1" fill="#b2b2b4"/><ellipse cx="538.6" cy="97.4" rx="2.9" ry="3.9" fill="url(#dg)"/></g><g transform="rotate(-0 280 556)"><ellipse cx="279.9" cy="556.4" rx="2.2" ry="2.8" fill="#b2b2b4"/><ellipse cx="280.1" cy="556.1" rx="2.1" ry="2.7" fill="url(#dg)"/></g><g transform="rotate(7 415 371)"><ellipse cx="414.3" cy="371.3" rx="2.0" ry="2.8" fill="#b2b2b4"/><ellipse cx="414.5" cy="371.0" rx="2.0" ry="2.6" fill="url(#dg)"/></g><g transform="rotate(15 452 388)"><ellipse cx="451.8" cy="388.1" rx="1.7" ry="2.2" fill="#b2b2b4"/><ellipse cx="452.0" cy="387.9" rx="1.6" ry="2.0" fill="url(#dg)"/></g><g transform="rotate(-7 279 26)"><ellipse cx="278.7" cy="26.5" rx="3.0" ry="5.2" fill="#b2b2b4"/><ellipse cx="278.9" cy="26.0" rx="2.8" ry="4.9" fill="url(#dg)"/></g><g transform="rotate(-6 306 437)"><ellipse cx="305.4" cy="437.2" rx="2.5" ry="3.5" fill="#b2b2b4"/><ellipse cx="305.6" cy="436.9" rx="2.4" ry="3.3" fill="url(#dg)"/></g><g transform="rotate(-10 73 83)"><ellipse cx="72.6" cy="82.9" rx="3.0" ry="4.0" fill="#b2b2b4"/><ellipse cx="72.8" cy="82.6" rx="2.9" ry="3.8" fill="url(#dg)"/></g><g transform="rotate(11 93 578)"><ellipse cx="92.4" cy="578.1" rx="2.6" ry="4.1" fill="#b2b2b4"/><ellipse cx="92.6" cy="577.7" rx="2.5" ry="3.9" fill="url(#dg)"/></g><g transform="rotate(19 140 623)"><ellipse cx="140.1" cy="623.4" rx="3.1" ry="4.0" fill="#b2b2b4"/><ellipse cx="140.3" cy="623.1" rx="3.0" ry="3.8" fill="url(#dg)"/></g><g transform="rotate(1 61 67)"><ellipse cx="60.6" cy="67.3" rx="3.0" ry="4.9" fill="#b2b2b4"/><ellipse cx="60.8" cy="66.8" rx="2.9" ry="4.7" fill="url(#dg)"/></g><g transform="rotate(15 199 82)"><ellipse cx="199.4" cy="81.9" rx="1.5" ry="2.0" fill="#b2b2b4"/><ellipse cx="199.5" cy="81.7" rx="1.4" ry="1.9" fill="url(#dg)"/></g><g transform="rotate(19 385 234)"><ellipse cx="385.1" cy="233.8" rx="1.7" ry="1.9" fill="#b2b2b4"/><ellipse cx="385.2" cy="233.6" rx="1.6" ry="1.8" fill="url(#dg)"/></g><g transform="rotate(7 376 44)"><ellipse cx="375.3" cy="44.7" rx="2.2" ry="3.6" fill="#b2b2b4"/><ellipse cx="375.5" cy="44.3" rx="2.1" ry="3.4" fill="url(#dg)"/></g><g transform="rotate(-17 384 485)"><ellipse cx="383.4" cy="484.9" rx="1.9" ry="2.3" fill="#b2b2b4"/><ellipse cx="383.6" cy="484.7" rx="1.8" ry="2.2" fill="url(#dg)"/></g><g transform="rotate(2 90 122)"><ellipse cx="89.5" cy="122.6" rx="1.8" ry="2.7" fill="#b2b2b4"/><ellipse cx="89.6" cy="122.4" rx="1.8" ry="2.5" fill="url(#dg)"/></g><g transform="rotate(-15 230 159)"><ellipse cx="230.1" cy="159.5" rx="3.1" ry="4.6" fill="#b2b2b4"/><ellipse cx="230.3" cy="159.1" rx="2.9" ry="4.3" fill="url(#dg)"/></g><g transform="rotate(-12 432 103)"><ellipse cx="431.9" cy="103.8" rx="2.8" ry="4.2" fill="#b2b2b4"/><ellipse cx="432.1" cy="103.4" rx="2.7" ry="4.0" fill="url(#dg)"/></g><g transform="rotate(-5 408 628)"><ellipse cx="408.1" cy="628.1" rx="3.3" ry="5.6" fill="#b2b2b4"/><ellipse cx="408.3" cy="627.5" rx="3.2" ry="5.4" fill="url(#dg)"/></g><g transform="rotate(-5 454 165)"><ellipse cx="453.9" cy="165.5" rx="2.3" ry="3.5" fill="#b2b2b4"/><ellipse cx="454.1" cy="165.2" rx="2.2" ry="3.4" fill="url(#dg)"/></g><g transform="rotate(18 379 253)"><ellipse cx="378.8" cy="253.5" rx="3.0" ry="3.9" fill="#b2b2b4"/><ellipse cx="379.0" cy="253.1" rx="2.9" ry="3.7" fill="url(#dg)"/></g><g transform="rotate(-11 276 659)"><ellipse cx="275.7" cy="659.3" rx="3.2" ry="3.9" fill="#b2b2b4"/><ellipse cx="275.9" cy="659.0" rx="3.0" ry="3.7" fill="url(#dg)"/></g><g transform="rotate(5 442 396)"><ellipse cx="442.2" cy="396.5" rx="1.7" ry="2.0" fill="#b2b2b4"/><ellipse cx="442.3" cy="396.3" rx="1.7" ry="1.9" fill="url(#dg)"/></g><g transform="rotate(-5 131 517)"><ellipse cx="130.6" cy="517.8" rx="3.0" ry="4.5" fill="#b2b2b4"/><ellipse cx="130.8" cy="517.4" rx="2.8" ry="4.3" fill="url(#dg)"/></g><g transform="rotate(13 543 98)"><ellipse cx="542.8" cy="98.7" rx="3.0" ry="3.5" fill="#b2b2b4"/><ellipse cx="543.0" cy="98.4" rx="2.9" ry="3.4" fill="url(#dg)"/></g><g transform="rotate(5 387 314)"><ellipse cx="386.5" cy="314.6" rx="2.0" ry="3.3" fill="#b2b2b4"/><ellipse cx="386.6" cy="314.3" rx="1.9" ry="3.1" fill="url(#dg)"/></g><g transform="rotate(-3 157 261)"><ellipse cx="156.6" cy="261.6" rx="2.1" ry="2.7" fill="#b2b2b4"/><ellipse cx="156.7" cy="261.3" rx="2.0" ry="2.6" fill="url(#dg)"/></g><g transform="rotate(19 541 510)"><ellipse cx="540.3" cy="510.0" rx="3.3" ry="5.0" fill="#b2b2b4"/><ellipse cx="540.5" cy="509.5" rx="3.2" ry="4.8" fill="url(#dg)"/></g><g transform="rotate(1 508 69)"><ellipse cx="508.1" cy="69.2" rx="2.3" ry="3.0" fill="#b2b2b4"/><ellipse cx="508.3" cy="68.9" rx="2.2" ry="2.9" fill="url(#dg)"/></g><g transform="rotate(-11 190 100)"><ellipse cx="190.0" cy="100.5" rx="2.9" ry="4.2" fill="#b2b2b4"/><ellipse cx="190.3" cy="100.1" rx="2.7" ry="4.0" fill="url(#dg)"/></g><g transform="rotate(-17 475 2)"><ellipse cx="475.0" cy="2.2" rx="2.5" ry="3.3" fill="#b2b2b4"/><ellipse cx="475.2" cy="1.9" rx="2.4" ry="3.1" fill="url(#dg)"/></g><g transform="rotate(7 313 225)"><ellipse cx="312.8" cy="224.9" rx="3.0" ry="4.0" fill="#b2b2b4"/><ellipse cx="313.0" cy="224.5" rx="2.8" ry="3.9" fill="url(#dg)"/></g><g transform="rotate(-13 506 53)"><ellipse cx="505.8" cy="53.4" rx="2.5" ry="3.7" fill="#b2b2b4"/><ellipse cx="506.0" cy="53.1" rx="2.4" ry="3.5" fill="url(#dg)"/></g><g transform="rotate(-0 515 664)"><ellipse cx="515.3" cy="664.6" rx="1.8" ry="2.3" fill="#b2b2b4"/><ellipse cx="515.4" cy="664.4" rx="1.7" ry="2.2" fill="url(#dg)"/></g><g transform="rotate(17 8 250)"><ellipse cx="7.5" cy="249.9" rx="2.6" ry="3.3" fill="#b2b2b4"/><ellipse cx="7.7" cy="249.5" rx="2.5" ry="3.2" fill="url(#dg)"/></g><g transform="rotate(-12 381 293)"><ellipse cx="380.9" cy="293.2" rx="2.6" ry="4.0" fill="#b2b2b4"/><ellipse cx="381.1" cy="292.8" rx="2.5" ry="3.9" fill="url(#dg)"/></g><g transform="rotate(7 47 573)"><ellipse cx="47.0" cy="573.5" rx="1.8" ry="2.3" fill="#b2b2b4"/><ellipse cx="47.1" cy="573.3" rx="1.8" ry="2.2" fill="url(#dg)"/></g><g transform="rotate(-9 26 237)"><ellipse cx="25.5" cy="237.5" rx="2.5" ry="3.8" fill="#b2b2b4"/><ellipse cx="25.7" cy="237.1" rx="2.4" ry="3.7" fill="url(#dg)"/></g><g transform="rotate(-18 528 238)"><ellipse cx="527.8" cy="238.5" rx="2.6" ry="4.0" fill="#b2b2b4"/><ellipse cx="528.0" cy="238.2" rx="2.5" ry="3.8" fill="url(#dg)"/></g><g transform="rotate(-9 147 599)"><ellipse cx="147.0" cy="598.9" rx="2.7" ry="4.1" fill="#b2b2b4"/><ellipse cx="147.2" cy="598.5" rx="2.5" ry="3.9" fill="url(#dg)"/></g><g transform="rotate(-14 0 265)"><ellipse cx="0.1" cy="265.5" rx="2.8" ry="4.9" fill="#b2b2b4"/><ellipse cx="0.3" cy="265.0" rx="2.7" ry="4.7" fill="url(#dg)"/></g><g transform="rotate(-6 69 26)"><ellipse cx="68.7" cy="26.8" rx="2.2" ry="3.9" fill="#b2b2b4"/><ellipse cx="68.9" cy="26.4" rx="2.1" ry="3.8" fill="url(#dg)"/></g><g transform="rotate(-10 369 0)"><ellipse cx="368.8" cy="0.4" rx="2.3" ry="3.1" fill="#b2b2b4"/><ellipse cx="368.9" cy="0.1" rx="2.2" ry="3.0" fill="url(#dg)"/></g><g transform="rotate(16 475 102)"><ellipse cx="474.9" cy="102.4" rx="1.6" ry="2.2" fill="#b2b2b4"/><ellipse cx="475.0" cy="102.2" rx="1.5" ry="2.1" fill="url(#dg)"/></g><g transform="rotate(-10 494 397)"><ellipse cx="493.8" cy="397.4" rx="2.7" ry="4.1" fill="#b2b2b4"/><ellipse cx="494.1" cy="397.0" rx="2.6" ry="3.9" fill="url(#dg)"/></g><g transform="rotate(6 66 675)"><ellipse cx="65.6" cy="675.2" rx="1.7" ry="2.4" fill="#b2b2b4"/><ellipse cx="65.7" cy="675.0" rx="1.6" ry="2.3" fill="url(#dg)"/></g><g transform="rotate(2 242 72)"><ellipse cx="241.6" cy="72.2" rx="3.1" ry="4.6" fill="#b2b2b4"/><ellipse cx="241.8" cy="71.7" rx="2.9" ry="4.4" fill="url(#dg)"/></g><g transform="rotate(-3 228 400)"><ellipse cx="227.4" cy="400.0" rx="2.4" ry="3.9" fill="#b2b2b4"/><ellipse cx="227.5" cy="399.6" rx="2.3" ry="3.7" fill="url(#dg)"/></g><g transform="rotate(-8 156 170)"><ellipse cx="156.2" cy="170.0" rx="2.6" ry="4.5" fill="#b2b2b4"/><ellipse cx="156.4" cy="169.5" rx="2.5" ry="4.3" fill="url(#dg)"/></g><g transform="rotate(-5 216 151)"><ellipse cx="216.0" cy="151.4" rx="3.1" ry="4.8" fill="#b2b2b4"/><ellipse cx="216.2" cy="151.0" rx="3.0" ry="4.5" fill="url(#dg)"/></g><g transform="rotate(5 310 382)"><ellipse cx="310.2" cy="382.4" rx="2.8" ry="4.7" fill="#b2b2b4"/><ellipse cx="310.4" cy="382.0" rx="2.7" ry="4.4" fill="url(#dg)"/></g><g transform="rotate(-13 159 420)"><ellipse cx="158.6" cy="420.7" rx="1.9" ry="2.3" fill="#b2b2b4"/><ellipse cx="158.7" cy="420.5" rx="1.8" ry="2.2" fill="url(#dg)"/></g><g transform="rotate(-7 155 466)"><ellipse cx="154.4" cy="466.5" rx="2.6" ry="4.4" fill="#b2b2b4"/><ellipse cx="154.6" cy="466.1" rx="2.5" ry="4.2" fill="url(#dg)"/></g><g transform="rotate(9 21 475)"><ellipse cx="21.1" cy="474.8" rx="1.7" ry="2.0" fill="#b2b2b4"/><ellipse cx="21.2" cy="474.6" rx="1.6" ry="1.9" fill="url(#dg)"/></g><g transform="rotate(6 248 469)"><ellipse cx="247.4" cy="469.0" rx="2.3" ry="4.1" fill="#b2b2b4"/><ellipse cx="247.5" cy="468.6" rx="2.2" ry="3.9" fill="url(#dg)"/></g><g transform="rotate(0 284 563)"><ellipse cx="283.4" cy="563.9" rx="2.6" ry="4.4" fill="#b2b2b4"/><ellipse cx="283.6" cy="563.5" rx="2.4" ry="4.1" fill="url(#dg)"/></g><g transform="rotate(-8 46 415)"><ellipse cx="45.5" cy="415.1" rx="2.9" ry="4.7" fill="#b2b2b4"/><ellipse cx="45.8" cy="414.6" rx="2.8" ry="4.5" fill="url(#dg)"/></g><g transform="rotate(-11 222 405)"><ellipse cx="222.3" cy="405.0" rx="1.4" ry="2.2" fill="#b2b2b4"/><ellipse cx="222.4" cy="404.8" rx="1.3" ry="2.1" fill="url(#dg)"/></g><g transform="rotate(-7 164 364)"><ellipse cx="164.1" cy="364.5" rx="2.9" ry="5.1" fill="#b2b2b4"/><ellipse cx="164.4" cy="364.0" rx="2.8" ry="4.9" fill="url(#dg)"/></g><g transform="rotate(10 429 120)"><ellipse cx="428.9" cy="120.7" rx="1.7" ry="2.7" fill="#b2b2b4"/><ellipse cx="429.0" cy="120.5" rx="1.6" ry="2.5" fill="url(#dg)"/></g><g transform="rotate(1 497 282)"><ellipse cx="496.7" cy="282.5" rx="2.7" ry="4.3" fill="#b2b2b4"/><ellipse cx="496.9" cy="282.1" rx="2.6" ry="4.1" fill="url(#dg)"/></g><g transform="rotate(15 91 278)"><ellipse cx="90.4" cy="278.4" rx="1.6" ry="2.1" fill="#b2b2b4"/><ellipse cx="90.6" cy="278.2" rx="1.5" ry="2.0" fill="url(#dg)"/></g><g transform="rotate(16 130 397)"><ellipse cx="130.3" cy="397.7" rx="2.4" ry="4.0" fill="#b2b2b4"/><ellipse cx="130.5" cy="397.3" rx="2.3" ry="3.9" fill="url(#dg)"/></g><g transform="rotate(17 231 215)"><ellipse cx="231.2" cy="215.0" rx="3.0" ry="4.3" fill="#b2b2b4"/><ellipse cx="231.5" cy="214.5" rx="2.8" ry="4.1" fill="url(#dg)"/></g><g transform="rotate(18 513 209)"><ellipse cx="512.4" cy="209.3" rx="3.1" ry="3.6" fill="#b2b2b4"/><ellipse cx="512.6" cy="209.0" rx="3.0" ry="3.5" fill="url(#dg)"/></g><g transform="rotate(-12 394 45)"><ellipse cx="393.5" cy="45.5" rx="2.1" ry="3.4" fill="#b2b2b4"/><ellipse cx="393.7" cy="45.2" rx="2.0" ry="3.2" fill="url(#dg)"/></g><g transform="rotate(-9 148 587)"><ellipse cx="147.5" cy="586.9" rx="2.0" ry="2.4" fill="#b2b2b4"/><ellipse cx="147.7" cy="586.7" rx="1.9" ry="2.2" fill="url(#dg)"/></g><g transform="rotate(17 25 663)"><ellipse cx="25.1" cy="663.7" rx="1.6" ry="2.2" fill="#b2b2b4"/><ellipse cx="25.2" cy="663.5" rx="1.5" ry="2.1" fill="url(#dg)"/></g><g transform="rotate(20 173 164)"><ellipse cx="173.2" cy="164.2" rx="2.9" ry="5.1" fill="#b2b2b4"/><ellipse cx="173.4" cy="163.7" rx="2.7" ry="4.9" fill="url(#dg)"/></g><g transform="rotate(13 176 4)"><ellipse cx="175.3" cy="4.8" rx="3.1" ry="4.3" fill="#b2b2b4"/><ellipse cx="175.5" cy="4.4" rx="2.9" ry="4.1" fill="url(#dg)"/></g><g transform="rotate(-1 224 408)"><ellipse cx="224.2" cy="408.7" rx="2.7" ry="4.5" fill="#b2b2b4"/><ellipse cx="224.4" cy="408.3" rx="2.5" ry="4.3" fill="url(#dg)"/></g><g transform="rotate(20 23 135)"><ellipse cx="23.0" cy="135.2" rx="2.4" ry="3.7" fill="#b2b2b4"/><ellipse cx="23.2" cy="134.8" rx="2.3" ry="3.5" fill="url(#dg)"/></g><g transform="rotate(18 121 380)"><ellipse cx="121.0" cy="379.8" rx="2.2" ry="3.3" fill="#b2b2b4"/><ellipse cx="121.2" cy="379.5" rx="2.1" ry="3.1" fill="url(#dg)"/></g><g transform="rotate(5 483 59)"><ellipse cx="483.2" cy="58.9" rx="2.1" ry="3.2" fill="#b2b2b4"/><ellipse cx="483.4" cy="58.6" rx="2.0" ry="3.1" fill="url(#dg)"/></g><g transform="rotate(1 50 411)"><ellipse cx="49.4" cy="411.5" rx="3.2" ry="4.0" fill="#b2b2b4"/><ellipse cx="49.7" cy="411.1" rx="3.0" ry="3.8" fill="url(#dg)"/></g><g transform="rotate(13 514 692)"><ellipse cx="514.0" cy="691.8" rx="2.2" ry="3.2" fill="#b2b2b4"/><ellipse cx="514.2" cy="691.5" rx="2.1" ry="3.1" fill="url(#dg)"/></g><g transform="rotate(-9 175 164)"><ellipse cx="174.7" cy="164.0" rx="1.4" ry="2.2" fill="#b2b2b4"/><ellipse cx="174.8" cy="163.8" rx="1.3" ry="2.1" fill="url(#dg)"/></g><g transform="rotate(-9 118 281)"><ellipse cx="118.1" cy="281.0" rx="1.4" ry="2.5" fill="#b2b2b4"/><ellipse cx="118.2" cy="280.8" rx="1.4" ry="2.3" fill="url(#dg)"/></g><g transform="rotate(-14 148 290)"><ellipse cx="148.1" cy="290.6" rx="2.1" ry="3.4" fill="#b2b2b4"/><ellipse cx="148.3" cy="290.3" rx="2.0" ry="3.2" fill="url(#dg)"/></g><g transform="rotate(19 67 254)"><ellipse cx="67.3" cy="254.7" rx="2.3" ry="3.4" fill="#b2b2b4"/><ellipse cx="67.4" cy="254.3" rx="2.2" ry="3.3" fill="url(#dg)"/></g><g transform="rotate(-15 487 92)"><ellipse cx="486.9" cy="92.6" rx="1.4" ry="2.2" fill="#b2b2b4"/><ellipse cx="487.0" cy="92.4" rx="1.4" ry="2.1" fill="url(#dg)"/></g><g transform="rotate(1 475 103)"><ellipse cx="475.3" cy="103.8" rx="2.9" ry="4.7" fill="#b2b2b4"/><ellipse cx="475.5" cy="103.4" rx="2.8" ry="4.5" fill="url(#dg)"/></g><g transform="rotate(7 426 334)"><ellipse cx="425.8" cy="334.2" rx="2.9" ry="3.8" fill="#b2b2b4"/><ellipse cx="426.0" cy="333.8" rx="2.8" ry="3.7" fill="url(#dg)"/></g><g transform="rotate(-7 38 212)"><ellipse cx="37.9" cy="212.5" rx="1.4" ry="2.0" fill="#b2b2b4"/><ellipse cx="38.1" cy="212.3" rx="1.4" ry="1.9" fill="url(#dg)"/></g><g transform="rotate(5 173 298)"><ellipse cx="173.2" cy="297.9" rx="2.7" ry="3.6" fill="#b2b2b4"/><ellipse cx="173.4" cy="297.6" rx="2.6" ry="3.4" fill="url(#dg)"/></g><g transform="rotate(-14 72 57)"><ellipse cx="72.0" cy="57.3" rx="2.3" ry="3.9" fill="#b2b2b4"/><ellipse cx="72.2" cy="56.9" rx="2.2" ry="3.7" fill="url(#dg)"/></g><g transform="rotate(7 291 395)"><ellipse cx="290.8" cy="395.6" rx="2.0" ry="3.4" fill="#b2b2b4"/><ellipse cx="291.0" cy="395.3" rx="1.9" ry="3.2" fill="url(#dg)"/></g><g transform="rotate(-5 230 240)"><ellipse cx="230.1" cy="240.7" rx="3.4" ry="3.9" fill="#b2b2b4"/><ellipse cx="230.3" cy="240.4" rx="3.2" ry="3.7" fill="url(#dg)"/></g><g transform="rotate(13 52 709)"><ellipse cx="51.6" cy="708.8" rx="1.7" ry="2.0" fill="#b2b2b4"/><ellipse cx="51.7" cy="708.6" rx="1.6" ry="1.9" fill="url(#dg)"/></g><g transform="rotate(9 406 575)"><ellipse cx="405.6" cy="575.5" rx="1.6" ry="2.3" fill="#b2b2b4"/><ellipse cx="405.7" cy="575.3" rx="1.5" ry="2.2" fill="url(#dg)"/></g><g transform="rotate(-18 398 697)"><ellipse cx="398.3" cy="696.8" rx="1.6" ry="1.9" fill="#b2b2b4"/><ellipse cx="398.4" cy="696.6" rx="1.5" ry="1.8" fill="url(#dg)"/></g><g transform="rotate(-19 485 125)"><ellipse cx="485.0" cy="125.5" rx="1.7" ry="2.2" fill="#b2b2b4"/><ellipse cx="485.2" cy="125.3" rx="1.6" ry="2.1" fill="url(#dg)"/></g><g transform="rotate(-11 119 389)"><ellipse cx="118.7" cy="388.8" rx="2.8" ry="3.4" fill="#b2b2b4"/><ellipse cx="118.9" cy="388.5" rx="2.6" ry="3.2" fill="url(#dg)"/></g><g transform="rotate(18 382 698)"><ellipse cx="381.8" cy="698.3" rx="1.7" ry="2.7" fill="#b2b2b4"/><ellipse cx="381.9" cy="698.0" rx="1.6" ry="2.6" fill="url(#dg)"/></g><g transform="rotate(19 368 237)"><ellipse cx="368.0" cy="237.2" rx="3.1" ry="5.4" fill="#b2b2b4"/><ellipse cx="368.2" cy="236.7" rx="3.0" ry="5.1" fill="url(#dg)"/></g><g transform="rotate(-8 466 73)"><ellipse cx="465.9" cy="73.2" rx="3.3" ry="5.2" fill="#b2b2b4"/><ellipse cx="466.1" cy="72.7" rx="3.1" ry="5.0" fill="url(#dg)"/></g><g transform="rotate(-18 127 468)"><ellipse cx="127.4" cy="468.6" rx="1.4" ry="2.4" fill="#b2b2b4"/><ellipse cx="127.5" cy="468.4" rx="1.3" ry="2.3" fill="url(#dg)"/></g><g transform="rotate(9 459 485)"><ellipse cx="458.3" cy="485.1" rx="3.3" ry="5.1" fill="#b2b2b4"/><ellipse cx="458.6" cy="484.6" rx="3.1" ry="4.9" fill="url(#dg)"/></g><g transform="rotate(-0 247 435)"><ellipse cx="247.2" cy="435.5" rx="1.6" ry="2.0" fill="#b2b2b4"/><ellipse cx="247.4" cy="435.3" rx="1.5" ry="1.9" fill="url(#dg)"/></g><g transform="rotate(-1 145 605)"><ellipse cx="144.9" cy="605.0" rx="1.5" ry="2.4" fill="#b2b2b4"/><ellipse cx="145.0" cy="604.8" rx="1.4" ry="2.3" fill="url(#dg)"/></g><g transform="rotate(9 181 530)"><ellipse cx="181.2" cy="530.2" rx="1.7" ry="2.5" fill="#b2b2b4"/><ellipse cx="181.3" cy="529.9" rx="1.6" ry="2.4" fill="url(#dg)"/></g><g transform="rotate(11 249 97)"><ellipse cx="249.0" cy="97.6" rx="2.7" ry="3.3" fill="#b2b2b4"/><ellipse cx="249.2" cy="97.3" rx="2.6" ry="3.1" fill="url(#dg)"/></g><g transform="rotate(-15 42 362)"><ellipse cx="41.4" cy="362.4" rx="1.7" ry="2.1" fill="#b2b2b4"/><ellipse cx="41.5" cy="362.2" rx="1.6" ry="2.0" fill="url(#dg)"/></g><g transform="rotate(16 366 418)"><ellipse cx="366.2" cy="418.8" rx="2.2" ry="3.2" fill="#b2b2b4"/><ellipse cx="366.3" cy="418.5" rx="2.1" ry="3.0" fill="url(#dg)"/></g><g transform="rotate(-14 526 65)"><ellipse cx="525.7" cy="65.2" rx="3.2" ry="3.7" fill="#b2b2b4"/><ellipse cx="526.0" cy="64.9" rx="3.0" ry="3.5" fill="url(#dg)"/></g><g transform="rotate(2 72 391)"><ellipse cx="72.1" cy="391.4" rx="2.5" ry="3.6" fill="#b2b2b4"/><ellipse cx="72.3" cy="391.1" rx="2.4" ry="3.4" fill="url(#dg)"/></g><g transform="rotate(11 87 549)"><ellipse cx="86.8" cy="549.0" rx="2.3" ry="3.4" fill="#b2b2b4"/><ellipse cx="87.0" cy="548.6" rx="2.2" ry="3.2" fill="url(#dg)"/></g><g transform="rotate(-13 511 343)"><ellipse cx="511.1" cy="343.4" rx="1.9" ry="2.3" fill="#b2b2b4"/><ellipse cx="511.2" cy="343.1" rx="1.8" ry="2.2" fill="url(#dg)"/></g><g transform="rotate(19 221 602)"><ellipse cx="220.9" cy="602.4" rx="2.1" ry="3.2" fill="#b2b2b4"/><ellipse cx="221.1" cy="602.1" rx="2.0" ry="3.0" fill="url(#dg)"/></g><g transform="rotate(11 146 322)"><ellipse cx="145.4" cy="321.9" rx="1.5" ry="2.1" fill="#b2b2b4"/><ellipse cx="145.6" cy="321.7" rx="1.5" ry="2.0" fill="url(#dg)"/></g><g transform="rotate(-1 34 371)"><ellipse cx="33.6" cy="371.3" rx="1.4" ry="2.5" fill="#b2b2b4"/><ellipse cx="33.7" cy="371.0" rx="1.4" ry="2.4" fill="url(#dg)"/></g><g transform="rotate(-0 400 419)"><ellipse cx="400.1" cy="419.3" rx="1.6" ry="2.4" fill="#b2b2b4"/><ellipse cx="400.2" cy="419.1" rx="1.5" ry="2.3" fill="url(#dg)"/></g><g transform="rotate(6 135 333)"><ellipse cx="135.3" cy="332.7" rx="1.6" ry="1.9" fill="#b2b2b4"/><ellipse cx="135.5" cy="332.5" rx="1.5" ry="1.8" fill="url(#dg)"/></g><g transform="rotate(-11 11 150)"><ellipse cx="11.2" cy="150.0" rx="2.3" ry="2.8" fill="#b2b2b4"/><ellipse cx="11.4" cy="149.7" rx="2.2" ry="2.6" fill="url(#dg)"/></g><g transform="rotate(-17 245 133)"><ellipse cx="245.1" cy="134.0" rx="4.2" ry="5.9" fill="#b2b2b4"/><ellipse cx="245.4" cy="133.4" rx="4.0" ry="5.6" fill="url(#dg)"/></g><g transform="rotate(24 501 526)"><ellipse cx="501.0" cy="527.0" rx="5.2" ry="7.7" fill="#b2b2b4"/><ellipse cx="501.4" cy="526.2" rx="4.9" ry="7.3" fill="url(#dg)"/></g><g transform="rotate(-1 199 278)"><ellipse cx="198.2" cy="278.4" rx="4.6" ry="6.7" fill="#b2b2b4"/><ellipse cx="198.6" cy="277.8" rx="4.4" ry="6.4" fill="url(#dg)"/></g><g transform="rotate(-24 365 12)"><ellipse cx="364.2" cy="12.2" rx="4.0" ry="5.7" fill="#b2b2b4"/><ellipse cx="364.5" cy="11.6" rx="3.8" ry="5.5" fill="url(#dg)"/></g><g transform="rotate(5 499 263)"><ellipse cx="498.9" cy="263.5" rx="5.5" ry="9.1" fill="#b2b2b4"/><ellipse cx="499.3" cy="262.6" rx="5.2" ry="8.7" fill="url(#dg)"/></g><g transform="rotate(10 507 109)"><ellipse cx="506.9" cy="109.6" rx="5.4" ry="7.5" fill="#b2b2b4"/><ellipse cx="507.4" cy="108.9" rx="5.2" ry="7.1" fill="url(#dg)"/></g><g transform="rotate(-24 20 443)"><ellipse cx="20.0" cy="443.5" rx="3.9" ry="4.9" fill="#b2b2b4"/><ellipse cx="20.3" cy="443.1" rx="3.7" ry="4.7" fill="url(#dg)"/></g><g transform="rotate(9 97 378)"><ellipse cx="97.0" cy="378.8" rx="4.8" ry="5.9" fill="#b2b2b4"/><ellipse cx="97.4" cy="378.2" rx="4.6" ry="5.6" fill="url(#dg)"/></g><g transform="rotate(20 496 698)"><ellipse cx="495.1" cy="698.6" rx="6.0" ry="7.5" fill="#b2b2b4"/><ellipse cx="495.6" cy="697.9" rx="5.8" ry="7.2" fill="url(#dg)"/></g><g transform="rotate(21 2 23)"><ellipse cx="2.0" cy="23.8" rx="6.0" ry="8.7" fill="#b2b2b4"/><ellipse cx="2.5" cy="23.0" rx="5.7" ry="8.3" fill="url(#dg)"/></g><g transform="rotate(-14 514 581)"><ellipse cx="514.1" cy="581.2" rx="4.0" ry="5.8" fill="#b2b2b4"/><ellipse cx="514.4" cy="580.6" rx="3.8" ry="5.5" fill="url(#dg)"/></g><g transform="rotate(-25 202 288)"><ellipse cx="201.4" cy="288.3" rx="5.8" ry="8.8" fill="#b2b2b4"/><ellipse cx="201.9" cy="287.5" rx="5.5" ry="8.4" fill="url(#dg)"/></g><g transform="rotate(14 185 203)"><ellipse cx="184.8" cy="203.8" rx="4.0" ry="5.3" fill="#b2b2b4"/><ellipse cx="185.2" cy="203.3" rx="3.8" ry="5.1" fill="url(#dg)"/></g><g transform="rotate(-22 355 413)"><ellipse cx="354.6" cy="413.4" rx="4.7" ry="6.4" fill="#b2b2b4"/><ellipse cx="355.0" cy="412.8" rx="4.5" ry="6.1" fill="url(#dg)"/></g><g transform="rotate(4 349 46)"><ellipse cx="349.1" cy="46.4" rx="5.1" ry="7.7" fill="#b2b2b4"/><ellipse cx="349.5" cy="45.6" rx="4.8" ry="7.3" fill="url(#dg)"/></g><g transform="rotate(-1 327 207)"><ellipse cx="326.1" cy="208.0" rx="5.0" ry="7.7" fill="#b2b2b4"/><ellipse cx="326.5" cy="207.3" rx="4.7" ry="7.4" fill="url(#dg)"/></g><g transform="rotate(10 163 321)"><ellipse cx="163.0" cy="321.8" rx="4.1" ry="6.7" fill="#b2b2b4"/><ellipse cx="163.3" cy="321.1" rx="3.9" ry="6.4" fill="url(#dg)"/></g><g transform="rotate(25 237 620)"><ellipse cx="236.6" cy="621.0" rx="5.0" ry="6.2" fill="#b2b2b4"/><ellipse cx="237.0" cy="620.4" rx="4.7" ry="5.9" fill="url(#dg)"/></g><g transform="rotate(-24 153 516)"><ellipse cx="152.3" cy="516.2" rx="4.5" ry="5.9" fill="#b2b2b4"/><ellipse cx="152.7" cy="515.6" rx="4.3" ry="5.6" fill="url(#dg)"/></g><g transform="rotate(1 277 82)"><ellipse cx="276.7" cy="82.4" rx="5.8" ry="7.6" fill="#b2b2b4"/><ellipse cx="277.2" cy="81.7" rx="5.5" ry="7.2" fill="url(#dg)"/></g><g transform="rotate(-11 147 491)"><ellipse cx="146.7" cy="491.6" rx="6.0" ry="7.9" fill="#b2b2b4"/><ellipse cx="147.2" cy="490.9" rx="5.7" ry="7.5" fill="url(#dg)"/></g><g transform="rotate(-10 295 423)"><ellipse cx="294.6" cy="423.8" rx="5.5" ry="8.4" fill="#b2b2b4"/><ellipse cx="295.0" cy="423.1" rx="5.2" ry="8.0" fill="url(#dg)"/></g><g transform="rotate(-15 272 459)"><ellipse cx="271.5" cy="459.7" rx="3.7" ry="6.2" fill="#b2b2b4"/><ellipse cx="271.8" cy="459.1" rx="3.5" ry="5.9" fill="url(#dg)"/></g><g transform="rotate(6 540 32)"><ellipse cx="539.3" cy="32.8" rx="6.1" ry="9.3" fill="#b2b2b4"/><ellipse cx="539.8" cy="31.9" rx="5.9" ry="8.8" fill="url(#dg)"/></g><g transform="rotate(-2 94 100)"><ellipse cx="93.7" cy="101.1" rx="5.2" ry="7.3" fill="#b2b2b4"/><ellipse cx="94.1" cy="100.4" rx="4.9" ry="6.9" fill="url(#dg)"/></g><g transform="rotate(-13 104 135)"><ellipse cx="103.9" cy="136.1" rx="5.6" ry="7.3" fill="#b2b2b4"/><ellipse cx="104.4" cy="135.4" rx="5.3" ry="7.0" fill="url(#dg)"/></g><g transform="rotate(13 443 325)"><ellipse cx="442.3" cy="326.2" rx="6.2" ry="10.4" fill="#b2b2b4"/><ellipse cx="442.8" cy="325.2" rx="5.9" ry="9.9" fill="url(#dg)"/></g><g transform="rotate(-19 389 110)"><ellipse cx="389.0" cy="110.7" rx="4.6" ry="6.0" fill="#b2b2b4"/><ellipse cx="389.3" cy="110.2" rx="4.4" ry="5.7" fill="url(#dg)"/></g><g transform="rotate(8 397 538)"><ellipse cx="396.5" cy="538.9" rx="4.2" ry="5.4" fill="#b2b2b4"/><ellipse cx="396.8" cy="538.4" rx="4.0" ry="5.1" fill="url(#dg)"/></g><g transform="rotate(25 360 364)"><ellipse cx="359.6" cy="365.2" rx="5.5" ry="7.7" fill="#b2b2b4"/><ellipse cx="360.0" cy="364.5" rx="5.2" ry="7.4" fill="url(#dg)"/></g><g transform="rotate(7 201 667)"><ellipse cx="200.9" cy="668.2" rx="5.9" ry="8.0" fill="#b2b2b4"/><ellipse cx="201.4" cy="667.4" rx="5.6" ry="7.6" fill="url(#dg)"/></g><g transform="rotate(-2 398 197)"><ellipse cx="398.0" cy="197.3" rx="5.5" ry="7.5" fill="#b2b2b4"/><ellipse cx="398.4" cy="196.6" rx="5.3" ry="7.2" fill="url(#dg)"/></g><g transform="rotate(-8 177 457)"><ellipse cx="176.6" cy="457.4" rx="4.0" ry="6.2" fill="#b2b2b4"/><ellipse cx="176.9" cy="456.8" rx="3.8" ry="5.9" fill="url(#dg)"/></g><g transform="rotate(16 443 278)"><ellipse cx="442.3" cy="278.5" rx="4.8" ry="6.0" fill="#b2b2b4"/><ellipse cx="442.6" cy="277.9" rx="4.5" ry="5.7" fill="url(#dg)"/></g><g transform="rotate(3 521 603)"><ellipse cx="520.8" cy="603.1" rx="4.7" ry="6.1" fill="#b2b2b4"/><ellipse cx="521.1" cy="602.6" rx="4.5" ry="5.8" fill="url(#dg)"/></g><g transform="rotate(-7 50 126)"><ellipse cx="49.7" cy="126.4" rx="5.1" ry="6.7" fill="#b2b2b4"/><ellipse cx="50.1" cy="125.7" rx="4.9" ry="6.4" fill="url(#dg)"/></g><g transform="rotate(-16 91 187)"><ellipse cx="90.5" cy="187.6" rx="5.5" ry="8.4" fill="#b2b2b4"/><ellipse cx="90.9" cy="186.8" rx="5.2" ry="8.0" fill="url(#dg)"/></g><g transform="rotate(-25 17 651)"><ellipse cx="16.2" cy="652.3" rx="5.7" ry="9.5" fill="#b2b2b4"/><ellipse cx="16.6" cy="651.4" rx="5.5" ry="9.0" fill="url(#dg)"/></g><g transform="rotate(2 121 489)"><ellipse cx="120.3" cy="489.7" rx="5.3" ry="6.6" fill="#b2b2b4"/><ellipse cx="120.7" cy="489.0" rx="5.1" ry="6.3" fill="url(#dg)"/></g><g transform="rotate(5 287 94)"><ellipse cx="286.3" cy="95.2" rx="5.7" ry="9.1" fill="#b2b2b4"/><ellipse cx="286.7" cy="94.3" rx="5.5" ry="8.7" fill="url(#dg)"/></g><g transform="rotate(-8 355 50)"><ellipse cx="354.7" cy="50.9" rx="4.0" ry="6.2" fill="#b2b2b4"/><ellipse cx="355.0" cy="50.3" rx="3.8" ry="6.0" fill="url(#dg)"/></g><g transform="rotate(-10 425 287)"><ellipse cx="424.8" cy="287.5" rx="6.0" ry="8.1" fill="#b2b2b4"/><ellipse cx="425.2" cy="286.7" rx="5.7" ry="7.7" fill="url(#dg)"/></g><g transform="rotate(-4 169 439)"><ellipse cx="168.9" cy="439.2" rx="4.7" ry="6.6" fill="#b2b2b4"/><ellipse cx="169.2" cy="438.6" rx="4.5" ry="6.3" fill="url(#dg)"/></g><g transform="rotate(13 176 455)"><ellipse cx="175.4" cy="455.4" rx="4.7" ry="6.5" fill="#b2b2b4"/><ellipse cx="175.8" cy="454.8" rx="4.5" ry="6.1" fill="url(#dg)"/></g><g transform="rotate(1 34 82)"><ellipse cx="33.7" cy="82.2" rx="5.2" ry="7.0" fill="#b2b2b4"/><ellipse cx="34.1" cy="81.6" rx="4.9" ry="6.6" fill="url(#dg)"/></g><g transform="rotate(15 300 257)"><ellipse cx="299.5" cy="257.8" rx="5.5" ry="7.9" fill="#b2b2b4"/><ellipse cx="299.9" cy="257.1" rx="5.3" ry="7.5" fill="url(#dg)"/></g><g transform="rotate(-6 72 651)"><ellipse cx="71.2" cy="651.3" rx="4.5" ry="7.7" fill="#b2b2b4"/><ellipse cx="71.5" cy="650.5" rx="4.3" ry="7.3" fill="url(#dg)"/></g><g transform="rotate(18 289 557)"><ellipse cx="288.3" cy="557.6" rx="4.0" ry="6.5" fill="#b2b2b4"/><ellipse cx="288.6" cy="557.0" rx="3.8" ry="6.2" fill="url(#dg)"/></g><g transform="rotate(18 309 685)"><ellipse cx="308.2" cy="685.1" rx="4.0" ry="5.1" fill="#b2b2b4"/><ellipse cx="308.5" cy="684.6" rx="3.9" ry="4.8" fill="url(#dg)"/></g><g transform="rotate(-17 158 269)"><ellipse cx="157.2" cy="270.0" rx="3.9" ry="5.8" fill="#b2b2b4"/><ellipse cx="157.5" cy="269.4" rx="3.7" ry="5.5" fill="url(#dg)"/></g><g transform="rotate(24 459 51)"><ellipse cx="458.6" cy="52.0" rx="4.6" ry="6.2" fill="#b2b2b4"/><ellipse cx="458.9" cy="51.4" rx="4.4" ry="5.9" fill="url(#dg)"/></g><g transform="rotate(12 295 197)"><ellipse cx="294.2" cy="197.0" rx="3.8" ry="5.0" fill="#b2b2b4"/><ellipse cx="294.5" cy="196.6" rx="3.6" ry="4.8" fill="url(#dg)"/></g><g transform="rotate(23 187 65)"><ellipse cx="186.2" cy="66.1" rx="5.0" ry="8.1" fill="#b2b2b4"/><ellipse cx="186.6" cy="65.4" rx="4.7" ry="7.7" fill="url(#dg)"/></g><g transform="rotate(-0 503 332)"><ellipse cx="502.8" cy="332.5" rx="5.4" ry="7.4" fill="#b2b2b4"/><ellipse cx="503.2" cy="331.8" rx="5.1" ry="7.0" fill="url(#dg)"/></g><g transform="rotate(1 187 185)"><ellipse cx="186.8" cy="185.6" rx="5.6" ry="7.2" fill="#b2b2b4"/><ellipse cx="187.2" cy="184.9" rx="5.4" ry="6.8" fill="url(#dg)"/></g><g transform="rotate(4 431 114)"><ellipse cx="430.7" cy="115.1" rx="4.3" ry="6.7" fill="#b2b2b4"/><ellipse cx="431.0" cy="114.4" rx="4.1" ry="6.4" fill="url(#dg)"/></g><g transform="rotate(-9 10 506)"><ellipse cx="9.8" cy="507.3" rx="5.5" ry="8.2" fill="#b2b2b4"/><ellipse cx="10.2" cy="506.5" rx="5.2" ry="7.8" fill="url(#dg)"/></g><g transform="rotate(15 253 376)"><ellipse cx="252.7" cy="376.8" rx="4.1" ry="7.0" fill="#b2b2b4"/><ellipse cx="253.0" cy="376.1" rx="3.9" ry="6.7" fill="url(#dg)"/></g><g transform="rotate(5 70 658)"><ellipse cx="70.0" cy="658.1" rx="4.5" ry="6.0" fill="#b2b2b4"/><ellipse cx="70.3" cy="657.5" rx="4.3" ry="5.7" fill="url(#dg)"/></g><g transform="rotate(-18 432 695)"><ellipse cx="432.0" cy="695.4" rx="5.4" ry="7.9" fill="#b2b2b4"/><ellipse cx="432.5" cy="694.6" rx="5.2" ry="7.5" fill="url(#dg)"/></g><g transform="rotate(-30 466 152)"><ellipse cx="464.5" cy="154.6" rx="19.9" ry="27.3" fill="#b2b2b4"/><ellipse cx="466.0" cy="152.0" rx="19.0" ry="26.0" fill="url(#dg)"/></g><g transform="rotate(0 518 69)"><ellipse cx="517.3" cy="70.3" rx="8.9" ry="13.7" fill="#b2b2b4"/><ellipse cx="518.0" cy="69.0" rx="8.5" ry="13.0" fill="url(#dg)"/></g><g transform="rotate(0 528 174)"><ellipse cx="527.2" cy="175.2" rx="10.5" ry="13.1" fill="#b2b2b4"/><ellipse cx="528.0" cy="174.0" rx="10.0" ry="12.5" fill="url(#dg)"/></g><g transform="rotate(10 460 371)"><ellipse cx="459.0" cy="372.1" rx="13.7" ry="11.6" fill="#b2b2b4"/><ellipse cx="460.0" cy="371.0" rx="13.0" ry="11.0" fill="url(#dg)"/></g><g transform="rotate(-10 484 371)"><ellipse cx="483.0" cy="371.9" rx="12.6" ry="9.5" fill="#b2b2b4"/><ellipse cx="484.0" cy="371.0" rx="12.0" ry="9.0" fill="url(#dg)"/></g><g transform="rotate(-15 513 436)"><ellipse cx="512.0" cy="438.5" rx="12.6" ry="26.2" fill="#b2b2b4"/><ellipse cx="513.0" cy="436.0" rx="12.0" ry="25.0" fill="url(#dg)"/></g><g transform="rotate(0 451 476)"><ellipse cx="449.8" cy="477.9" rx="15.8" ry="19.9" fill="#b2b2b4"/><ellipse cx="451.0" cy="476.0" rx="15.0" ry="19.0" fill="url(#dg)"/></g><g transform="rotate(0 545 414)"><ellipse cx="544.3" cy="416.0" rx="9.5" ry="21.0" fill="#b2b2b4"/><ellipse cx="545.0" cy="414.0" rx="9.0" ry="20.0" fill="url(#dg)"/></g><g transform="rotate(-20 72 523)"><ellipse cx="71.0" cy="525.1" rx="13.7" ry="22.1" fill="#b2b2b4"/><ellipse cx="72.0" cy="523.0" rx="13.0" ry="21.0" fill="url(#dg)"/></g><g transform="rotate(0 104 393)"><ellipse cx="103.3" cy="394.7" rx="8.9" ry="17.9" fill="#b2b2b4"/><ellipse cx="104.0" cy="393.0" rx="8.5" ry="17.0" fill="url(#dg)"/></g><g transform="rotate(0 176 246)"><ellipse cx="175.5" cy="247.3" rx="6.3" ry="13.7" fill="#b2b2b4"/><ellipse cx="176.0" cy="246.0" rx="6.0" ry="13.0" fill="url(#dg)"/></g><g transform="rotate(0 109 578)"><ellipse cx="108.4" cy="579.6" rx="7.4" ry="16.8" fill="#b2b2b4"/><ellipse cx="109.0" cy="578.0" rx="7.0" ry="16.0" fill="url(#dg)"/></g><g transform="rotate(0 401 565)"><ellipse cx="400.4" cy="566.6" rx="8.4" ry="16.8" fill="#b2b2b4"/><ellipse cx="401.0" cy="565.0" rx="8.0" ry="16.0" fill="url(#dg)"/></g><g transform="rotate(0 513 575)"><ellipse cx="512.2" cy="576.4" rx="10.0" ry="14.7" fill="#b2b2b4"/><ellipse cx="513.0" cy="575.0" rx="9.5" ry="14.0" fill="url(#dg)"/></g><g transform="rotate(20 316 191)"><ellipse cx="315.3" cy="191.9" rx="9.5" ry="9.5" fill="#b2b2b4"/><ellipse cx="316.0" cy="191.0" rx="9.0" ry="9.0" fill="url(#dg)"/></g><g transform="rotate(0 348 216)"><ellipse cx="347.4" cy="217.0" rx="7.4" ry="10.5" fill="#b2b2b4"/><ellipse cx="348.0" cy="216.0" rx="7.0" ry="10.0" fill="url(#dg)"/></g><g transform="rotate(0 250 30)"><ellipse cx="249.6" cy="30.8" rx="5.2" ry="8.4" fill="#b2b2b4"/><ellipse cx="250.0" cy="30.0" rx="5.0" ry="8.0" fill="url(#dg)"/></g><g transform="rotate(0 395 45)"><ellipse cx="394.5" cy="45.9" rx="6.3" ry="9.5" fill="#b2b2b4"/><ellipse cx="395.0" cy="45.0" rx="6.0" ry="9.0" fill="url(#dg)"/></g><g transform="rotate(0 320 680)"><ellipse cx="319.3" cy="681.2" rx="9.5" ry="12.6" fill="#b2b2b4"/><ellipse cx="320.0" cy="680.0" rx="9.0" ry="12.0" fill="url(#dg)"/></g><g transform="rotate(0 230 700)"><ellipse cx="229.4" cy="701.0" rx="7.4" ry="10.5" fill="#b2b2b4"/><ellipse cx="230.0" cy="700.0" rx="7.0" ry="10.0" fill="url(#dg)"/></g><g transform="rotate(0 30 640)"><ellipse cx="29.4" cy="641.1" rx="8.4" ry="11.6" fill="#b2b2b4"/><ellipse cx="30.0" cy="640.0" rx="8.0" ry="11.0" fill="url(#dg)"/></g><g transform="rotate(0 420 330)"><ellipse cx="419.5" cy="330.9" rx="6.3" ry="9.5" fill="#b2b2b4"/><ellipse cx="420.0" cy="330.0" rx="6.0" ry="9.0" fill="url(#dg)"/></g></svg>
<div class="a" style="left:1117px;top:1141px;width:547px;height:716px;background:#ff0000;"></div>
<div class="a" style="left:1117px;top:1856px;width:547px;height:2px;background:#3d8af7;"></div>
<div class="a" style="left:1663px;top:1141px;width:1.5px;height:716px;background:#3d8af7;"></div>
<svg class="a" style="left:1100px;top:1130px;" width="590" height="740" viewBox="0 0 590 740"><rect x="14" y="14.5" width="554" height="705.5" rx="9" ry="9" fill="none" stroke="#ff00ff" stroke-width="7.8"/></svg>
<div class="a" style="left:1112px;top:1852px;width:10px;height:10px;background:#3d8af7;"></div>
<div class="a" style="left:1114.5px;top:1854px;width:5px;height:5px;background:#ffffff;"></div>
<div class="a" style="left:1659px;top:1852px;width:10px;height:10px;background:#3d8af7;"></div>
<div class="a" style="left:1661.5px;top:1854px;width:5px;height:5px;background:#ffffff;"></div>
<div class="a" style="left:1112px;top:1140px;width:10px;height:10px;background:#3d8af7;"></div>
<div class="a" style="left:1659px;top:1140px;width:10px;height:10px;background:#3d8af7;"></div>
<div class="a" style="left:1386px;top:1147px;width:10px;height:3px;background:#3d8af7;"></div>
<svg class="a" style="left:1100px;top:1130px;" width="590" height="740" viewBox="0 0 590 740"><path d="M14 40 L14 23.5 Q14 14.5 23 14.5 L559 14.5 Q568 14.5 568 23.5 L568 40" fill="none" stroke="#ff00ff" stroke-width="7.8"/></svg>
<div class="a" style="left:1388px;top:1498px;width:5px;height:5px;background:#3d8af7;"></div>
<div class="a" style="left:1389.5px;top:1499.5px;width:2px;height:2px;background:#ff5555;"></div>
<svg class="a" style="left:540px;top:300px;" width="900" height="880" viewBox="0 0 900 880"><path d="M4 16 L697 16 C782 16 850.5 90 850.5 174 L850.5 770" fill="none" stroke="#ff00ff" stroke-width="7.6"/><path d="M821 757 L851 772.5 L881 757 L851 825 Z" fill="#ff00ff"/><circle cx="851" cy="844.5" r="15.5" fill="none" stroke="#ff00ff" stroke-width="7"/></svg>
<div class="a" style="left:47.0px;top:162px;width:2px;height:9px;background:#333333;"></div>
<div class="a" style="left:50.9px;top:162px;width:2px;height:9px;background:#333333;"></div>
<div class="a" style="left:54.8px;top:162px;width:2px;height:9px;background:#333333;"></div>
<div class="a" style="left:58.7px;top:162px;width:2px;height:9px;background:#333333;"></div>
<div class="a" style="left:62.6px;top:162px;width:2px;height:9px;background:#333333;"></div>
<div class="a" style="left:66.5px;top:162px;width:2px;height:9px;background:#333333;"></div>
<div class="a" style="left:70.4px;top:162px;width:2px;height:9px;background:#333333;"></div>
<div class="a" style="left:74.3px;top:162px;width:2px;height:9px;background:#333333;"></div>
<div class="a" style="left:78.2px;top:162px;width:2px;height:9px;background:#333333;"></div>
<div class="a" style="left:82.1px;top:162px;width:2px;height:9px;background:#333333;"></div>
<svg class="a" style="left:24px;top:202px;" width="30" height="40" viewBox="0 0 30 40"><path d="M3 3 L3 35 L12.5 25 L27 25 Z" fill="none" stroke="#c6c6c6" stroke-width="2.2" stroke-linejoin="miter"/></svg>
<svg class="a" style="left:86px;top:202px;" width="30" height="40" viewBox="0 0 30 40"><path d="M1 2 L1 36 L12 26 L25 26 Z" fill="#c6c6c6"/></svg>
<svg class="a" style="left:116px;top:233px;" width="8" height="8" viewBox="0 0 8 8"><path d="M0 7 L7 0 L7 7 Z" fill="#c6c6c6"/></svg>
<svg class="a" style="left:18px;top:252px;" width="40" height="36" viewBox="0 0 40 36"><path d="M4 30 L26 10" stroke="#c6c6c6" stroke-width="3.6"/><path d="M12 3 L13.6 6.4 L17 8 L13.6 9.6 L12 13 L10.4 9.6 L7 8 L10.4 6.4 Z" fill="#c6c6c6"/><path d="M29 1 L30.3 3.7 L33 5 L30.3 6.3 L29 9 L27.7 6.3 L25 5 L27.7 3.7 Z" fill="#c6c6c6"/><path d="M31 13 L32 15 L34 16 L32 17 L31 19 L30 17 L28 16 L30 15 Z" fill="#c6c6c6"/></svg>
<svg class="a" style="left:78px;top:250px;" width="42" height="40" viewBox="0 0 42 40"><path d="M20 22 C2 20 2 5 17 4 C30 3 36 9 33 16" fill="none" stroke="#c6c6c6" stroke-width="2"/><path d="M12 22 C8 26 14 30 16 26 C18 22 10 22 12 30 C13 34 9 35 8 36" fill="none" stroke="#c6c6c6" stroke-width="2"/><path d="M19.6 8 L19.6 36 L27 28.5 L38 28.5 Z" fill="#c6c6c6"/></svg>
<div class="a" style="left:9px;top:294px;width:53px;height:44px;background:#2e2e2e;border-radius:5px"></div>
<svg class="a" style="left:17.8px;top:300.8px;" width="32" height="32" viewBox="0 0 32 32"><polygon points="22.65,0.00 32.00,9.35 25.89,15.46 16.54,6.11" fill="#c6c6c6"/><polygon points="14.89,7.77 24.23,17.11 19.06,26.61 0.00,32.00 5.39,12.94" fill="#c6c6c6"/><polyline points="0.00,32.00 9.35,22.65" stroke="#2e2e2e" stroke-width="1.63" fill="none"/><circle cx="10.07" cy="21.93" r="2.34" fill="#2e2e2e"/></svg>
<svg class="a" style="left:53px;top:329px;" width="8" height="8" viewBox="0 0 8 8"><path d="M0 7 L7 0 L7 7 Z" fill="#c6c6c6"/></svg>
<svg class="a" style="left:0px;top:282px;" width="560" height="70" viewBox="0 0 560 70"><rect x="4.5" y="8" width="58" height="52" rx="9" fill="none" stroke="#ff00ff" stroke-width="8"/><rect x="66" y="8" width="474" height="52" rx="9" fill="none" stroke="#ff00ff" stroke-width="8"/></svg>
<svg class="a" style="left:20px;top:349px;" width="34" height="34" viewBox="0 0 34 34"><path d="M3 9 L3 3 L30 3 L30 9 M16.5 3 L16.5 30 M10 30 L23 30" fill="none" stroke="#c6c6c6" stroke-width="3.2"/></svg>
<svg class="a" style="left:56px;top:379px;" width="8" height="8" viewBox="0 0 8 8"><path d="M0 7 L7 0 L7 7 Z" fill="#c6c6c6"/></svg>
<svg class="a" style="left:20px;top:399px;" width="34" height="30" viewBox="0 0 34 30"><defs><linearGradient id="rg" x1="0" y1="0" x2="1" y2="1"><stop offset="0" stop-color="#5c5c5c"/><stop offset="1" stop-color="#6e6e6e"/></linearGradient></defs><rect x="1.5" y="1.5" width="30" height="26" fill="url(#rg)" stroke="#c6c6c6" stroke-width="2.6"/></svg>
<svg class="a" style="left:56px;top:428px;" width="8" height="8" viewBox="0 0 8 8"><path d="M0 7 L7 0 L7 7 Z" fill="#c6c6c6"/></svg>
<svg class="a" style="left:19px;top:445px;" width="36" height="36" viewBox="0 0 36 36"><path d="M2 33 L5 24 L23 6 L30 13 L12 31 Z" fill="#c6c6c6"/><path d="M22 5 L26 1 L33 8 L29 12 Z" fill="#c6c6c6"/><path d="M4 31 L6 26 L9 29 Z" fill="#535353"/></svg>
<svg class="a" style="left:56px;top:476px;" width="8" height="8" viewBox="0 0 8 8"><path d="M0 7 L7 0 L7 7 Z" fill="#c6c6c6"/></svg>
<svg class="a" style="left:16px;top:494px;" width="42" height="34" viewBox="0 0 42 34"><path d="M3 4 L3 26 L13.5 15 Z" fill="none" stroke="#c6c6c6" stroke-width="2"/><path d="M19 2 L19 31" stroke="#c6c6c6" stroke-width="2" stroke-dasharray="2 2"/><path d="M37 4 L37 26 L24 15 Z" fill="#c6c6c6"/></svg>
<svg class="a" style="left:56px;top:524px;" width="8" height="8" viewBox="0 0 8 8"><path d="M0 7 L7 0 L7 7 Z" fill="#c6c6c6"/></svg>
<svg class="a" style="left:78px;top:492px;" width="40" height="38" viewBox="0 0 40 38"><path d="M9 6 L24 6 M20 2 L25 6 L20 10" stroke="#c6c6c6" stroke-width="2" fill="none"/><rect x="3.5" y="14.5" width="13" height="20" fill="none" stroke="#c6c6c6" stroke-width="2"/><path d="M10 35 L25 35 L37 13 L22 13 Z" fill="#c6c6c6"/></svg>
<svg class="a" style="left:116px;top:524px;" width="8" height="8" viewBox="0 0 8 8"><path d="M0 7 L7 0 L7 7 Z" fill="#c6c6c6"/></svg>
<svg class="a" style="left:18px;top:544px;" width="40" height="36" viewBox="0 0 40 36"><path d="M8 2 L37 2 L37 24 L22 24 C22 12 8 14 8 22 C8 28 14 28 14 26 C17 24 14 20 11 24 C13 30 20 32 21 28 C18 36 4 34 3 24 C2 16 6 12 8 12 Z" fill="#c6c6c6"/></svg>
<svg class="a" style="left:56px;top:573px;" width="8" height="8" viewBox="0 0 8 8"><path d="M0 7 L7 0 L7 7 Z" fill="#c6c6c6"/></svg>
<svg class="a" style="left:77px;top:540px;" width="44" height="38" viewBox="0 0 44 38"><path d="M2 1 L2 30 L21 21 Z" fill="#c6c6c6"/><path d="M13 7 L39 7 L39 33 L13 33 L13 22" fill="none" stroke="#c6c6c6" stroke-width="2.4"/><rect x="11" y="5" width="4" height="4" fill="#c6c6c6"/><rect x="24" y="5" width="4" height="4" fill="#c6c6c6"/><rect x="37" y="5" width="4" height="4" fill="#c6c6c6"/><rect x="37" y="18" width="4" height="4" fill="#c6c6c6"/><rect x="11" y="31" width="4" height="4" fill="#c6c6c6"/><rect x="24" y="31" width="4" height="4" fill="#c6c6c6"/><rect x="37" y="31" width="4" height="4" fill="#c6c6c6"/></svg>
<svg class="a" style="left:116px;top:573px;" width="8" height="8" viewBox="0 0 8 8"><path d="M0 7 L7 0 L7 7 Z" fill="#c6c6c6"/></svg>
<svg class="a" style="left:17px;top:590px;" width="44" height="38" viewBox="0 0 44 38"><circle cx="10" cy="15" r="8.5" fill="none" stroke="#c6c6c6" stroke-width="2"/><path d="M10 6 A12 12 0 1 1 21 26" fill="none" stroke="#c6c6c6" stroke-width="2"/><path d="M5 15 L30 15" stroke="#c6c6c6" stroke-width="2" stroke-dasharray="2.2 2.2"/><path d="M25 13 L25 34 L41 27.5 Z" fill="#c6c6c6"/></svg>
<svg class="a" style="left:56px;top:624px;" width="8" height="8" viewBox="0 0 8 8"><path d="M0 7 L7 0 L7 7 Z" fill="#c6c6c6"/></svg>
<svg class="a" style="left:77px;top:590px;" width="40" height="36" viewBox="0 0 40 36"><path d="M2 2 L2 33 L21 18 L20 9 Z M9 4 L9 26 M15 6 L15 22 M2 17 L21 14" fill="none" stroke="#c6c6c6" stroke-width="2"/><path d="M2 33 L37 33 M18 28 L34 28 M20 23 L31 23 M21 18 L27 18" stroke="#9a9a9a" stroke-width="2"/></svg>
<svg class="a" style="left:116px;top:624px;" width="8" height="8" viewBox="0 0 8 8"><path d="M0 7 L7 0 L7 7 Z" fill="#c6c6c6"/></svg>
<svg class="a" style="left:18px;top:641px;" width="38" height="34" viewBox="0 0 38 34"><rect x="3" y="3" width="31" height="27" fill="none" stroke="#c6c6c6" stroke-width="2.4"/><path d="M3 13 C12 5 20 20 34 13 M3 26 C10 16 22 20 30 30 M14 3 C24 10 22 22 19 30 M26 3 C30 12 30 22 25 30" fill="none" stroke="#c6c6c6" stroke-width="1.6"/></svg>
<svg class="a" style="left:79px;top:641px;" width="36" height="34" viewBox="0 0 36 34"><defs><linearGradient id="gg"><stop offset="0" stop-color="#222"/><stop offset="1" stop-color="#d0d0d0"/></linearGradient></defs><rect x="2.5" y="2.5" width="31" height="27" fill="url(#gg)" stroke="#c6c6c6" stroke-width="2.4"/></svg>
<svg class="a" style="left:17px;top:687px;" width="40" height="38" viewBox="0 0 40 38"><path d="M5 33 C1 31 2 28 4 26 L20 10 L26 16 L10 32 C8 34 7 34 5 33 Z" fill="none" stroke="#c6c6c6" stroke-width="2.2"/><path d="M16 8 L28 20 L32 16 L30 14 L36 8 C38 5 35 1 32 3 L26 9 L24 7 Z" fill="#c6c6c6"/></svg>
<svg class="a" style="left:56px;top:718px;" width="8" height="8" viewBox="0 0 8 8"><path d="M0 7 L7 0 L7 7 Z" fill="#c6c6c6"/></svg>
<svg class="a" style="left:77px;top:689px;" width="42" height="34" viewBox="0 0 42 34"><rect x="2" y="2" width="16" height="16" fill="#c6c6c6"/><rect x="12.5" y="8.5" width="15" height="15" rx="5" fill="#8a8a8a" stroke="#c6c6c6" stroke-width="2"/><circle cx="30" cy="22" r="8" fill="#535353" stroke="#c6c6c6" stroke-width="2.2"/></svg>
<svg class="a" style="left:16px;top:737px;" width="42" height="36" viewBox="0 0 42 36"><circle cx="4" cy="4" r="2" fill="#c6c6c6"/><circle cx="10" cy="4" r="2" fill="#c6c6c6"/><circle cx="16" cy="4" r="2" fill="#c6c6c6"/><circle cx="4" cy="10" r="2" fill="#c6c6c6"/><circle cx="10" cy="10" r="2" fill="#c6c6c6"/><circle cx="4" cy="16" r="2" fill="#c6c6c6"/><rect x="21" y="2" width="10" height="7" fill="#c6c6c6"/><rect x="19" y="10" width="18" height="24" fill="none" stroke="#c6c6c6" stroke-width="2"/><ellipse cx="28" cy="23" rx="5.5" ry="4.5" fill="none" stroke="#c6c6c6" stroke-width="2.4"/></svg>
<svg class="a" style="left:56px;top:767px;" width="8" height="8" viewBox="0 0 8 8"><path d="M0 7 L7 0 L7 7 Z" fill="#c6c6c6"/></svg>
<svg class="a" style="left:79px;top:737px;" width="36" height="36" viewBox="0 0 36 36"><path d="M17 2 A16 16 0 1 0 17 34 Z" fill="#c6c6c6"/><path d="M18.5 18.5 L29 7 A15 15 0 0 1 32.5 22 Z" fill="#c6c6c6"/><path d="M18.5 20.5 L32.5 24 A15 15 0 0 1 18.5 34 Z" fill="#8a8a8a"/></svg>
<svg class="a" style="left:116px;top:767px;" width="8" height="8" viewBox="0 0 8 8"><path d="M0 7 L7 0 L7 7 Z" fill="#c6c6c6"/></svg>
<svg class="a" style="left:15px;top:782px;" width="40" height="38" viewBox="0 0 40 38"><path d="M1 14 L12 14 M13 2 L13 12" stroke="#c6c6c6" stroke-width="2.2"/><path d="M13 14 L34 14 L38 18 L38 34 L13 34 Z" fill="#636363" stroke="#c6c6c6" stroke-width="2.2"/><path d="M31 14 L31 20 L38 20" fill="#c6c6c6" stroke="#c6c6c6" stroke-width="1"/></svg>
<svg class="a" style="left:78px;top:783px;" width="40" height="38" viewBox="0 0 40 38"><path d="M2 35 L14 18 C18 14 20 12 24 10 L30 16 C28 22 24 24 18 26 Z" fill="none" stroke="#c6c6c6" stroke-width="2"/><path d="M24 7 L30 1 L37 8 L31 14 Z" fill="#c6c6c6"/></svg>
<svg class="a" style="left:116px;top:816px;" width="8" height="8" viewBox="0 0 8 8"><path d="M0 7 L7 0 L7 7 Z" fill="#c6c6c6"/></svg>
<svg class="a" style="left:17px;top:833px;" width="38" height="36" viewBox="0 0 38 36"><path d="M10 34 C6 30 4 26 1 22 C0 20 3 18 5 20 L9 23 L6 6 C5 3 9 2 10 5 L13 17 L13 3 C13 0 17 0 17 3 L17 16 L20 4 C21 1 25 2 24 5 L22 18 L27 9 C28 6 32 7 31 10 L25 28 C23 34 17 37 10 34 Z" fill="#c6c6c6"/></svg>
<svg class="a" style="left:56px;top:864px;" width="8" height="8" viewBox="0 0 8 8"><path d="M0 7 L7 0 L7 7 Z" fill="#c6c6c6"/></svg>
<svg class="a" style="left:79px;top:833px;" width="36" height="36" viewBox="0 0 36 36"><circle cx="13.5" cy="13.5" r="11" fill="none" stroke="#c6c6c6" stroke-width="2.6"/><path d="M21.5 21.5 L32 32" stroke="#c6c6c6" stroke-width="4" stroke-linecap="round"/></svg>
<div class="a" style="left:6px;top:879px;width:120px;height:1.5px;background:#4b4b4b;"></div>
<svg class="a" style="left:0px;top:885px;" width="130" height="120" viewBox="0 0 130 120">
<rect x="43" y="42" width="72" height="72" fill="#2d2d2d"/>
<rect x="45" y="44" width="68" height="68" fill="#ffffff"/>
<rect x="64" y="62" width="30" height="30" fill="#2d2d2d"/>
<rect x="68" y="66" width="22" height="22" fill="#535353"/>
<path d="M46 111 L112 45" stroke="#ff0000" stroke-width="4.5"/>
<rect x="6" y="4" width="72" height="72" fill="#2d2d2d"/>
<rect x="8" y="6" width="68" height="68" fill="#ffffff"/>
<rect x="10" y="8" width="64" height="64" fill="#ff0000"/>
<path d="M101 12 Q113 11 113 24" fill="none" stroke="#c6c6c6" stroke-width="2.6"/><path d="M97 12 L103 6.5 L103 17.5 Z" fill="#c6c6c6"/><path d="M113 29 L107.5 23 L118.5 23 Z" fill="#c6c6c6"/>
<rect x="13" y="94" width="16" height="17" fill="#000" stroke="#c8c8c8" stroke-width="1.6"/>
<rect x="6.8" y="87.8" width="16" height="16" fill="#000" stroke="#c8c8c8" stroke-width="1.6"/>
<rect x="9.8" y="90.8" width="10" height="10" fill="#fff"/>
</svg>
<div class="a" style="left:7px;top:1011px;width:117px;height:40px;border:1.5px solid #4a4a4a;border-radius:4px;box-sizing:border-box"></div>
<div class="a" style="left:8px;top:1012px;width:35px;height:38px;background:#2e2e2e;"></div>
<div class="a" style="left:45px;top:1012px;width:1.5px;height:38px;background:#4a4a4a;"></div>
<div class="a" style="left:85px;top:1012px;width:1.5px;height:38px;background:#4a4a4a;"></div>
<svg class="a" style="left:10px;top:1016px;" width="120" height="30" viewBox="0 0 120 30"><rect x="3" y="3" width="25" height="25" fill="#000"/><rect x="5.5" y="5.5" width="20" height="20" fill="#ff0000"/><defs><linearGradient id="g2"><stop offset="0" stop-color="#fff"/><stop offset="1" stop-color="#222"/></linearGradient></defs><rect x="43" y="3" width="26" height="25" fill="#000"/><rect x="45.5" y="5.5" width="21" height="20" fill="url(#g2)"/><rect x="83" y="3" width="26" height="25" fill="#000"/><rect x="85.5" y="5.5" width="21" height="20" fill="#fff"/><path d="M86 25 L106 6" stroke="#ff0000" stroke-width="3"/></svg>
<div class="a" style="left:7px;top:1062px;width:117px;height:38px;border:1.5px solid #4a4a4a;border-radius:4px;box-sizing:border-box"></div>
<div class="a" style="left:8px;top:1063px;width:35px;height:36px;background:#2e2e2e;"></div>
<div class="a" style="left:45px;top:1063px;width:1.5px;height:36px;background:#4a4a4a;"></div>
<div class="a" style="left:85px;top:1063px;width:1.5px;height:36px;background:#4a4a4a;"></div>
<svg class="a" style="left:10px;top:1066px;" width="120" height="32" viewBox="0 0 120 32"><circle cx="15" cy="14" r="7.5" fill="#6a6a6a" stroke="#c6c6c6" stroke-width="2"/><rect x="15" y="14" width="11" height="11" fill="#c6c6c6"/><circle cx="56" cy="14" r="7.5" fill="#6a6a6a" stroke="#c6c6c6" stroke-width="2"/><rect x="57" y="15" width="10" height="10" fill="#c6c6c6"/><circle cx="96" cy="15" r="7" fill="#6a6a6a" stroke="#c6c6c6" stroke-width="2"/><rect x="96" y="15" width="6" height="6" fill="#c6c6c6"/></svg>
<svg class="a" style="left:44px;top:1114px;" width="48" height="36" viewBox="0 0 48 36"><rect x="2" y="10" width="26" height="22" fill="#6a6a6a" stroke="#c6c6c6" stroke-width="2.4"/><rect x="19" y="2" width="26" height="22" fill="#6a6a6a" stroke="#c6c6c6" stroke-width="2.4"/><rect x="19" y="2" width="26" height="4" fill="#c6c6c6"/><rect x="2" y="10" width="17" height="4" fill="#c6c6c6"/></svg>
<svg class="a" style="left:50px;top:1188px;" width="36" height="14" viewBox="0 0 36 14"><circle cx="6" cy="7" r="3.5" fill="#c6c6c6"/><circle cx="17" cy="7" r="3.5" fill="#c6c6c6"/><circle cx="28" cy="7" r="3.5" fill="#c6c6c6"/></svg>
<div class="a" style="left:67px;top:290px;width:474px;height:196px;background:#535353;border:1.5px solid #5e5e5e;border-top:none;box-sizing:border-box;box-shadow:2px 3px 6px rgba(0,0,0,0.35)"></div>
<div class="a" style="left:70px;top:294px;width:466px;height:44px;background:#616161;border-radius:5px"></div>
<svg class="a" style="left:0px;top:282px;" width="560" height="70" viewBox="0 0 560 70"><rect x="4.5" y="8" width="58" height="52" rx="9" fill="none" stroke="#ff00ff" stroke-width="8"/><rect x="66" y="8" width="474" height="52" rx="9" fill="none" stroke="#ff00ff" stroke-width="8"/></svg>
<div class="a" style="left:87px;top:308.5px;width:10.5px;height:10.5px;background:#c6c6c6;"></div>
<svg class="a" style="left:117.7px;top:296.7px;" width="32.6" height="32.6" viewBox="0 0 32.6 32.6"><polygon points="23.08,0.00 32.60,9.52 26.37,15.75 16.85,6.23" fill="#c6c6c6"/><polygon points="15.16,7.91 24.69,17.44 19.41,27.11 0.00,32.60 5.49,13.19" fill="#c6c6c6"/><polyline points="0.00,32.60 9.52,23.08" stroke="#616161" stroke-width="1.66" fill="none"/><circle cx="10.26" cy="22.34" r="2.38" fill="#616161"/></svg>
<div class="a t" style="left:167px;top:299.9px;font-size:27.2px;line-height:27.2px;color:#4fb3f6;font-weight:400;">Pen Tool</div>
<div class="a t" style="left:-1485px;width:2000px;text-align:right;top:299.9px;font-size:27.2px;line-height:27.2px;color:#4fb3f6;font-weight:400;">(P)</div>
<svg class="a" style="left:111px;top:346px;" width="18" height="18" viewBox="0 0 18 18"><path d="M1 8 L15 8 M8 1 L8 15" stroke="#c6c6c6" stroke-width="3.2"/></svg>
<svg class="a" style="left:122px;top:347px;" width="32" height="32" viewBox="0 0 32 32"><polygon points="22.65,0.00 32.00,9.35 25.89,15.46 16.54,6.11" fill="#c6c6c6"/><polygon points="14.89,7.77 24.23,17.11 19.06,26.61 0.00,32.00 5.39,12.94" fill="#c6c6c6"/><polyline points="0.00,32.00 9.35,22.65" stroke="#535353" stroke-width="1.63" fill="none"/><circle cx="10.07" cy="21.93" r="2.34" fill="#535353"/></svg>
<div class="a t" style="left:166px;top:349.4px;font-size:27.2px;line-height:27.2px;color:#f2f2f2;font-weight:400;">Add Anchor Point Tool</div>
<div class="a t" style="left:-1485px;width:2000px;text-align:right;top:349.4px;font-size:27.2px;line-height:27.2px;color:#f2f2f2;font-weight:400;">(+)</div>
<div class="a" style="left:111px;top:401px;width:16px;height:4.5px;background:#c6c6c6;"></div>
<svg class="a" style="left:122px;top:396px;" width="32" height="32" viewBox="0 0 32 32"><polygon points="22.65,0.00 32.00,9.35 25.89,15.46 16.54,6.11" fill="#c6c6c6"/><polygon points="14.89,7.77 24.23,17.11 19.06,26.61 0.00,32.00 5.39,12.94" fill="#c6c6c6"/><polyline points="0.00,32.00 9.35,22.65" stroke="#535353" stroke-width="1.63" fill="none"/><circle cx="10.07" cy="21.93" r="2.34" fill="#535353"/></svg>
<div class="a t" style="left:166px;top:398.9px;font-size:27.2px;line-height:27.2px;color:#f2f2f2;font-weight:400;">Delete Anchor Point Tool</div>
<div class="a t" style="left:-1485px;width:2000px;text-align:right;top:398.9px;font-size:27.2px;line-height:27.2px;color:#f2f2f2;font-weight:400;">(–)</div>
<svg class="a" style="left:122px;top:444px;" width="32" height="36" viewBox="0 0 32 36"><path d="M3 1 L3 35 M3 1 L28 28" stroke="#c6c6c6" stroke-width="2" fill="none"/></svg>
<div class="a t" style="left:166px;top:448.4px;font-size:27.2px;line-height:27.2px;color:#f2f2f2;font-weight:400;">Anchor Point Tool</div>
<div class="a t" style="left:-1485px;width:2000px;text-align:right;top:448.4px;font-size:27.2px;line-height:27.2px;color:#f2f2f2;font-weight:400;">(Shift+C)</div>
<div class="a" style="left:152px;top:1950px;width:101px;height:30px;background:#434343;border-radius:3px 0 0 0"></div>
<div class="a" style="left:254.5px;top:1950px;width:34px;height:30px;background:#535353;border-radius:0 3px 0 0"></div>
<svg class="a" style="left:262.5px;top:1965px;" width="18" height="10" viewBox="0 0 18 10"><path d="M1 1 L9 8 L17 1" stroke="#e0e0e0" stroke-width="2" fill="none"/></svg>
<div class="a t" style="left:159px;top:1959.3px;font-size:22px;line-height:22px;color:#eaeaea;font-weight:400;">25%</div>
<div class="a" style="left:299px;top:1950px;width:102px;height:30px;background:#434343;border-radius:3px 0 0 0"></div>
<div class="a" style="left:403px;top:1950px;width:34px;height:30px;background:#535353;border-radius:0 3px 0 0"></div>
<svg class="a" style="left:411.0px;top:1965px;" width="18" height="10" viewBox="0 0 18 10"><path d="M1 1 L9 8 L17 1" stroke="#e0e0e0" stroke-width="2" fill="none"/></svg>
<div class="a t" style="left:306px;top:1959.3px;font-size:22px;line-height:22px;color:#eaeaea;font-weight:400;">0°</div>
<div class="a" style="left:438px;top:1950px;width:83px;height:26px;background:#535353;"></div>
<svg class="a" style="left:455px;top:1956px;" width="50" height="20" viewBox="0 0 50 20"><rect x="0" y="2" width="3" height="18" fill="#7c7c7c"/><path d="M14 2 L5 11 L14 20 Z" fill="#7c7c7c"/><path d="M44 2 L35 11 L44 20 Z" fill="#7c7c7c"/></svg>
<div class="a" style="left:522px;top:1950px;width:81px;height:30px;background:#434343;border-radius:3px 0 0 0"></div>
<div class="a" style="left:605px;top:1950px;width:34px;height:30px;background:#535353;border-radius:0 3px 0 0"></div>
<svg class="a" style="left:613.0px;top:1965px;" width="18" height="10" viewBox="0 0 18 10"><path d="M1 1 L9 8 L17 1" stroke="#e0e0e0" stroke-width="2" fill="none"/></svg>
<div class="a t" style="left:529px;top:1959.3px;font-size:22px;line-height:22px;color:#eaeaea;font-weight:400;">1</div>
<div class="a" style="left:640px;top:1950px;width:84px;height:26px;background:#535353;"></div>
<svg class="a" style="left:658px;top:1956px;" width="56" height="20" viewBox="0 0 56 20"><path d="M6 2 L15 11 L6 20 Z" fill="#7c7c7c"/><path d="M36 2 L45 11 L36 20 Z" fill="#7c7c7c"/><rect x="48" y="2" width="3" height="18" fill="#7c7c7c"/></svg>
<div class="a" style="left:725px;top:1950px;width:401px;height:26px;background:#535353;"></div>
<div class="a t" style="left:-74.20000000000005px;width:2000px;text-align:center;top:1960.2px;font-size:22.1px;line-height:22.1px;color:#d4d4d4;font-weight:400;">Toggle Direct Selection</div>
<div class="a" style="left:1129px;top:1950px;width:35px;height:26px;background:#535353;"></div>
<svg class="a" style="left:1140px;top:1958px;" width="14" height="18" viewBox="0 0 14 18"><path d="M1 1 L12 9 L1 17 Z" fill="#c8c8c8"/></svg>
<svg class="a" style="left:1176px;top:1956px;" width="12" height="18" viewBox="0 0 12 18"><path d="M9 1 L2 9 L9 17" stroke="#9a9a9a" stroke-width="1.8" fill="none"/></svg>
<svg class="a" style="left:2656px;top:1956px;" width="12" height="18" viewBox="0 0 12 18"><path d="M2 1 L9 9 L2 17" stroke="#9a9a9a" stroke-width="1.8" fill="none"/></svg>
<div class="a" style="left:1898px;top:1950px;width:50px;height:30px;border-radius:15px;background:#5f5f5f"></div>
<svg class="a" style="left:2687px;top:203px;" width="18" height="12" viewBox="0 0 18 12"><path d="M1 10 L8.5 2 L16 10" stroke="#8e8e8e" stroke-width="2" fill="none"/></svg>
<svg class="a" style="left:2687px;top:1925px;" width="18" height="12" viewBox="0 0 18 12"><path d="M1 2 L8.5 10 L16 2" stroke="#c0c0c0" stroke-width="2" fill="none"/></svg>
<div class="a" style="left:2717px;top:155px;width:75px;height:2px;background:#393939;"></div>
<div class="a" style="left:2717px;top:295px;width:75px;height:2px;background:#393939;"></div>
<div class="a" style="left:2717px;top:434px;width:75px;height:2px;background:#393939;"></div>
<div class="a" style="left:2717px;top:574px;width:75px;height:2px;background:#393939;"></div>
<div class="a" style="left:2717px;top:770px;width:75px;height:2px;background:#393939;"></div>
<div class="a" style="left:2717px;top:853px;width:75px;height:2px;background:#393939;"></div>
<div class="a" style="left:2717px;top:937px;width:75px;height:2px;background:#393939;"></div>
<div class="a" style="left:2717px;top:1076px;width:75px;height:2px;background:#393939;"></div>
<div class="a" style="left:2735.0px;top:163px;width:2.2px;height:8.5px;background:#333333;"></div>
<div class="a" style="left:2739.0px;top:163px;width:2.2px;height:8.5px;background:#333333;"></div>
<div class="a" style="left:2743.0px;top:163px;width:2.2px;height:8.5px;background:#333333;"></div>
<div class="a" style="left:2747.0px;top:163px;width:2.2px;height:8.5px;background:#333333;"></div>
<div class="a" style="left:2751.0px;top:163px;width:2.2px;height:8.5px;background:#333333;"></div>
<div class="a" style="left:2755.0px;top:163px;width:2.2px;height:8.5px;background:#333333;"></div>
<div class="a" style="left:2759.0px;top:163px;width:2.2px;height:8.5px;background:#333333;"></div>
<div class="a" style="left:2763.0px;top:163px;width:2.2px;height:8.5px;background:#333333;"></div>
<div class="a" style="left:2767.0px;top:163px;width:2.2px;height:8.5px;background:#333333;"></div>
<div class="a" style="left:2771.0px;top:163px;width:2.2px;height:8.5px;background:#333333;"></div>
<div class="a" style="left:2735.0px;top:303px;width:2.2px;height:8.5px;background:#333333;"></div>
<div class="a" style="left:2739.0px;top:303px;width:2.2px;height:8.5px;background:#333333;"></div>
<div class="a" style="left:2743.0px;top:303px;width:2.2px;height:8.5px;background:#333333;"></div>
<div class="a" style="left:2747.0px;top:303px;width:2.2px;height:8.5px;background:#333333;"></div>
<div class="a" style="left:2751.0px;top:303px;width:2.2px;height:8.5px;background:#333333;"></div>
<div class="a" style="left:2755.0px;top:303px;width:2.2px;height:8.5px;background:#333333;"></div>
<div class="a" style="left:2759.0px;top:303px;width:2.2px;height:8.5px;background:#333333;"></div>
<div class="a" style="left:2763.0px;top:303px;width:2.2px;height:8.5px;background:#333333;"></div>
<div class="a" style="left:2767.0px;top:303px;width:2.2px;height:8.5px;background:#333333;"></div>
<div class="a" style="left:2771.0px;top:303px;width:2.2px;height:8.5px;background:#333333;"></div>
<div class="a" style="left:2735.0px;top:442px;width:2.2px;height:8.5px;background:#333333;"></div>
<div class="a" style="left:2739.0px;top:442px;width:2.2px;height:8.5px;background:#333333;"></div>
<div class="a" style="left:2743.0px;top:442px;width:2.2px;height:8.5px;background:#333333;"></div>
<div class="a" style="left:2747.0px;top:442px;width:2.2px;height:8.5px;background:#333333;"></div>
<div class="a" style="left:2751.0px;top:442px;width:2.2px;height:8.5px;background:#333333;"></div>
<div class="a" style="left:2755.0px;top:442px;width:2.2px;height:8.5px;background:#333333;"></div>
<div class="a" style="left:2759.0px;top:442px;width:2.2px;height:8.5px;background:#333333;"></div>
<div class="a" style="left:2763.0px;top:442px;width:2.2px;height:8.5px;background:#333333;"></div>
<div class="a" style="left:2767.0px;top:442px;width:2.2px;height:8.5px;background:#333333;"></div>
<div class="a" style="left:2771.0px;top:442px;width:2.2px;height:8.5px;background:#333333;"></div>
<div class="a" style="left:2735.0px;top:582px;width:2.2px;height:8.5px;background:#333333;"></div>
<div class="a" style="left:2739.0px;top:582px;width:2.2px;height:8.5px;background:#333333;"></div>
<div class="a" style="left:2743.0px;top:582px;width:2.2px;height:8.5px;background:#333333;"></div>
<div class="a" style="left:2747.0px;top:582px;width:2.2px;height:8.5px;background:#333333;"></div>
<div class="a" style="left:2751.0px;top:582px;width:2.2px;height:8.5px;background:#333333;"></div>
<div class="a" style="left:2755.0px;top:582px;width:2.2px;height:8.5px;background:#333333;"></div>
<div class="a" style="left:2759.0px;top:582px;width:2.2px;height:8.5px;background:#333333;"></div>
<div class="a" style="left:2763.0px;top:582px;width:2.2px;height:8.5px;background:#333333;"></div>
<div class="a" style="left:2767.0px;top:582px;width:2.2px;height:8.5px;background:#333333;"></div>
<div class="a" style="left:2771.0px;top:582px;width:2.2px;height:8.5px;background:#333333;"></div>
<div class="a" style="left:2735.0px;top:778px;width:2.2px;height:8.5px;background:#333333;"></div>
<div class="a" style="left:2739.0px;top:778px;width:2.2px;height:8.5px;background:#333333;"></div>
<div class="a" style="left:2743.0px;top:778px;width:2.2px;height:8.5px;background:#333333;"></div>
<div class="a" style="left:2747.0px;top:778px;width:2.2px;height:8.5px;background:#333333;"></div>
<div class="a" style="left:2751.0px;top:778px;width:2.2px;height:8.5px;background:#333333;"></div>
<div class="a" style="left:2755.0px;top:778px;width:2.2px;height:8.5px;background:#333333;"></div>
<div class="a" style="left:2759.0px;top:778px;width:2.2px;height:8.5px;background:#333333;"></div>
<div class="a" style="left:2763.0px;top:778px;width:2.2px;height:8.5px;background:#333333;"></div>
<div class="a" style="left:2767.0px;top:778px;width:2.2px;height:8.5px;background:#333333;"></div>
<div class="a" style="left:2771.0px;top:778px;width:2.2px;height:8.5px;background:#333333;"></div>
<div class="a" style="left:2735.0px;top:861px;width:2.2px;height:8.5px;background:#333333;"></div>
<div class="a" style="left:2739.0px;top:861px;width:2.2px;height:8.5px;background:#333333;"></div>
<div class="a" style="left:2743.0px;top:861px;width:2.2px;height:8.5px;background:#333333;"></div>
<div class="a" style="left:2747.0px;top:861px;width:2.2px;height:8.5px;background:#333333;"></div>
<div class="a" style="left:2751.0px;top:861px;width:2.2px;height:8.5px;background:#333333;"></div>
<div class="a" style="left:2755.0px;top:861px;width:2.2px;height:8.5px;background:#333333;"></div>
<div class="a" style="left:2759.0px;top:861px;width:2.2px;height:8.5px;background:#333333;"></div>
<div class="a" style="left:2763.0px;top:861px;width:2.2px;height:8.5px;background:#333333;"></div>
<div class="a" style="left:2767.0px;top:861px;width:2.2px;height:8.5px;background:#333333;"></div>
<div class="a" style="left:2771.0px;top:861px;width:2.2px;height:8.5px;background:#333333;"></div>
<div class="a" style="left:2735.0px;top:945px;width:2.2px;height:8.5px;background:#333333;"></div>
<div class="a" style="left:2739.0px;top:945px;width:2.2px;height:8.5px;background:#333333;"></div>
<div class="a" style="left:2743.0px;top:945px;width:2.2px;height:8.5px;background:#333333;"></div>
<div class="a" style="left:2747.0px;top:945px;width:2.2px;height:8.5px;background:#333333;"></div>
<div class="a" style="left:2751.0px;top:945px;width:2.2px;height:8.5px;background:#333333;"></div>
<div class="a" style="left:2755.0px;top:945px;width:2.2px;height:8.5px;background:#333333;"></div>
<div class="a" style="left:2759.0px;top:945px;width:2.2px;height:8.5px;background:#333333;"></div>
<div class="a" style="left:2763.0px;top:945px;width:2.2px;height:8.5px;background:#333333;"></div>
<div class="a" style="left:2767.0px;top:945px;width:2.2px;height:8.5px;background:#333333;"></div>
<div class="a" style="left:2771.0px;top:945px;width:2.2px;height:8.5px;background:#333333;"></div>
<svg class="a" style="left:2739px;top:181px;" width="38" height="46" viewBox="0 0 38 46"><rect x="9" y="27" width="19" height="16" rx="3" fill="#c6c6c6"/><path d="M12 27 L6 14" stroke="#c6c6c6" stroke-width="2.4"/><path d="M2 10 C0 4 4 1 6 0 C8 4 10 8 8 14 C6 16 3 14 2 10 Z" fill="#c6c6c6"/><path d="M19 27 L17 9" stroke="#c6c6c6" stroke-width="2.4"/><rect x="13" y="2" width="7" height="8" fill="#c6c6c6"/><path d="M24 27 L29 14" stroke="#c6c6c6" stroke-width="2.4"/><path d="M21 10 C24 4 33 4 36 12 L28 14 Z" fill="#c6c6c6"/></svg>
<svg class="a" style="left:2739px;top:241px;" width="38" height="38" viewBox="0 0 38 38"><circle cx="17.5" cy="9" r="7.5" fill="#c6c6c6"/><circle cx="9" cy="20" r="7.5" fill="#c6c6c6"/><circle cx="26" cy="20" r="7.5" fill="#c6c6c6"/><path d="M17.5 12 L15 30 L10 33 L25 33 L20 30 Z" fill="#c6c6c6"/><rect x="6" y="32" width="23" height="2.5" fill="#c6c6c6"/></svg>
<svg class="a" style="left:2740px;top:330px;" width="35" height="26" viewBox="0 0 35 26"><rect x="0" y="0.7" width="34" height="2.6" fill="#c6c6c6"/><rect x="0" y="9" width="34" height="3.5" fill="#c6c6c6"/><rect x="0" y="19" width="34" height="6" fill="#c6c6c6"/></svg>
<svg class="a" style="left:2736px;top:382px;" width="40" height="40" viewBox="0 0 40 40"><circle cx="14" cy="14.5" r="12.5" fill="#c6c6c6"/><circle cx="24" cy="24" r="12" fill="#7e7e7e" stroke="#c6c6c6" stroke-width="2.2"/></svg>
<svg class="a" style="left:2738px;top:464px;" width="40" height="40" viewBox="0 0 40 40"><circle cx="18.5" cy="19" r="13" fill="#c6c6c6"/><circle cx="18.5" cy="19" r="17" fill="none" stroke="#c6c6c6" stroke-width="2.2" stroke-dasharray="4 3"/></svg>
<svg class="a" style="left:2740px;top:522px;" width="36" height="38" viewBox="0 0 36 38"><rect x="12" y="2" width="22" height="22" fill="none" stroke="#c6c6c6" stroke-width="2.2"/><rect x="2" y="18" width="11" height="11" fill="#535353" stroke="#c6c6c6" stroke-width="2.2"/><rect x="6" y="22" width="11" height="11" fill="#535353" stroke="#c6c6c6" stroke-width="2.2"/></svg>
<svg class="a" style="left:2739px;top:603px;" width="36" height="40" viewBox="0 0 36 40"><path d="M17.5 15 L33 24 L17.5 33 L2 24 Z" fill="#c6c6c6" stroke="#535353" stroke-width="2"/><path d="M17.5 2 L33 11 L17.5 20 L2 11 Z" fill="#c6c6c6" stroke="#535353" stroke-width="2"/></svg>
<svg class="a" style="left:2739px;top:659px;" width="38" height="40" viewBox="0 0 38 40"><path d="M14 5 L3 5 L3 35 L33 35 L33 24" fill="none" stroke="#c6c6c6" stroke-width="3"/><path d="M15 23 L31 7" stroke="#c6c6c6" stroke-width="3.5"/><path d="M20 4 L35 4 L35 19 Z" fill="#c6c6c6"/></svg>
<svg class="a" style="left:2739px;top:716px;" width="40" height="42" viewBox="0 0 40 42"><rect x="2" y="2" width="18" height="20" fill="none" stroke="#c6c6c6" stroke-width="2"/><rect x="10" y="16" width="24" height="21" fill="#535353" stroke="#c6c6c6" stroke-width="2.2"/></svg>
<div class="a" style="left:2726px;top:795px;width:57px;height:47px;background:#333333;border-radius:5px;border:1.5px solid #4a4a4a;box-sizing:border-box"></div>
<svg class="a" style="left:2739px;top:809px;" width="36" height="24" viewBox="0 0 36 24"><rect x="1" y="1" width="32" height="22" fill="#c6c6c6"/><rect x="4" y="4" width="8" height="7" fill="#777"/><rect x="13" y="4" width="8" height="7" fill="#ddd"/><rect x="22" y="4" width="8" height="7" fill="#777"/><rect x="4" y="13" width="8" height="7" fill="#ddd"/><rect x="13" y="13" width="8" height="7" fill="#777"/><rect x="22" y="13" width="8" height="7" fill="#ddd"/></svg>
<svg class="a" style="left:2740px;top:889px;" width="36" height="28" viewBox="0 0 36 28"><defs><linearGradient id="g3"><stop offset="0" stop-color="#111"/><stop offset="1" stop-color="#eee"/></linearGradient></defs><rect x="1.5" y="1.5" width="33" height="24" fill="url(#g3)" stroke="#c6c6c6" stroke-width="2.2"/></svg>
<svg class="a" style="left:2740px;top:968px;" width="36" height="36" viewBox="0 0 36 36"><rect x="4.5" y="4.5" width="26" height="26" fill="none" stroke="#c6c6c6" stroke-width="2.2"/><rect x="1" y="1" width="7" height="7" fill="#c6c6c6"/><rect x="27" y="1" width="7" height="7" fill="#c6c6c6"/><rect x="1" y="27" width="7" height="7" fill="#c6c6c6"/><rect x="27" y="27" width="7" height="7" fill="#c6c6c6"/><rect x="14" y="1" width="7" height="5" fill="#c6c6c6"/><rect x="14" y="29" width="7" height="5" fill="#c6c6c6"/><rect x="1" y="14" width="5" height="7" fill="#c6c6c6"/><rect x="29" y="14" width="5" height="7" fill="#c6c6c6"/><circle cx="17.5" cy="17.5" r="2" fill="#c6c6c6"/></svg>
<svg class="a" style="left:2740px;top:1023px;" width="36" height="40" viewBox="0 0 36 40"><rect x="1" y="0" width="2.2" height="38" fill="#c6c6c6"/><rect x="6" y="5" width="15" height="12" fill="#c6c6c6"/><rect x="6" y="21" width="28" height="11" fill="#c6c6c6"/></svg>
<div class="a" style="left:2941px;top:157px;width:359px;height:55px;background:#424242;"></div>
<div class="a" style="left:2798px;top:157px;width:143px;height:55px;background:#535353;"></div>
<div class="a" style="left:2941px;top:157px;width:2px;height:55px;background:#393939;"></div>
<div class="a" style="left:3065px;top:157px;width:2px;height:54px;background:#393939;"></div>
<div class="a" style="left:2941px;top:210px;width:359px;height:2px;background:#393939;"></div>
<div class="a" style="left:2798px;top:212px;width:502px;height:1762px;background:#535353;"></div>
<div class="a t" style="left:2816.5px;top:171.0px;font-size:21.8px;line-height:21.8px;color:#f4f4f4;font-weight:700;-webkit-text-stroke:0;">Properties</div>
<div class="a t" style="left:2958.5px;top:171.5px;font-size:21.2px;line-height:21.2px;color:#b5b5b5;font-weight:700;-webkit-text-stroke:0;">Libraries</div>
<div class="a t" style="left:2818px;top:234.3px;font-size:22px;line-height:22px;color:#d9d9d9;font-weight:400;">Anchor Point</div>
<div class="a" style="left:2798px;top:277px;width:482px;height:2px;background:#4a4a4a;"></div>
<div class="a t" style="left:2818px;top:303.8px;font-size:22.6px;line-height:22.6px;color:#d9d9d9;font-weight:400;">Transform</div>
<svg class="a" style="left:2820px;top:384px;" width="40" height="14" viewBox="0 0 40 14"><rect x="0" y="6" width="39" height="2" fill="#c6c6c6"/><rect x="15" y="2" width="10" height="10" fill="#c6c6c6"/></svg>
<div class="a t" style="left:2878px;top:350.9px;font-size:22.5px;line-height:22.5px;color:#dedede;font-weight:400;">X:</div>
<div class="a t" style="left:2878px;top:403.9px;font-size:22.5px;line-height:22.5px;color:#dedede;font-weight:400;">Y:</div>
<div class="a" style="left:2908px;top:341px;width:110.5px;height:38.5px;border:1.5px solid #606060;border-radius:4px;background:#3f3f3f"></div>
<div class="a t" style="left:2920px;top:348.1px;font-size:22.8px;line-height:22.8px;color:#f6f6f6;font-weight:400;">4.3237 in</div>
<div class="a" style="left:2908px;top:394.5px;width:110.5px;height:38.5px;border:1.5px solid #606060;border-radius:4px;background:#3f3f3f"></div>
<div class="a t" style="left:2921px;top:401.1px;font-size:22.8px;line-height:22.8px;color:#f6f6f6;font-weight:400;">11 in</div>
<div class="a t" style="left:3052px;top:350.9px;font-size:22.5px;line-height:22.5px;color:#dedede;font-weight:400;">W:</div>
<div class="a t" style="left:3052px;top:403.9px;font-size:22.5px;line-height:22.5px;color:#dedede;font-weight:400;">H:</div>
<div class="a" style="left:3088px;top:341px;width:113px;height:42px;border-radius:4px;background:#585858"></div>
<div class="a t" style="left:3098px;top:348.1px;font-size:22.8px;line-height:22.8px;color:#6c6c6c;font-weight:400;">0 in</div>
<div class="a" style="left:3088px;top:394.5px;width:113px;height:42px;border-radius:4px;background:#585858"></div>
<div class="a t" style="left:3098px;top:401.1px;font-size:22.8px;line-height:22.8px;color:#6c6c6c;font-weight:400;">0 in</div>
<div class="a" style="left:3219.5px;top:365px;width:49px;height:49px;border-radius:4px;background:#2e2e2e"></div>
<svg class="a" style="left:3235px;top:371px;" width="18" height="34" viewBox="0 0 18 34"><rect x="3.5" y="2.4" width="10.8" height="18.6" rx="5.4" fill="none" stroke="#fff" stroke-width="3.3"/><rect x="3.5" y="12.6" width="10.8" height="18.6" rx="5.4" fill="none" stroke="#2e2e2e" stroke-width="6"/><rect x="3.5" y="12.6" width="10.8" height="18.6" rx="5.4" fill="none" stroke="#fff" stroke-width="3.3"/><path d="M14.3 13 L14.3 15 Q14.3 20.4 9 20.4" fill="none" stroke="#2e2e2e" stroke-width="6"/><path d="M14.3 12 L14.3 15 Q14.3 20.4 9 20.4" fill="none" stroke="#fff" stroke-width="3.3"/></svg>
<svg class="a" style="left:2868px;top:450px;" width="32" height="24" viewBox="0 0 32 24"><path d="M2 20 L16 4 M2 20 L22 20 M10 12 C13 14 14 17 13 20" fill="none" stroke="#c6c6c6" stroke-width="2.2"/><circle cx="28" cy="12" r="1.6" fill="#c6c6c6"/><circle cx="28" cy="19" r="1.6" fill="#c6c6c6"/></svg>
<div class="a" style="left:2915.5px;top:446px;width:114px;height:42.5px;border-radius:4px;background:#585858"></div>
<div class="a t" style="left:2925px;top:453.6px;font-size:22.8px;line-height:22.8px;color:#6c6c6c;font-weight:400;">0°</div>
<svg class="a" style="left:3000px;top:462px;" width="18" height="12" viewBox="0 0 18 12"><path d="M2 2 L9 9 L16 2" stroke="#707070" stroke-width="2" fill="none"/></svg>
<svg class="a" style="left:3113px;top:459px;" width="30" height="26" viewBox="0 0 30 26"><path d="M3 3 L3 22 L11 12.5 Z" fill="none" stroke="#c6c6c6" stroke-width="2"/><path d="M14 1 L14 25" stroke="#c6c6c6" stroke-width="1.8" stroke-dasharray="2 2"/><path d="M27 3 L27 22 L17 12.5 Z" fill="#c6c6c6"/></svg>
<svg class="a" style="left:3162px;top:455px;" width="28" height="30" viewBox="0 0 28 30"><path d="M3 1 L25 1 L14 10 Z" fill="#c6c6c6"/><path d="M1 14 L27 14" stroke="#c6c6c6" stroke-width="1.8" stroke-dasharray="2 2"/><path d="M3 27 L25 27 L14 18 Z" fill="none" stroke="#c6c6c6" stroke-width="2"/></svg>
<svg class="a" style="left:3236px;top:506px;" width="32" height="10" viewBox="0 0 32 10"><circle cx="4.5" cy="5" r="3.6" fill="#c6c6c6"/><circle cx="15" cy="5" r="3.6" fill="#c6c6c6"/><circle cx="25.5" cy="5" r="3.6" fill="#c6c6c6"/></svg>
<div class="a" style="left:2798px;top:528px;width:482px;height:2px;background:#4a4a4a;"></div>
<div class="a t" style="left:2818px;top:556.9px;font-size:21.3px;line-height:21.3px;color:#d9d9d9;font-weight:400;">Appearance</div>
<svg class="a" style="left:2818px;top:606px;" width="38" height="38" viewBox="0 0 38 38"><rect x="0" y="0" width="37" height="37" fill="#232323"/><rect x="2" y="2" width="33" height="33" fill="#fff"/><rect x="4.5" y="4.5" width="28" height="28" fill="#ff0000"/></svg>
<div class="a t" style="left:2879.5px;top:616.3px;font-size:22px;line-height:22px;color:#cfcfcf;font-weight:400;">Fill</div>
<svg class="a" style="left:2818px;top:665px;" width="38" height="36" viewBox="0 0 38 36"><rect x="0" y="0" width="37" height="35" fill="#232323"/><rect x="2" y="2" width="33" height="31" fill="#fff"/><rect x="10" y="9" width="17" height="17" fill="#3a3a3a"/><rect x="12.5" y="11.5" width="12" height="12" fill="#535353"/><path d="M2.5 33 L35 2.5" stroke="#ff0000" stroke-width="3"/></svg>
<div class="a t" style="left:2879.5px;top:672.0px;font-size:21.2px;line-height:21.2px;color:#e4e4e4;font-weight:400;">Stroke</div>
<div class="a" style="left:2880px;top:694px;width:62px;height:0;border-top:2px dotted #cfcfcf"></div>
<svg class="a" style="left:2819px;top:725px;" width="36" height="36" viewBox="0 0 36 36"><defs><pattern id="ck" width="16" height="16" patternUnits="userSpaceOnUse"><rect width="16" height="16" fill="#5a5a5a"/><rect width="8" height="8" fill="#6e6e6e"/><rect x="8" y="8" width="8" height="8" fill="#6e6e6e"/></pattern></defs><rect x="1.5" y="1.5" width="32" height="31" fill="url(#ck)" stroke="#b8b8b8" stroke-width="2"/></svg>
<div class="a t" style="left:2879.5px;top:730.6px;font-size:21.6px;line-height:21.6px;color:#e4e4e4;font-weight:400;">Opacity</div>
<div class="a" style="left:2880px;top:753px;width:74px;height:0;border-top:2px dotted #cfcfcf"></div>
<div class="a" style="left:2986.5px;top:661.5px;width:138px;height:38px;border:1.5px solid #606060;border-radius:4px;background:#535353"></div>
<div class="a" style="left:3022.5px;top:663px;width:1.5px;height:38px;background:#4a4a4a;"></div>
<div class="a" style="left:3024px;top:663px;width:65.5px;height:38px;background:#434343;"></div>
<div class="a" style="left:3089.5px;top:663px;width:1.5px;height:38px;background:#4a4a4a;"></div>
<svg class="a" style="left:2988px;top:663px;" width="36" height="38" viewBox="0 0 36 38"><path d="M11.5 12 L18 6 L24.5 12 M11.5 26 L18 32 L24.5 26" stroke="#e4e4e4" stroke-width="1.8" fill="none"/></svg>
<svg class="a" style="left:3099px;top:674px;" width="20" height="14" viewBox="0 0 20 14"><path d="M2 3 L9.5 10 L17 3" stroke="#e4e4e4" stroke-width="1.9" fill="none"/></svg>
<div class="a" style="left:2986.5px;top:721px;width:138px;height:38px;border:1.5px solid #606060;border-radius:4px;background:#535353"></div>
<div class="a" style="left:2988px;top:722.5px;width:101.5px;height:38px;background:#434343;"></div>
<div class="a" style="left:3089.5px;top:722.5px;width:1.5px;height:38px;background:#4a4a4a;"></div>
<div class="a t" style="left:2996px;top:731.0px;font-size:20px;line-height:20px;color:#f4f4f4;font-weight:400;">100%</div>
<svg class="a" style="left:3100px;top:731px;" width="14" height="22" viewBox="0 0 14 22"><path d="M3 2 L11 11 L3 20" stroke="#e4e4e4" stroke-width="2" fill="none"/></svg>
<div class="a t" style="left:2832px;top:795.0px;font-size:27px;line-height:27px;color:#bdbdbd;font-weight:400;font-style:italic">fx</div>
<svg class="a" style="left:2855px;top:812px;" width="10" height="6" viewBox="0 0 10 6"><path d="M0 0 L8 0 L4 5 Z" fill="#bdbdbd"/></svg>
<svg class="a" style="left:3236px;top:853px;" width="32" height="10" viewBox="0 0 32 10"><circle cx="4.5" cy="5" r="3.6" fill="#c6c6c6"/><circle cx="15" cy="5" r="3.6" fill="#c6c6c6"/><circle cx="25.5" cy="5" r="3.6" fill="#c6c6c6"/></svg>
<div class="a" style="left:2798px;top:876px;width:482px;height:2px;background:#4a4a4a;"></div>
<div class="a t" style="left:2818.5px;top:915.3px;font-size:21.4px;line-height:21.4px;color:#d9d9d9;font-weight:400;">Convert:</div>
<svg class="a" style="left:2950px;top:908px;" width="28" height="32" viewBox="0 0 28 32"><rect x="1" y="2" width="9" height="9" fill="#c6c6c6"/><path d="M5.5 11 L5.5 30 M8 9 L22 24" stroke="#c6c6c6" stroke-width="2" fill="none"/></svg>
<svg class="a" style="left:3004px;top:908px;" width="36" height="32" viewBox="0 0 36 32"><rect x="5" y="6" width="9" height="9" fill="#c6c6c6"/><path d="M2 30 Q4 12 14 8 Q22 4 30 3" stroke="#c6c6c6" stroke-width="2" fill="none"/></svg>
<div class="a" style="left:2798px;top:959px;width:482px;height:2px;background:#4a4a4a;"></div>
<div class="a t" style="left:2818.5px;top:987.5px;font-size:21.8px;line-height:21.8px;color:#d9d9d9;font-weight:400;">Anchors:</div>
<div class="a" style="left:2951.7px;top:984.5px;width:12px;height:3.6px;background:#c6c6c6;border-radius:1px"></div>
<svg class="a" style="left:2951.7px;top:982.5px;" width="32" height="32" viewBox="0 0 32 32"><polygon points="22.65,0.00 32.00,9.35 25.89,15.46 16.54,6.11" fill="#c6c6c6"/><polygon points="14.89,7.77 24.23,17.11 19.06,26.61 0.00,32.00 5.39,12.94" fill="#c6c6c6"/><polyline points="0.00,32.00 9.35,22.65" stroke="#535353" stroke-width="1.63" fill="none"/><circle cx="10.07" cy="21.93" r="2.34" fill="#535353"/></svg>
<svg class="a" style="left:3011px;top:984px;" width="30" height="30" viewBox="0 0 30 30"><rect x="0" y="20" width="8" height="8" fill="#6e6e6e"/><rect x="2" y="14" width="4" height="4" fill="#6e6e6e"/><rect x="4" y="8" width="4" height="4" fill="#6e6e6e"/><rect x="8" y="4" width="4" height="4" fill="#6e6e6e"/><rect x="14" y="2" width="4" height="4" fill="#6e6e6e"/><rect x="20" y="0" width="8" height="8" fill="#6e6e6e"/></svg>
<svg class="a" style="left:3066.5px;top:983px;" width="32" height="32" viewBox="0 0 32 32"><rect x="0" y="20" width="8" height="8" fill="#c6c6c6"/><rect x="21" y="0" width="8" height="8" fill="#c6c6c6"/><path d="M4 20 C4 10 12 4 21 4" stroke="#c6c6c6" stroke-width="1.8" fill="none"/><path d="M10 16.5 L25 25 M10 25.6 L25 17.5" stroke="#c6c6c6" stroke-width="1.6"/><circle cx="27.5" cy="15.8" r="3.2" fill="none" stroke="#c6c6c6" stroke-width="1.4"/><circle cx="27.5" cy="27" r="3.2" fill="none" stroke="#c6c6c6" stroke-width="1.4"/></svg>
<div class="a" style="left:2798px;top:1032px;width:482px;height:2px;background:#4a4a4a;"></div>
<div class="a t" style="left:2818.5px;top:1060.3px;font-size:22px;line-height:22px;color:#d9d9d9;font-weight:400;">Align</div>
<svg class="a" style="left:0;top:0;overflow:visible" width="1" height="1"><rect x="2831.50" y="1115.20" width="1.60" height="3.80" fill="#c6c6c6"/><rect x="2825.00" y="1121.40" width="4.20" height="1.60" fill="#c6c6c6"/><path d="M2832.20 1121.80 L2848.70 1121.80 L2855.20 1128.30 L2855.20 1144.00 L2832.20 1144.00 Z" fill="#6a6a6a" stroke="#c6c6c6" stroke-width="2.1"/><path d="M2848.20 1121.00 L2856.20 1129.00 L2848.20 1129.00 Z" fill="#c6c6c6"/><path d="M2860.70 1130.00 L2867.20 1136.50 L2873.70 1130.00" fill="none" stroke="#c6c6c6" stroke-width="1.8"/><rect x="2900.50" y="1112.90" width="2.20" height="37.10" fill="#c6c6c6"/><rect x="2904.70" y="1117.20" width="16.00" height="11.10" fill="#c6c6c6"/><rect x="2904.70" y="1133.00" width="27.00" height="10.00" fill="#c6c6c6"/><rect x="2975.80" y="1113.00" width="2.30" height="37.00" fill="#c6c6c6"/><rect x="2967.80" y="1117.20" width="17.80" height="11.50" fill="#c6c6c6"/><rect x="2963.50" y="1133.00" width="26.30" height="10.00" fill="#c6c6c6"/><rect x="3052.50" y="1113.00" width="2.40" height="37.00" fill="#c6c6c6"/><rect x="3034.50" y="1117.20" width="15.70" height="11.50" fill="#c6c6c6"/><rect x="3023.50" y="1133.00" width="26.70" height="10.00" fill="#c6c6c6"/><rect x="3081.00" y="1114.90" width="37.00" height="2.30" fill="#c6c6c6"/><rect x="3087.00" y="1119.20" width="10.00" height="25.70" fill="#c6c6c6"/><rect x="3100.80" y="1119.20" width="11.90" height="15.80" fill="#c6c6c6"/><rect x="3142.00" y="1128.70" width="36.00" height="2.30" fill="#c6c6c6"/><rect x="3148.00" y="1117.20" width="9.80" height="25.80" fill="#c6c6c6"/><rect x="3162.00" y="1121.20" width="12.00" height="17.80" fill="#c6c6c6"/><rect x="3203.00" y="1144.90" width="37.00" height="2.90" fill="#c6c6c6"/><rect x="3209.00" y="1117.20" width="9.80" height="25.80" fill="#c6c6c6"/><rect x="3224.00" y="1127.00" width="12.00" height="16.00" fill="#c6c6c6"/></svg>
<svg class="a" style="left:3236px;top:1179px;" width="32" height="10" viewBox="0 0 32 10"><circle cx="4.5" cy="5" r="3.6" fill="#c6c6c6"/><circle cx="15" cy="5" r="3.6" fill="#c6c6c6"/><circle cx="25.5" cy="5" r="3.6" fill="#c6c6c6"/></svg>
<div class="a" style="left:2798px;top:1202px;width:482px;height:2px;background:#4a4a4a;"></div>
<div class="a t" style="left:2818.5px;top:1240.3px;font-size:22px;line-height:22px;color:#d9d9d9;font-weight:400;">Quick Actions</div>
<div class="a" style="left:2818.5px;top:1285px;width:411px;height:39px;border:2px solid #6a6a6a;border-radius:4px;background:#525252"></div>
<div class="a t" style="left:2025.5px;width:2000px;text-align:center;top:1295.6px;font-size:21.6px;line-height:21.6px;color:#f4f4f4;font-weight:400;">Start Global Edit</div>
<div class="a" style="left:3234px;top:1285px;width:40px;height:39px;border:2px solid #6a6a6a;border-radius:4px;background:#464646"></div>
<svg class="a" style="left:3246px;top:1300px;" width="18" height="12" viewBox="0 0 18 12"><path d="M2 2 L9 9 L16 2" stroke="#d4d4d4" stroke-width="1.9" fill="none"/></svg>
<div class="a" style="left:2218px;top:766px;width:496px;height:444px;background:#535353;box-shadow:0 2px 8px rgba(0,0,0,0.45)"></div>
<div class="a" style="left:2218px;top:766px;width:496px;height:7.5px;background:#323232;"></div>
<div class="a" style="left:2218px;top:766px;width:2px;height:444px;background:#3c3c3c;"></div>
<div class="a" style="left:2712px;top:766px;width:2px;height:444px;background:#3c3c3c;"></div>
<div class="a" style="left:2351px;top:773.5px;width:361px;height:54.5px;background:#424242;"></div>
<div class="a t" style="left:2238px;top:789.3px;font-size:20.8px;line-height:20.8px;color:#f4f4f4;font-weight:700;-webkit-text-stroke:0;">Swatches</div>
<svg class="a" style="left:2630px;top:794px;" width="22" height="16" viewBox="0 0 22 16"><path d="M2 2 L8.5 8 L2 14 M11 2 L17.5 8 L11 14" stroke="#d8d8d8" stroke-width="1.7" fill="none"/></svg>
<div class="a" style="left:2665px;top:790.5px;width:1.8px;height:23px;background:#cfcfcf;"></div>
<svg class="a" style="left:2680px;top:794px;" width="22" height="16" viewBox="0 0 22 16"><rect x="0" y="0.5" width="21" height="2" fill="#d8d8d8"/><rect x="0" y="6.5" width="21" height="2" fill="#d8d8d8"/><rect x="0" y="12.5" width="21" height="2" fill="#d8d8d8"/></svg>
<svg class="a" style="left:2229px;top:840px;" width="64" height="64" viewBox="0 0 64 64"><rect x="21" y="21" width="40" height="41" fill="#2d2d2d"/><rect x="23" y="23" width="36" height="37" fill="#fff"/><rect x="32" y="33" width="16" height="16" fill="#3a3a3a"/><rect x="35" y="36" width="10" height="10" fill="#535353"/><path d="M24 59 L58 24" stroke="#ff0000" stroke-width="3"/><rect x="1" y="1" width="40" height="40" fill="#2d2d2d"/><rect x="3" y="3" width="36" height="36" fill="#fff"/><rect x="5" y="5" width="32" height="32" fill="#ff0000"/></svg>
<div class="a" style="left:2604px;top:841.5px;width:98px;height:47.5px;border:1.5px solid #4b4b4b;border-radius:5px;box-sizing:border-box"></div>
<div class="a" style="left:2654px;top:843px;width:47px;height:45px;background:#2e2e2e;border-radius:0 4px 4px 0"></div>
<svg class="a" style="left:2615px;top:851px;" width="28" height="28" viewBox="0 0 28 28"><rect x="1" y="0" width="24" height="3.5" rx="1" fill="#c8c8c8"/><rect x="1" y="8" width="24" height="3.5" rx="1" fill="#c8c8c8"/><rect x="1" y="16" width="24" height="3.5" rx="1" fill="#c8c8c8"/><rect x="1" y="24" width="24" height="3.5" rx="1" fill="#c8c8c8"/></svg>
<svg class="a" style="left:2664px;top:851px;" width="30" height="30" viewBox="0 0 30 30"><rect x="0" y="0" width="8" height="8" fill="#fff"/><rect x="0" y="10" width="8" height="8" fill="#fff"/><rect x="0" y="20" width="8" height="8" fill="#fff"/><rect x="10" y="0" width="8" height="8" fill="#fff"/><rect x="10" y="10" width="8" height="8" fill="#fff"/><rect x="10" y="20" width="8" height="8" fill="#fff"/><rect x="20" y="0" width="8" height="8" fill="#fff"/><rect x="20" y="10" width="8" height="8" fill="#fff"/><rect x="20" y="20" width="8" height="8" fill="#fff"/></svg>
<div class="a" style="left:2230.5px;top:911px;width:471px;height:242px;border:2px solid #5c5c5c;box-sizing:border-box"></div>
<svg class="a" style="left:2229px;top:910px;" width="480" height="240" viewBox="0 0 480 240"><defs><linearGradient id="sg1"><stop offset="0" stop-color="#fff"/><stop offset="1" stop-color="#000"/></linearGradient><linearGradient id="sg2"><stop offset="0" stop-color="#ff6a00"/><stop offset="1" stop-color="#e8d000"/></linearGradient><pattern id="sp" width="8" height="8" patternUnits="userSpaceOnUse"><rect width="8" height="8" fill="#a8e8ee"/><rect width="4" height="4" fill="#5fd0e0"/><rect x="4" y="4" width="4" height="4" fill="#e8f8fa"/></pattern></defs><rect x="2.599999999999909" y="3.6000000000000227" width="26" height="26" fill="#fff"/><path d="M4.599999999999909 27.600000000000023 L26.59999999999991 5.600000000000023" stroke="#ff0000" stroke-width="2.6"/><rect x="30.799999999999727" y="3.6000000000000227" width="26" height="26" fill="#f0f0f0"/><circle cx="43.79999999999973" cy="16.600000000000023" r="7" fill="none" stroke="#8a8a8a" stroke-width="1"/><circle cx="43.79999999999973" cy="16.600000000000023" r="2.2" fill="none" stroke="#8a8a8a" stroke-width="1"/><path d="M43.79999999999973 3.6000000000000227 L43.79999999999973 29.600000000000023 M30.799999999999727 16.600000000000023 L56.79999999999973 16.600000000000023" stroke="#8a8a8a" stroke-width="1"/><rect x="59.0" y="3.6000000000000227" width="26.5" height="26" fill="#ffffff"/><rect x="87.19999999999982" y="3.6000000000000227" width="26.5" height="26" fill="#000000"/><rect x="115.40000000000009" y="3.6000000000000227" width="26" height="26" fill="#fff"/><rect x="116.90000000000009" y="5.100000000000023" width="23" height="23" fill="#000"/><rect x="119.40000000000009" y="7.600000000000023" width="18" height="18" fill="#ff0000"/><rect x="143.5999999999999" y="3.6000000000000227" width="26.5" height="26" fill="#ffff00"/><rect x="171.79999999999973" y="3.6000000000000227" width="26.5" height="26" fill="#00ff00"/><rect x="200.0" y="3.6000000000000227" width="26.5" height="26" fill="#00ffff"/><rect x="228.19999999999982" y="3.6000000000000227" width="26.5" height="26" fill="#0000ff"/><rect x="256.4000000000001" y="3.6000000000000227" width="26.5" height="26" fill="#ff00ff"/><rect x="284.5999999999999" y="3.6000000000000227" width="26.5" height="26" fill="#c1272d"/><rect x="312.7999999999997" y="3.6000000000000227" width="26.5" height="26" fill="#ed1c24"/><rect x="341.0" y="3.6000000000000227" width="26.5" height="26" fill="#f15a24"/><rect x="369.1999999999998" y="3.6000000000000227" width="26.5" height="26" fill="#f7931e"/><rect x="397.4000000000001" y="3.6000000000000227" width="26.5" height="26" fill="#fbb03b"/><rect x="2.599999999999909" y="31.800000000000068" width="26.5" height="26" fill="#fcee21"/><rect x="30.799999999999727" y="31.800000000000068" width="26.5" height="26" fill="#d9e021"/><rect x="59.0" y="31.800000000000068" width="26.5" height="26" fill="#8cc63f"/><rect x="87.19999999999982" y="31.800000000000068" width="26.5" height="26" fill="#39b54a"/><rect x="115.40000000000009" y="31.800000000000068" width="26.5" height="26" fill="#009245"/><rect x="143.5999999999999" y="31.800000000000068" width="26.5" height="26" fill="#006837"/><rect x="171.79999999999973" y="31.800000000000068" width="26.5" height="26" fill="#22b573"/><rect x="200.0" y="31.800000000000068" width="26.5" height="26" fill="#00a99d"/><rect x="228.19999999999982" y="31.800000000000068" width="26.5" height="26" fill="#29abe2"/><rect x="256.4000000000001" y="31.800000000000068" width="26.5" height="26" fill="#0071bc"/><rect x="284.5999999999999" y="31.800000000000068" width="26.5" height="26" fill="#2e3192"/><rect x="312.7999999999997" y="31.800000000000068" width="26.5" height="26" fill="#1b1464"/><rect x="341.0" y="31.800000000000068" width="26.5" height="26" fill="#662d91"/><rect x="369.1999999999998" y="31.800000000000068" width="26.5" height="26" fill="#93278f"/><rect x="397.4000000000001" y="31.800000000000068" width="26.5" height="26" fill="#9e005d"/><rect x="2.599999999999909" y="60.0" width="26.5" height="26" fill="#d4145a"/><rect x="30.799999999999727" y="60.0" width="26.5" height="26" fill="#ed1e79"/><rect x="59.0" y="60.0" width="26.5" height="26" fill="#c7b299"/><rect x="87.19999999999982" y="60.0" width="26.5" height="26" fill="#998675"/><rect x="115.40000000000009" y="60.0" width="26.5" height="26" fill="#736357"/><rect x="143.5999999999999" y="60.0" width="26.5" height="26" fill="#534741"/><rect x="171.79999999999973" y="60.0" width="26.5" height="26" fill="#c69c6d"/><rect x="200.0" y="60.0" width="26.5" height="26" fill="#a67c52"/><rect x="228.19999999999982" y="60.0" width="26.5" height="26" fill="#8c6239"/><rect x="256.4000000000001" y="60.0" width="26.5" height="26" fill="#754c24"/><rect x="284.5999999999999" y="60.0" width="26.5" height="26" fill="#603813"/><rect x="312.7999999999997" y="60.0" width="26.5" height="26" fill="#42210b"/><rect x="341.0" y="60.0" width="26" height="26" fill="url(#sg1)"/><rect x="369.1999999999998" y="60.0" width="26" height="26" fill="url(#sg2)"/><rect x="397.4000000000001" y="60.0" width="26" height="26" fill="url(#sp)"/><rect x="2.599999999999909" y="88.79999999999995" width="26" height="26" fill="#1f5aa8"/><circle cx="8.599999999999909" cy="95.79999999999995" r="4" fill="none" stroke="#e8f0ff" stroke-width="1.2"/><circle cx="19.59999999999991" cy="100.79999999999995" r="5" fill="none" stroke="#e8f0ff" stroke-width="1.2"/><circle cx="11.599999999999909" cy="107.79999999999995" r="3.5" fill="none" stroke="#e8f0ff" stroke-width="1.2"/><circle cx="22.59999999999991" cy="110.79999999999995" r="3" fill="none" stroke="#e8f0ff" stroke-width="1.2"/><circle cx="16.59999999999991" cy="92.79999999999995" r="2.5" fill="none" stroke="#e8f0ff" stroke-width="1.2"/><path d="M4.699999999999818 127 L12.699999999999818 127 L15.699999999999818 130 L26.699999999999818 130 L26.699999999999818 143 L4.699999999999818 143 Z" fill="#c8c8c8"/><path d="M5.699999999999818 125 L11.699999999999818 125 L14.699999999999818 128" stroke="#c8c8c8" stroke-width="1.5" fill="none"/><rect x="30.799999999999727" y="120.79999999999995" width="26.5" height="26" fill="#66c8cc"/><rect x="59.0" y="120.79999999999995" width="26.5" height="26" fill="#8088c8"/><rect x="87.19999999999982" y="120.79999999999995" width="26.5" height="26" fill="#c09ccc"/><path d="M4.699999999999818 160 L12.699999999999818 160 L15.699999999999818 163 L26.699999999999818 163 L26.699999999999818 176 L4.699999999999818 176 Z" fill="#c8c8c8"/><path d="M5.699999999999818 158 L11.699999999999818 158 L14.699999999999818 161" stroke="#c8c8c8" stroke-width="1.5" fill="none"/><rect x="30.799999999999727" y="153" width="26.5" height="27" fill="#000000"/><rect x="59.0" y="153" width="26.5" height="27" fill="#1a1a1a"/><rect x="87.19999999999982" y="153" width="26.5" height="27" fill="#333333"/><rect x="115.40000000000009" y="153" width="26.5" height="27" fill="#4d4d4d"/><rect x="143.5999999999999" y="153" width="26.5" height="27" fill="#666666"/><rect x="171.79999999999973" y="153" width="26.5" height="27" fill="#808080"/><rect x="200.0" y="153" width="26.5" height="27" fill="#999999"/><rect x="228.19999999999982" y="153" width="26.5" height="27" fill="#b3b3b3"/><rect x="256.4000000000001" y="153" width="26.5" height="27" fill="#cccccc"/><rect x="284.5999999999999" y="153" width="26.5" height="27" fill="#e6e6e6"/><rect x="312.7999999999997" y="153" width="26.5" height="27" fill="#f2f2f2"/></svg>
<svg class="a" style="left:2678px;top:918px;" width="18" height="12" viewBox="0 0 18 12"><path d="M1 10 L8.5 3 L16 10" stroke="#5e5e5e" stroke-width="1.6" fill="none"/></svg>
<svg class="a" style="left:2678px;top:1135px;" width="18" height="12" viewBox="0 0 18 12"><path d="M1 2 L8.5 9 L16 2" stroke="#5e5e5e" stroke-width="1.6" fill="none"/></svg>
<svg class="a" style="left:2240px;top:1160px;" width="36" height="28" viewBox="0 0 36 28"><rect x="1" y="3" width="5" height="23" fill="#c6c6c6"/><rect x="8" y="1" width="5" height="25" fill="#c6c6c6"/><path d="M14 2 L18 2 L24 25 L20 25 Z" fill="#c6c6c6"/><path d="M25 21 L31 21 L28 25 Z" fill="#c6c6c6"/></svg>
<svg class="a" style="left:2292px;top:1160px;" width="32" height="28" viewBox="0 0 32 28"><path d="M5 6 L5 1 L23 1 L23 4 M12 5 L26 5 L26 26 L14 26" fill="none" stroke="#c6c6c6" stroke-width="2.2"/><path d="M1 19 L12 19 M7 14 L13 19 L7 24" stroke="#c6c6c6" stroke-width="2.6" fill="none"/><path d="M17 5 L23 5 L23 13 L20 10 L17 13 Z" fill="#c6c6c6"/></svg>
<svg class="a" style="left:2420px;top:1161px;" width="36" height="28" viewBox="0 0 36 28"><rect x="1" y="1" width="20" height="20" fill="#c6c6c6"/><rect x="4" y="4" width="4" height="4" fill="#777"/><rect x="12" y="4" width="4" height="4" fill="#777"/><rect x="8" y="8" width="4" height="4" fill="#777"/><rect x="4" y="12" width="4" height="4" fill="#777"/><rect x="12" y="12" width="4" height="4" fill="#777"/><path d="M23 20 L29 20 L26 24 Z" fill="#c6c6c6"/></svg>
<svg class="a" style="left:2476px;top:1161px;" width="26" height="26" viewBox="0 0 26 26"><rect x="1.5" y="1.5" width="21" height="21" fill="none" stroke="#c6c6c6" stroke-width="2"/><rect x="5" y="8" width="3" height="2.5" fill="#c6c6c6"/><rect x="10" y="8" width="10" height="2.5" fill="#c6c6c6"/><rect x="5" y="13" width="3" height="2.5" fill="#c6c6c6"/><rect x="10" y="13" width="10" height="2.5" fill="#c6c6c6"/><rect x="5" y="18" width="3" height="2" fill="#c6c6c6"/><rect x="10" y="18" width="10" height="2" fill="#c6c6c6"/></svg>
<svg class="a" style="left:2526px;top:1161px;" width="30" height="24" viewBox="0 0 30 24"><path d="M1 3 L9 3 L12 6 L27 6 L27 22 L1 22 Z" fill="#c6c6c6"/><path d="M2 1 L9 1 L12 4" stroke="#c6c6c6" stroke-width="1.5" fill="none"/></svg>
<svg class="a" style="left:2583px;top:1161px;" width="26" height="26" viewBox="0 0 26 26"><rect x="1.5" y="1.5" width="22" height="22" fill="none" stroke="#c6c6c6" stroke-width="2"/><path d="M12.5 7 L12.5 18 M7 12.5 L18 12.5" stroke="#c6c6c6" stroke-width="2.2"/></svg>
<svg class="a" style="left:2633px;top:1159px;" width="28" height="28" viewBox="0 0 28 28"><path d="M1 5 L26 5 M9 5 L9 2 L18 2 L18 5" stroke="#c6c6c6" stroke-width="2" fill="none"/><path d="M4 7 L6 26 L21 26 L23 7" stroke="#c6c6c6" stroke-width="2" fill="none"/><path d="M9 9 L9 23 M13.5 9 L13.5 23 M18 9 L18 23" stroke="#c6c6c6" stroke-width="2"/></svg>
<div class="a" style="left:2220px;top:1193.5px;width:492px;height:2px;background:#3a3a3a;"></div>
<div class="a" style="left:2220px;top:1208px;width:492px;height:2px;background:#3a3a3a;"></div>
<div class="a" style="left:2446px;top:1197px;width:2px;height:9px;background:#333333;"></div>
<div class="a" style="left:2450px;top:1197px;width:2px;height:9px;background:#333333;"></div>
<div class="a" style="left:2454px;top:1197px;width:2px;height:9px;background:#333333;"></div>
<div class="a" style="left:2458px;top:1197px;width:2px;height:9px;background:#333333;"></div>
<div class="a" style="left:2462px;top:1197px;width:2px;height:9px;background:#333333;"></div>
<div class="a" style="left:2466px;top:1197px;width:2px;height:9px;background:#333333;"></div>
<div class="a" style="left:2470px;top:1197px;width:2px;height:9px;background:#333333;"></div>
<div class="a" style="left:2474px;top:1197px;width:2px;height:9px;background:#333333;"></div>
<div class="a" style="left:2478px;top:1197px;width:2px;height:9px;background:#333333;"></div>
<div class="a" style="left:2482px;top:1197px;width:2px;height:9px;background:#333333;"></div>
</body></html>
